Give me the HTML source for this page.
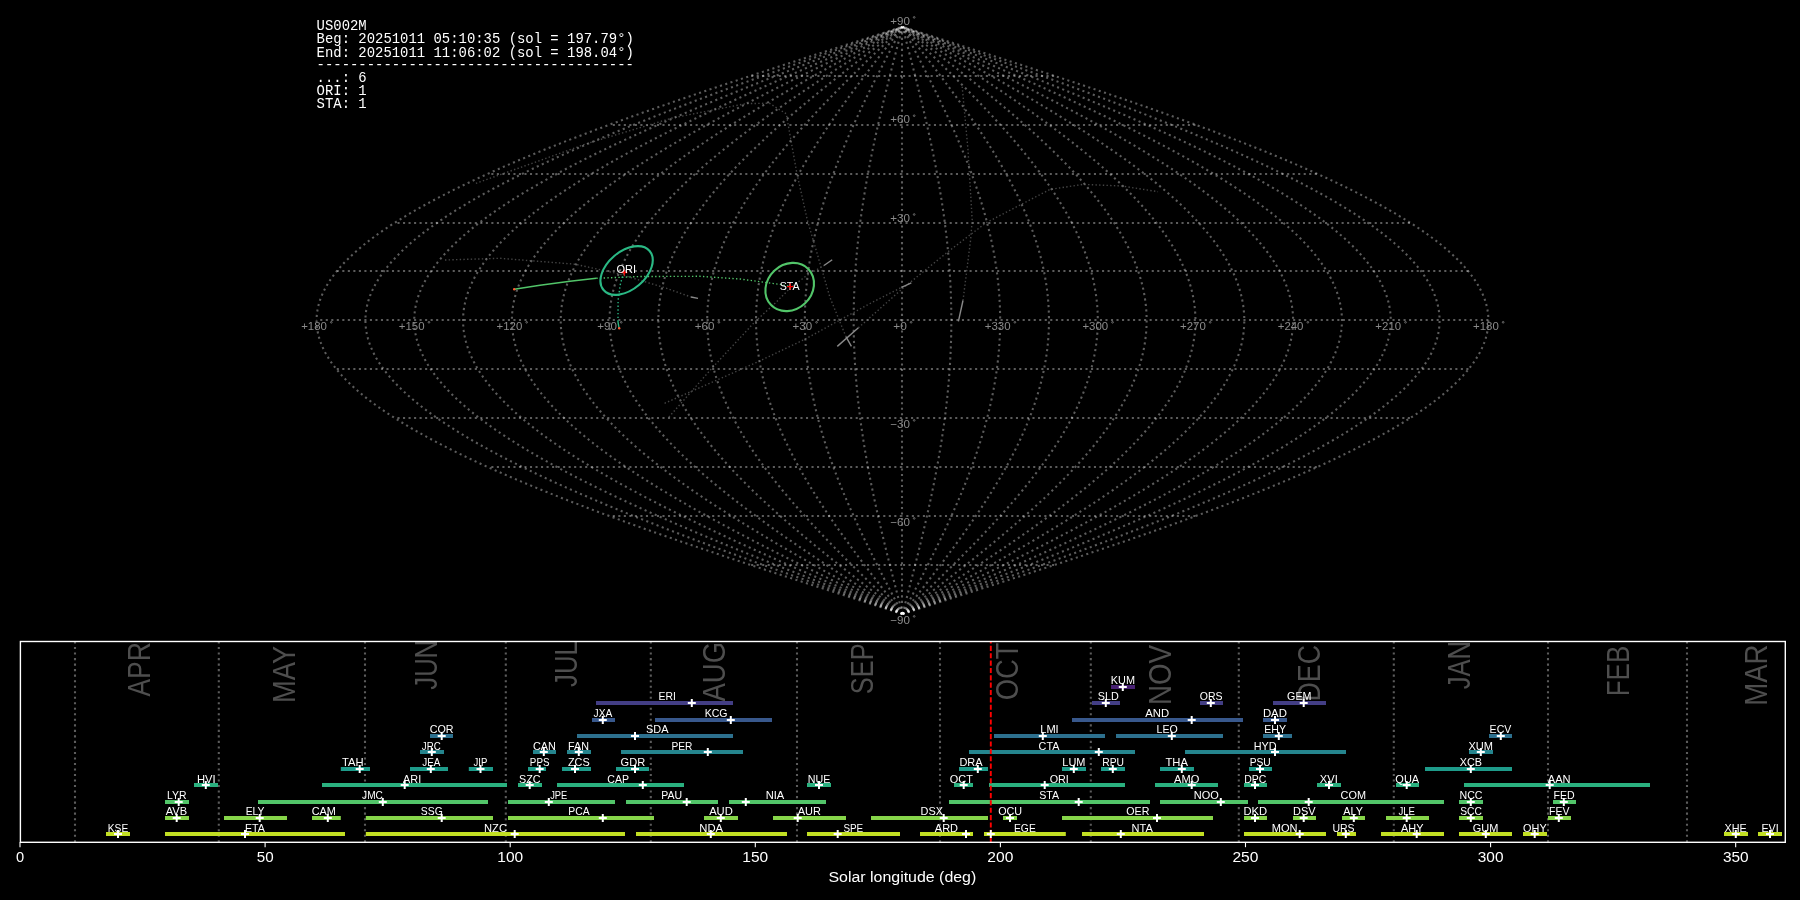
<!DOCTYPE html>
<html><head><meta charset="utf-8"><style>html,body{margin:0;padding:0;background:#000;overflow:hidden}svg{display:block;will-change:transform}</style></head>
<body><svg width="1800" height="900" viewBox="0 0 1800 900">
<rect width="1800" height="900" fill="#000"/>
<g fill="none" stroke="#ffffff" stroke-opacity="0.36" stroke-width="2.08" stroke-dasharray="2.08 3.44">
<g stroke-dashoffset="0">
<path d="M902.50 613.98 L907.61 612.35 L912.73 610.72 L917.84 609.09 L922.95 607.46 L928.06 605.83 L933.16 604.20 L938.27 602.56 L943.37 600.93 L948.47 599.30 L953.57 597.67 L958.66 596.04 L963.74 594.41 L968.83 592.78 L973.90 591.15 L978.98 589.52 L984.04 587.89 L989.10 586.25 L994.16 584.62 L999.20 582.99 L1004.24 581.36 L1009.27 579.73 L1014.30 578.10 L1019.31 576.47 L1024.32 574.84 L1029.31 573.21 L1034.30 571.58 L1039.28 569.94 L1044.24 568.31 L1049.20 566.68 L1054.14 565.05 L1059.08 563.42 L1064.00 561.79 L1068.91 560.16 L1073.80 558.53 L1078.69 556.90 L1083.56 555.27 L1088.41 553.63 L1093.25 552.00 L1098.08 550.37 L1102.89 548.74 L1107.69 547.11 L1112.47 545.48 L1117.24 543.85 L1121.98 542.22 L1126.72 540.59 L1131.43 538.96 L1136.13 537.32 L1140.81 535.69 L1145.47 534.06 L1150.12 532.43 L1154.74 530.80 L1159.34 529.17 L1163.93 527.54 L1168.50 525.91 L1173.04 524.28 L1177.57 522.65 L1182.07 521.01 L1186.55 519.38 L1191.01 517.75 L1195.45 516.12 L1199.87 514.49 L1204.26 512.86 L1208.64 511.23 L1212.98 509.60 L1217.31 507.97 L1221.61 506.34 L1225.88 504.70 L1230.14 503.07 L1234.36 501.44 L1238.56 499.81 L1242.74 498.18 L1246.89 496.55 L1251.01 494.92 L1255.11 493.29 L1259.18 491.66 L1263.22 490.03 L1267.24 488.39 L1271.22 486.76 L1275.18 485.13 L1279.11 483.50 L1283.02 481.87 L1286.89 480.24 L1290.73 478.61 L1294.55 476.98 L1298.33 475.35 L1302.09 473.71 L1305.81 472.08 L1309.51 470.45 L1313.17 468.82 L1316.80 467.19 L1320.40 465.56 L1323.97 463.93 L1327.50 462.30 L1331.01 460.67 L1334.48 459.04 L1337.91 457.40 L1341.32 455.77 L1344.69 454.14 L1348.03 452.51 L1351.33 450.88 L1354.60 449.25 L1357.84 447.62 L1361.04 445.99 L1364.20 444.36 L1367.33 442.73 L1370.43 441.09 L1373.49 439.46 L1376.51 437.83 L1379.50 436.20 L1382.45 434.57 L1385.36 432.94 L1388.24 431.31 L1391.08 429.68 L1393.88 428.05 L1396.65 426.42 L1399.38 424.78 L1402.07 423.15 L1404.72 421.52 L1407.33 419.89 L1409.91 418.26 L1412.45 416.63 L1414.95 415.00 L1417.41 413.37 L1419.83 411.74 L1422.21 410.11 L1424.55 408.47 L1426.85 406.84 L1429.11 405.21 L1431.33 403.58 L1433.51 401.95 L1435.65 400.32 L1437.75 398.69 L1439.81 397.06 L1441.83 395.43 L1443.81 393.80 L1445.74 392.16 L1447.64 390.53 L1449.49 388.90 L1451.30 387.27 L1453.07 385.64 L1454.80 384.01 L1456.49 382.38 L1458.13 380.75 L1459.73 379.12 L1461.29 377.49 L1462.81 375.85 L1464.28 374.22 L1465.71 372.59 L1467.10 370.96 L1468.44 369.33 L1469.74 367.70 L1471.00 366.07 L1472.22 364.44 L1473.39 362.81 L1474.52 361.18 L1475.60 359.54 L1476.64 357.91 L1477.64 356.28 L1478.60 354.65 L1479.51 353.02 L1480.37 351.39 L1481.19 349.76 L1481.97 348.13 L1482.71 346.50 L1483.39 344.87 L1484.04 343.23 L1484.64 341.60 L1485.20 339.97 L1485.71 338.34 L1486.18 336.71 L1486.60 335.08 L1486.98 333.45 L1487.31 331.82 L1487.60 330.19 L1487.85 328.56 L1488.05 326.92 L1488.21 325.29 L1488.32 323.66 L1488.38 322.03 L1488.41 320.40 L1488.38 318.77 L1488.32 317.14 L1488.21 315.51 L1488.05 313.88 L1487.85 312.24 L1487.60 310.61 L1487.31 308.98 L1486.98 307.35 L1486.60 305.72 L1486.18 304.09 L1485.71 302.46 L1485.20 300.83 L1484.64 299.20 L1484.04 297.57 L1483.39 295.93 L1482.71 294.30 L1481.97 292.67 L1481.19 291.04 L1480.37 289.41 L1479.51 287.78 L1478.60 286.15 L1477.64 284.52 L1476.64 282.89 L1475.60 281.26 L1474.52 279.62 L1473.39 277.99 L1472.22 276.36 L1471.00 274.73 L1469.74 273.10 L1468.44 271.47 L1467.10 269.84 L1465.71 268.21 L1464.28 266.58 L1462.81 264.95 L1461.29 263.31 L1459.73 261.68 L1458.13 260.05 L1456.49 258.42 L1454.80 256.79 L1453.07 255.16 L1451.30 253.53 L1449.49 251.90 L1447.64 250.27 L1445.74 248.64 L1443.81 247.00 L1441.83 245.37 L1439.81 243.74 L1437.75 242.11 L1435.65 240.48 L1433.51 238.85 L1431.33 237.22 L1429.11 235.59 L1426.85 233.96 L1424.55 232.33 L1422.21 230.69 L1419.83 229.06 L1417.41 227.43 L1414.95 225.80 L1412.45 224.17 L1409.91 222.54 L1407.33 220.91 L1404.72 219.28 L1402.07 217.65 L1399.38 216.02 L1396.65 214.38 L1393.88 212.75 L1391.08 211.12 L1388.24 209.49 L1385.36 207.86 L1382.45 206.23 L1379.50 204.60 L1376.51 202.97 L1373.49 201.34 L1370.43 199.71 L1367.33 198.07 L1364.20 196.44 L1361.04 194.81 L1357.84 193.18 L1354.60 191.55 L1351.33 189.92 L1348.03 188.29 L1344.69 186.66 L1341.32 185.03 L1337.91 183.40 L1334.48 181.76 L1331.01 180.13 L1327.50 178.50 L1323.97 176.87 L1320.40 175.24 L1316.80 173.61 L1313.17 171.98 L1309.51 170.35 L1305.81 168.72 L1302.09 167.09 L1298.33 165.45 L1294.55 163.82 L1290.73 162.19 L1286.89 160.56 L1283.02 158.93 L1279.11 157.30 L1275.18 155.67 L1271.22 154.04 L1267.24 152.41 L1263.22 150.77 L1259.18 149.14 L1255.11 147.51 L1251.01 145.88 L1246.89 144.25 L1242.74 142.62 L1238.56 140.99 L1234.36 139.36 L1230.14 137.73 L1225.88 136.10 L1221.61 134.46 L1217.31 132.83 L1212.98 131.20 L1208.64 129.57 L1204.26 127.94 L1199.87 126.31 L1195.45 124.68 L1191.01 123.05 L1186.55 121.42 L1182.07 119.79 L1177.57 118.15 L1173.04 116.52 L1168.50 114.89 L1163.93 113.26 L1159.34 111.63 L1154.74 110.00 L1150.12 108.37 L1145.47 106.74 L1140.81 105.11 L1136.13 103.48 L1131.43 101.84 L1126.72 100.21 L1121.98 98.58 L1117.24 96.95 L1112.47 95.32 L1107.69 93.69 L1102.89 92.06 L1098.08 90.43 L1093.25 88.80 L1088.41 87.17 L1083.56 85.53 L1078.69 83.90 L1073.80 82.27 L1068.91 80.64 L1064.00 79.01 L1059.08 77.38 L1054.14 75.75 L1049.20 74.12 L1044.24 72.49 L1039.28 70.86 L1034.30 69.22 L1029.31 67.59 L1024.32 65.96 L1019.31 64.33 L1014.30 62.70 L1009.27 61.07 L1004.24 59.44 L999.20 57.81 L994.16 56.18 L989.10 54.55 L984.04 52.91 L978.98 51.28 L973.90 49.65 L968.83 48.02 L963.74 46.39 L958.66 44.76 L953.57 43.13 L948.47 41.50 L943.37 39.87 L938.27 38.24 L933.16 36.60 L928.06 34.97 L922.95 33.34 L917.84 31.71 L912.73 30.08 L907.61 28.45 L902.50 26.82"/>
<path d="M902.50 613.98 L907.19 612.35 L911.87 610.72 L916.56 609.09 L921.24 607.46 L925.93 605.83 L930.61 604.20 L935.29 602.56 L939.96 600.93 L944.64 599.30 L949.31 597.67 L953.98 596.04 L958.64 594.41 L963.30 592.78 L967.95 591.15 L972.60 589.52 L977.25 587.89 L981.89 586.25 L986.52 584.62 L991.14 582.99 L995.76 581.36 L1000.38 579.73 L1004.98 578.10 L1009.58 576.47 L1014.17 574.84 L1018.75 573.21 L1023.32 571.58 L1027.88 569.94 L1032.43 568.31 L1036.97 566.68 L1041.51 565.05 L1046.03 563.42 L1050.54 561.79 L1055.04 560.16 L1059.53 558.53 L1064.00 556.90 L1068.47 555.27 L1072.92 553.63 L1077.36 552.00 L1081.78 550.37 L1086.19 548.74 L1090.59 547.11 L1094.97 545.48 L1099.34 543.85 L1103.69 542.22 L1108.03 540.59 L1112.35 538.96 L1116.66 537.32 L1120.95 535.69 L1125.22 534.06 L1129.48 532.43 L1133.72 530.80 L1137.94 529.17 L1142.14 527.54 L1146.33 525.91 L1150.50 524.28 L1154.64 522.65 L1158.77 521.01 L1162.88 519.38 L1166.97 517.75 L1171.04 516.12 L1175.09 514.49 L1179.12 512.86 L1183.12 511.23 L1187.11 509.60 L1191.07 507.97 L1195.02 506.34 L1198.94 504.70 L1202.83 503.07 L1206.71 501.44 L1210.56 499.81 L1214.38 498.18 L1218.19 496.55 L1221.97 494.92 L1225.72 493.29 L1229.45 491.66 L1233.16 490.03 L1236.84 488.39 L1240.50 486.76 L1244.13 485.13 L1247.73 483.50 L1251.31 481.87 L1254.86 480.24 L1258.38 478.61 L1261.88 476.98 L1265.35 475.35 L1268.79 473.71 L1272.20 472.08 L1275.59 470.45 L1278.95 468.82 L1282.27 467.19 L1285.57 465.56 L1288.84 463.93 L1292.09 462.30 L1295.30 460.67 L1298.48 459.04 L1301.63 457.40 L1304.75 455.77 L1307.84 454.14 L1310.90 452.51 L1313.93 450.88 L1316.93 449.25 L1319.89 447.62 L1322.82 445.99 L1325.73 444.36 L1328.60 442.73 L1331.43 441.09 L1334.24 439.46 L1337.01 437.83 L1339.75 436.20 L1342.45 434.57 L1345.12 432.94 L1347.76 431.31 L1350.36 429.68 L1352.93 428.05 L1355.47 426.42 L1357.97 424.78 L1360.44 423.15 L1362.87 421.52 L1365.27 419.89 L1367.63 418.26 L1369.95 416.63 L1372.24 415.00 L1374.50 413.37 L1376.71 411.74 L1378.90 410.11 L1381.04 408.47 L1383.15 406.84 L1385.23 405.21 L1387.26 403.58 L1389.26 401.95 L1391.22 400.32 L1393.15 398.69 L1395.04 397.06 L1396.89 395.43 L1398.70 393.80 L1400.47 392.16 L1402.21 390.53 L1403.91 388.90 L1405.57 387.27 L1407.19 385.64 L1408.78 384.01 L1410.32 382.38 L1411.83 380.75 L1413.29 379.12 L1414.72 377.49 L1416.11 375.85 L1417.46 374.22 L1418.78 372.59 L1420.05 370.96 L1421.28 369.33 L1422.47 367.70 L1423.63 366.07 L1424.74 364.44 L1425.82 362.81 L1426.85 361.18 L1427.84 359.54 L1428.80 357.91 L1429.71 356.28 L1430.59 354.65 L1431.42 353.02 L1432.22 351.39 L1432.97 349.76 L1433.68 348.13 L1434.35 346.50 L1434.99 344.87 L1435.58 343.23 L1436.13 341.60 L1436.64 339.97 L1437.11 338.34 L1437.54 336.71 L1437.93 335.08 L1438.27 333.45 L1438.58 331.82 L1438.85 330.19 L1439.07 328.56 L1439.25 326.92 L1439.40 325.29 L1439.50 323.66 L1439.56 322.03 L1439.58 320.40 L1439.56 318.77 L1439.50 317.14 L1439.40 315.51 L1439.25 313.88 L1439.07 312.24 L1438.85 310.61 L1438.58 308.98 L1438.27 307.35 L1437.93 305.72 L1437.54 304.09 L1437.11 302.46 L1436.64 300.83 L1436.13 299.20 L1435.58 297.57 L1434.99 295.93 L1434.35 294.30 L1433.68 292.67 L1432.97 291.04 L1432.22 289.41 L1431.42 287.78 L1430.59 286.15 L1429.71 284.52 L1428.80 282.89 L1427.84 281.26 L1426.85 279.62 L1425.82 277.99 L1424.74 276.36 L1423.63 274.73 L1422.47 273.10 L1421.28 271.47 L1420.05 269.84 L1418.78 268.21 L1417.46 266.58 L1416.11 264.95 L1414.72 263.31 L1413.29 261.68 L1411.83 260.05 L1410.32 258.42 L1408.78 256.79 L1407.19 255.16 L1405.57 253.53 L1403.91 251.90 L1402.21 250.27 L1400.47 248.64 L1398.70 247.00 L1396.89 245.37 L1395.04 243.74 L1393.15 242.11 L1391.22 240.48 L1389.26 238.85 L1387.26 237.22 L1385.23 235.59 L1383.15 233.96 L1381.04 232.33 L1378.90 230.69 L1376.71 229.06 L1374.50 227.43 L1372.24 225.80 L1369.95 224.17 L1367.63 222.54 L1365.27 220.91 L1362.87 219.28 L1360.44 217.65 L1357.97 216.02 L1355.47 214.38 L1352.93 212.75 L1350.36 211.12 L1347.76 209.49 L1345.12 207.86 L1342.45 206.23 L1339.75 204.60 L1337.01 202.97 L1334.24 201.34 L1331.43 199.71 L1328.60 198.07 L1325.73 196.44 L1322.82 194.81 L1319.89 193.18 L1316.93 191.55 L1313.93 189.92 L1310.90 188.29 L1307.84 186.66 L1304.75 185.03 L1301.63 183.40 L1298.48 181.76 L1295.30 180.13 L1292.09 178.50 L1288.84 176.87 L1285.57 175.24 L1282.27 173.61 L1278.95 171.98 L1275.59 170.35 L1272.20 168.72 L1268.79 167.09 L1265.35 165.45 L1261.88 163.82 L1258.38 162.19 L1254.86 160.56 L1251.31 158.93 L1247.73 157.30 L1244.13 155.67 L1240.50 154.04 L1236.84 152.41 L1233.16 150.77 L1229.45 149.14 L1225.72 147.51 L1221.97 145.88 L1218.19 144.25 L1214.38 142.62 L1210.56 140.99 L1206.71 139.36 L1202.83 137.73 L1198.94 136.10 L1195.02 134.46 L1191.07 132.83 L1187.11 131.20 L1183.12 129.57 L1179.12 127.94 L1175.09 126.31 L1171.04 124.68 L1166.97 123.05 L1162.88 121.42 L1158.77 119.79 L1154.64 118.15 L1150.50 116.52 L1146.33 114.89 L1142.14 113.26 L1137.94 111.63 L1133.72 110.00 L1129.48 108.37 L1125.22 106.74 L1120.95 105.11 L1116.66 103.48 L1112.35 101.84 L1108.03 100.21 L1103.69 98.58 L1099.34 96.95 L1094.97 95.32 L1090.59 93.69 L1086.19 92.06 L1081.78 90.43 L1077.36 88.80 L1072.92 87.17 L1068.47 85.53 L1064.00 83.90 L1059.53 82.27 L1055.04 80.64 L1050.54 79.01 L1046.03 77.38 L1041.51 75.75 L1036.97 74.12 L1032.43 72.49 L1027.88 70.86 L1023.32 69.22 L1018.75 67.59 L1014.17 65.96 L1009.58 64.33 L1004.98 62.70 L1000.38 61.07 L995.76 59.44 L991.14 57.81 L986.52 56.18 L981.89 54.55 L977.25 52.91 L972.60 51.28 L967.95 49.65 L963.30 48.02 L958.64 46.39 L953.98 44.76 L949.31 43.13 L944.64 41.50 L939.96 39.87 L935.29 38.24 L930.61 36.60 L925.93 34.97 L921.24 33.34 L916.56 31.71 L911.87 30.08 L907.19 28.45 L902.50 26.82"/>
<path d="M902.50 613.98 L906.76 612.35 L911.02 610.72 L915.28 609.09 L919.54 607.46 L923.80 605.83 L928.05 604.20 L932.31 602.56 L936.56 600.93 L940.81 599.30 L945.05 597.67 L949.30 596.04 L953.54 594.41 L957.77 592.78 L962.00 591.15 L966.23 589.52 L970.45 587.89 L974.67 586.25 L978.88 584.62 L983.09 582.99 L987.28 581.36 L991.48 579.73 L995.66 578.10 L999.84 576.47 L1004.01 574.84 L1008.18 573.21 L1012.33 571.58 L1016.48 569.94 L1020.62 568.31 L1024.75 566.68 L1028.87 565.05 L1032.98 563.42 L1037.08 561.79 L1041.17 560.16 L1045.25 558.53 L1049.32 556.90 L1053.38 555.27 L1057.43 553.63 L1061.46 552.00 L1065.48 550.37 L1069.49 548.74 L1073.49 547.11 L1077.48 545.48 L1081.45 543.85 L1085.40 542.22 L1089.35 540.59 L1093.28 538.96 L1097.19 537.32 L1101.09 535.69 L1104.98 534.06 L1108.85 532.43 L1112.70 530.80 L1116.54 529.17 L1120.36 527.54 L1124.16 525.91 L1127.95 524.28 L1131.72 522.65 L1135.48 521.01 L1139.21 519.38 L1142.93 517.75 L1146.63 516.12 L1150.31 514.49 L1153.97 512.86 L1157.61 511.23 L1161.24 509.60 L1164.84 507.97 L1168.42 506.34 L1171.99 504.70 L1175.53 503.07 L1179.05 501.44 L1182.55 499.81 L1186.03 498.18 L1189.49 496.55 L1192.93 494.92 L1196.34 493.29 L1199.73 491.66 L1203.10 490.03 L1206.45 488.39 L1209.77 486.76 L1213.07 485.13 L1216.34 483.50 L1219.60 481.87 L1222.82 480.24 L1226.03 478.61 L1229.21 476.98 L1232.36 475.35 L1235.49 473.71 L1238.59 472.08 L1241.67 470.45 L1244.72 468.82 L1247.75 467.19 L1250.75 465.56 L1253.72 463.93 L1256.67 462.30 L1259.59 460.67 L1262.48 459.04 L1265.34 457.40 L1268.18 455.77 L1270.99 454.14 L1273.77 452.51 L1276.53 450.88 L1279.25 449.25 L1281.95 447.62 L1284.61 445.99 L1287.25 444.36 L1289.86 442.73 L1292.44 441.09 L1294.99 439.46 L1297.51 437.83 L1300.00 436.20 L1302.46 434.57 L1304.88 432.94 L1307.28 431.31 L1309.65 429.68 L1311.99 428.05 L1314.29 426.42 L1316.56 424.78 L1318.81 423.15 L1321.02 421.52 L1323.20 419.89 L1325.34 418.26 L1327.46 416.63 L1329.54 415.00 L1331.59 413.37 L1333.60 411.74 L1335.59 410.11 L1337.54 408.47 L1339.46 406.84 L1341.34 405.21 L1343.19 403.58 L1345.01 401.95 L1346.79 400.32 L1348.54 398.69 L1350.26 397.06 L1351.94 395.43 L1353.59 393.80 L1355.20 392.16 L1356.78 390.53 L1358.33 388.90 L1359.84 387.27 L1361.31 385.64 L1362.75 384.01 L1364.15 382.38 L1365.52 380.75 L1366.86 379.12 L1368.16 377.49 L1369.42 375.85 L1370.65 374.22 L1371.84 372.59 L1373.00 370.96 L1374.12 369.33 L1375.20 367.70 L1376.25 366.07 L1377.27 364.44 L1378.24 362.81 L1379.18 361.18 L1380.09 359.54 L1380.95 357.91 L1381.79 356.28 L1382.58 354.65 L1383.34 353.02 L1384.06 351.39 L1384.74 349.76 L1385.39 348.13 L1386.00 346.50 L1386.58 344.87 L1387.12 343.23 L1387.62 341.60 L1388.08 339.97 L1388.51 338.34 L1388.90 336.71 L1389.25 335.08 L1389.57 333.45 L1389.85 331.82 L1390.09 330.19 L1390.29 328.56 L1390.46 326.92 L1390.59 325.29 L1390.68 323.66 L1390.74 322.03 L1390.76 320.40 L1390.74 318.77 L1390.68 317.14 L1390.59 315.51 L1390.46 313.88 L1390.29 312.24 L1390.09 310.61 L1389.85 308.98 L1389.57 307.35 L1389.25 305.72 L1388.90 304.09 L1388.51 302.46 L1388.08 300.83 L1387.62 299.20 L1387.12 297.57 L1386.58 295.93 L1386.00 294.30 L1385.39 292.67 L1384.74 291.04 L1384.06 289.41 L1383.34 287.78 L1382.58 286.15 L1381.79 284.52 L1380.95 282.89 L1380.09 281.26 L1379.18 279.62 L1378.24 277.99 L1377.27 276.36 L1376.25 274.73 L1375.20 273.10 L1374.12 271.47 L1373.00 269.84 L1371.84 268.21 L1370.65 266.58 L1369.42 264.95 L1368.16 263.31 L1366.86 261.68 L1365.52 260.05 L1364.15 258.42 L1362.75 256.79 L1361.31 255.16 L1359.84 253.53 L1358.33 251.90 L1356.78 250.27 L1355.20 248.64 L1353.59 247.00 L1351.94 245.37 L1350.26 243.74 L1348.54 242.11 L1346.79 240.48 L1345.01 238.85 L1343.19 237.22 L1341.34 235.59 L1339.46 233.96 L1337.54 232.33 L1335.59 230.69 L1333.60 229.06 L1331.59 227.43 L1329.54 225.80 L1327.46 224.17 L1325.34 222.54 L1323.20 220.91 L1321.02 219.28 L1318.81 217.65 L1316.56 216.02 L1314.29 214.38 L1311.99 212.75 L1309.65 211.12 L1307.28 209.49 L1304.88 207.86 L1302.46 206.23 L1300.00 204.60 L1297.51 202.97 L1294.99 201.34 L1292.44 199.71 L1289.86 198.07 L1287.25 196.44 L1284.61 194.81 L1281.95 193.18 L1279.25 191.55 L1276.53 189.92 L1273.77 188.29 L1270.99 186.66 L1268.18 185.03 L1265.34 183.40 L1262.48 181.76 L1259.59 180.13 L1256.67 178.50 L1253.72 176.87 L1250.75 175.24 L1247.75 173.61 L1244.72 171.98 L1241.67 170.35 L1238.59 168.72 L1235.49 167.09 L1232.36 165.45 L1229.21 163.82 L1226.03 162.19 L1222.82 160.56 L1219.60 158.93 L1216.34 157.30 L1213.07 155.67 L1209.77 154.04 L1206.45 152.41 L1203.10 150.77 L1199.73 149.14 L1196.34 147.51 L1192.93 145.88 L1189.49 144.25 L1186.03 142.62 L1182.55 140.99 L1179.05 139.36 L1175.53 137.73 L1171.99 136.10 L1168.42 134.46 L1164.84 132.83 L1161.24 131.20 L1157.61 129.57 L1153.97 127.94 L1150.31 126.31 L1146.63 124.68 L1142.93 123.05 L1139.21 121.42 L1135.48 119.79 L1131.72 118.15 L1127.95 116.52 L1124.16 114.89 L1120.36 113.26 L1116.54 111.63 L1112.70 110.00 L1108.85 108.37 L1104.98 106.74 L1101.09 105.11 L1097.19 103.48 L1093.28 101.84 L1089.35 100.21 L1085.40 98.58 L1081.45 96.95 L1077.48 95.32 L1073.49 93.69 L1069.49 92.06 L1065.48 90.43 L1061.46 88.80 L1057.43 87.17 L1053.38 85.53 L1049.32 83.90 L1045.25 82.27 L1041.17 80.64 L1037.08 79.01 L1032.98 77.38 L1028.87 75.75 L1024.75 74.12 L1020.62 72.49 L1016.48 70.86 L1012.33 69.22 L1008.18 67.59 L1004.01 65.96 L999.84 64.33 L995.66 62.70 L991.48 61.07 L987.28 59.44 L983.09 57.81 L978.88 56.18 L974.67 54.55 L970.45 52.91 L966.23 51.28 L962.00 49.65 L957.77 48.02 L953.54 46.39 L949.30 44.76 L945.05 43.13 L940.81 41.50 L936.56 39.87 L932.31 38.24 L928.05 36.60 L923.80 34.97 L919.54 33.34 L915.28 31.71 L911.02 30.08 L906.76 28.45 L902.50 26.82"/>
<path d="M902.50 613.98 L906.33 612.35 L910.17 610.72 L914.00 609.09 L917.84 607.46 L921.67 605.83 L925.50 604.20 L929.33 602.56 L933.15 600.93 L936.98 599.30 L940.80 597.67 L944.62 596.04 L948.43 594.41 L952.24 592.78 L956.05 591.15 L959.86 589.52 L963.66 587.89 L967.45 586.25 L971.24 584.62 L975.03 582.99 L978.81 581.36 L982.58 579.73 L986.35 578.10 L990.11 576.47 L993.86 574.84 L997.61 573.21 L1001.35 571.58 L1005.08 569.94 L1008.81 568.31 L1012.52 566.68 L1016.23 565.05 L1019.93 563.42 L1023.62 561.79 L1027.30 560.16 L1030.98 558.53 L1034.64 556.90 L1038.29 555.27 L1041.93 553.63 L1045.56 552.00 L1049.18 550.37 L1052.79 548.74 L1056.39 547.11 L1059.98 545.48 L1063.55 543.85 L1067.11 542.22 L1070.66 540.59 L1074.20 538.96 L1077.72 537.32 L1081.23 535.69 L1084.73 534.06 L1088.21 532.43 L1091.68 530.80 L1095.13 529.17 L1098.57 527.54 L1102.00 525.91 L1105.41 524.28 L1108.80 522.65 L1112.18 521.01 L1115.54 519.38 L1118.89 517.75 L1122.22 516.12 L1125.53 514.49 L1128.82 512.86 L1132.10 511.23 L1135.36 509.60 L1138.61 507.97 L1141.83 506.34 L1145.04 504.70 L1148.23 503.07 L1151.40 501.44 L1154.55 499.81 L1157.68 498.18 L1160.79 496.55 L1163.88 494.92 L1166.96 493.29 L1170.01 491.66 L1173.04 490.03 L1176.05 488.39 L1179.04 486.76 L1182.01 485.13 L1184.96 483.50 L1187.89 481.87 L1190.79 480.24 L1193.68 478.61 L1196.54 476.98 L1199.37 475.35 L1202.19 473.71 L1204.98 472.08 L1207.75 470.45 L1210.50 468.82 L1213.22 467.19 L1215.92 465.56 L1218.60 463.93 L1221.25 462.30 L1223.88 460.67 L1226.48 459.04 L1229.06 457.40 L1231.61 455.77 L1234.14 454.14 L1236.65 452.51 L1239.12 450.88 L1241.58 449.25 L1244.00 447.62 L1246.40 445.99 L1248.78 444.36 L1251.12 442.73 L1253.44 441.09 L1255.74 439.46 L1258.01 437.83 L1260.25 436.20 L1262.46 434.57 L1264.65 432.94 L1266.80 431.31 L1268.93 429.68 L1271.04 428.05 L1273.11 426.42 L1275.16 424.78 L1277.18 423.15 L1279.17 421.52 L1281.13 419.89 L1283.06 418.26 L1284.96 416.63 L1286.83 415.00 L1288.68 413.37 L1290.49 411.74 L1292.28 410.11 L1294.04 408.47 L1295.76 406.84 L1297.46 405.21 L1299.12 403.58 L1300.76 401.95 L1302.36 400.32 L1303.94 398.69 L1305.48 397.06 L1307.00 395.43 L1308.48 393.80 L1309.93 392.16 L1311.35 390.53 L1312.74 388.90 L1314.10 387.27 L1315.43 385.64 L1316.73 384.01 L1317.99 382.38 L1319.22 380.75 L1320.42 379.12 L1321.59 377.49 L1322.73 375.85 L1323.83 374.22 L1324.91 372.59 L1325.95 370.96 L1326.96 369.33 L1327.93 367.70 L1328.88 366.07 L1329.79 364.44 L1330.67 362.81 L1331.51 361.18 L1332.33 359.54 L1333.11 357.91 L1333.86 356.28 L1334.57 354.65 L1335.25 353.02 L1335.90 351.39 L1336.52 349.76 L1337.10 348.13 L1337.65 346.50 L1338.17 344.87 L1338.65 343.23 L1339.11 341.60 L1339.52 339.97 L1339.91 338.34 L1340.26 336.71 L1340.58 335.08 L1340.86 333.45 L1341.11 331.82 L1341.33 330.19 L1341.51 328.56 L1341.66 326.92 L1341.78 325.29 L1341.86 323.66 L1341.91 322.03 L1341.93 320.40 L1341.91 318.77 L1341.86 317.14 L1341.78 315.51 L1341.66 313.88 L1341.51 312.24 L1341.33 310.61 L1341.11 308.98 L1340.86 307.35 L1340.58 305.72 L1340.26 304.09 L1339.91 302.46 L1339.52 300.83 L1339.11 299.20 L1338.65 297.57 L1338.17 295.93 L1337.65 294.30 L1337.10 292.67 L1336.52 291.04 L1335.90 289.41 L1335.25 287.78 L1334.57 286.15 L1333.86 284.52 L1333.11 282.89 L1332.33 281.26 L1331.51 279.62 L1330.67 277.99 L1329.79 276.36 L1328.88 274.73 L1327.93 273.10 L1326.96 271.47 L1325.95 269.84 L1324.91 268.21 L1323.83 266.58 L1322.73 264.95 L1321.59 263.31 L1320.42 261.68 L1319.22 260.05 L1317.99 258.42 L1316.73 256.79 L1315.43 255.16 L1314.10 253.53 L1312.74 251.90 L1311.35 250.27 L1309.93 248.64 L1308.48 247.00 L1307.00 245.37 L1305.48 243.74 L1303.94 242.11 L1302.36 240.48 L1300.76 238.85 L1299.12 237.22 L1297.46 235.59 L1295.76 233.96 L1294.04 232.33 L1292.28 230.69 L1290.49 229.06 L1288.68 227.43 L1286.83 225.80 L1284.96 224.17 L1283.06 222.54 L1281.13 220.91 L1279.17 219.28 L1277.18 217.65 L1275.16 216.02 L1273.11 214.38 L1271.04 212.75 L1268.93 211.12 L1266.80 209.49 L1264.65 207.86 L1262.46 206.23 L1260.25 204.60 L1258.01 202.97 L1255.74 201.34 L1253.44 199.71 L1251.12 198.07 L1248.78 196.44 L1246.40 194.81 L1244.00 193.18 L1241.58 191.55 L1239.12 189.92 L1236.65 188.29 L1234.14 186.66 L1231.61 185.03 L1229.06 183.40 L1226.48 181.76 L1223.88 180.13 L1221.25 178.50 L1218.60 176.87 L1215.92 175.24 L1213.22 173.61 L1210.50 171.98 L1207.75 170.35 L1204.98 168.72 L1202.19 167.09 L1199.37 165.45 L1196.54 163.82 L1193.68 162.19 L1190.79 160.56 L1187.89 158.93 L1184.96 157.30 L1182.01 155.67 L1179.04 154.04 L1176.05 152.41 L1173.04 150.77 L1170.01 149.14 L1166.96 147.51 L1163.88 145.88 L1160.79 144.25 L1157.68 142.62 L1154.55 140.99 L1151.40 139.36 L1148.23 137.73 L1145.04 136.10 L1141.83 134.46 L1138.61 132.83 L1135.36 131.20 L1132.10 129.57 L1128.82 127.94 L1125.53 126.31 L1122.22 124.68 L1118.89 123.05 L1115.54 121.42 L1112.18 119.79 L1108.80 118.15 L1105.41 116.52 L1102.00 114.89 L1098.57 113.26 L1095.13 111.63 L1091.68 110.00 L1088.21 108.37 L1084.73 106.74 L1081.23 105.11 L1077.72 103.48 L1074.20 101.84 L1070.66 100.21 L1067.11 98.58 L1063.55 96.95 L1059.98 95.32 L1056.39 93.69 L1052.79 92.06 L1049.18 90.43 L1045.56 88.80 L1041.93 87.17 L1038.29 85.53 L1034.64 83.90 L1030.98 82.27 L1027.30 80.64 L1023.62 79.01 L1019.93 77.38 L1016.23 75.75 L1012.52 74.12 L1008.81 72.49 L1005.08 70.86 L1001.35 69.22 L997.61 67.59 L993.86 65.96 L990.11 64.33 L986.35 62.70 L982.58 61.07 L978.81 59.44 L975.03 57.81 L971.24 56.18 L967.45 54.55 L963.66 52.91 L959.86 51.28 L956.05 49.65 L952.24 48.02 L948.43 46.39 L944.62 44.76 L940.80 43.13 L936.98 41.50 L933.15 39.87 L929.33 38.24 L925.50 36.60 L921.67 34.97 L917.84 33.34 L914.00 31.71 L910.17 30.08 L906.33 28.45 L902.50 26.82"/>
<path d="M902.50 613.98 L905.91 612.35 L909.32 610.72 L912.72 609.09 L916.13 607.46 L919.54 605.83 L922.94 604.20 L926.35 602.56 L929.75 600.93 L933.15 599.30 L936.54 597.67 L939.94 596.04 L943.33 594.41 L946.72 592.78 L950.10 591.15 L953.48 589.52 L956.86 587.89 L960.24 586.25 L963.60 584.62 L966.97 582.99 L970.33 581.36 L973.68 579.73 L977.03 578.10 L980.37 576.47 L983.71 574.84 L987.04 573.21 L990.37 571.58 L993.68 569.94 L997.00 568.31 L1000.30 566.68 L1003.60 565.05 L1006.88 563.42 L1010.17 561.79 L1013.44 560.16 L1016.70 558.53 L1019.96 556.90 L1023.20 555.27 L1026.44 553.63 L1029.67 552.00 L1032.89 550.37 L1036.09 548.74 L1039.29 547.11 L1042.48 545.48 L1045.66 543.85 L1048.82 542.22 L1051.98 540.59 L1055.12 538.96 L1058.25 537.32 L1061.37 535.69 L1064.48 534.06 L1067.58 532.43 L1070.66 530.80 L1073.73 529.17 L1076.79 527.54 L1079.83 525.91 L1082.86 524.28 L1085.88 522.65 L1088.88 521.01 L1091.87 519.38 L1094.84 517.75 L1097.80 516.12 L1100.75 514.49 L1103.68 512.86 L1106.59 511.23 L1109.49 509.60 L1112.37 507.97 L1115.24 506.34 L1118.09 504.70 L1120.92 503.07 L1123.74 501.44 L1126.54 499.81 L1129.33 498.18 L1132.09 496.55 L1134.84 494.92 L1137.57 493.29 L1140.29 491.66 L1142.98 490.03 L1145.66 488.39 L1148.32 486.76 L1150.96 485.13 L1153.58 483.50 L1156.18 481.87 L1158.76 480.24 L1161.32 478.61 L1163.87 476.98 L1166.39 475.35 L1168.89 473.71 L1171.37 472.08 L1173.84 470.45 L1176.28 468.82 L1178.70 467.19 L1181.10 465.56 L1183.48 463.93 L1185.83 462.30 L1188.17 460.67 L1190.48 459.04 L1192.78 457.40 L1195.05 455.77 L1197.29 454.14 L1199.52 452.51 L1201.72 450.88 L1203.90 449.25 L1206.06 447.62 L1208.19 445.99 L1210.30 444.36 L1212.39 442.73 L1214.45 441.09 L1216.49 439.46 L1218.51 437.83 L1220.50 436.20 L1222.46 434.57 L1224.41 432.94 L1226.33 431.31 L1228.22 429.68 L1230.09 428.05 L1231.93 426.42 L1233.75 424.78 L1235.55 423.15 L1237.31 421.52 L1239.06 419.89 L1240.77 418.26 L1242.47 416.63 L1244.13 415.00 L1245.77 413.37 L1247.38 411.74 L1248.97 410.11 L1250.53 408.47 L1252.07 406.84 L1253.57 405.21 L1255.05 403.58 L1256.51 401.95 L1257.94 400.32 L1259.34 398.69 L1260.71 397.06 L1262.05 395.43 L1263.37 393.80 L1264.66 392.16 L1265.93 390.53 L1267.16 388.90 L1268.37 387.27 L1269.55 385.64 L1270.70 384.01 L1271.82 382.38 L1272.92 380.75 L1273.99 379.12 L1275.03 377.49 L1276.04 375.85 L1277.02 374.22 L1277.97 372.59 L1278.90 370.96 L1279.80 369.33 L1280.66 367.70 L1281.50 366.07 L1282.31 364.44 L1283.09 362.81 L1283.85 361.18 L1284.57 359.54 L1285.26 357.91 L1285.93 356.28 L1286.56 354.65 L1287.17 353.02 L1287.75 351.39 L1288.30 349.76 L1288.81 348.13 L1289.30 346.50 L1289.76 344.87 L1290.19 343.23 L1290.59 341.60 L1290.96 339.97 L1291.31 338.34 L1291.62 336.71 L1291.90 335.08 L1292.15 333.45 L1292.38 331.82 L1292.57 330.19 L1292.73 328.56 L1292.87 326.92 L1292.97 325.29 L1293.05 323.66 L1293.09 322.03 L1293.10 320.40 L1293.09 318.77 L1293.05 317.14 L1292.97 315.51 L1292.87 313.88 L1292.73 312.24 L1292.57 310.61 L1292.38 308.98 L1292.15 307.35 L1291.90 305.72 L1291.62 304.09 L1291.31 302.46 L1290.96 300.83 L1290.59 299.20 L1290.19 297.57 L1289.76 295.93 L1289.30 294.30 L1288.81 292.67 L1288.30 291.04 L1287.75 289.41 L1287.17 287.78 L1286.56 286.15 L1285.93 284.52 L1285.26 282.89 L1284.57 281.26 L1283.85 279.62 L1283.09 277.99 L1282.31 276.36 L1281.50 274.73 L1280.66 273.10 L1279.80 271.47 L1278.90 269.84 L1277.97 268.21 L1277.02 266.58 L1276.04 264.95 L1275.03 263.31 L1273.99 261.68 L1272.92 260.05 L1271.82 258.42 L1270.70 256.79 L1269.55 255.16 L1268.37 253.53 L1267.16 251.90 L1265.93 250.27 L1264.66 248.64 L1263.37 247.00 L1262.05 245.37 L1260.71 243.74 L1259.34 242.11 L1257.94 240.48 L1256.51 238.85 L1255.05 237.22 L1253.57 235.59 L1252.07 233.96 L1250.53 232.33 L1248.97 230.69 L1247.38 229.06 L1245.77 227.43 L1244.13 225.80 L1242.47 224.17 L1240.77 222.54 L1239.06 220.91 L1237.31 219.28 L1235.55 217.65 L1233.75 216.02 L1231.93 214.38 L1230.09 212.75 L1228.22 211.12 L1226.33 209.49 L1224.41 207.86 L1222.46 206.23 L1220.50 204.60 L1218.51 202.97 L1216.49 201.34 L1214.45 199.71 L1212.39 198.07 L1210.30 196.44 L1208.19 194.81 L1206.06 193.18 L1203.90 191.55 L1201.72 189.92 L1199.52 188.29 L1197.29 186.66 L1195.05 185.03 L1192.78 183.40 L1190.48 181.76 L1188.17 180.13 L1185.83 178.50 L1183.48 176.87 L1181.10 175.24 L1178.70 173.61 L1176.28 171.98 L1173.84 170.35 L1171.37 168.72 L1168.89 167.09 L1166.39 165.45 L1163.87 163.82 L1161.32 162.19 L1158.76 160.56 L1156.18 158.93 L1153.58 157.30 L1150.96 155.67 L1148.32 154.04 L1145.66 152.41 L1142.98 150.77 L1140.29 149.14 L1137.57 147.51 L1134.84 145.88 L1132.09 144.25 L1129.33 142.62 L1126.54 140.99 L1123.74 139.36 L1120.92 137.73 L1118.09 136.10 L1115.24 134.46 L1112.37 132.83 L1109.49 131.20 L1106.59 129.57 L1103.68 127.94 L1100.75 126.31 L1097.80 124.68 L1094.84 123.05 L1091.87 121.42 L1088.88 119.79 L1085.88 118.15 L1082.86 116.52 L1079.83 114.89 L1076.79 113.26 L1073.73 111.63 L1070.66 110.00 L1067.58 108.37 L1064.48 106.74 L1061.37 105.11 L1058.25 103.48 L1055.12 101.84 L1051.98 100.21 L1048.82 98.58 L1045.66 96.95 L1042.48 95.32 L1039.29 93.69 L1036.09 92.06 L1032.89 90.43 L1029.67 88.80 L1026.44 87.17 L1023.20 85.53 L1019.96 83.90 L1016.70 82.27 L1013.44 80.64 L1010.17 79.01 L1006.88 77.38 L1003.60 75.75 L1000.30 74.12 L997.00 72.49 L993.68 70.86 L990.37 69.22 L987.04 67.59 L983.71 65.96 L980.37 64.33 L977.03 62.70 L973.68 61.07 L970.33 59.44 L966.97 57.81 L963.60 56.18 L960.24 54.55 L956.86 52.91 L953.48 51.28 L950.10 49.65 L946.72 48.02 L943.33 46.39 L939.94 44.76 L936.54 43.13 L933.15 41.50 L929.75 39.87 L926.35 38.24 L922.94 36.60 L919.54 34.97 L916.13 33.34 L912.72 31.71 L909.32 30.08 L905.91 28.45 L902.50 26.82"/>
<path d="M902.50 613.98 L905.48 612.35 L908.46 610.72 L911.45 609.09 L914.43 607.46 L917.41 605.83 L920.39 604.20 L923.37 602.56 L926.34 600.93 L929.32 599.30 L932.29 597.67 L935.26 596.04 L938.23 594.41 L941.19 592.78 L944.15 591.15 L947.11 589.52 L950.07 587.89 L953.02 586.25 L955.97 584.62 L958.91 582.99 L961.85 581.36 L964.78 579.73 L967.71 578.10 L970.64 576.47 L973.56 574.84 L976.47 573.21 L979.38 571.58 L982.29 569.94 L985.18 568.31 L988.07 566.68 L990.96 565.05 L993.84 563.42 L996.71 561.79 L999.57 560.16 L1002.43 558.53 L1005.27 556.90 L1008.12 555.27 L1010.95 553.63 L1013.77 552.00 L1016.59 550.37 L1019.40 548.74 L1022.19 547.11 L1024.98 545.48 L1027.76 543.85 L1030.53 542.22 L1033.29 540.59 L1036.04 538.96 L1038.78 537.32 L1041.51 535.69 L1044.23 534.06 L1046.94 532.43 L1049.64 530.80 L1052.33 529.17 L1055.00 527.54 L1057.66 525.91 L1060.32 524.28 L1062.96 522.65 L1065.58 521.01 L1068.20 519.38 L1070.80 517.75 L1073.39 516.12 L1075.97 514.49 L1078.53 512.86 L1081.08 511.23 L1083.62 509.60 L1086.14 507.97 L1088.65 506.34 L1091.14 504.70 L1093.62 503.07 L1096.09 501.44 L1098.54 499.81 L1100.97 498.18 L1103.39 496.55 L1105.80 494.92 L1108.19 493.29 L1110.56 491.66 L1112.92 490.03 L1115.26 488.39 L1117.59 486.76 L1119.90 485.13 L1122.19 483.50 L1124.47 481.87 L1126.73 480.24 L1128.97 478.61 L1131.19 476.98 L1133.40 475.35 L1135.59 473.71 L1137.77 472.08 L1139.92 470.45 L1142.06 468.82 L1144.17 467.19 L1146.27 465.56 L1148.36 463.93 L1150.42 462.30 L1152.46 460.67 L1154.49 459.04 L1156.49 457.40 L1158.48 455.77 L1160.44 454.14 L1162.39 452.51 L1164.32 450.88 L1166.23 449.25 L1168.11 447.62 L1169.98 445.99 L1171.83 444.36 L1173.65 442.73 L1175.46 441.09 L1177.24 439.46 L1179.01 437.83 L1180.75 436.20 L1182.47 434.57 L1184.17 432.94 L1185.85 431.31 L1187.50 429.68 L1189.14 428.05 L1190.75 426.42 L1192.35 424.78 L1193.91 423.15 L1195.46 421.52 L1196.99 419.89 L1198.49 418.26 L1199.97 416.63 L1201.43 415.00 L1202.86 413.37 L1204.27 411.74 L1205.66 410.11 L1207.03 408.47 L1208.37 406.84 L1209.69 405.21 L1210.98 403.58 L1212.26 401.95 L1213.51 400.32 L1214.73 398.69 L1215.93 397.06 L1217.11 395.43 L1218.26 393.80 L1219.39 392.16 L1220.50 390.53 L1221.58 388.90 L1222.63 387.27 L1223.67 385.64 L1224.68 384.01 L1225.66 382.38 L1226.62 380.75 L1227.55 379.12 L1228.46 377.49 L1229.34 375.85 L1230.20 374.22 L1231.04 372.59 L1231.85 370.96 L1232.63 369.33 L1233.39 367.70 L1234.13 366.07 L1234.84 364.44 L1235.52 362.81 L1236.18 361.18 L1236.81 359.54 L1237.42 357.91 L1238.00 356.28 L1238.56 354.65 L1239.09 353.02 L1239.59 351.39 L1240.07 349.76 L1240.52 348.13 L1240.95 346.50 L1241.36 344.87 L1241.73 343.23 L1242.08 341.60 L1242.41 339.97 L1242.71 338.34 L1242.98 336.71 L1243.23 335.08 L1243.45 333.45 L1243.64 331.82 L1243.81 330.19 L1243.95 328.56 L1244.07 326.92 L1244.16 325.29 L1244.23 323.66 L1244.27 322.03 L1244.28 320.40 L1244.27 318.77 L1244.23 317.14 L1244.16 315.51 L1244.07 313.88 L1243.95 312.24 L1243.81 310.61 L1243.64 308.98 L1243.45 307.35 L1243.23 305.72 L1242.98 304.09 L1242.71 302.46 L1242.41 300.83 L1242.08 299.20 L1241.73 297.57 L1241.36 295.93 L1240.95 294.30 L1240.52 292.67 L1240.07 291.04 L1239.59 289.41 L1239.09 287.78 L1238.56 286.15 L1238.00 284.52 L1237.42 282.89 L1236.81 281.26 L1236.18 279.62 L1235.52 277.99 L1234.84 276.36 L1234.13 274.73 L1233.39 273.10 L1232.63 271.47 L1231.85 269.84 L1231.04 268.21 L1230.20 266.58 L1229.34 264.95 L1228.46 263.31 L1227.55 261.68 L1226.62 260.05 L1225.66 258.42 L1224.68 256.79 L1223.67 255.16 L1222.63 253.53 L1221.58 251.90 L1220.50 250.27 L1219.39 248.64 L1218.26 247.00 L1217.11 245.37 L1215.93 243.74 L1214.73 242.11 L1213.51 240.48 L1212.26 238.85 L1210.98 237.22 L1209.69 235.59 L1208.37 233.96 L1207.03 232.33 L1205.66 230.69 L1204.27 229.06 L1202.86 227.43 L1201.43 225.80 L1199.97 224.17 L1198.49 222.54 L1196.99 220.91 L1195.46 219.28 L1193.91 217.65 L1192.35 216.02 L1190.75 214.38 L1189.14 212.75 L1187.50 211.12 L1185.85 209.49 L1184.17 207.86 L1182.47 206.23 L1180.75 204.60 L1179.01 202.97 L1177.24 201.34 L1175.46 199.71 L1173.65 198.07 L1171.83 196.44 L1169.98 194.81 L1168.11 193.18 L1166.23 191.55 L1164.32 189.92 L1162.39 188.29 L1160.44 186.66 L1158.48 185.03 L1156.49 183.40 L1154.49 181.76 L1152.46 180.13 L1150.42 178.50 L1148.36 176.87 L1146.27 175.24 L1144.17 173.61 L1142.06 171.98 L1139.92 170.35 L1137.77 168.72 L1135.59 167.09 L1133.40 165.45 L1131.19 163.82 L1128.97 162.19 L1126.73 160.56 L1124.47 158.93 L1122.19 157.30 L1119.90 155.67 L1117.59 154.04 L1115.26 152.41 L1112.92 150.77 L1110.56 149.14 L1108.19 147.51 L1105.80 145.88 L1103.39 144.25 L1100.97 142.62 L1098.54 140.99 L1096.09 139.36 L1093.62 137.73 L1091.14 136.10 L1088.65 134.46 L1086.14 132.83 L1083.62 131.20 L1081.08 129.57 L1078.53 127.94 L1075.97 126.31 L1073.39 124.68 L1070.80 123.05 L1068.20 121.42 L1065.58 119.79 L1062.96 118.15 L1060.32 116.52 L1057.66 114.89 L1055.00 113.26 L1052.33 111.63 L1049.64 110.00 L1046.94 108.37 L1044.23 106.74 L1041.51 105.11 L1038.78 103.48 L1036.04 101.84 L1033.29 100.21 L1030.53 98.58 L1027.76 96.95 L1024.98 95.32 L1022.19 93.69 L1019.40 92.06 L1016.59 90.43 L1013.77 88.80 L1010.95 87.17 L1008.12 85.53 L1005.27 83.90 L1002.43 82.27 L999.57 80.64 L996.71 79.01 L993.84 77.38 L990.96 75.75 L988.07 74.12 L985.18 72.49 L982.29 70.86 L979.38 69.22 L976.47 67.59 L973.56 65.96 L970.64 64.33 L967.71 62.70 L964.78 61.07 L961.85 59.44 L958.91 57.81 L955.97 56.18 L953.02 54.55 L950.07 52.91 L947.11 51.28 L944.15 49.65 L941.19 48.02 L938.23 46.39 L935.26 44.76 L932.29 43.13 L929.32 41.50 L926.34 39.87 L923.37 38.24 L920.39 36.60 L917.41 34.97 L914.43 33.34 L911.45 31.71 L908.46 30.08 L905.48 28.45 L902.50 26.82"/>
<path d="M902.50 613.98 L905.06 612.35 L907.61 610.72 L910.17 609.09 L912.72 607.46 L915.28 605.83 L917.83 604.20 L920.38 602.56 L922.94 600.93 L925.48 599.30 L928.03 597.67 L930.58 596.04 L933.12 594.41 L935.66 592.78 L938.20 591.15 L940.74 589.52 L943.27 587.89 L945.80 586.25 L948.33 584.62 L950.85 582.99 L953.37 581.36 L955.89 579.73 L958.40 578.10 L960.91 576.47 L963.41 574.84 L965.91 573.21 L968.40 571.58 L970.89 569.94 L973.37 568.31 L975.85 566.68 L978.32 565.05 L980.79 563.42 L983.25 561.79 L985.70 560.16 L988.15 558.53 L990.59 556.90 L993.03 555.27 L995.46 553.63 L997.88 552.00 L1000.29 550.37 L1002.70 548.74 L1005.09 547.11 L1007.49 545.48 L1009.87 543.85 L1012.24 542.22 L1014.61 540.59 L1016.97 538.96 L1019.31 537.32 L1021.65 535.69 L1023.99 534.06 L1026.31 532.43 L1028.62 530.80 L1030.92 529.17 L1033.22 527.54 L1035.50 525.91 L1037.77 524.28 L1040.03 522.65 L1042.29 521.01 L1044.53 519.38 L1046.76 517.75 L1048.98 516.12 L1051.19 514.49 L1053.38 512.86 L1055.57 511.23 L1057.74 509.60 L1059.90 507.97 L1062.05 506.34 L1064.19 504.70 L1066.32 503.07 L1068.43 501.44 L1070.53 499.81 L1072.62 498.18 L1074.69 496.55 L1076.76 494.92 L1078.80 493.29 L1080.84 491.66 L1082.86 490.03 L1084.87 488.39 L1086.86 486.76 L1088.84 485.13 L1090.81 483.50 L1092.76 481.87 L1094.69 480.24 L1096.62 478.61 L1098.52 476.98 L1100.42 475.35 L1102.29 473.71 L1104.16 472.08 L1106.00 470.45 L1107.83 468.82 L1109.65 467.19 L1111.45 465.56 L1113.23 463.93 L1115.00 462.30 L1116.75 460.67 L1118.49 459.04 L1120.21 457.40 L1121.91 455.77 L1123.59 454.14 L1125.26 452.51 L1126.92 450.88 L1128.55 449.25 L1130.17 447.62 L1131.77 445.99 L1133.35 444.36 L1134.92 442.73 L1136.46 441.09 L1137.99 439.46 L1139.50 437.83 L1141.00 436.20 L1142.47 434.57 L1143.93 432.94 L1145.37 431.31 L1146.79 429.68 L1148.19 428.05 L1149.57 426.42 L1150.94 424.78 L1152.28 423.15 L1153.61 421.52 L1154.92 419.89 L1156.21 418.26 L1157.47 416.63 L1158.72 415.00 L1159.95 413.37 L1161.16 411.74 L1162.35 410.11 L1163.52 408.47 L1164.67 406.84 L1165.80 405.21 L1166.92 403.58 L1168.01 401.95 L1169.08 400.32 L1170.13 398.69 L1171.16 397.06 L1172.17 395.43 L1173.15 393.80 L1174.12 392.16 L1175.07 390.53 L1176.00 388.90 L1176.90 387.27 L1177.79 385.64 L1178.65 384.01 L1179.49 382.38 L1180.31 380.75 L1181.12 379.12 L1181.89 377.49 L1182.65 375.85 L1183.39 374.22 L1184.10 372.59 L1184.80 370.96 L1185.47 369.33 L1186.12 367.70 L1186.75 366.07 L1187.36 364.44 L1187.95 362.81 L1188.51 361.18 L1189.05 359.54 L1189.57 357.91 L1190.07 356.28 L1190.55 354.65 L1191.00 353.02 L1191.44 351.39 L1191.85 349.76 L1192.24 348.13 L1192.60 346.50 L1192.95 344.87 L1193.27 343.23 L1193.57 341.60 L1193.85 339.97 L1194.10 338.34 L1194.34 336.71 L1194.55 335.08 L1194.74 333.45 L1194.91 331.82 L1195.05 330.19 L1195.17 328.56 L1195.28 326.92 L1195.35 325.29 L1195.41 323.66 L1195.44 322.03 L1195.45 320.40 L1195.44 318.77 L1195.41 317.14 L1195.35 315.51 L1195.28 313.88 L1195.17 312.24 L1195.05 310.61 L1194.91 308.98 L1194.74 307.35 L1194.55 305.72 L1194.34 304.09 L1194.10 302.46 L1193.85 300.83 L1193.57 299.20 L1193.27 297.57 L1192.95 295.93 L1192.60 294.30 L1192.24 292.67 L1191.85 291.04 L1191.44 289.41 L1191.00 287.78 L1190.55 286.15 L1190.07 284.52 L1189.57 282.89 L1189.05 281.26 L1188.51 279.62 L1187.95 277.99 L1187.36 276.36 L1186.75 274.73 L1186.12 273.10 L1185.47 271.47 L1184.80 269.84 L1184.10 268.21 L1183.39 266.58 L1182.65 264.95 L1181.89 263.31 L1181.12 261.68 L1180.31 260.05 L1179.49 258.42 L1178.65 256.79 L1177.79 255.16 L1176.90 253.53 L1176.00 251.90 L1175.07 250.27 L1174.12 248.64 L1173.15 247.00 L1172.17 245.37 L1171.16 243.74 L1170.13 242.11 L1169.08 240.48 L1168.01 238.85 L1166.92 237.22 L1165.80 235.59 L1164.67 233.96 L1163.52 232.33 L1162.35 230.69 L1161.16 229.06 L1159.95 227.43 L1158.72 225.80 L1157.47 224.17 L1156.21 222.54 L1154.92 220.91 L1153.61 219.28 L1152.28 217.65 L1150.94 216.02 L1149.57 214.38 L1148.19 212.75 L1146.79 211.12 L1145.37 209.49 L1143.93 207.86 L1142.47 206.23 L1141.00 204.60 L1139.50 202.97 L1137.99 201.34 L1136.46 199.71 L1134.92 198.07 L1133.35 196.44 L1131.77 194.81 L1130.17 193.18 L1128.55 191.55 L1126.92 189.92 L1125.26 188.29 L1123.59 186.66 L1121.91 185.03 L1120.21 183.40 L1118.49 181.76 L1116.75 180.13 L1115.00 178.50 L1113.23 176.87 L1111.45 175.24 L1109.65 173.61 L1107.83 171.98 L1106.00 170.35 L1104.16 168.72 L1102.29 167.09 L1100.42 165.45 L1098.52 163.82 L1096.62 162.19 L1094.69 160.56 L1092.76 158.93 L1090.81 157.30 L1088.84 155.67 L1086.86 154.04 L1084.87 152.41 L1082.86 150.77 L1080.84 149.14 L1078.80 147.51 L1076.76 145.88 L1074.69 144.25 L1072.62 142.62 L1070.53 140.99 L1068.43 139.36 L1066.32 137.73 L1064.19 136.10 L1062.05 134.46 L1059.90 132.83 L1057.74 131.20 L1055.57 129.57 L1053.38 127.94 L1051.19 126.31 L1048.98 124.68 L1046.76 123.05 L1044.53 121.42 L1042.29 119.79 L1040.03 118.15 L1037.77 116.52 L1035.50 114.89 L1033.22 113.26 L1030.92 111.63 L1028.62 110.00 L1026.31 108.37 L1023.99 106.74 L1021.65 105.11 L1019.31 103.48 L1016.97 101.84 L1014.61 100.21 L1012.24 98.58 L1009.87 96.95 L1007.49 95.32 L1005.09 93.69 L1002.70 92.06 L1000.29 90.43 L997.88 88.80 L995.46 87.17 L993.03 85.53 L990.59 83.90 L988.15 82.27 L985.70 80.64 L983.25 79.01 L980.79 77.38 L978.32 75.75 L975.85 74.12 L973.37 72.49 L970.89 70.86 L968.40 69.22 L965.91 67.59 L963.41 65.96 L960.91 64.33 L958.40 62.70 L955.89 61.07 L953.37 59.44 L950.85 57.81 L948.33 56.18 L945.80 54.55 L943.27 52.91 L940.74 51.28 L938.20 49.65 L935.66 48.02 L933.12 46.39 L930.58 44.76 L928.03 43.13 L925.48 41.50 L922.94 39.87 L920.38 38.24 L917.83 36.60 L915.28 34.97 L912.72 33.34 L910.17 31.71 L907.61 30.08 L905.06 28.45 L902.50 26.82"/>
<path d="M902.50 613.98 L904.63 612.35 L906.76 610.72 L908.89 609.09 L911.02 607.46 L913.15 605.83 L915.28 604.20 L917.40 602.56 L919.53 600.93 L921.65 599.30 L923.78 597.67 L925.90 596.04 L928.02 594.41 L930.14 592.78 L932.25 591.15 L934.37 589.52 L936.48 587.89 L938.58 586.25 L940.69 584.62 L942.79 582.99 L944.89 581.36 L946.99 579.73 L949.08 578.10 L951.17 576.47 L953.26 574.84 L955.34 573.21 L957.42 571.58 L959.49 569.94 L961.56 568.31 L963.62 566.68 L965.68 565.05 L967.74 563.42 L969.79 561.79 L971.84 560.16 L973.88 558.53 L975.91 556.90 L977.94 555.27 L979.96 553.63 L981.98 552.00 L983.99 550.37 L986.00 548.74 L988.00 547.11 L989.99 545.48 L991.97 543.85 L993.95 542.22 L995.92 540.59 L997.89 538.96 L999.85 537.32 L1001.80 535.69 L1003.74 534.06 L1005.67 532.43 L1007.60 530.80 L1009.52 529.17 L1011.43 527.54 L1013.33 525.91 L1015.23 524.28 L1017.11 522.65 L1018.99 521.01 L1020.86 519.38 L1022.71 517.75 L1024.56 516.12 L1026.40 514.49 L1028.24 512.86 L1030.06 511.23 L1031.87 509.60 L1033.67 507.97 L1035.46 506.34 L1037.24 504.70 L1039.01 503.07 L1040.78 501.44 L1042.53 499.81 L1044.27 498.18 L1045.99 496.55 L1047.71 494.92 L1049.42 493.29 L1051.12 491.66 L1052.80 490.03 L1054.47 488.39 L1056.13 486.76 L1057.78 485.13 L1059.42 483.50 L1061.05 481.87 L1062.66 480.24 L1064.26 478.61 L1065.85 476.98 L1067.43 475.35 L1068.99 473.71 L1070.55 472.08 L1072.09 470.45 L1073.61 468.82 L1075.12 467.19 L1076.62 465.56 L1078.11 463.93 L1079.58 462.30 L1081.04 460.67 L1082.49 459.04 L1083.92 457.40 L1085.34 455.77 L1086.75 454.14 L1088.14 452.51 L1089.51 450.88 L1090.88 449.25 L1092.22 447.62 L1093.56 445.99 L1094.88 444.36 L1096.18 442.73 L1097.47 441.09 L1098.74 439.46 L1100.00 437.83 L1101.25 436.20 L1102.48 434.57 L1103.69 432.94 L1104.89 431.31 L1106.07 429.68 L1107.24 428.05 L1108.40 426.42 L1109.53 424.78 L1110.65 423.15 L1111.76 421.52 L1112.85 419.89 L1113.92 418.26 L1114.98 416.63 L1116.02 415.00 L1117.04 413.37 L1118.05 411.74 L1119.04 410.11 L1120.02 408.47 L1120.98 406.84 L1121.92 405.21 L1122.85 403.58 L1123.76 401.95 L1124.65 400.32 L1125.52 398.69 L1126.38 397.06 L1127.22 395.43 L1128.04 393.80 L1128.85 392.16 L1129.64 390.53 L1130.41 388.90 L1131.17 387.27 L1131.91 385.64 L1132.63 384.01 L1133.33 382.38 L1134.01 380.75 L1134.68 379.12 L1135.33 377.49 L1135.96 375.85 L1136.57 374.22 L1137.17 372.59 L1137.75 370.96 L1138.31 369.33 L1138.85 367.70 L1139.38 366.07 L1139.88 364.44 L1140.37 362.81 L1140.84 361.18 L1141.29 359.54 L1141.73 357.91 L1142.14 356.28 L1142.54 354.65 L1142.92 353.02 L1143.28 351.39 L1143.62 349.76 L1143.95 348.13 L1144.25 346.50 L1144.54 344.87 L1144.81 343.23 L1145.06 341.60 L1145.29 339.97 L1145.50 338.34 L1145.70 336.71 L1145.88 335.08 L1146.03 333.45 L1146.17 331.82 L1146.29 330.19 L1146.40 328.56 L1146.48 326.92 L1146.54 325.29 L1146.59 323.66 L1146.62 322.03 L1146.63 320.40 L1146.62 318.77 L1146.59 317.14 L1146.54 315.51 L1146.48 313.88 L1146.40 312.24 L1146.29 310.61 L1146.17 308.98 L1146.03 307.35 L1145.88 305.72 L1145.70 304.09 L1145.50 302.46 L1145.29 300.83 L1145.06 299.20 L1144.81 297.57 L1144.54 295.93 L1144.25 294.30 L1143.95 292.67 L1143.62 291.04 L1143.28 289.41 L1142.92 287.78 L1142.54 286.15 L1142.14 284.52 L1141.73 282.89 L1141.29 281.26 L1140.84 279.62 L1140.37 277.99 L1139.88 276.36 L1139.38 274.73 L1138.85 273.10 L1138.31 271.47 L1137.75 269.84 L1137.17 268.21 L1136.57 266.58 L1135.96 264.95 L1135.33 263.31 L1134.68 261.68 L1134.01 260.05 L1133.33 258.42 L1132.63 256.79 L1131.91 255.16 L1131.17 253.53 L1130.41 251.90 L1129.64 250.27 L1128.85 248.64 L1128.04 247.00 L1127.22 245.37 L1126.38 243.74 L1125.52 242.11 L1124.65 240.48 L1123.76 238.85 L1122.85 237.22 L1121.92 235.59 L1120.98 233.96 L1120.02 232.33 L1119.04 230.69 L1118.05 229.06 L1117.04 227.43 L1116.02 225.80 L1114.98 224.17 L1113.92 222.54 L1112.85 220.91 L1111.76 219.28 L1110.65 217.65 L1109.53 216.02 L1108.40 214.38 L1107.24 212.75 L1106.07 211.12 L1104.89 209.49 L1103.69 207.86 L1102.48 206.23 L1101.25 204.60 L1100.00 202.97 L1098.74 201.34 L1097.47 199.71 L1096.18 198.07 L1094.88 196.44 L1093.56 194.81 L1092.22 193.18 L1090.88 191.55 L1089.51 189.92 L1088.14 188.29 L1086.75 186.66 L1085.34 185.03 L1083.92 183.40 L1082.49 181.76 L1081.04 180.13 L1079.58 178.50 L1078.11 176.87 L1076.62 175.24 L1075.12 173.61 L1073.61 171.98 L1072.09 170.35 L1070.55 168.72 L1068.99 167.09 L1067.43 165.45 L1065.85 163.82 L1064.26 162.19 L1062.66 160.56 L1061.05 158.93 L1059.42 157.30 L1057.78 155.67 L1056.13 154.04 L1054.47 152.41 L1052.80 150.77 L1051.12 149.14 L1049.42 147.51 L1047.71 145.88 L1045.99 144.25 L1044.27 142.62 L1042.53 140.99 L1040.78 139.36 L1039.01 137.73 L1037.24 136.10 L1035.46 134.46 L1033.67 132.83 L1031.87 131.20 L1030.06 129.57 L1028.24 127.94 L1026.40 126.31 L1024.56 124.68 L1022.71 123.05 L1020.86 121.42 L1018.99 119.79 L1017.11 118.15 L1015.23 116.52 L1013.33 114.89 L1011.43 113.26 L1009.52 111.63 L1007.60 110.00 L1005.67 108.37 L1003.74 106.74 L1001.80 105.11 L999.85 103.48 L997.89 101.84 L995.92 100.21 L993.95 98.58 L991.97 96.95 L989.99 95.32 L988.00 93.69 L986.00 92.06 L983.99 90.43 L981.98 88.80 L979.96 87.17 L977.94 85.53 L975.91 83.90 L973.88 82.27 L971.84 80.64 L969.79 79.01 L967.74 77.38 L965.68 75.75 L963.62 74.12 L961.56 72.49 L959.49 70.86 L957.42 69.22 L955.34 67.59 L953.26 65.96 L951.17 64.33 L949.08 62.70 L946.99 61.07 L944.89 59.44 L942.79 57.81 L940.69 56.18 L938.58 54.55 L936.48 52.91 L934.37 51.28 L932.25 49.65 L930.14 48.02 L928.02 46.39 L925.90 44.76 L923.78 43.13 L921.65 41.50 L919.53 39.87 L917.40 38.24 L915.28 36.60 L913.15 34.97 L911.02 33.34 L908.89 31.71 L906.76 30.08 L904.63 28.45 L902.50 26.82"/>
<path d="M902.50 613.98 L904.20 612.35 L905.91 610.72 L907.61 609.09 L909.32 607.46 L911.02 605.83 L912.72 604.20 L914.42 602.56 L916.12 600.93 L917.82 599.30 L919.52 597.67 L921.22 596.04 L922.91 594.41 L924.61 592.78 L926.30 591.15 L927.99 589.52 L929.68 587.89 L931.37 586.25 L933.05 584.62 L934.73 582.99 L936.41 581.36 L938.09 579.73 L939.77 578.10 L941.44 576.47 L943.11 574.84 L944.77 573.21 L946.43 571.58 L948.09 569.94 L949.75 568.31 L951.40 566.68 L953.05 565.05 L954.69 563.42 L956.33 561.79 L957.97 560.16 L959.60 558.53 L961.23 556.90 L962.85 555.27 L964.47 553.63 L966.08 552.00 L967.69 550.37 L969.30 548.74 L970.90 547.11 L972.49 545.48 L974.08 543.85 L975.66 542.22 L977.24 540.59 L978.81 538.96 L980.38 537.32 L981.94 535.69 L983.49 534.06 L985.04 532.43 L986.58 530.80 L988.11 529.17 L989.64 527.54 L991.17 525.91 L992.68 524.28 L994.19 522.65 L995.69 521.01 L997.18 519.38 L998.67 517.75 L1000.15 516.12 L1001.62 514.49 L1003.09 512.86 L1004.55 511.23 L1005.99 509.60 L1007.44 507.97 L1008.87 506.34 L1010.29 504.70 L1011.71 503.07 L1013.12 501.44 L1014.52 499.81 L1015.91 498.18 L1017.30 496.55 L1018.67 494.92 L1020.04 493.29 L1021.39 491.66 L1022.74 490.03 L1024.08 488.39 L1025.41 486.76 L1026.73 485.13 L1028.04 483.50 L1029.34 481.87 L1030.63 480.24 L1031.91 478.61 L1033.18 476.98 L1034.44 475.35 L1035.70 473.71 L1036.94 472.08 L1038.17 470.45 L1039.39 468.82 L1040.60 467.19 L1041.80 465.56 L1042.99 463.93 L1044.17 462.30 L1045.34 460.67 L1046.49 459.04 L1047.64 457.40 L1048.77 455.77 L1049.90 454.14 L1051.01 452.51 L1052.11 450.88 L1053.20 449.25 L1054.28 447.62 L1055.35 445.99 L1056.40 444.36 L1057.44 442.73 L1058.48 441.09 L1059.50 439.46 L1060.50 437.83 L1061.50 436.20 L1062.48 434.57 L1063.45 432.94 L1064.41 431.31 L1065.36 429.68 L1066.29 428.05 L1067.22 426.42 L1068.13 424.78 L1069.02 423.15 L1069.91 421.52 L1070.78 419.89 L1071.64 418.26 L1072.48 416.63 L1073.32 415.00 L1074.14 413.37 L1074.94 411.74 L1075.74 410.11 L1076.52 408.47 L1077.28 406.84 L1078.04 405.21 L1078.78 403.58 L1079.50 401.95 L1080.22 400.32 L1080.92 398.69 L1081.60 397.06 L1082.28 395.43 L1082.94 393.80 L1083.58 392.16 L1084.21 390.53 L1084.83 388.90 L1085.43 387.27 L1086.02 385.64 L1086.60 384.01 L1087.16 382.38 L1087.71 380.75 L1088.24 379.12 L1088.76 377.49 L1089.27 375.85 L1089.76 374.22 L1090.24 372.59 L1090.70 370.96 L1091.15 369.33 L1091.58 367.70 L1092.00 366.07 L1092.41 364.44 L1092.80 362.81 L1093.17 361.18 L1093.53 359.54 L1093.88 357.91 L1094.21 356.28 L1094.53 354.65 L1094.84 353.02 L1095.12 351.39 L1095.40 349.76 L1095.66 348.13 L1095.90 346.50 L1096.13 344.87 L1096.35 343.23 L1096.55 341.60 L1096.73 339.97 L1096.90 338.34 L1097.06 336.71 L1097.20 335.08 L1097.33 333.45 L1097.44 331.82 L1097.53 330.19 L1097.62 328.56 L1097.68 326.92 L1097.74 325.29 L1097.77 323.66 L1097.79 322.03 L1097.80 320.40 L1097.79 318.77 L1097.77 317.14 L1097.74 315.51 L1097.68 313.88 L1097.62 312.24 L1097.53 310.61 L1097.44 308.98 L1097.33 307.35 L1097.20 305.72 L1097.06 304.09 L1096.90 302.46 L1096.73 300.83 L1096.55 299.20 L1096.35 297.57 L1096.13 295.93 L1095.90 294.30 L1095.66 292.67 L1095.40 291.04 L1095.12 289.41 L1094.84 287.78 L1094.53 286.15 L1094.21 284.52 L1093.88 282.89 L1093.53 281.26 L1093.17 279.62 L1092.80 277.99 L1092.41 276.36 L1092.00 274.73 L1091.58 273.10 L1091.15 271.47 L1090.70 269.84 L1090.24 268.21 L1089.76 266.58 L1089.27 264.95 L1088.76 263.31 L1088.24 261.68 L1087.71 260.05 L1087.16 258.42 L1086.60 256.79 L1086.02 255.16 L1085.43 253.53 L1084.83 251.90 L1084.21 250.27 L1083.58 248.64 L1082.94 247.00 L1082.28 245.37 L1081.60 243.74 L1080.92 242.11 L1080.22 240.48 L1079.50 238.85 L1078.78 237.22 L1078.04 235.59 L1077.28 233.96 L1076.52 232.33 L1075.74 230.69 L1074.94 229.06 L1074.14 227.43 L1073.32 225.80 L1072.48 224.17 L1071.64 222.54 L1070.78 220.91 L1069.91 219.28 L1069.02 217.65 L1068.13 216.02 L1067.22 214.38 L1066.29 212.75 L1065.36 211.12 L1064.41 209.49 L1063.45 207.86 L1062.48 206.23 L1061.50 204.60 L1060.50 202.97 L1059.50 201.34 L1058.48 199.71 L1057.44 198.07 L1056.40 196.44 L1055.35 194.81 L1054.28 193.18 L1053.20 191.55 L1052.11 189.92 L1051.01 188.29 L1049.90 186.66 L1048.77 185.03 L1047.64 183.40 L1046.49 181.76 L1045.34 180.13 L1044.17 178.50 L1042.99 176.87 L1041.80 175.24 L1040.60 173.61 L1039.39 171.98 L1038.17 170.35 L1036.94 168.72 L1035.70 167.09 L1034.44 165.45 L1033.18 163.82 L1031.91 162.19 L1030.63 160.56 L1029.34 158.93 L1028.04 157.30 L1026.73 155.67 L1025.41 154.04 L1024.08 152.41 L1022.74 150.77 L1021.39 149.14 L1020.04 147.51 L1018.67 145.88 L1017.30 144.25 L1015.91 142.62 L1014.52 140.99 L1013.12 139.36 L1011.71 137.73 L1010.29 136.10 L1008.87 134.46 L1007.44 132.83 L1005.99 131.20 L1004.55 129.57 L1003.09 127.94 L1001.62 126.31 L1000.15 124.68 L998.67 123.05 L997.18 121.42 L995.69 119.79 L994.19 118.15 L992.68 116.52 L991.17 114.89 L989.64 113.26 L988.11 111.63 L986.58 110.00 L985.04 108.37 L983.49 106.74 L981.94 105.11 L980.38 103.48 L978.81 101.84 L977.24 100.21 L975.66 98.58 L974.08 96.95 L972.49 95.32 L970.90 93.69 L969.30 92.06 L967.69 90.43 L966.08 88.80 L964.47 87.17 L962.85 85.53 L961.23 83.90 L959.60 82.27 L957.97 80.64 L956.33 79.01 L954.69 77.38 L953.05 75.75 L951.40 74.12 L949.75 72.49 L948.09 70.86 L946.43 69.22 L944.77 67.59 L943.11 65.96 L941.44 64.33 L939.77 62.70 L938.09 61.07 L936.41 59.44 L934.73 57.81 L933.05 56.18 L931.37 54.55 L929.68 52.91 L927.99 51.28 L926.30 49.65 L924.61 48.02 L922.91 46.39 L921.22 44.76 L919.52 43.13 L917.82 41.50 L916.12 39.87 L914.42 38.24 L912.72 36.60 L911.02 34.97 L909.32 33.34 L907.61 31.71 L905.91 30.08 L904.20 28.45 L902.50 26.82"/>
<path d="M902.50 613.98 L903.78 612.35 L905.06 610.72 L906.33 609.09 L907.61 607.46 L908.89 605.83 L910.17 604.20 L911.44 602.56 L912.72 600.93 L913.99 599.30 L915.27 597.67 L916.54 596.04 L917.81 594.41 L919.08 592.78 L920.35 591.15 L921.62 589.52 L922.89 587.89 L924.15 586.25 L925.41 584.62 L926.68 582.99 L927.94 581.36 L929.19 579.73 L930.45 578.10 L931.70 576.47 L932.95 574.84 L934.20 573.21 L935.45 571.58 L936.69 569.94 L937.94 568.31 L939.17 566.68 L940.41 565.05 L941.64 563.42 L942.87 561.79 L944.10 560.16 L945.33 558.53 L946.55 556.90 L947.76 555.27 L948.98 553.63 L950.19 552.00 L951.39 550.37 L952.60 548.74 L953.80 547.11 L954.99 545.48 L956.18 543.85 L957.37 542.22 L958.55 540.59 L959.73 538.96 L960.91 537.32 L962.08 535.69 L963.24 534.06 L964.40 532.43 L965.56 530.80 L966.71 529.17 L967.86 527.54 L969.00 525.91 L970.14 524.28 L971.27 522.65 L972.39 521.01 L973.51 519.38 L974.63 517.75 L975.74 516.12 L976.84 514.49 L977.94 512.86 L979.03 511.23 L980.12 509.60 L981.20 507.97 L982.28 506.34 L983.35 504.70 L984.41 503.07 L985.47 501.44 L986.52 499.81 L987.56 498.18 L988.60 496.55 L989.63 494.92 L990.65 493.29 L991.67 491.66 L992.68 490.03 L993.68 488.39 L994.68 486.76 L995.67 485.13 L996.65 483.50 L997.63 481.87 L998.60 480.24 L999.56 478.61 L1000.51 476.98 L1001.46 475.35 L1002.40 473.71 L1003.33 472.08 L1004.25 470.45 L1005.17 468.82 L1006.07 467.19 L1006.97 465.56 L1007.87 463.93 L1008.75 462.30 L1009.63 460.67 L1010.49 459.04 L1011.35 457.40 L1012.20 455.77 L1013.05 454.14 L1013.88 452.51 L1014.71 450.88 L1015.53 449.25 L1016.33 447.62 L1017.13 445.99 L1017.93 444.36 L1018.71 442.73 L1019.48 441.09 L1020.25 439.46 L1021.00 437.83 L1021.75 436.20 L1022.49 434.57 L1023.22 432.94 L1023.93 431.31 L1024.64 429.68 L1025.35 428.05 L1026.04 426.42 L1026.72 424.78 L1027.39 423.15 L1028.06 421.52 L1028.71 419.89 L1029.35 418.26 L1029.99 416.63 L1030.61 415.00 L1031.23 413.37 L1031.83 411.74 L1032.43 410.11 L1033.01 408.47 L1033.59 406.84 L1034.15 405.21 L1034.71 403.58 L1035.25 401.95 L1035.79 400.32 L1036.31 398.69 L1036.83 397.06 L1037.33 395.43 L1037.83 393.80 L1038.31 392.16 L1038.78 390.53 L1039.25 388.90 L1039.70 387.27 L1040.14 385.64 L1040.58 384.01 L1041.00 382.38 L1041.41 380.75 L1041.81 379.12 L1042.20 377.49 L1042.58 375.85 L1042.94 374.22 L1043.30 372.59 L1043.65 370.96 L1043.99 369.33 L1044.31 367.70 L1044.63 366.07 L1044.93 364.44 L1045.22 362.81 L1045.50 361.18 L1045.78 359.54 L1046.04 357.91 L1046.29 356.28 L1046.52 354.65 L1046.75 353.02 L1046.97 351.39 L1047.17 349.76 L1047.37 348.13 L1047.55 346.50 L1047.72 344.87 L1047.88 343.23 L1048.04 341.60 L1048.17 339.97 L1048.30 338.34 L1048.42 336.71 L1048.53 335.08 L1048.62 333.45 L1048.70 331.82 L1048.78 330.19 L1048.84 328.56 L1048.89 326.92 L1048.93 325.29 L1048.95 323.66 L1048.97 322.03 L1048.98 320.40 L1048.97 318.77 L1048.95 317.14 L1048.93 315.51 L1048.89 313.88 L1048.84 312.24 L1048.78 310.61 L1048.70 308.98 L1048.62 307.35 L1048.53 305.72 L1048.42 304.09 L1048.30 302.46 L1048.17 300.83 L1048.04 299.20 L1047.88 297.57 L1047.72 295.93 L1047.55 294.30 L1047.37 292.67 L1047.17 291.04 L1046.97 289.41 L1046.75 287.78 L1046.52 286.15 L1046.29 284.52 L1046.04 282.89 L1045.78 281.26 L1045.50 279.62 L1045.22 277.99 L1044.93 276.36 L1044.63 274.73 L1044.31 273.10 L1043.99 271.47 L1043.65 269.84 L1043.30 268.21 L1042.94 266.58 L1042.58 264.95 L1042.20 263.31 L1041.81 261.68 L1041.41 260.05 L1041.00 258.42 L1040.58 256.79 L1040.14 255.16 L1039.70 253.53 L1039.25 251.90 L1038.78 250.27 L1038.31 248.64 L1037.83 247.00 L1037.33 245.37 L1036.83 243.74 L1036.31 242.11 L1035.79 240.48 L1035.25 238.85 L1034.71 237.22 L1034.15 235.59 L1033.59 233.96 L1033.01 232.33 L1032.43 230.69 L1031.83 229.06 L1031.23 227.43 L1030.61 225.80 L1029.99 224.17 L1029.35 222.54 L1028.71 220.91 L1028.06 219.28 L1027.39 217.65 L1026.72 216.02 L1026.04 214.38 L1025.35 212.75 L1024.64 211.12 L1023.93 209.49 L1023.22 207.86 L1022.49 206.23 L1021.75 204.60 L1021.00 202.97 L1020.25 201.34 L1019.48 199.71 L1018.71 198.07 L1017.93 196.44 L1017.13 194.81 L1016.33 193.18 L1015.53 191.55 L1014.71 189.92 L1013.88 188.29 L1013.05 186.66 L1012.20 185.03 L1011.35 183.40 L1010.49 181.76 L1009.63 180.13 L1008.75 178.50 L1007.87 176.87 L1006.97 175.24 L1006.07 173.61 L1005.17 171.98 L1004.25 170.35 L1003.33 168.72 L1002.40 167.09 L1001.46 165.45 L1000.51 163.82 L999.56 162.19 L998.60 160.56 L997.63 158.93 L996.65 157.30 L995.67 155.67 L994.68 154.04 L993.68 152.41 L992.68 150.77 L991.67 149.14 L990.65 147.51 L989.63 145.88 L988.60 144.25 L987.56 142.62 L986.52 140.99 L985.47 139.36 L984.41 137.73 L983.35 136.10 L982.28 134.46 L981.20 132.83 L980.12 131.20 L979.03 129.57 L977.94 127.94 L976.84 126.31 L975.74 124.68 L974.63 123.05 L973.51 121.42 L972.39 119.79 L971.27 118.15 L970.14 116.52 L969.00 114.89 L967.86 113.26 L966.71 111.63 L965.56 110.00 L964.40 108.37 L963.24 106.74 L962.08 105.11 L960.91 103.48 L959.73 101.84 L958.55 100.21 L957.37 98.58 L956.18 96.95 L954.99 95.32 L953.80 93.69 L952.60 92.06 L951.39 90.43 L950.19 88.80 L948.98 87.17 L947.76 85.53 L946.55 83.90 L945.33 82.27 L944.10 80.64 L942.87 79.01 L941.64 77.38 L940.41 75.75 L939.17 74.12 L937.94 72.49 L936.69 70.86 L935.45 69.22 L934.20 67.59 L932.95 65.96 L931.70 64.33 L930.45 62.70 L929.19 61.07 L927.94 59.44 L926.68 57.81 L925.41 56.18 L924.15 54.55 L922.89 52.91 L921.62 51.28 L920.35 49.65 L919.08 48.02 L917.81 46.39 L916.54 44.76 L915.27 43.13 L913.99 41.50 L912.72 39.87 L911.44 38.24 L910.17 36.60 L908.89 34.97 L907.61 33.34 L906.33 31.71 L905.06 30.08 L903.78 28.45 L902.50 26.82"/>
<path d="M902.50 613.98 L903.35 612.35 L904.20 610.72 L905.06 609.09 L905.91 607.46 L906.76 605.83 L907.61 604.20 L908.46 602.56 L909.31 600.93 L910.16 599.30 L911.01 597.67 L911.86 596.04 L912.71 594.41 L913.55 592.78 L914.40 591.15 L915.25 589.52 L916.09 587.89 L916.93 586.25 L917.78 584.62 L918.62 582.99 L919.46 581.36 L920.30 579.73 L921.13 578.10 L921.97 576.47 L922.80 574.84 L923.64 573.21 L924.47 571.58 L925.30 569.94 L926.12 568.31 L926.95 566.68 L927.77 565.05 L928.60 563.42 L929.42 561.79 L930.23 560.16 L931.05 558.53 L931.86 556.90 L932.68 555.27 L933.49 553.63 L934.29 552.00 L935.10 550.37 L935.90 548.74 L936.70 547.11 L937.50 545.48 L938.29 543.85 L939.08 542.22 L939.87 540.59 L940.66 538.96 L941.44 537.32 L942.22 535.69 L943.00 534.06 L943.77 532.43 L944.54 530.80 L945.31 529.17 L946.07 527.54 L946.83 525.91 L947.59 524.28 L948.34 522.65 L949.10 521.01 L949.84 519.38 L950.59 517.75 L951.33 516.12 L952.06 514.49 L952.79 512.86 L953.52 511.23 L954.25 509.60 L954.97 507.97 L955.68 506.34 L956.40 504.70 L957.11 503.07 L957.81 501.44 L958.51 499.81 L959.21 498.18 L959.90 496.55 L960.59 494.92 L961.27 493.29 L961.95 491.66 L962.62 490.03 L963.29 488.39 L963.95 486.76 L964.61 485.13 L965.27 483.50 L965.92 481.87 L966.56 480.24 L967.21 478.61 L967.84 476.98 L968.47 475.35 L969.10 473.71 L969.72 472.08 L970.33 470.45 L970.94 468.82 L971.55 467.19 L972.15 465.56 L972.74 463.93 L973.33 462.30 L973.92 460.67 L974.50 459.04 L975.07 457.40 L975.64 455.77 L976.20 454.14 L976.75 452.51 L977.31 450.88 L977.85 449.25 L978.39 447.62 L978.92 445.99 L979.45 444.36 L979.97 442.73 L980.49 441.09 L981.00 439.46 L981.50 437.83 L982.00 436.20 L982.49 434.57 L982.98 432.94 L983.46 431.31 L983.93 429.68 L984.40 428.05 L984.86 426.42 L985.31 424.78 L985.76 423.15 L986.20 421.52 L986.64 419.89 L987.07 418.26 L987.49 416.63 L987.91 415.00 L988.32 413.37 L988.72 411.74 L989.12 410.11 L989.51 408.47 L989.89 406.84 L990.27 405.21 L990.64 403.58 L991.00 401.95 L991.36 400.32 L991.71 398.69 L992.05 397.06 L992.39 395.43 L992.72 393.80 L993.04 392.16 L993.36 390.53 L993.67 388.90 L993.97 387.27 L994.26 385.64 L994.55 384.01 L994.83 382.38 L995.10 380.75 L995.37 379.12 L995.63 377.49 L995.88 375.85 L996.13 374.22 L996.37 372.59 L996.60 370.96 L996.82 369.33 L997.04 367.70 L997.25 366.07 L997.45 364.44 L997.65 362.81 L997.84 361.18 L998.02 359.54 L998.19 357.91 L998.36 356.28 L998.52 354.65 L998.67 353.02 L998.81 351.39 L998.95 349.76 L999.08 348.13 L999.20 346.50 L999.32 344.87 L999.42 343.23 L999.52 341.60 L999.62 339.97 L999.70 338.34 L999.78 336.71 L999.85 335.08 L999.91 333.45 L999.97 331.82 L1000.02 330.19 L1000.06 328.56 L1000.09 326.92 L1000.12 325.29 L1000.14 323.66 L1000.15 322.03 L1000.15 320.40 L1000.15 318.77 L1000.14 317.14 L1000.12 315.51 L1000.09 313.88 L1000.06 312.24 L1000.02 310.61 L999.97 308.98 L999.91 307.35 L999.85 305.72 L999.78 304.09 L999.70 302.46 L999.62 300.83 L999.52 299.20 L999.42 297.57 L999.32 295.93 L999.20 294.30 L999.08 292.67 L998.95 291.04 L998.81 289.41 L998.67 287.78 L998.52 286.15 L998.36 284.52 L998.19 282.89 L998.02 281.26 L997.84 279.62 L997.65 277.99 L997.45 276.36 L997.25 274.73 L997.04 273.10 L996.82 271.47 L996.60 269.84 L996.37 268.21 L996.13 266.58 L995.88 264.95 L995.63 263.31 L995.37 261.68 L995.10 260.05 L994.83 258.42 L994.55 256.79 L994.26 255.16 L993.97 253.53 L993.67 251.90 L993.36 250.27 L993.04 248.64 L992.72 247.00 L992.39 245.37 L992.05 243.74 L991.71 242.11 L991.36 240.48 L991.00 238.85 L990.64 237.22 L990.27 235.59 L989.89 233.96 L989.51 232.33 L989.12 230.69 L988.72 229.06 L988.32 227.43 L987.91 225.80 L987.49 224.17 L987.07 222.54 L986.64 220.91 L986.20 219.28 L985.76 217.65 L985.31 216.02 L984.86 214.38 L984.40 212.75 L983.93 211.12 L983.46 209.49 L982.98 207.86 L982.49 206.23 L982.00 204.60 L981.50 202.97 L981.00 201.34 L980.49 199.71 L979.97 198.07 L979.45 196.44 L978.92 194.81 L978.39 193.18 L977.85 191.55 L977.31 189.92 L976.75 188.29 L976.20 186.66 L975.64 185.03 L975.07 183.40 L974.50 181.76 L973.92 180.13 L973.33 178.50 L972.74 176.87 L972.15 175.24 L971.55 173.61 L970.94 171.98 L970.33 170.35 L969.72 168.72 L969.10 167.09 L968.47 165.45 L967.84 163.82 L967.21 162.19 L966.56 160.56 L965.92 158.93 L965.27 157.30 L964.61 155.67 L963.95 154.04 L963.29 152.41 L962.62 150.77 L961.95 149.14 L961.27 147.51 L960.59 145.88 L959.90 144.25 L959.21 142.62 L958.51 140.99 L957.81 139.36 L957.11 137.73 L956.40 136.10 L955.68 134.46 L954.97 132.83 L954.25 131.20 L953.52 129.57 L952.79 127.94 L952.06 126.31 L951.33 124.68 L950.59 123.05 L949.84 121.42 L949.10 119.79 L948.34 118.15 L947.59 116.52 L946.83 114.89 L946.07 113.26 L945.31 111.63 L944.54 110.00 L943.77 108.37 L943.00 106.74 L942.22 105.11 L941.44 103.48 L940.66 101.84 L939.87 100.21 L939.08 98.58 L938.29 96.95 L937.50 95.32 L936.70 93.69 L935.90 92.06 L935.10 90.43 L934.29 88.80 L933.49 87.17 L932.68 85.53 L931.86 83.90 L931.05 82.27 L930.23 80.64 L929.42 79.01 L928.60 77.38 L927.77 75.75 L926.95 74.12 L926.12 72.49 L925.30 70.86 L924.47 69.22 L923.64 67.59 L922.80 65.96 L921.97 64.33 L921.13 62.70 L920.30 61.07 L919.46 59.44 L918.62 57.81 L917.78 56.18 L916.93 54.55 L916.09 52.91 L915.25 51.28 L914.40 49.65 L913.55 48.02 L912.71 46.39 L911.86 44.76 L911.01 43.13 L910.16 41.50 L909.31 39.87 L908.46 38.24 L907.61 36.60 L906.76 34.97 L905.91 33.34 L905.06 31.71 L904.20 30.08 L903.35 28.45 L902.50 26.82"/>
<path d="M902.50 613.98 L902.93 612.35 L903.35 610.72 L903.78 609.09 L904.20 607.46 L904.63 605.83 L905.06 604.20 L905.48 602.56 L905.91 600.93 L906.33 599.30 L906.76 597.67 L907.18 596.04 L907.60 594.41 L908.03 592.78 L908.45 591.15 L908.87 589.52 L909.30 587.89 L909.72 586.25 L910.14 584.62 L910.56 582.99 L910.98 581.36 L911.40 579.73 L911.82 578.10 L912.23 576.47 L912.65 574.84 L913.07 573.21 L913.48 571.58 L913.90 569.94 L914.31 568.31 L914.72 566.68 L915.14 565.05 L915.55 563.42 L915.96 561.79 L916.37 560.16 L916.78 558.53 L917.18 556.90 L917.59 555.27 L917.99 553.63 L918.40 552.00 L918.80 550.37 L919.20 548.74 L919.60 547.11 L920.00 545.48 L920.39 543.85 L920.79 542.22 L921.18 540.59 L921.58 538.96 L921.97 537.32 L922.36 535.69 L922.75 534.06 L923.13 532.43 L923.52 530.80 L923.90 529.17 L924.29 527.54 L924.67 525.91 L925.05 524.28 L925.42 522.65 L925.80 521.01 L926.17 519.38 L926.54 517.75 L926.91 516.12 L927.28 514.49 L927.65 512.86 L928.01 511.23 L928.37 509.60 L928.73 507.97 L929.09 506.34 L929.45 504.70 L929.80 503.07 L930.16 501.44 L930.51 499.81 L930.85 498.18 L931.20 496.55 L931.54 494.92 L931.88 493.29 L932.22 491.66 L932.56 490.03 L932.89 488.39 L933.23 486.76 L933.56 485.13 L933.88 483.50 L934.21 481.87 L934.53 480.24 L934.85 478.61 L935.17 476.98 L935.49 475.35 L935.80 473.71 L936.11 472.08 L936.42 470.45 L936.72 468.82 L937.02 467.19 L937.32 465.56 L937.62 463.93 L937.92 462.30 L938.21 460.67 L938.50 459.04 L938.78 457.40 L939.07 455.77 L939.35 454.14 L939.63 452.51 L939.90 450.88 L940.18 449.25 L940.44 447.62 L940.71 445.99 L940.98 444.36 L941.24 442.73 L941.49 441.09 L941.75 439.46 L942.00 437.83 L942.25 436.20 L942.50 434.57 L942.74 432.94 L942.98 431.31 L943.21 429.68 L943.45 428.05 L943.68 426.42 L943.91 424.78 L944.13 423.15 L944.35 421.52 L944.57 419.89 L944.78 418.26 L945.00 416.63 L945.20 415.00 L945.41 413.37 L945.61 411.74 L945.81 410.11 L946.00 408.47 L946.20 406.84 L946.38 405.21 L946.57 403.58 L946.75 401.95 L946.93 400.32 L947.10 398.69 L947.28 397.06 L947.44 395.43 L947.61 393.80 L947.77 392.16 L947.93 390.53 L948.08 388.90 L948.23 387.27 L948.38 385.64 L948.53 384.01 L948.67 382.38 L948.80 380.75 L948.94 379.12 L949.07 377.49 L949.19 375.85 L949.31 374.22 L949.43 372.59 L949.55 370.96 L949.66 369.33 L949.77 367.70 L949.88 366.07 L949.98 364.44 L950.07 362.81 L950.17 361.18 L950.26 359.54 L950.35 357.91 L950.43 356.28 L950.51 354.65 L950.58 353.02 L950.66 351.39 L950.72 349.76 L950.79 348.13 L950.85 346.50 L950.91 344.87 L950.96 343.23 L951.01 341.60 L951.06 339.97 L951.10 338.34 L951.14 336.71 L951.18 335.08 L951.21 333.45 L951.23 331.82 L951.26 330.19 L951.28 328.56 L951.30 326.92 L951.31 325.29 L951.32 323.66 L951.32 322.03 L951.33 320.40 L951.32 318.77 L951.32 317.14 L951.31 315.51 L951.30 313.88 L951.28 312.24 L951.26 310.61 L951.23 308.98 L951.21 307.35 L951.18 305.72 L951.14 304.09 L951.10 302.46 L951.06 300.83 L951.01 299.20 L950.96 297.57 L950.91 295.93 L950.85 294.30 L950.79 292.67 L950.72 291.04 L950.66 289.41 L950.58 287.78 L950.51 286.15 L950.43 284.52 L950.35 282.89 L950.26 281.26 L950.17 279.62 L950.07 277.99 L949.98 276.36 L949.88 274.73 L949.77 273.10 L949.66 271.47 L949.55 269.84 L949.43 268.21 L949.31 266.58 L949.19 264.95 L949.07 263.31 L948.94 261.68 L948.80 260.05 L948.67 258.42 L948.53 256.79 L948.38 255.16 L948.23 253.53 L948.08 251.90 L947.93 250.27 L947.77 248.64 L947.61 247.00 L947.44 245.37 L947.28 243.74 L947.10 242.11 L946.93 240.48 L946.75 238.85 L946.57 237.22 L946.38 235.59 L946.20 233.96 L946.00 232.33 L945.81 230.69 L945.61 229.06 L945.41 227.43 L945.20 225.80 L945.00 224.17 L944.78 222.54 L944.57 220.91 L944.35 219.28 L944.13 217.65 L943.91 216.02 L943.68 214.38 L943.45 212.75 L943.21 211.12 L942.98 209.49 L942.74 207.86 L942.50 206.23 L942.25 204.60 L942.00 202.97 L941.75 201.34 L941.49 199.71 L941.24 198.07 L940.98 196.44 L940.71 194.81 L940.44 193.18 L940.18 191.55 L939.90 189.92 L939.63 188.29 L939.35 186.66 L939.07 185.03 L938.78 183.40 L938.50 181.76 L938.21 180.13 L937.92 178.50 L937.62 176.87 L937.32 175.24 L937.02 173.61 L936.72 171.98 L936.42 170.35 L936.11 168.72 L935.80 167.09 L935.49 165.45 L935.17 163.82 L934.85 162.19 L934.53 160.56 L934.21 158.93 L933.88 157.30 L933.56 155.67 L933.23 154.04 L932.89 152.41 L932.56 150.77 L932.22 149.14 L931.88 147.51 L931.54 145.88 L931.20 144.25 L930.85 142.62 L930.51 140.99 L930.16 139.36 L929.80 137.73 L929.45 136.10 L929.09 134.46 L928.73 132.83 L928.37 131.20 L928.01 129.57 L927.65 127.94 L927.28 126.31 L926.91 124.68 L926.54 123.05 L926.17 121.42 L925.80 119.79 L925.42 118.15 L925.05 116.52 L924.67 114.89 L924.29 113.26 L923.90 111.63 L923.52 110.00 L923.13 108.37 L922.75 106.74 L922.36 105.11 L921.97 103.48 L921.58 101.84 L921.18 100.21 L920.79 98.58 L920.39 96.95 L920.00 95.32 L919.60 93.69 L919.20 92.06 L918.80 90.43 L918.40 88.80 L917.99 87.17 L917.59 85.53 L917.18 83.90 L916.78 82.27 L916.37 80.64 L915.96 79.01 L915.55 77.38 L915.14 75.75 L914.72 74.12 L914.31 72.49 L913.90 70.86 L913.48 69.22 L913.07 67.59 L912.65 65.96 L912.23 64.33 L911.82 62.70 L911.40 61.07 L910.98 59.44 L910.56 57.81 L910.14 56.18 L909.72 54.55 L909.30 52.91 L908.87 51.28 L908.45 49.65 L908.03 48.02 L907.60 46.39 L907.18 44.76 L906.76 43.13 L906.33 41.50 L905.91 39.87 L905.48 38.24 L905.06 36.60 L904.63 34.97 L904.20 33.34 L903.78 31.71 L903.35 30.08 L902.93 28.45 L902.50 26.82"/>
<path d="M902.00 613.98 L902.00 612.35 L902.00 610.72 L902.00 609.09 L902.00 607.46 L902.00 605.83 L902.00 604.20 L902.00 602.56 L902.00 600.93 L902.00 599.30 L902.00 597.67 L902.00 596.04 L902.00 594.41 L902.00 592.78 L902.00 591.15 L902.00 589.52 L902.00 587.89 L902.00 586.25 L902.00 584.62 L902.00 582.99 L902.00 581.36 L902.00 579.73 L902.00 578.10 L902.00 576.47 L902.00 574.84 L902.00 573.21 L902.00 571.58 L902.00 569.94 L902.00 568.31 L902.00 566.68 L902.00 565.05 L902.00 563.42 L902.00 561.79 L902.00 560.16 L902.00 558.53 L902.00 556.90 L902.00 555.27 L902.00 553.63 L902.00 552.00 L902.00 550.37 L902.00 548.74 L902.00 547.11 L902.00 545.48 L902.00 543.85 L902.00 542.22 L902.00 540.59 L902.00 538.96 L902.00 537.32 L902.00 535.69 L902.00 534.06 L902.00 532.43 L902.00 530.80 L902.00 529.17 L902.00 527.54 L902.00 525.91 L902.00 524.28 L902.00 522.65 L902.00 521.01 L902.00 519.38 L902.00 517.75 L902.00 516.12 L902.00 514.49 L902.00 512.86 L902.00 511.23 L902.00 509.60 L902.00 507.97 L902.00 506.34 L902.00 504.70 L902.00 503.07 L902.00 501.44 L902.00 499.81 L902.00 498.18 L902.00 496.55 L902.00 494.92 L902.00 493.29 L902.00 491.66 L902.00 490.03 L902.00 488.39 L902.00 486.76 L902.00 485.13 L902.00 483.50 L902.00 481.87 L902.00 480.24 L902.00 478.61 L902.00 476.98 L902.00 475.35 L902.00 473.71 L902.00 472.08 L902.00 470.45 L902.00 468.82 L902.00 467.19 L902.00 465.56 L902.00 463.93 L902.00 462.30 L902.00 460.67 L902.00 459.04 L902.00 457.40 L902.00 455.77 L902.00 454.14 L902.00 452.51 L902.00 450.88 L902.00 449.25 L902.00 447.62 L902.00 445.99 L902.00 444.36 L902.00 442.73 L902.00 441.09 L902.00 439.46 L902.00 437.83 L902.00 436.20 L902.00 434.57 L902.00 432.94 L902.00 431.31 L902.00 429.68 L902.00 428.05 L902.00 426.42 L902.00 424.78 L902.00 423.15 L902.00 421.52 L902.00 419.89 L902.00 418.26 L902.00 416.63 L902.00 415.00 L902.00 413.37 L902.00 411.74 L902.00 410.11 L902.00 408.47 L902.00 406.84 L902.00 405.21 L902.00 403.58 L902.00 401.95 L902.00 400.32 L902.00 398.69 L902.00 397.06 L902.00 395.43 L902.00 393.80 L902.00 392.16 L902.00 390.53 L902.00 388.90 L902.00 387.27 L902.00 385.64 L902.00 384.01 L902.00 382.38 L902.00 380.75 L902.00 379.12 L902.00 377.49 L902.00 375.85 L902.00 374.22 L902.00 372.59 L902.00 370.96 L902.00 369.33 L902.00 367.70 L902.00 366.07 L902.00 364.44 L902.00 362.81 L902.00 361.18 L902.00 359.54 L902.00 357.91 L902.00 356.28 L902.00 354.65 L902.00 353.02 L902.00 351.39 L902.00 349.76 L902.00 348.13 L902.00 346.50 L902.00 344.87 L902.00 343.23 L902.00 341.60 L902.00 339.97 L902.00 338.34 L902.00 336.71 L902.00 335.08 L902.00 333.45 L902.00 331.82 L902.00 330.19 L902.00 328.56 L902.00 326.92 L902.00 325.29 L902.00 323.66 L902.00 322.03 L902.00 320.40 L902.00 318.77 L902.00 317.14 L902.00 315.51 L902.00 313.88 L902.00 312.24 L902.00 310.61 L902.00 308.98 L902.00 307.35 L902.00 305.72 L902.00 304.09 L902.00 302.46 L902.00 300.83 L902.00 299.20 L902.00 297.57 L902.00 295.93 L902.00 294.30 L902.00 292.67 L902.00 291.04 L902.00 289.41 L902.00 287.78 L902.00 286.15 L902.00 284.52 L902.00 282.89 L902.00 281.26 L902.00 279.62 L902.00 277.99 L902.00 276.36 L902.00 274.73 L902.00 273.10 L902.00 271.47 L902.00 269.84 L902.00 268.21 L902.00 266.58 L902.00 264.95 L902.00 263.31 L902.00 261.68 L902.00 260.05 L902.00 258.42 L902.00 256.79 L902.00 255.16 L902.00 253.53 L902.00 251.90 L902.00 250.27 L902.00 248.64 L902.00 247.00 L902.00 245.37 L902.00 243.74 L902.00 242.11 L902.00 240.48 L902.00 238.85 L902.00 237.22 L902.00 235.59 L902.00 233.96 L902.00 232.33 L902.00 230.69 L902.00 229.06 L902.00 227.43 L902.00 225.80 L902.00 224.17 L902.00 222.54 L902.00 220.91 L902.00 219.28 L902.00 217.65 L902.00 216.02 L902.00 214.38 L902.00 212.75 L902.00 211.12 L902.00 209.49 L902.00 207.86 L902.00 206.23 L902.00 204.60 L902.00 202.97 L902.00 201.34 L902.00 199.71 L902.00 198.07 L902.00 196.44 L902.00 194.81 L902.00 193.18 L902.00 191.55 L902.00 189.92 L902.00 188.29 L902.00 186.66 L902.00 185.03 L902.00 183.40 L902.00 181.76 L902.00 180.13 L902.00 178.50 L902.00 176.87 L902.00 175.24 L902.00 173.61 L902.00 171.98 L902.00 170.35 L902.00 168.72 L902.00 167.09 L902.00 165.45 L902.00 163.82 L902.00 162.19 L902.00 160.56 L902.00 158.93 L902.00 157.30 L902.00 155.67 L902.00 154.04 L902.00 152.41 L902.00 150.77 L902.00 149.14 L902.00 147.51 L902.00 145.88 L902.00 144.25 L902.00 142.62 L902.00 140.99 L902.00 139.36 L902.00 137.73 L902.00 136.10 L902.00 134.46 L902.00 132.83 L902.00 131.20 L902.00 129.57 L902.00 127.94 L902.00 126.31 L902.00 124.68 L902.00 123.05 L902.00 121.42 L902.00 119.79 L902.00 118.15 L902.00 116.52 L902.00 114.89 L902.00 113.26 L902.00 111.63 L902.00 110.00 L902.00 108.37 L902.00 106.74 L902.00 105.11 L902.00 103.48 L902.00 101.84 L902.00 100.21 L902.00 98.58 L902.00 96.95 L902.00 95.32 L902.00 93.69 L902.00 92.06 L902.00 90.43 L902.00 88.80 L902.00 87.17 L902.00 85.53 L902.00 83.90 L902.00 82.27 L902.00 80.64 L902.00 79.01 L902.00 77.38 L902.00 75.75 L902.00 74.12 L902.00 72.49 L902.00 70.86 L902.00 69.22 L902.00 67.59 L902.00 65.96 L902.00 64.33 L902.00 62.70 L902.00 61.07 L902.00 59.44 L902.00 57.81 L902.00 56.18 L902.00 54.55 L902.00 52.91 L902.00 51.28 L902.00 49.65 L902.00 48.02 L902.00 46.39 L902.00 44.76 L902.00 43.13 L902.00 41.50 L902.00 39.87 L902.00 38.24 L902.00 36.60 L902.00 34.97 L902.00 33.34 L902.00 31.71 L902.00 30.08 L902.00 28.45 L902.00 26.82"/>
<path d="M902.50 613.98 L902.07 612.35 L901.65 610.72 L901.22 609.09 L900.80 607.46 L900.37 605.83 L899.94 604.20 L899.52 602.56 L899.09 600.93 L898.67 599.30 L898.24 597.67 L897.82 596.04 L897.40 594.41 L896.97 592.78 L896.55 591.15 L896.13 589.52 L895.70 587.89 L895.28 586.25 L894.86 584.62 L894.44 582.99 L894.02 581.36 L893.60 579.73 L893.18 578.10 L892.77 576.47 L892.35 574.84 L891.93 573.21 L891.52 571.58 L891.10 569.94 L890.69 568.31 L890.28 566.68 L889.86 565.05 L889.45 563.42 L889.04 561.79 L888.63 560.16 L888.22 558.53 L887.82 556.90 L887.41 555.27 L887.01 553.63 L886.60 552.00 L886.20 550.37 L885.80 548.74 L885.40 547.11 L885.00 545.48 L884.61 543.85 L884.21 542.22 L883.82 540.59 L883.42 538.96 L883.03 537.32 L882.64 535.69 L882.25 534.06 L881.87 532.43 L881.48 530.80 L881.10 529.17 L880.71 527.54 L880.33 525.91 L879.95 524.28 L879.58 522.65 L879.20 521.01 L878.83 519.38 L878.46 517.75 L878.09 516.12 L877.72 514.49 L877.35 512.86 L876.99 511.23 L876.63 509.60 L876.27 507.97 L875.91 506.34 L875.55 504.70 L875.20 503.07 L874.84 501.44 L874.49 499.81 L874.15 498.18 L873.80 496.55 L873.46 494.92 L873.12 493.29 L872.78 491.66 L872.44 490.03 L872.11 488.39 L871.77 486.76 L871.44 485.13 L871.12 483.50 L870.79 481.87 L870.47 480.24 L870.15 478.61 L869.83 476.98 L869.51 475.35 L869.20 473.71 L868.89 472.08 L868.58 470.45 L868.28 468.82 L867.98 467.19 L867.68 465.56 L867.38 463.93 L867.08 462.30 L866.79 460.67 L866.50 459.04 L866.22 457.40 L865.93 455.77 L865.65 454.14 L865.37 452.51 L865.10 450.88 L864.82 449.25 L864.56 447.62 L864.29 445.99 L864.02 444.36 L863.76 442.73 L863.51 441.09 L863.25 439.46 L863.00 437.83 L862.75 436.20 L862.50 434.57 L862.26 432.94 L862.02 431.31 L861.79 429.68 L861.55 428.05 L861.32 426.42 L861.09 424.78 L860.87 423.15 L860.65 421.52 L860.43 419.89 L860.22 418.26 L860.00 416.63 L859.80 415.00 L859.59 413.37 L859.39 411.74 L859.19 410.11 L859.00 408.47 L858.80 406.84 L858.62 405.21 L858.43 403.58 L858.25 401.95 L858.07 400.32 L857.90 398.69 L857.72 397.06 L857.56 395.43 L857.39 393.80 L857.23 392.16 L857.07 390.53 L856.92 388.90 L856.77 387.27 L856.62 385.64 L856.47 384.01 L856.33 382.38 L856.20 380.75 L856.06 379.12 L855.93 377.49 L855.81 375.85 L855.69 374.22 L855.57 372.59 L855.45 370.96 L855.34 369.33 L855.23 367.70 L855.12 366.07 L855.02 364.44 L854.93 362.81 L854.83 361.18 L854.74 359.54 L854.65 357.91 L854.57 356.28 L854.49 354.65 L854.42 353.02 L854.34 351.39 L854.28 349.76 L854.21 348.13 L854.15 346.50 L854.09 344.87 L854.04 343.23 L853.99 341.60 L853.94 339.97 L853.90 338.34 L853.86 336.71 L853.82 335.08 L853.79 333.45 L853.77 331.82 L853.74 330.19 L853.72 328.56 L853.70 326.92 L853.69 325.29 L853.68 323.66 L853.68 322.03 L853.67 320.40 L853.68 318.77 L853.68 317.14 L853.69 315.51 L853.70 313.88 L853.72 312.24 L853.74 310.61 L853.77 308.98 L853.79 307.35 L853.82 305.72 L853.86 304.09 L853.90 302.46 L853.94 300.83 L853.99 299.20 L854.04 297.57 L854.09 295.93 L854.15 294.30 L854.21 292.67 L854.28 291.04 L854.34 289.41 L854.42 287.78 L854.49 286.15 L854.57 284.52 L854.65 282.89 L854.74 281.26 L854.83 279.62 L854.93 277.99 L855.02 276.36 L855.12 274.73 L855.23 273.10 L855.34 271.47 L855.45 269.84 L855.57 268.21 L855.69 266.58 L855.81 264.95 L855.93 263.31 L856.06 261.68 L856.20 260.05 L856.33 258.42 L856.47 256.79 L856.62 255.16 L856.77 253.53 L856.92 251.90 L857.07 250.27 L857.23 248.64 L857.39 247.00 L857.56 245.37 L857.72 243.74 L857.90 242.11 L858.07 240.48 L858.25 238.85 L858.43 237.22 L858.62 235.59 L858.80 233.96 L859.00 232.33 L859.19 230.69 L859.39 229.06 L859.59 227.43 L859.80 225.80 L860.00 224.17 L860.22 222.54 L860.43 220.91 L860.65 219.28 L860.87 217.65 L861.09 216.02 L861.32 214.38 L861.55 212.75 L861.79 211.12 L862.02 209.49 L862.26 207.86 L862.50 206.23 L862.75 204.60 L863.00 202.97 L863.25 201.34 L863.51 199.71 L863.76 198.07 L864.02 196.44 L864.29 194.81 L864.56 193.18 L864.82 191.55 L865.10 189.92 L865.37 188.29 L865.65 186.66 L865.93 185.03 L866.22 183.40 L866.50 181.76 L866.79 180.13 L867.08 178.50 L867.38 176.87 L867.68 175.24 L867.98 173.61 L868.28 171.98 L868.58 170.35 L868.89 168.72 L869.20 167.09 L869.51 165.45 L869.83 163.82 L870.15 162.19 L870.47 160.56 L870.79 158.93 L871.12 157.30 L871.44 155.67 L871.77 154.04 L872.11 152.41 L872.44 150.77 L872.78 149.14 L873.12 147.51 L873.46 145.88 L873.80 144.25 L874.15 142.62 L874.49 140.99 L874.84 139.36 L875.20 137.73 L875.55 136.10 L875.91 134.46 L876.27 132.83 L876.63 131.20 L876.99 129.57 L877.35 127.94 L877.72 126.31 L878.09 124.68 L878.46 123.05 L878.83 121.42 L879.20 119.79 L879.58 118.15 L879.95 116.52 L880.33 114.89 L880.71 113.26 L881.10 111.63 L881.48 110.00 L881.87 108.37 L882.25 106.74 L882.64 105.11 L883.03 103.48 L883.42 101.84 L883.82 100.21 L884.21 98.58 L884.61 96.95 L885.00 95.32 L885.40 93.69 L885.80 92.06 L886.20 90.43 L886.60 88.80 L887.01 87.17 L887.41 85.53 L887.82 83.90 L888.22 82.27 L888.63 80.64 L889.04 79.01 L889.45 77.38 L889.86 75.75 L890.28 74.12 L890.69 72.49 L891.10 70.86 L891.52 69.22 L891.93 67.59 L892.35 65.96 L892.77 64.33 L893.18 62.70 L893.60 61.07 L894.02 59.44 L894.44 57.81 L894.86 56.18 L895.28 54.55 L895.70 52.91 L896.13 51.28 L896.55 49.65 L896.97 48.02 L897.40 46.39 L897.82 44.76 L898.24 43.13 L898.67 41.50 L899.09 39.87 L899.52 38.24 L899.94 36.60 L900.37 34.97 L900.80 33.34 L901.22 31.71 L901.65 30.08 L902.07 28.45 L902.50 26.82"/>
<path d="M902.50 613.98 L901.65 612.35 L900.80 610.72 L899.94 609.09 L899.09 607.46 L898.24 605.83 L897.39 604.20 L896.54 602.56 L895.69 600.93 L894.84 599.30 L893.99 597.67 L893.14 596.04 L892.29 594.41 L891.45 592.78 L890.60 591.15 L889.75 589.52 L888.91 587.89 L888.07 586.25 L887.22 584.62 L886.38 582.99 L885.54 581.36 L884.70 579.73 L883.87 578.10 L883.03 576.47 L882.20 574.84 L881.36 573.21 L880.53 571.58 L879.70 569.94 L878.88 568.31 L878.05 566.68 L877.23 565.05 L876.40 563.42 L875.58 561.79 L874.77 560.16 L873.95 558.53 L873.14 556.90 L872.32 555.27 L871.51 553.63 L870.71 552.00 L869.90 550.37 L869.10 548.74 L868.30 547.11 L867.50 545.48 L866.71 543.85 L865.92 542.22 L865.13 540.59 L864.34 538.96 L863.56 537.32 L862.78 535.69 L862.00 534.06 L861.23 532.43 L860.46 530.80 L859.69 529.17 L858.93 527.54 L858.17 525.91 L857.41 524.28 L856.66 522.65 L855.90 521.01 L855.16 519.38 L854.41 517.75 L853.67 516.12 L852.94 514.49 L852.21 512.86 L851.48 511.23 L850.75 509.60 L850.03 507.97 L849.32 506.34 L848.60 504.70 L847.89 503.07 L847.19 501.44 L846.49 499.81 L845.79 498.18 L845.10 496.55 L844.41 494.92 L843.73 493.29 L843.05 491.66 L842.38 490.03 L841.71 488.39 L841.05 486.76 L840.39 485.13 L839.73 483.50 L839.08 481.87 L838.44 480.24 L837.79 478.61 L837.16 476.98 L836.53 475.35 L835.90 473.71 L835.28 472.08 L834.67 470.45 L834.06 468.82 L833.45 467.19 L832.85 465.56 L832.26 463.93 L831.67 462.30 L831.08 460.67 L830.50 459.04 L829.93 457.40 L829.36 455.77 L828.80 454.14 L828.25 452.51 L827.69 450.88 L827.15 449.25 L826.61 447.62 L826.08 445.99 L825.55 444.36 L825.03 442.73 L824.51 441.09 L824.00 439.46 L823.50 437.83 L823.00 436.20 L822.51 434.57 L822.02 432.94 L821.54 431.31 L821.07 429.68 L820.60 428.05 L820.14 426.42 L819.69 424.78 L819.24 423.15 L818.80 421.52 L818.36 419.89 L817.93 418.26 L817.51 416.63 L817.09 415.00 L816.68 413.37 L816.28 411.74 L815.88 410.11 L815.49 408.47 L815.11 406.84 L814.73 405.21 L814.36 403.58 L814.00 401.95 L813.64 400.32 L813.29 398.69 L812.95 397.06 L812.61 395.43 L812.28 393.80 L811.96 392.16 L811.64 390.53 L811.33 388.90 L811.03 387.27 L810.74 385.64 L810.45 384.01 L810.17 382.38 L809.90 380.75 L809.63 379.12 L809.37 377.49 L809.12 375.85 L808.87 374.22 L808.63 372.59 L808.40 370.96 L808.18 369.33 L807.96 367.70 L807.75 366.07 L807.55 364.44 L807.35 362.81 L807.16 361.18 L806.98 359.54 L806.81 357.91 L806.64 356.28 L806.48 354.65 L806.33 353.02 L806.19 351.39 L806.05 349.76 L805.92 348.13 L805.80 346.50 L805.68 344.87 L805.58 343.23 L805.48 341.60 L805.38 339.97 L805.30 338.34 L805.22 336.71 L805.15 335.08 L805.09 333.45 L805.03 331.82 L804.98 330.19 L804.94 328.56 L804.91 326.92 L804.88 325.29 L804.86 323.66 L804.85 322.03 L804.85 320.40 L804.85 318.77 L804.86 317.14 L804.88 315.51 L804.91 313.88 L804.94 312.24 L804.98 310.61 L805.03 308.98 L805.09 307.35 L805.15 305.72 L805.22 304.09 L805.30 302.46 L805.38 300.83 L805.48 299.20 L805.58 297.57 L805.68 295.93 L805.80 294.30 L805.92 292.67 L806.05 291.04 L806.19 289.41 L806.33 287.78 L806.48 286.15 L806.64 284.52 L806.81 282.89 L806.98 281.26 L807.16 279.62 L807.35 277.99 L807.55 276.36 L807.75 274.73 L807.96 273.10 L808.18 271.47 L808.40 269.84 L808.63 268.21 L808.87 266.58 L809.12 264.95 L809.37 263.31 L809.63 261.68 L809.90 260.05 L810.17 258.42 L810.45 256.79 L810.74 255.16 L811.03 253.53 L811.33 251.90 L811.64 250.27 L811.96 248.64 L812.28 247.00 L812.61 245.37 L812.95 243.74 L813.29 242.11 L813.64 240.48 L814.00 238.85 L814.36 237.22 L814.73 235.59 L815.11 233.96 L815.49 232.33 L815.88 230.69 L816.28 229.06 L816.68 227.43 L817.09 225.80 L817.51 224.17 L817.93 222.54 L818.36 220.91 L818.80 219.28 L819.24 217.65 L819.69 216.02 L820.14 214.38 L820.60 212.75 L821.07 211.12 L821.54 209.49 L822.02 207.86 L822.51 206.23 L823.00 204.60 L823.50 202.97 L824.00 201.34 L824.51 199.71 L825.03 198.07 L825.55 196.44 L826.08 194.81 L826.61 193.18 L827.15 191.55 L827.69 189.92 L828.25 188.29 L828.80 186.66 L829.36 185.03 L829.93 183.40 L830.50 181.76 L831.08 180.13 L831.67 178.50 L832.26 176.87 L832.85 175.24 L833.45 173.61 L834.06 171.98 L834.67 170.35 L835.28 168.72 L835.90 167.09 L836.53 165.45 L837.16 163.82 L837.79 162.19 L838.44 160.56 L839.08 158.93 L839.73 157.30 L840.39 155.67 L841.05 154.04 L841.71 152.41 L842.38 150.77 L843.05 149.14 L843.73 147.51 L844.41 145.88 L845.10 144.25 L845.79 142.62 L846.49 140.99 L847.19 139.36 L847.89 137.73 L848.60 136.10 L849.32 134.46 L850.03 132.83 L850.75 131.20 L851.48 129.57 L852.21 127.94 L852.94 126.31 L853.67 124.68 L854.41 123.05 L855.16 121.42 L855.90 119.79 L856.66 118.15 L857.41 116.52 L858.17 114.89 L858.93 113.26 L859.69 111.63 L860.46 110.00 L861.23 108.37 L862.00 106.74 L862.78 105.11 L863.56 103.48 L864.34 101.84 L865.13 100.21 L865.92 98.58 L866.71 96.95 L867.50 95.32 L868.30 93.69 L869.10 92.06 L869.90 90.43 L870.71 88.80 L871.51 87.17 L872.32 85.53 L873.14 83.90 L873.95 82.27 L874.77 80.64 L875.58 79.01 L876.40 77.38 L877.23 75.75 L878.05 74.12 L878.88 72.49 L879.70 70.86 L880.53 69.22 L881.36 67.59 L882.20 65.96 L883.03 64.33 L883.87 62.70 L884.70 61.07 L885.54 59.44 L886.38 57.81 L887.22 56.18 L888.07 54.55 L888.91 52.91 L889.75 51.28 L890.60 49.65 L891.45 48.02 L892.29 46.39 L893.14 44.76 L893.99 43.13 L894.84 41.50 L895.69 39.87 L896.54 38.24 L897.39 36.60 L898.24 34.97 L899.09 33.34 L899.94 31.71 L900.80 30.08 L901.65 28.45 L902.50 26.82"/>
<path d="M902.50 613.98 L901.22 612.35 L899.94 610.72 L898.67 609.09 L897.39 607.46 L896.11 605.83 L894.83 604.20 L893.56 602.56 L892.28 600.93 L891.01 599.30 L889.73 597.67 L888.46 596.04 L887.19 594.41 L885.92 592.78 L884.65 591.15 L883.38 589.52 L882.11 587.89 L880.85 586.25 L879.59 584.62 L878.32 582.99 L877.06 581.36 L875.81 579.73 L874.55 578.10 L873.30 576.47 L872.05 574.84 L870.80 573.21 L869.55 571.58 L868.31 569.94 L867.06 568.31 L865.83 566.68 L864.59 565.05 L863.36 563.42 L862.13 561.79 L860.90 560.16 L859.67 558.53 L858.45 556.90 L857.24 555.27 L856.02 553.63 L854.81 552.00 L853.61 550.37 L852.40 548.74 L851.20 547.11 L850.01 545.48 L848.82 543.85 L847.63 542.22 L846.45 540.59 L845.27 538.96 L844.09 537.32 L842.92 535.69 L841.76 534.06 L840.60 532.43 L839.44 530.80 L838.29 529.17 L837.14 527.54 L836.00 525.91 L834.86 524.28 L833.73 522.65 L832.61 521.01 L831.49 519.38 L830.37 517.75 L829.26 516.12 L828.16 514.49 L827.06 512.86 L825.97 511.23 L824.88 509.60 L823.80 507.97 L822.72 506.34 L821.65 504.70 L820.59 503.07 L819.53 501.44 L818.48 499.81 L817.44 498.18 L816.40 496.55 L815.37 494.92 L814.35 493.29 L813.33 491.66 L812.32 490.03 L811.32 488.39 L810.32 486.76 L809.33 485.13 L808.35 483.50 L807.37 481.87 L806.40 480.24 L805.44 478.61 L804.49 476.98 L803.54 475.35 L802.60 473.71 L801.67 472.08 L800.75 470.45 L799.83 468.82 L798.93 467.19 L798.03 465.56 L797.13 463.93 L796.25 462.30 L795.37 460.67 L794.51 459.04 L793.65 457.40 L792.80 455.77 L791.95 454.14 L791.12 452.51 L790.29 450.88 L789.47 449.25 L788.67 447.62 L787.87 445.99 L787.07 444.36 L786.29 442.73 L785.52 441.09 L784.75 439.46 L784.00 437.83 L783.25 436.20 L782.51 434.57 L781.78 432.94 L781.07 431.31 L780.36 429.68 L779.65 428.05 L778.96 426.42 L778.28 424.78 L777.61 423.15 L776.94 421.52 L776.29 419.89 L775.65 418.26 L775.01 416.63 L774.39 415.00 L773.77 413.37 L773.17 411.74 L772.57 410.11 L771.99 408.47 L771.41 406.84 L770.85 405.21 L770.29 403.58 L769.75 401.95 L769.21 400.32 L768.69 398.69 L768.17 397.06 L767.67 395.43 L767.17 393.80 L766.69 392.16 L766.22 390.53 L765.75 388.90 L765.30 387.27 L764.86 385.64 L764.42 384.01 L764.00 382.38 L763.59 380.75 L763.19 379.12 L762.80 377.49 L762.42 375.85 L762.06 374.22 L761.70 372.59 L761.35 370.96 L761.01 369.33 L760.69 367.70 L760.37 366.07 L760.07 364.44 L759.78 362.81 L759.50 361.18 L759.22 359.54 L758.96 357.91 L758.71 356.28 L758.48 354.65 L758.25 353.02 L758.03 351.39 L757.83 349.76 L757.63 348.13 L757.45 346.50 L757.28 344.87 L757.12 343.23 L756.96 341.60 L756.83 339.97 L756.70 338.34 L756.58 336.71 L756.47 335.08 L756.38 333.45 L756.30 331.82 L756.22 330.19 L756.16 328.56 L756.11 326.92 L756.07 325.29 L756.05 323.66 L756.03 322.03 L756.02 320.40 L756.03 318.77 L756.05 317.14 L756.07 315.51 L756.11 313.88 L756.16 312.24 L756.22 310.61 L756.30 308.98 L756.38 307.35 L756.47 305.72 L756.58 304.09 L756.70 302.46 L756.83 300.83 L756.96 299.20 L757.12 297.57 L757.28 295.93 L757.45 294.30 L757.63 292.67 L757.83 291.04 L758.03 289.41 L758.25 287.78 L758.48 286.15 L758.71 284.52 L758.96 282.89 L759.22 281.26 L759.50 279.62 L759.78 277.99 L760.07 276.36 L760.37 274.73 L760.69 273.10 L761.01 271.47 L761.35 269.84 L761.70 268.21 L762.06 266.58 L762.42 264.95 L762.80 263.31 L763.19 261.68 L763.59 260.05 L764.00 258.42 L764.42 256.79 L764.86 255.16 L765.30 253.53 L765.75 251.90 L766.22 250.27 L766.69 248.64 L767.17 247.00 L767.67 245.37 L768.17 243.74 L768.69 242.11 L769.21 240.48 L769.75 238.85 L770.29 237.22 L770.85 235.59 L771.41 233.96 L771.99 232.33 L772.57 230.69 L773.17 229.06 L773.77 227.43 L774.39 225.80 L775.01 224.17 L775.65 222.54 L776.29 220.91 L776.94 219.28 L777.61 217.65 L778.28 216.02 L778.96 214.38 L779.65 212.75 L780.36 211.12 L781.07 209.49 L781.78 207.86 L782.51 206.23 L783.25 204.60 L784.00 202.97 L784.75 201.34 L785.52 199.71 L786.29 198.07 L787.07 196.44 L787.87 194.81 L788.67 193.18 L789.47 191.55 L790.29 189.92 L791.12 188.29 L791.95 186.66 L792.80 185.03 L793.65 183.40 L794.51 181.76 L795.37 180.13 L796.25 178.50 L797.13 176.87 L798.03 175.24 L798.93 173.61 L799.83 171.98 L800.75 170.35 L801.67 168.72 L802.60 167.09 L803.54 165.45 L804.49 163.82 L805.44 162.19 L806.40 160.56 L807.37 158.93 L808.35 157.30 L809.33 155.67 L810.32 154.04 L811.32 152.41 L812.32 150.77 L813.33 149.14 L814.35 147.51 L815.37 145.88 L816.40 144.25 L817.44 142.62 L818.48 140.99 L819.53 139.36 L820.59 137.73 L821.65 136.10 L822.72 134.46 L823.80 132.83 L824.88 131.20 L825.97 129.57 L827.06 127.94 L828.16 126.31 L829.26 124.68 L830.37 123.05 L831.49 121.42 L832.61 119.79 L833.73 118.15 L834.86 116.52 L836.00 114.89 L837.14 113.26 L838.29 111.63 L839.44 110.00 L840.60 108.37 L841.76 106.74 L842.92 105.11 L844.09 103.48 L845.27 101.84 L846.45 100.21 L847.63 98.58 L848.82 96.95 L850.01 95.32 L851.20 93.69 L852.40 92.06 L853.61 90.43 L854.81 88.80 L856.02 87.17 L857.24 85.53 L858.45 83.90 L859.67 82.27 L860.90 80.64 L862.13 79.01 L863.36 77.38 L864.59 75.75 L865.83 74.12 L867.06 72.49 L868.31 70.86 L869.55 69.22 L870.80 67.59 L872.05 65.96 L873.30 64.33 L874.55 62.70 L875.81 61.07 L877.06 59.44 L878.32 57.81 L879.59 56.18 L880.85 54.55 L882.11 52.91 L883.38 51.28 L884.65 49.65 L885.92 48.02 L887.19 46.39 L888.46 44.76 L889.73 43.13 L891.01 41.50 L892.28 39.87 L893.56 38.24 L894.83 36.60 L896.11 34.97 L897.39 33.34 L898.67 31.71 L899.94 30.08 L901.22 28.45 L902.50 26.82"/>
<path d="M902.50 613.98 L900.80 612.35 L899.09 610.72 L897.39 609.09 L895.68 607.46 L893.98 605.83 L892.28 604.20 L890.58 602.56 L888.88 600.93 L887.18 599.30 L885.48 597.67 L883.78 596.04 L882.09 594.41 L880.39 592.78 L878.70 591.15 L877.01 589.52 L875.32 587.89 L873.63 586.25 L871.95 584.62 L870.27 582.99 L868.59 581.36 L866.91 579.73 L865.23 578.10 L863.56 576.47 L861.89 574.84 L860.23 573.21 L858.57 571.58 L856.91 569.94 L855.25 568.31 L853.60 566.68 L851.95 565.05 L850.31 563.42 L848.67 561.79 L847.03 560.16 L845.40 558.53 L843.77 556.90 L842.15 555.27 L840.53 553.63 L838.92 552.00 L837.31 550.37 L835.70 548.74 L834.10 547.11 L832.51 545.48 L830.92 543.85 L829.34 542.22 L827.76 540.59 L826.19 538.96 L824.62 537.32 L823.06 535.69 L821.51 534.06 L819.96 532.43 L818.42 530.80 L816.89 529.17 L815.36 527.54 L813.83 525.91 L812.32 524.28 L810.81 522.65 L809.31 521.01 L807.82 519.38 L806.33 517.75 L804.85 516.12 L803.38 514.49 L801.91 512.86 L800.45 511.23 L799.01 509.60 L797.56 507.97 L796.13 506.34 L794.71 504.70 L793.29 503.07 L791.88 501.44 L790.48 499.81 L789.09 498.18 L787.70 496.55 L786.33 494.92 L784.96 493.29 L783.61 491.66 L782.26 490.03 L780.92 488.39 L779.59 486.76 L778.27 485.13 L776.96 483.50 L775.66 481.87 L774.37 480.24 L773.09 478.61 L771.82 476.98 L770.56 475.35 L769.30 473.71 L768.06 472.08 L766.83 470.45 L765.61 468.82 L764.40 467.19 L763.20 465.56 L762.01 463.93 L760.83 462.30 L759.66 460.67 L758.51 459.04 L757.36 457.40 L756.23 455.77 L755.10 454.14 L753.99 452.51 L752.89 450.88 L751.80 449.25 L750.72 447.62 L749.65 445.99 L748.60 444.36 L747.56 442.73 L746.52 441.09 L745.50 439.46 L744.50 437.83 L743.50 436.20 L742.52 434.57 L741.55 432.94 L740.59 431.31 L739.64 429.68 L738.71 428.05 L737.78 426.42 L736.87 424.78 L735.98 423.15 L735.09 421.52 L734.22 419.89 L733.36 418.26 L732.52 416.63 L731.68 415.00 L730.86 413.37 L730.06 411.74 L729.26 410.11 L728.48 408.47 L727.72 406.84 L726.96 405.21 L726.22 403.58 L725.50 401.95 L724.78 400.32 L724.08 398.69 L723.40 397.06 L722.72 395.43 L722.06 393.80 L721.42 392.16 L720.79 390.53 L720.17 388.90 L719.57 387.27 L718.98 385.64 L718.40 384.01 L717.84 382.38 L717.29 380.75 L716.76 379.12 L716.24 377.49 L715.73 375.85 L715.24 374.22 L714.76 372.59 L714.30 370.96 L713.85 369.33 L713.42 367.70 L713.00 366.07 L712.59 364.44 L712.20 362.81 L711.83 361.18 L711.47 359.54 L711.12 357.91 L710.79 356.28 L710.47 354.65 L710.16 353.02 L709.88 351.39 L709.60 349.76 L709.34 348.13 L709.10 346.50 L708.87 344.87 L708.65 343.23 L708.45 341.60 L708.27 339.97 L708.10 338.34 L707.94 336.71 L707.80 335.08 L707.67 333.45 L707.56 331.82 L707.47 330.19 L707.38 328.56 L707.32 326.92 L707.26 325.29 L707.23 323.66 L707.21 322.03 L707.20 320.40 L707.21 318.77 L707.23 317.14 L707.26 315.51 L707.32 313.88 L707.38 312.24 L707.47 310.61 L707.56 308.98 L707.67 307.35 L707.80 305.72 L707.94 304.09 L708.10 302.46 L708.27 300.83 L708.45 299.20 L708.65 297.57 L708.87 295.93 L709.10 294.30 L709.34 292.67 L709.60 291.04 L709.88 289.41 L710.16 287.78 L710.47 286.15 L710.79 284.52 L711.12 282.89 L711.47 281.26 L711.83 279.62 L712.20 277.99 L712.59 276.36 L713.00 274.73 L713.42 273.10 L713.85 271.47 L714.30 269.84 L714.76 268.21 L715.24 266.58 L715.73 264.95 L716.24 263.31 L716.76 261.68 L717.29 260.05 L717.84 258.42 L718.40 256.79 L718.98 255.16 L719.57 253.53 L720.17 251.90 L720.79 250.27 L721.42 248.64 L722.06 247.00 L722.72 245.37 L723.40 243.74 L724.08 242.11 L724.78 240.48 L725.50 238.85 L726.22 237.22 L726.96 235.59 L727.72 233.96 L728.48 232.33 L729.26 230.69 L730.06 229.06 L730.86 227.43 L731.68 225.80 L732.52 224.17 L733.36 222.54 L734.22 220.91 L735.09 219.28 L735.98 217.65 L736.87 216.02 L737.78 214.38 L738.71 212.75 L739.64 211.12 L740.59 209.49 L741.55 207.86 L742.52 206.23 L743.50 204.60 L744.50 202.97 L745.50 201.34 L746.52 199.71 L747.56 198.07 L748.60 196.44 L749.65 194.81 L750.72 193.18 L751.80 191.55 L752.89 189.92 L753.99 188.29 L755.10 186.66 L756.23 185.03 L757.36 183.40 L758.51 181.76 L759.66 180.13 L760.83 178.50 L762.01 176.87 L763.20 175.24 L764.40 173.61 L765.61 171.98 L766.83 170.35 L768.06 168.72 L769.30 167.09 L770.56 165.45 L771.82 163.82 L773.09 162.19 L774.37 160.56 L775.66 158.93 L776.96 157.30 L778.27 155.67 L779.59 154.04 L780.92 152.41 L782.26 150.77 L783.61 149.14 L784.96 147.51 L786.33 145.88 L787.70 144.25 L789.09 142.62 L790.48 140.99 L791.88 139.36 L793.29 137.73 L794.71 136.10 L796.13 134.46 L797.56 132.83 L799.01 131.20 L800.45 129.57 L801.91 127.94 L803.38 126.31 L804.85 124.68 L806.33 123.05 L807.82 121.42 L809.31 119.79 L810.81 118.15 L812.32 116.52 L813.83 114.89 L815.36 113.26 L816.89 111.63 L818.42 110.00 L819.96 108.37 L821.51 106.74 L823.06 105.11 L824.62 103.48 L826.19 101.84 L827.76 100.21 L829.34 98.58 L830.92 96.95 L832.51 95.32 L834.10 93.69 L835.70 92.06 L837.31 90.43 L838.92 88.80 L840.53 87.17 L842.15 85.53 L843.77 83.90 L845.40 82.27 L847.03 80.64 L848.67 79.01 L850.31 77.38 L851.95 75.75 L853.60 74.12 L855.25 72.49 L856.91 70.86 L858.57 69.22 L860.23 67.59 L861.89 65.96 L863.56 64.33 L865.23 62.70 L866.91 61.07 L868.59 59.44 L870.27 57.81 L871.95 56.18 L873.63 54.55 L875.32 52.91 L877.01 51.28 L878.70 49.65 L880.39 48.02 L882.09 46.39 L883.78 44.76 L885.48 43.13 L887.18 41.50 L888.88 39.87 L890.58 38.24 L892.28 36.60 L893.98 34.97 L895.68 33.34 L897.39 31.71 L899.09 30.08 L900.80 28.45 L902.50 26.82"/>
<path d="M902.50 613.98 L900.37 612.35 L898.24 610.72 L896.11 609.09 L893.98 607.46 L891.85 605.83 L889.72 604.20 L887.60 602.56 L885.47 600.93 L883.35 599.30 L881.22 597.67 L879.10 596.04 L876.98 594.41 L874.86 592.78 L872.75 591.15 L870.63 589.52 L868.52 587.89 L866.42 586.25 L864.31 584.62 L862.21 582.99 L860.11 581.36 L858.01 579.73 L855.92 578.10 L853.83 576.47 L851.74 574.84 L849.66 573.21 L847.58 571.58 L845.51 569.94 L843.44 568.31 L841.38 566.68 L839.32 565.05 L837.26 563.42 L835.21 561.79 L833.16 560.16 L831.12 558.53 L829.09 556.90 L827.06 555.27 L825.04 553.63 L823.02 552.00 L821.01 550.37 L819.00 548.74 L817.00 547.11 L815.01 545.48 L813.03 543.85 L811.05 542.22 L809.08 540.59 L807.11 538.96 L805.15 537.32 L803.20 535.69 L801.26 534.06 L799.33 532.43 L797.40 530.80 L795.48 529.17 L793.57 527.54 L791.67 525.91 L789.77 524.28 L787.89 522.65 L786.01 521.01 L784.14 519.38 L782.29 517.75 L780.44 516.12 L778.60 514.49 L776.76 512.86 L774.94 511.23 L773.13 509.60 L771.33 507.97 L769.54 506.34 L767.76 504.70 L765.99 503.07 L764.22 501.44 L762.47 499.81 L760.73 498.18 L759.01 496.55 L757.29 494.92 L755.58 493.29 L753.88 491.66 L752.20 490.03 L750.53 488.39 L748.87 486.76 L747.22 485.13 L745.58 483.50 L743.95 481.87 L742.34 480.24 L740.74 478.61 L739.15 476.98 L737.57 475.35 L736.01 473.71 L734.45 472.08 L732.91 470.45 L731.39 468.82 L729.88 467.19 L728.38 465.56 L726.89 463.93 L725.42 462.30 L723.96 460.67 L722.51 459.04 L721.08 457.40 L719.66 455.77 L718.25 454.14 L716.86 452.51 L715.49 450.88 L714.12 449.25 L712.78 447.62 L711.44 445.99 L710.12 444.36 L708.82 442.73 L707.53 441.09 L706.26 439.46 L705.00 437.83 L703.75 436.20 L702.52 434.57 L701.31 432.94 L700.11 431.31 L698.93 429.68 L697.76 428.05 L696.60 426.42 L695.47 424.78 L694.35 423.15 L693.24 421.52 L692.15 419.89 L691.08 418.26 L690.02 416.63 L688.98 415.00 L687.96 413.37 L686.95 411.74 L685.96 410.11 L684.98 408.47 L684.02 406.84 L683.08 405.21 L682.15 403.58 L681.24 401.95 L680.35 400.32 L679.48 398.69 L678.62 397.06 L677.78 395.43 L676.96 393.80 L676.15 392.16 L675.36 390.53 L674.59 388.90 L673.83 387.27 L673.09 385.64 L672.37 384.01 L671.67 382.38 L670.99 380.75 L670.32 379.12 L669.67 377.49 L669.04 375.85 L668.43 374.22 L667.83 372.59 L667.25 370.96 L666.69 369.33 L666.15 367.70 L665.62 366.07 L665.12 364.44 L664.63 362.81 L664.16 361.18 L663.71 359.54 L663.27 357.91 L662.86 356.28 L662.46 354.65 L662.08 353.02 L661.72 351.39 L661.38 349.76 L661.05 348.13 L660.75 346.50 L660.46 344.87 L660.19 343.23 L659.94 341.60 L659.71 339.97 L659.50 338.34 L659.30 336.71 L659.12 335.08 L658.97 333.45 L658.83 331.82 L658.71 330.19 L658.60 328.56 L658.52 326.92 L658.46 325.29 L658.41 323.66 L658.38 322.03 L658.37 320.40 L658.38 318.77 L658.41 317.14 L658.46 315.51 L658.52 313.88 L658.60 312.24 L658.71 310.61 L658.83 308.98 L658.97 307.35 L659.12 305.72 L659.30 304.09 L659.50 302.46 L659.71 300.83 L659.94 299.20 L660.19 297.57 L660.46 295.93 L660.75 294.30 L661.05 292.67 L661.38 291.04 L661.72 289.41 L662.08 287.78 L662.46 286.15 L662.86 284.52 L663.27 282.89 L663.71 281.26 L664.16 279.62 L664.63 277.99 L665.12 276.36 L665.62 274.73 L666.15 273.10 L666.69 271.47 L667.25 269.84 L667.83 268.21 L668.43 266.58 L669.04 264.95 L669.67 263.31 L670.32 261.68 L670.99 260.05 L671.67 258.42 L672.37 256.79 L673.09 255.16 L673.83 253.53 L674.59 251.90 L675.36 250.27 L676.15 248.64 L676.96 247.00 L677.78 245.37 L678.62 243.74 L679.48 242.11 L680.35 240.48 L681.24 238.85 L682.15 237.22 L683.08 235.59 L684.02 233.96 L684.98 232.33 L685.96 230.69 L686.95 229.06 L687.96 227.43 L688.98 225.80 L690.02 224.17 L691.08 222.54 L692.15 220.91 L693.24 219.28 L694.35 217.65 L695.47 216.02 L696.60 214.38 L697.76 212.75 L698.93 211.12 L700.11 209.49 L701.31 207.86 L702.52 206.23 L703.75 204.60 L705.00 202.97 L706.26 201.34 L707.53 199.71 L708.82 198.07 L710.12 196.44 L711.44 194.81 L712.78 193.18 L714.12 191.55 L715.49 189.92 L716.86 188.29 L718.25 186.66 L719.66 185.03 L721.08 183.40 L722.51 181.76 L723.96 180.13 L725.42 178.50 L726.89 176.87 L728.38 175.24 L729.88 173.61 L731.39 171.98 L732.91 170.35 L734.45 168.72 L736.01 167.09 L737.57 165.45 L739.15 163.82 L740.74 162.19 L742.34 160.56 L743.95 158.93 L745.58 157.30 L747.22 155.67 L748.87 154.04 L750.53 152.41 L752.20 150.77 L753.88 149.14 L755.58 147.51 L757.29 145.88 L759.01 144.25 L760.73 142.62 L762.47 140.99 L764.22 139.36 L765.99 137.73 L767.76 136.10 L769.54 134.46 L771.33 132.83 L773.13 131.20 L774.94 129.57 L776.76 127.94 L778.60 126.31 L780.44 124.68 L782.29 123.05 L784.14 121.42 L786.01 119.79 L787.89 118.15 L789.77 116.52 L791.67 114.89 L793.57 113.26 L795.48 111.63 L797.40 110.00 L799.33 108.37 L801.26 106.74 L803.20 105.11 L805.15 103.48 L807.11 101.84 L809.08 100.21 L811.05 98.58 L813.03 96.95 L815.01 95.32 L817.00 93.69 L819.00 92.06 L821.01 90.43 L823.02 88.80 L825.04 87.17 L827.06 85.53 L829.09 83.90 L831.12 82.27 L833.16 80.64 L835.21 79.01 L837.26 77.38 L839.32 75.75 L841.38 74.12 L843.44 72.49 L845.51 70.86 L847.58 69.22 L849.66 67.59 L851.74 65.96 L853.83 64.33 L855.92 62.70 L858.01 61.07 L860.11 59.44 L862.21 57.81 L864.31 56.18 L866.42 54.55 L868.52 52.91 L870.63 51.28 L872.75 49.65 L874.86 48.02 L876.98 46.39 L879.10 44.76 L881.22 43.13 L883.35 41.50 L885.47 39.87 L887.60 38.24 L889.72 36.60 L891.85 34.97 L893.98 33.34 L896.11 31.71 L898.24 30.08 L900.37 28.45 L902.50 26.82"/>
<path d="M902.50 613.98 L899.94 612.35 L897.39 610.72 L894.83 609.09 L892.28 607.46 L889.72 605.83 L887.17 604.20 L884.62 602.56 L882.06 600.93 L879.52 599.30 L876.97 597.67 L874.42 596.04 L871.88 594.41 L869.34 592.78 L866.80 591.15 L864.26 589.52 L861.73 587.89 L859.20 586.25 L856.67 584.62 L854.15 582.99 L851.63 581.36 L849.11 579.73 L846.60 578.10 L844.09 576.47 L841.59 574.84 L839.09 573.21 L836.60 571.58 L834.11 569.94 L831.63 568.31 L829.15 566.68 L826.68 565.05 L824.21 563.42 L821.75 561.79 L819.30 560.16 L816.85 558.53 L814.41 556.90 L811.97 555.27 L809.54 553.63 L807.12 552.00 L804.71 550.37 L802.30 548.74 L799.91 547.11 L797.51 545.48 L795.13 543.85 L792.76 542.22 L790.39 540.59 L788.03 538.96 L785.69 537.32 L783.35 535.69 L781.01 534.06 L778.69 532.43 L776.38 530.80 L774.08 529.17 L771.78 527.54 L769.50 525.91 L767.23 524.28 L764.97 522.65 L762.71 521.01 L760.47 519.38 L758.24 517.75 L756.02 516.12 L753.81 514.49 L751.62 512.86 L749.43 511.23 L747.26 509.60 L745.10 507.97 L742.95 506.34 L740.81 504.70 L738.68 503.07 L736.57 501.44 L734.47 499.81 L732.38 498.18 L730.31 496.55 L728.24 494.92 L726.20 493.29 L724.16 491.66 L722.14 490.03 L720.13 488.39 L718.14 486.76 L716.16 485.13 L714.19 483.50 L712.24 481.87 L710.31 480.24 L708.38 478.61 L706.48 476.98 L704.58 475.35 L702.71 473.71 L700.84 472.08 L699.00 470.45 L697.17 468.82 L695.35 467.19 L693.55 465.56 L691.77 463.93 L690.00 462.30 L688.25 460.67 L686.51 459.04 L684.79 457.40 L683.09 455.77 L681.41 454.14 L679.74 452.51 L678.08 450.88 L676.45 449.25 L674.83 447.62 L673.23 445.99 L671.65 444.36 L670.08 442.73 L668.54 441.09 L667.01 439.46 L665.50 437.83 L664.00 436.20 L662.53 434.57 L661.07 432.94 L659.63 431.31 L658.21 429.68 L656.81 428.05 L655.43 426.42 L654.06 424.78 L652.72 423.15 L651.39 421.52 L650.08 419.89 L648.79 418.26 L647.53 416.63 L646.28 415.00 L645.05 413.37 L643.84 411.74 L642.65 410.11 L641.48 408.47 L640.33 406.84 L639.20 405.21 L638.08 403.58 L636.99 401.95 L635.92 400.32 L634.87 398.69 L633.84 397.06 L632.83 395.43 L631.85 393.80 L630.88 392.16 L629.93 390.53 L629.00 388.90 L628.10 387.27 L627.21 385.64 L626.35 384.01 L625.51 382.38 L624.69 380.75 L623.88 379.12 L623.11 377.49 L622.35 375.85 L621.61 374.22 L620.90 372.59 L620.20 370.96 L619.53 369.33 L618.88 367.70 L618.25 366.07 L617.64 364.44 L617.05 362.81 L616.49 361.18 L615.95 359.54 L615.43 357.91 L614.93 356.28 L614.45 354.65 L614.00 353.02 L613.56 351.39 L613.15 349.76 L612.76 348.13 L612.40 346.50 L612.05 344.87 L611.73 343.23 L611.43 341.60 L611.15 339.97 L610.90 338.34 L610.66 336.71 L610.45 335.08 L610.26 333.45 L610.09 331.82 L609.95 330.19 L609.83 328.56 L609.72 326.92 L609.65 325.29 L609.59 323.66 L609.56 322.03 L609.55 320.40 L609.56 318.77 L609.59 317.14 L609.65 315.51 L609.72 313.88 L609.83 312.24 L609.95 310.61 L610.09 308.98 L610.26 307.35 L610.45 305.72 L610.66 304.09 L610.90 302.46 L611.15 300.83 L611.43 299.20 L611.73 297.57 L612.05 295.93 L612.40 294.30 L612.76 292.67 L613.15 291.04 L613.56 289.41 L614.00 287.78 L614.45 286.15 L614.93 284.52 L615.43 282.89 L615.95 281.26 L616.49 279.62 L617.05 277.99 L617.64 276.36 L618.25 274.73 L618.88 273.10 L619.53 271.47 L620.20 269.84 L620.90 268.21 L621.61 266.58 L622.35 264.95 L623.11 263.31 L623.88 261.68 L624.69 260.05 L625.51 258.42 L626.35 256.79 L627.21 255.16 L628.10 253.53 L629.00 251.90 L629.93 250.27 L630.88 248.64 L631.85 247.00 L632.83 245.37 L633.84 243.74 L634.87 242.11 L635.92 240.48 L636.99 238.85 L638.08 237.22 L639.20 235.59 L640.33 233.96 L641.48 232.33 L642.65 230.69 L643.84 229.06 L645.05 227.43 L646.28 225.80 L647.53 224.17 L648.79 222.54 L650.08 220.91 L651.39 219.28 L652.72 217.65 L654.06 216.02 L655.43 214.38 L656.81 212.75 L658.21 211.12 L659.63 209.49 L661.07 207.86 L662.53 206.23 L664.00 204.60 L665.50 202.97 L667.01 201.34 L668.54 199.71 L670.08 198.07 L671.65 196.44 L673.23 194.81 L674.83 193.18 L676.45 191.55 L678.08 189.92 L679.74 188.29 L681.41 186.66 L683.09 185.03 L684.79 183.40 L686.51 181.76 L688.25 180.13 L690.00 178.50 L691.77 176.87 L693.55 175.24 L695.35 173.61 L697.17 171.98 L699.00 170.35 L700.84 168.72 L702.71 167.09 L704.58 165.45 L706.48 163.82 L708.38 162.19 L710.31 160.56 L712.24 158.93 L714.19 157.30 L716.16 155.67 L718.14 154.04 L720.13 152.41 L722.14 150.77 L724.16 149.14 L726.20 147.51 L728.24 145.88 L730.31 144.25 L732.38 142.62 L734.47 140.99 L736.57 139.36 L738.68 137.73 L740.81 136.10 L742.95 134.46 L745.10 132.83 L747.26 131.20 L749.43 129.57 L751.62 127.94 L753.81 126.31 L756.02 124.68 L758.24 123.05 L760.47 121.42 L762.71 119.79 L764.97 118.15 L767.23 116.52 L769.50 114.89 L771.78 113.26 L774.08 111.63 L776.38 110.00 L778.69 108.37 L781.01 106.74 L783.35 105.11 L785.69 103.48 L788.03 101.84 L790.39 100.21 L792.76 98.58 L795.13 96.95 L797.51 95.32 L799.91 93.69 L802.30 92.06 L804.71 90.43 L807.12 88.80 L809.54 87.17 L811.97 85.53 L814.41 83.90 L816.85 82.27 L819.30 80.64 L821.75 79.01 L824.21 77.38 L826.68 75.75 L829.15 74.12 L831.63 72.49 L834.11 70.86 L836.60 69.22 L839.09 67.59 L841.59 65.96 L844.09 64.33 L846.60 62.70 L849.11 61.07 L851.63 59.44 L854.15 57.81 L856.67 56.18 L859.20 54.55 L861.73 52.91 L864.26 51.28 L866.80 49.65 L869.34 48.02 L871.88 46.39 L874.42 44.76 L876.97 43.13 L879.52 41.50 L882.06 39.87 L884.62 38.24 L887.17 36.60 L889.72 34.97 L892.28 33.34 L894.83 31.71 L897.39 30.08 L899.94 28.45 L902.50 26.82"/>
<path d="M902.50 613.98 L899.52 612.35 L896.54 610.72 L893.55 609.09 L890.57 607.46 L887.59 605.83 L884.61 604.20 L881.63 602.56 L878.66 600.93 L875.68 599.30 L872.71 597.67 L869.74 596.04 L866.77 594.41 L863.81 592.78 L860.85 591.15 L857.89 589.52 L854.93 587.89 L851.98 586.25 L849.03 584.62 L846.09 582.99 L843.15 581.36 L840.22 579.73 L837.29 578.10 L834.36 576.47 L831.44 574.84 L828.53 573.21 L825.62 571.58 L822.71 569.94 L819.82 568.31 L816.93 566.68 L814.04 565.05 L811.16 563.42 L808.29 561.79 L805.43 560.16 L802.57 558.53 L799.73 556.90 L796.88 555.27 L794.05 553.63 L791.23 552.00 L788.41 550.37 L785.60 548.74 L782.81 547.11 L780.02 545.48 L777.24 543.85 L774.47 542.22 L771.71 540.59 L768.96 538.96 L766.22 537.32 L763.49 535.69 L760.77 534.06 L758.06 532.43 L755.36 530.80 L752.67 529.17 L750.00 527.54 L747.34 525.91 L744.68 524.28 L742.04 522.65 L739.42 521.01 L736.80 519.38 L734.20 517.75 L731.61 516.12 L729.03 514.49 L726.47 512.86 L723.92 511.23 L721.38 509.60 L718.86 507.97 L716.35 506.34 L713.86 504.70 L711.38 503.07 L708.91 501.44 L706.46 499.81 L704.03 498.18 L701.61 496.55 L699.20 494.92 L696.81 493.29 L694.44 491.66 L692.08 490.03 L689.74 488.39 L687.41 486.76 L685.10 485.13 L682.81 483.50 L680.53 481.87 L678.27 480.24 L676.03 478.61 L673.81 476.98 L671.60 475.35 L669.41 473.71 L667.23 472.08 L665.08 470.45 L662.94 468.82 L660.83 467.19 L658.73 465.56 L656.64 463.93 L654.58 462.30 L652.54 460.67 L650.51 459.04 L648.51 457.40 L646.52 455.77 L644.56 454.14 L642.61 452.51 L640.68 450.88 L638.77 449.25 L636.89 447.62 L635.02 445.99 L633.17 444.36 L631.35 442.73 L629.54 441.09 L627.76 439.46 L625.99 437.83 L624.25 436.20 L622.53 434.57 L620.83 432.94 L619.15 431.31 L617.50 429.68 L615.86 428.05 L614.25 426.42 L612.65 424.78 L611.09 423.15 L609.54 421.52 L608.01 419.89 L606.51 418.26 L605.03 416.63 L603.57 415.00 L602.14 413.37 L600.73 411.74 L599.34 410.11 L597.97 408.47 L596.63 406.84 L595.31 405.21 L594.02 403.58 L592.74 401.95 L591.49 400.32 L590.27 398.69 L589.07 397.06 L587.89 395.43 L586.74 393.80 L585.61 392.16 L584.50 390.53 L583.42 388.90 L582.37 387.27 L581.33 385.64 L580.32 384.01 L579.34 382.38 L578.38 380.75 L577.45 379.12 L576.54 377.49 L575.66 375.85 L574.80 374.22 L573.96 372.59 L573.15 370.96 L572.37 369.33 L571.61 367.70 L570.87 366.07 L570.16 364.44 L569.48 362.81 L568.82 361.18 L568.19 359.54 L567.58 357.91 L567.00 356.28 L566.44 354.65 L565.91 353.02 L565.41 351.39 L564.93 349.76 L564.48 348.13 L564.05 346.50 L563.64 344.87 L563.27 343.23 L562.92 341.60 L562.59 339.97 L562.29 338.34 L562.02 336.71 L561.77 335.08 L561.55 333.45 L561.36 331.82 L561.19 330.19 L561.05 328.56 L560.93 326.92 L560.84 325.29 L560.77 323.66 L560.73 322.03 L560.72 320.40 L560.73 318.77 L560.77 317.14 L560.84 315.51 L560.93 313.88 L561.05 312.24 L561.19 310.61 L561.36 308.98 L561.55 307.35 L561.77 305.72 L562.02 304.09 L562.29 302.46 L562.59 300.83 L562.92 299.20 L563.27 297.57 L563.64 295.93 L564.05 294.30 L564.48 292.67 L564.93 291.04 L565.41 289.41 L565.91 287.78 L566.44 286.15 L567.00 284.52 L567.58 282.89 L568.19 281.26 L568.82 279.62 L569.48 277.99 L570.16 276.36 L570.87 274.73 L571.61 273.10 L572.37 271.47 L573.15 269.84 L573.96 268.21 L574.80 266.58 L575.66 264.95 L576.54 263.31 L577.45 261.68 L578.38 260.05 L579.34 258.42 L580.32 256.79 L581.33 255.16 L582.37 253.53 L583.42 251.90 L584.50 250.27 L585.61 248.64 L586.74 247.00 L587.89 245.37 L589.07 243.74 L590.27 242.11 L591.49 240.48 L592.74 238.85 L594.02 237.22 L595.31 235.59 L596.63 233.96 L597.97 232.33 L599.34 230.69 L600.73 229.06 L602.14 227.43 L603.57 225.80 L605.03 224.17 L606.51 222.54 L608.01 220.91 L609.54 219.28 L611.09 217.65 L612.65 216.02 L614.25 214.38 L615.86 212.75 L617.50 211.12 L619.15 209.49 L620.83 207.86 L622.53 206.23 L624.25 204.60 L625.99 202.97 L627.76 201.34 L629.54 199.71 L631.35 198.07 L633.17 196.44 L635.02 194.81 L636.89 193.18 L638.77 191.55 L640.68 189.92 L642.61 188.29 L644.56 186.66 L646.52 185.03 L648.51 183.40 L650.51 181.76 L652.54 180.13 L654.58 178.50 L656.64 176.87 L658.73 175.24 L660.83 173.61 L662.94 171.98 L665.08 170.35 L667.23 168.72 L669.41 167.09 L671.60 165.45 L673.81 163.82 L676.03 162.19 L678.27 160.56 L680.53 158.93 L682.81 157.30 L685.10 155.67 L687.41 154.04 L689.74 152.41 L692.08 150.77 L694.44 149.14 L696.81 147.51 L699.20 145.88 L701.61 144.25 L704.03 142.62 L706.46 140.99 L708.91 139.36 L711.38 137.73 L713.86 136.10 L716.35 134.46 L718.86 132.83 L721.38 131.20 L723.92 129.57 L726.47 127.94 L729.03 126.31 L731.61 124.68 L734.20 123.05 L736.80 121.42 L739.42 119.79 L742.04 118.15 L744.68 116.52 L747.34 114.89 L750.00 113.26 L752.67 111.63 L755.36 110.00 L758.06 108.37 L760.77 106.74 L763.49 105.11 L766.22 103.48 L768.96 101.84 L771.71 100.21 L774.47 98.58 L777.24 96.95 L780.02 95.32 L782.81 93.69 L785.60 92.06 L788.41 90.43 L791.23 88.80 L794.05 87.17 L796.88 85.53 L799.73 83.90 L802.57 82.27 L805.43 80.64 L808.29 79.01 L811.16 77.38 L814.04 75.75 L816.93 74.12 L819.82 72.49 L822.71 70.86 L825.62 69.22 L828.53 67.59 L831.44 65.96 L834.36 64.33 L837.29 62.70 L840.22 61.07 L843.15 59.44 L846.09 57.81 L849.03 56.18 L851.98 54.55 L854.93 52.91 L857.89 51.28 L860.85 49.65 L863.81 48.02 L866.77 46.39 L869.74 44.76 L872.71 43.13 L875.68 41.50 L878.66 39.87 L881.63 38.24 L884.61 36.60 L887.59 34.97 L890.57 33.34 L893.55 31.71 L896.54 30.08 L899.52 28.45 L902.50 26.82"/>
<path d="M902.50 613.98 L899.09 612.35 L895.68 610.72 L892.28 609.09 L888.87 607.46 L885.46 605.83 L882.06 604.20 L878.65 602.56 L875.25 600.93 L871.85 599.30 L868.46 597.67 L865.06 596.04 L861.67 594.41 L858.28 592.78 L854.90 591.15 L851.52 589.52 L848.14 587.89 L844.76 586.25 L841.40 584.62 L838.03 582.99 L834.67 581.36 L831.32 579.73 L827.97 578.10 L824.63 576.47 L821.29 574.84 L817.96 573.21 L814.63 571.58 L811.32 569.94 L808.00 568.31 L804.70 566.68 L801.40 565.05 L798.12 563.42 L794.83 561.79 L791.56 560.16 L788.30 558.53 L785.04 556.90 L781.80 555.27 L778.56 553.63 L775.33 552.00 L772.11 550.37 L768.91 548.74 L765.71 547.11 L762.52 545.48 L759.34 543.85 L756.18 542.22 L753.02 540.59 L749.88 538.96 L746.75 537.32 L743.63 535.69 L740.52 534.06 L737.42 532.43 L734.34 530.80 L731.27 529.17 L728.21 527.54 L725.17 525.91 L722.14 524.28 L719.12 522.65 L716.12 521.01 L713.13 519.38 L710.16 517.75 L707.20 516.12 L704.25 514.49 L701.32 512.86 L698.41 511.23 L695.51 509.60 L692.63 507.97 L689.76 506.34 L686.91 504.70 L684.08 503.07 L681.26 501.44 L678.46 499.81 L675.67 498.18 L672.91 496.55 L670.16 494.92 L667.43 493.29 L664.71 491.66 L662.02 490.03 L659.34 488.39 L656.68 486.76 L654.04 485.13 L651.42 483.50 L648.82 481.87 L646.24 480.24 L643.68 478.61 L641.13 476.98 L638.61 475.35 L636.11 473.71 L633.63 472.08 L631.16 470.45 L628.72 468.82 L626.30 467.19 L623.90 465.56 L621.52 463.93 L619.17 462.30 L616.83 460.67 L614.52 459.04 L612.22 457.40 L609.95 455.77 L607.71 454.14 L605.48 452.51 L603.28 450.88 L601.10 449.25 L598.94 447.62 L596.81 445.99 L594.70 444.36 L592.61 442.73 L590.55 441.09 L588.51 439.46 L586.49 437.83 L584.50 436.20 L582.54 434.57 L580.59 432.94 L578.67 431.31 L576.78 429.68 L574.91 428.05 L573.07 426.42 L571.25 424.78 L569.45 423.15 L567.69 421.52 L565.94 419.89 L564.23 418.26 L562.53 416.63 L560.87 415.00 L559.23 413.37 L557.62 411.74 L556.03 410.11 L554.47 408.47 L552.93 406.84 L551.43 405.21 L549.95 403.58 L548.49 401.95 L547.06 400.32 L545.66 398.69 L544.29 397.06 L542.95 395.43 L541.63 393.80 L540.34 392.16 L539.07 390.53 L537.84 388.90 L536.63 387.27 L535.45 385.64 L534.30 384.01 L533.18 382.38 L532.08 380.75 L531.01 379.12 L529.97 377.49 L528.96 375.85 L527.98 374.22 L527.03 372.59 L526.10 370.96 L525.20 369.33 L524.34 367.70 L523.50 366.07 L522.69 364.44 L521.91 362.81 L521.15 361.18 L520.43 359.54 L519.74 357.91 L519.07 356.28 L518.44 354.65 L517.83 353.02 L517.25 351.39 L516.70 349.76 L516.19 348.13 L515.70 346.50 L515.24 344.87 L514.81 343.23 L514.41 341.60 L514.04 339.97 L513.69 338.34 L513.38 336.71 L513.10 335.08 L512.85 333.45 L512.62 331.82 L512.43 330.19 L512.27 328.56 L512.13 326.92 L512.03 325.29 L511.95 323.66 L511.91 322.03 L511.90 320.40 L511.91 318.77 L511.95 317.14 L512.03 315.51 L512.13 313.88 L512.27 312.24 L512.43 310.61 L512.62 308.98 L512.85 307.35 L513.10 305.72 L513.38 304.09 L513.69 302.46 L514.04 300.83 L514.41 299.20 L514.81 297.57 L515.24 295.93 L515.70 294.30 L516.19 292.67 L516.70 291.04 L517.25 289.41 L517.83 287.78 L518.44 286.15 L519.07 284.52 L519.74 282.89 L520.43 281.26 L521.15 279.62 L521.91 277.99 L522.69 276.36 L523.50 274.73 L524.34 273.10 L525.20 271.47 L526.10 269.84 L527.03 268.21 L527.98 266.58 L528.96 264.95 L529.97 263.31 L531.01 261.68 L532.08 260.05 L533.18 258.42 L534.30 256.79 L535.45 255.16 L536.63 253.53 L537.84 251.90 L539.07 250.27 L540.34 248.64 L541.63 247.00 L542.95 245.37 L544.29 243.74 L545.66 242.11 L547.06 240.48 L548.49 238.85 L549.95 237.22 L551.43 235.59 L552.93 233.96 L554.47 232.33 L556.03 230.69 L557.62 229.06 L559.23 227.43 L560.87 225.80 L562.53 224.17 L564.23 222.54 L565.94 220.91 L567.69 219.28 L569.45 217.65 L571.25 216.02 L573.07 214.38 L574.91 212.75 L576.78 211.12 L578.67 209.49 L580.59 207.86 L582.54 206.23 L584.50 204.60 L586.49 202.97 L588.51 201.34 L590.55 199.71 L592.61 198.07 L594.70 196.44 L596.81 194.81 L598.94 193.18 L601.10 191.55 L603.28 189.92 L605.48 188.29 L607.71 186.66 L609.95 185.03 L612.22 183.40 L614.52 181.76 L616.83 180.13 L619.17 178.50 L621.52 176.87 L623.90 175.24 L626.30 173.61 L628.72 171.98 L631.16 170.35 L633.63 168.72 L636.11 167.09 L638.61 165.45 L641.13 163.82 L643.68 162.19 L646.24 160.56 L648.82 158.93 L651.42 157.30 L654.04 155.67 L656.68 154.04 L659.34 152.41 L662.02 150.77 L664.71 149.14 L667.43 147.51 L670.16 145.88 L672.91 144.25 L675.67 142.62 L678.46 140.99 L681.26 139.36 L684.08 137.73 L686.91 136.10 L689.76 134.46 L692.63 132.83 L695.51 131.20 L698.41 129.57 L701.32 127.94 L704.25 126.31 L707.20 124.68 L710.16 123.05 L713.13 121.42 L716.12 119.79 L719.12 118.15 L722.14 116.52 L725.17 114.89 L728.21 113.26 L731.27 111.63 L734.34 110.00 L737.42 108.37 L740.52 106.74 L743.63 105.11 L746.75 103.48 L749.88 101.84 L753.02 100.21 L756.18 98.58 L759.34 96.95 L762.52 95.32 L765.71 93.69 L768.91 92.06 L772.11 90.43 L775.33 88.80 L778.56 87.17 L781.80 85.53 L785.04 83.90 L788.30 82.27 L791.56 80.64 L794.83 79.01 L798.12 77.38 L801.40 75.75 L804.70 74.12 L808.00 72.49 L811.32 70.86 L814.63 69.22 L817.96 67.59 L821.29 65.96 L824.63 64.33 L827.97 62.70 L831.32 61.07 L834.67 59.44 L838.03 57.81 L841.40 56.18 L844.76 54.55 L848.14 52.91 L851.52 51.28 L854.90 49.65 L858.28 48.02 L861.67 46.39 L865.06 44.76 L868.46 43.13 L871.85 41.50 L875.25 39.87 L878.65 38.24 L882.06 36.60 L885.46 34.97 L888.87 33.34 L892.28 31.71 L895.68 30.08 L899.09 28.45 L902.50 26.82"/>
<path d="M902.50 613.98 L898.67 612.35 L894.83 610.72 L891.00 609.09 L887.16 607.46 L883.33 605.83 L879.50 604.20 L875.67 602.56 L871.85 600.93 L868.02 599.30 L864.20 597.67 L860.38 596.04 L856.57 594.41 L852.76 592.78 L848.95 591.15 L845.14 589.52 L841.34 587.89 L837.55 586.25 L833.76 584.62 L829.97 582.99 L826.19 581.36 L822.42 579.73 L818.65 578.10 L814.89 576.47 L811.14 574.84 L807.39 573.21 L803.65 571.58 L799.92 569.94 L796.19 568.31 L792.48 566.68 L788.77 565.05 L785.07 563.42 L781.38 561.79 L777.70 560.16 L774.02 558.53 L770.36 556.90 L766.71 555.27 L763.07 553.63 L759.44 552.00 L755.82 550.37 L752.21 548.74 L748.61 547.11 L745.02 545.48 L741.45 543.85 L737.89 542.22 L734.34 540.59 L730.80 538.96 L727.28 537.32 L723.77 535.69 L720.27 534.06 L716.79 532.43 L713.32 530.80 L709.87 529.17 L706.43 527.54 L703.00 525.91 L699.59 524.28 L696.20 522.65 L692.82 521.01 L689.46 519.38 L686.11 517.75 L682.78 516.12 L679.47 514.49 L676.18 512.86 L672.90 511.23 L669.64 509.60 L666.39 507.97 L663.17 506.34 L659.96 504.70 L656.77 503.07 L653.60 501.44 L650.45 499.81 L647.32 498.18 L644.21 496.55 L641.12 494.92 L638.04 493.29 L634.99 491.66 L631.96 490.03 L628.95 488.39 L625.96 486.76 L622.99 485.13 L620.04 483.50 L617.11 481.87 L614.21 480.24 L611.32 478.61 L608.46 476.98 L605.63 475.35 L602.81 473.71 L600.02 472.08 L597.25 470.45 L594.50 468.82 L591.78 467.19 L589.08 465.56 L586.40 463.93 L583.75 462.30 L581.12 460.67 L578.52 459.04 L575.94 457.40 L573.39 455.77 L570.86 454.14 L568.35 452.51 L565.88 450.88 L563.42 449.25 L561.00 447.62 L558.60 445.99 L556.22 444.36 L553.88 442.73 L551.56 441.09 L549.26 439.46 L546.99 437.83 L544.75 436.20 L542.54 434.57 L540.35 432.94 L538.20 431.31 L536.07 429.68 L533.96 428.05 L531.89 426.42 L529.84 424.78 L527.82 423.15 L525.83 421.52 L523.87 419.89 L521.94 418.26 L520.04 416.63 L518.17 415.00 L516.32 413.37 L514.51 411.74 L512.72 410.11 L510.96 408.47 L509.24 406.84 L507.54 405.21 L505.88 403.58 L504.24 401.95 L502.64 400.32 L501.06 398.69 L499.52 397.06 L498.00 395.43 L496.52 393.80 L495.07 392.16 L493.65 390.53 L492.26 388.90 L490.90 387.27 L489.57 385.64 L488.27 384.01 L487.01 382.38 L485.78 380.75 L484.58 379.12 L483.41 377.49 L482.27 375.85 L481.17 374.22 L480.09 372.59 L479.05 370.96 L478.04 369.33 L477.07 367.70 L476.12 366.07 L475.21 364.44 L474.33 362.81 L473.49 361.18 L472.67 359.54 L471.89 357.91 L471.14 356.28 L470.43 354.65 L469.75 353.02 L469.10 351.39 L468.48 349.76 L467.90 348.13 L467.35 346.50 L466.83 344.87 L466.35 343.23 L465.89 341.60 L465.48 339.97 L465.09 338.34 L464.74 336.71 L464.42 335.08 L464.14 333.45 L463.89 331.82 L463.67 330.19 L463.49 328.56 L463.34 326.92 L463.22 325.29 L463.14 323.66 L463.09 322.03 L463.07 320.40 L463.09 318.77 L463.14 317.14 L463.22 315.51 L463.34 313.88 L463.49 312.24 L463.67 310.61 L463.89 308.98 L464.14 307.35 L464.42 305.72 L464.74 304.09 L465.09 302.46 L465.48 300.83 L465.89 299.20 L466.35 297.57 L466.83 295.93 L467.35 294.30 L467.90 292.67 L468.48 291.04 L469.10 289.41 L469.75 287.78 L470.43 286.15 L471.14 284.52 L471.89 282.89 L472.67 281.26 L473.49 279.62 L474.33 277.99 L475.21 276.36 L476.12 274.73 L477.07 273.10 L478.04 271.47 L479.05 269.84 L480.09 268.21 L481.17 266.58 L482.27 264.95 L483.41 263.31 L484.58 261.68 L485.78 260.05 L487.01 258.42 L488.27 256.79 L489.57 255.16 L490.90 253.53 L492.26 251.90 L493.65 250.27 L495.07 248.64 L496.52 247.00 L498.00 245.37 L499.52 243.74 L501.06 242.11 L502.64 240.48 L504.24 238.85 L505.88 237.22 L507.54 235.59 L509.24 233.96 L510.96 232.33 L512.72 230.69 L514.51 229.06 L516.32 227.43 L518.17 225.80 L520.04 224.17 L521.94 222.54 L523.87 220.91 L525.83 219.28 L527.82 217.65 L529.84 216.02 L531.89 214.38 L533.96 212.75 L536.07 211.12 L538.20 209.49 L540.35 207.86 L542.54 206.23 L544.75 204.60 L546.99 202.97 L549.26 201.34 L551.56 199.71 L553.88 198.07 L556.22 196.44 L558.60 194.81 L561.00 193.18 L563.42 191.55 L565.88 189.92 L568.35 188.29 L570.86 186.66 L573.39 185.03 L575.94 183.40 L578.52 181.76 L581.12 180.13 L583.75 178.50 L586.40 176.87 L589.08 175.24 L591.78 173.61 L594.50 171.98 L597.25 170.35 L600.02 168.72 L602.81 167.09 L605.63 165.45 L608.46 163.82 L611.32 162.19 L614.21 160.56 L617.11 158.93 L620.04 157.30 L622.99 155.67 L625.96 154.04 L628.95 152.41 L631.96 150.77 L634.99 149.14 L638.04 147.51 L641.12 145.88 L644.21 144.25 L647.32 142.62 L650.45 140.99 L653.60 139.36 L656.77 137.73 L659.96 136.10 L663.17 134.46 L666.39 132.83 L669.64 131.20 L672.90 129.57 L676.18 127.94 L679.47 126.31 L682.78 124.68 L686.11 123.05 L689.46 121.42 L692.82 119.79 L696.20 118.15 L699.59 116.52 L703.00 114.89 L706.43 113.26 L709.87 111.63 L713.32 110.00 L716.79 108.37 L720.27 106.74 L723.77 105.11 L727.28 103.48 L730.80 101.84 L734.34 100.21 L737.89 98.58 L741.45 96.95 L745.02 95.32 L748.61 93.69 L752.21 92.06 L755.82 90.43 L759.44 88.80 L763.07 87.17 L766.71 85.53 L770.36 83.90 L774.02 82.27 L777.70 80.64 L781.38 79.01 L785.07 77.38 L788.77 75.75 L792.48 74.12 L796.19 72.49 L799.92 70.86 L803.65 69.22 L807.39 67.59 L811.14 65.96 L814.89 64.33 L818.65 62.70 L822.42 61.07 L826.19 59.44 L829.97 57.81 L833.76 56.18 L837.55 54.55 L841.34 52.91 L845.14 51.28 L848.95 49.65 L852.76 48.02 L856.57 46.39 L860.38 44.76 L864.20 43.13 L868.02 41.50 L871.85 39.87 L875.67 38.24 L879.50 36.60 L883.33 34.97 L887.16 33.34 L891.00 31.71 L894.83 30.08 L898.67 28.45 L902.50 26.82"/>
<path d="M902.50 613.98 L898.24 612.35 L893.98 610.72 L889.72 609.09 L885.46 607.46 L881.20 605.83 L876.95 604.20 L872.69 602.56 L868.44 600.93 L864.19 599.30 L859.95 597.67 L855.70 596.04 L851.46 594.41 L847.23 592.78 L843.00 591.15 L838.77 589.52 L834.55 587.89 L830.33 586.25 L826.12 584.62 L821.91 582.99 L817.72 581.36 L813.52 579.73 L809.34 578.10 L805.16 576.47 L800.99 574.84 L796.82 573.21 L792.67 571.58 L788.52 569.94 L784.38 568.31 L780.25 566.68 L776.13 565.05 L772.02 563.42 L767.92 561.79 L763.83 560.16 L759.75 558.53 L755.68 556.90 L751.62 555.27 L747.57 553.63 L743.54 552.00 L739.52 550.37 L735.51 548.74 L731.51 547.11 L727.52 545.48 L723.55 543.85 L719.60 542.22 L715.65 540.59 L711.72 538.96 L707.81 537.32 L703.91 535.69 L700.02 534.06 L696.15 532.43 L692.30 530.80 L688.46 529.17 L684.64 527.54 L680.84 525.91 L677.05 524.28 L673.28 522.65 L669.52 521.01 L665.79 519.38 L662.07 517.75 L658.37 516.12 L654.69 514.49 L651.03 512.86 L647.39 511.23 L643.76 509.60 L640.16 507.97 L636.58 506.34 L633.01 504.70 L629.47 503.07 L625.95 501.44 L622.45 499.81 L618.97 498.18 L615.51 496.55 L612.07 494.92 L608.66 493.29 L605.27 491.66 L601.90 490.03 L598.55 488.39 L595.23 486.76 L591.93 485.13 L588.66 483.50 L585.40 481.87 L582.18 480.24 L578.97 478.61 L575.79 476.98 L572.64 475.35 L569.51 473.71 L566.41 472.08 L563.33 470.45 L560.28 468.82 L557.25 467.19 L554.25 465.56 L551.28 463.93 L548.33 462.30 L545.41 460.67 L542.52 459.04 L539.66 457.40 L536.82 455.77 L534.01 454.14 L531.23 452.51 L528.47 450.88 L525.75 449.25 L523.05 447.62 L520.39 445.99 L517.75 444.36 L515.14 442.73 L512.56 441.09 L510.01 439.46 L507.49 437.83 L505.00 436.20 L502.54 434.57 L500.12 432.94 L497.72 431.31 L495.35 429.68 L493.01 428.05 L490.71 426.42 L488.44 424.78 L486.19 423.15 L483.98 421.52 L481.80 419.89 L479.66 418.26 L477.54 416.63 L475.46 415.00 L473.41 413.37 L471.40 411.74 L469.41 410.11 L467.46 408.47 L465.54 406.84 L463.66 405.21 L461.81 403.58 L459.99 401.95 L458.21 400.32 L456.46 398.69 L454.74 397.06 L453.06 395.43 L451.41 393.80 L449.80 392.16 L448.22 390.53 L446.67 388.90 L445.16 387.27 L443.69 385.64 L442.25 384.01 L440.85 382.38 L439.48 380.75 L438.14 379.12 L436.84 377.49 L435.58 375.85 L434.35 374.22 L433.16 372.59 L432.00 370.96 L430.88 369.33 L429.80 367.70 L428.75 366.07 L427.73 364.44 L426.76 362.81 L425.82 361.18 L424.91 359.54 L424.05 357.91 L423.21 356.28 L422.42 354.65 L421.66 353.02 L420.94 351.39 L420.26 349.76 L419.61 348.13 L419.00 346.50 L418.42 344.87 L417.88 343.23 L417.38 341.60 L416.92 339.97 L416.49 338.34 L416.10 336.71 L415.75 335.08 L415.43 333.45 L415.15 331.82 L414.91 330.19 L414.71 328.56 L414.54 326.92 L414.41 325.29 L414.32 323.66 L414.26 322.03 L414.24 320.40 L414.26 318.77 L414.32 317.14 L414.41 315.51 L414.54 313.88 L414.71 312.24 L414.91 310.61 L415.15 308.98 L415.43 307.35 L415.75 305.72 L416.10 304.09 L416.49 302.46 L416.92 300.83 L417.38 299.20 L417.88 297.57 L418.42 295.93 L419.00 294.30 L419.61 292.67 L420.26 291.04 L420.94 289.41 L421.66 287.78 L422.42 286.15 L423.21 284.52 L424.05 282.89 L424.91 281.26 L425.82 279.62 L426.76 277.99 L427.73 276.36 L428.75 274.73 L429.80 273.10 L430.88 271.47 L432.00 269.84 L433.16 268.21 L434.35 266.58 L435.58 264.95 L436.84 263.31 L438.14 261.68 L439.48 260.05 L440.85 258.42 L442.25 256.79 L443.69 255.16 L445.16 253.53 L446.67 251.90 L448.22 250.27 L449.80 248.64 L451.41 247.00 L453.06 245.37 L454.74 243.74 L456.46 242.11 L458.21 240.48 L459.99 238.85 L461.81 237.22 L463.66 235.59 L465.54 233.96 L467.46 232.33 L469.41 230.69 L471.40 229.06 L473.41 227.43 L475.46 225.80 L477.54 224.17 L479.66 222.54 L481.80 220.91 L483.98 219.28 L486.19 217.65 L488.44 216.02 L490.71 214.38 L493.01 212.75 L495.35 211.12 L497.72 209.49 L500.12 207.86 L502.54 206.23 L505.00 204.60 L507.49 202.97 L510.01 201.34 L512.56 199.71 L515.14 198.07 L517.75 196.44 L520.39 194.81 L523.05 193.18 L525.75 191.55 L528.47 189.92 L531.23 188.29 L534.01 186.66 L536.82 185.03 L539.66 183.40 L542.52 181.76 L545.41 180.13 L548.33 178.50 L551.28 176.87 L554.25 175.24 L557.25 173.61 L560.28 171.98 L563.33 170.35 L566.41 168.72 L569.51 167.09 L572.64 165.45 L575.79 163.82 L578.97 162.19 L582.18 160.56 L585.40 158.93 L588.66 157.30 L591.93 155.67 L595.23 154.04 L598.55 152.41 L601.90 150.77 L605.27 149.14 L608.66 147.51 L612.07 145.88 L615.51 144.25 L618.97 142.62 L622.45 140.99 L625.95 139.36 L629.47 137.73 L633.01 136.10 L636.58 134.46 L640.16 132.83 L643.76 131.20 L647.39 129.57 L651.03 127.94 L654.69 126.31 L658.37 124.68 L662.07 123.05 L665.79 121.42 L669.52 119.79 L673.28 118.15 L677.05 116.52 L680.84 114.89 L684.64 113.26 L688.46 111.63 L692.30 110.00 L696.15 108.37 L700.02 106.74 L703.91 105.11 L707.81 103.48 L711.72 101.84 L715.65 100.21 L719.60 98.58 L723.55 96.95 L727.52 95.32 L731.51 93.69 L735.51 92.06 L739.52 90.43 L743.54 88.80 L747.57 87.17 L751.62 85.53 L755.68 83.90 L759.75 82.27 L763.83 80.64 L767.92 79.01 L772.02 77.38 L776.13 75.75 L780.25 74.12 L784.38 72.49 L788.52 70.86 L792.67 69.22 L796.82 67.59 L800.99 65.96 L805.16 64.33 L809.34 62.70 L813.52 61.07 L817.72 59.44 L821.91 57.81 L826.12 56.18 L830.33 54.55 L834.55 52.91 L838.77 51.28 L843.00 49.65 L847.23 48.02 L851.46 46.39 L855.70 44.76 L859.95 43.13 L864.19 41.50 L868.44 39.87 L872.69 38.24 L876.95 36.60 L881.20 34.97 L885.46 33.34 L889.72 31.71 L893.98 30.08 L898.24 28.45 L902.50 26.82"/>
<path d="M902.50 613.98 L897.81 612.35 L893.13 610.72 L888.44 609.09 L883.76 607.46 L879.07 605.83 L874.39 604.20 L869.71 602.56 L865.04 600.93 L860.36 599.30 L855.69 597.67 L851.02 596.04 L846.36 594.41 L841.70 592.78 L837.05 591.15 L832.40 589.52 L827.75 587.89 L823.11 586.25 L818.48 584.62 L813.86 582.99 L809.24 581.36 L804.62 579.73 L800.02 578.10 L795.42 576.47 L790.83 574.84 L786.25 573.21 L781.68 571.58 L777.12 569.94 L772.57 568.31 L768.03 566.68 L763.49 565.05 L758.97 563.42 L754.46 561.79 L749.96 560.16 L745.47 558.53 L741.00 556.90 L736.53 555.27 L732.08 553.63 L727.64 552.00 L723.22 550.37 L718.81 548.74 L714.41 547.11 L710.03 545.48 L705.66 543.85 L701.31 542.22 L696.97 540.59 L692.65 538.96 L688.34 537.32 L684.05 535.69 L679.78 534.06 L675.52 532.43 L671.28 530.80 L667.06 529.17 L662.86 527.54 L658.67 525.91 L654.50 524.28 L650.36 522.65 L646.23 521.01 L642.12 519.38 L638.03 517.75 L633.96 516.12 L629.91 514.49 L625.88 512.86 L621.88 511.23 L617.89 509.60 L613.93 507.97 L609.98 506.34 L606.06 504.70 L602.17 503.07 L598.29 501.44 L594.44 499.81 L590.62 498.18 L586.81 496.55 L583.03 494.92 L579.28 493.29 L575.55 491.66 L571.84 490.03 L568.16 488.39 L564.50 486.76 L560.87 485.13 L557.27 483.50 L553.69 481.87 L550.14 480.24 L546.62 478.61 L543.12 476.98 L539.65 475.35 L536.21 473.71 L532.80 472.08 L529.41 470.45 L526.05 468.82 L522.73 467.19 L519.43 465.56 L516.16 463.93 L512.91 462.30 L509.70 460.67 L506.52 459.04 L503.37 457.40 L500.25 455.77 L497.16 454.14 L494.10 452.51 L491.07 450.88 L488.07 449.25 L485.11 447.62 L482.18 445.99 L479.27 444.36 L476.40 442.73 L473.57 441.09 L470.76 439.46 L467.99 437.83 L465.25 436.20 L462.55 434.57 L459.88 432.94 L457.24 431.31 L454.64 429.68 L452.07 428.05 L449.53 426.42 L447.03 424.78 L444.56 423.15 L442.13 421.52 L439.73 419.89 L437.37 418.26 L435.05 416.63 L432.76 415.00 L430.50 413.37 L428.29 411.74 L426.10 410.11 L423.96 408.47 L421.85 406.84 L419.77 405.21 L417.74 403.58 L415.74 401.95 L413.78 400.32 L411.85 398.69 L409.96 397.06 L408.11 395.43 L406.30 393.80 L404.53 392.16 L402.79 390.53 L401.09 388.90 L399.43 387.27 L397.81 385.64 L396.22 384.01 L394.68 382.38 L393.17 380.75 L391.71 379.12 L390.28 377.49 L388.89 375.85 L387.54 374.22 L386.22 372.59 L384.95 370.96 L383.72 369.33 L382.53 367.70 L381.37 366.07 L380.26 364.44 L379.18 362.81 L378.15 361.18 L377.16 359.54 L376.20 357.91 L375.29 356.28 L374.41 354.65 L373.58 353.02 L372.78 351.39 L372.03 349.76 L371.32 348.13 L370.65 346.50 L370.01 344.87 L369.42 343.23 L368.87 341.60 L368.36 339.97 L367.89 338.34 L367.46 336.71 L367.07 335.08 L366.73 333.45 L366.42 331.82 L366.15 330.19 L365.93 328.56 L365.75 326.92 L365.60 325.29 L365.50 323.66 L365.44 322.03 L365.42 320.40 L365.44 318.77 L365.50 317.14 L365.60 315.51 L365.75 313.88 L365.93 312.24 L366.15 310.61 L366.42 308.98 L366.73 307.35 L367.07 305.72 L367.46 304.09 L367.89 302.46 L368.36 300.83 L368.87 299.20 L369.42 297.57 L370.01 295.93 L370.65 294.30 L371.32 292.67 L372.03 291.04 L372.78 289.41 L373.58 287.78 L374.41 286.15 L375.29 284.52 L376.20 282.89 L377.16 281.26 L378.15 279.62 L379.18 277.99 L380.26 276.36 L381.37 274.73 L382.53 273.10 L383.72 271.47 L384.95 269.84 L386.22 268.21 L387.54 266.58 L388.89 264.95 L390.28 263.31 L391.71 261.68 L393.17 260.05 L394.68 258.42 L396.22 256.79 L397.81 255.16 L399.43 253.53 L401.09 251.90 L402.79 250.27 L404.53 248.64 L406.30 247.00 L408.11 245.37 L409.96 243.74 L411.85 242.11 L413.78 240.48 L415.74 238.85 L417.74 237.22 L419.77 235.59 L421.85 233.96 L423.96 232.33 L426.10 230.69 L428.29 229.06 L430.50 227.43 L432.76 225.80 L435.05 224.17 L437.37 222.54 L439.73 220.91 L442.13 219.28 L444.56 217.65 L447.03 216.02 L449.53 214.38 L452.07 212.75 L454.64 211.12 L457.24 209.49 L459.88 207.86 L462.55 206.23 L465.25 204.60 L467.99 202.97 L470.76 201.34 L473.57 199.71 L476.40 198.07 L479.27 196.44 L482.18 194.81 L485.11 193.18 L488.07 191.55 L491.07 189.92 L494.10 188.29 L497.16 186.66 L500.25 185.03 L503.37 183.40 L506.52 181.76 L509.70 180.13 L512.91 178.50 L516.16 176.87 L519.43 175.24 L522.73 173.61 L526.05 171.98 L529.41 170.35 L532.80 168.72 L536.21 167.09 L539.65 165.45 L543.12 163.82 L546.62 162.19 L550.14 160.56 L553.69 158.93 L557.27 157.30 L560.87 155.67 L564.50 154.04 L568.16 152.41 L571.84 150.77 L575.55 149.14 L579.28 147.51 L583.03 145.88 L586.81 144.25 L590.62 142.62 L594.44 140.99 L598.29 139.36 L602.17 137.73 L606.06 136.10 L609.98 134.46 L613.93 132.83 L617.89 131.20 L621.88 129.57 L625.88 127.94 L629.91 126.31 L633.96 124.68 L638.03 123.05 L642.12 121.42 L646.23 119.79 L650.36 118.15 L654.50 116.52 L658.67 114.89 L662.86 113.26 L667.06 111.63 L671.28 110.00 L675.52 108.37 L679.78 106.74 L684.05 105.11 L688.34 103.48 L692.65 101.84 L696.97 100.21 L701.31 98.58 L705.66 96.95 L710.03 95.32 L714.41 93.69 L718.81 92.06 L723.22 90.43 L727.64 88.80 L732.08 87.17 L736.53 85.53 L741.00 83.90 L745.47 82.27 L749.96 80.64 L754.46 79.01 L758.97 77.38 L763.49 75.75 L768.03 74.12 L772.57 72.49 L777.12 70.86 L781.68 69.22 L786.25 67.59 L790.83 65.96 L795.42 64.33 L800.02 62.70 L804.62 61.07 L809.24 59.44 L813.86 57.81 L818.48 56.18 L823.11 54.55 L827.75 52.91 L832.40 51.28 L837.05 49.65 L841.70 48.02 L846.36 46.39 L851.02 44.76 L855.69 43.13 L860.36 41.50 L865.04 39.87 L869.71 38.24 L874.39 36.60 L879.07 34.97 L883.76 33.34 L888.44 31.71 L893.13 30.08 L897.81 28.45 L902.50 26.82"/>
<path d="M902.50 613.98 L897.39 612.35 L892.27 610.72 L887.16 609.09 L882.05 607.46 L876.94 605.83 L871.84 604.20 L866.73 602.56 L861.63 600.93 L856.53 599.30 L851.43 597.67 L846.34 596.04 L841.26 594.41 L836.17 592.78 L831.10 591.15 L826.02 589.52 L820.96 587.89 L815.90 586.25 L810.84 584.62 L805.80 582.99 L800.76 581.36 L795.73 579.73 L790.70 578.10 L785.69 576.47 L780.68 574.84 L775.69 573.21 L770.70 571.58 L765.72 569.94 L760.76 568.31 L755.80 566.68 L750.86 565.05 L745.92 563.42 L741.00 561.79 L736.09 560.16 L731.20 558.53 L726.31 556.90 L721.44 555.27 L716.59 553.63 L711.75 552.00 L706.92 550.37 L702.11 548.74 L697.31 547.11 L692.53 545.48 L687.76 543.85 L683.02 542.22 L678.28 540.59 L673.57 538.96 L668.87 537.32 L664.19 535.69 L659.53 534.06 L654.88 532.43 L650.26 530.80 L645.66 529.17 L641.07 527.54 L636.50 525.91 L631.96 524.28 L627.43 522.65 L622.93 521.01 L618.45 519.38 L613.99 517.75 L609.55 516.12 L605.13 514.49 L600.74 512.86 L596.36 511.23 L592.02 509.60 L587.69 507.97 L583.39 506.34 L579.12 504.70 L574.86 503.07 L570.64 501.44 L566.44 499.81 L562.26 498.18 L558.11 496.55 L553.99 494.92 L549.89 493.29 L545.82 491.66 L541.78 490.03 L537.76 488.39 L533.78 486.76 L529.82 485.13 L525.89 483.50 L521.98 481.87 L518.11 480.24 L514.27 478.61 L510.45 476.98 L506.67 475.35 L502.91 473.71 L499.19 472.08 L495.49 470.45 L491.83 468.82 L488.20 467.19 L484.60 465.56 L481.03 463.93 L477.50 462.30 L473.99 460.67 L470.52 459.04 L467.09 457.40 L463.68 455.77 L460.31 454.14 L456.97 452.51 L453.67 450.88 L450.40 449.25 L447.16 447.62 L443.96 445.99 L440.80 444.36 L437.67 442.73 L434.57 441.09 L431.51 439.46 L428.49 437.83 L425.50 436.20 L422.55 434.57 L419.64 432.94 L416.76 431.31 L413.92 429.68 L411.12 428.05 L408.35 426.42 L405.62 424.78 L402.93 423.15 L400.28 421.52 L397.67 419.89 L395.09 418.26 L392.55 416.63 L390.05 415.00 L387.59 413.37 L385.17 411.74 L382.79 410.11 L380.45 408.47 L378.15 406.84 L375.89 405.21 L373.67 403.58 L371.49 401.95 L369.35 400.32 L367.25 398.69 L365.19 397.06 L363.17 395.43 L361.19 393.80 L359.26 392.16 L357.36 390.53 L355.51 388.90 L353.70 387.27 L351.93 385.64 L350.20 384.01 L348.51 382.38 L346.87 380.75 L345.27 379.12 L343.71 377.49 L342.19 375.85 L340.72 374.22 L339.29 372.59 L337.90 370.96 L336.56 369.33 L335.26 367.70 L334.00 366.07 L332.78 364.44 L331.61 362.81 L330.48 361.18 L329.40 359.54 L328.36 357.91 L327.36 356.28 L326.40 354.65 L325.49 353.02 L324.63 351.39 L323.81 349.76 L323.03 348.13 L322.29 346.50 L321.61 344.87 L320.96 343.23 L320.36 341.60 L319.80 339.97 L319.29 338.34 L318.82 336.71 L318.40 335.08 L318.02 333.45 L317.69 331.82 L317.40 330.19 L317.15 328.56 L316.95 326.92 L316.79 325.29 L316.68 323.66 L316.62 322.03 L316.59 320.40 L316.62 318.77 L316.68 317.14 L316.79 315.51 L316.95 313.88 L317.15 312.24 L317.40 310.61 L317.69 308.98 L318.02 307.35 L318.40 305.72 L318.82 304.09 L319.29 302.46 L319.80 300.83 L320.36 299.20 L320.96 297.57 L321.61 295.93 L322.29 294.30 L323.03 292.67 L323.81 291.04 L324.63 289.41 L325.49 287.78 L326.40 286.15 L327.36 284.52 L328.36 282.89 L329.40 281.26 L330.48 279.62 L331.61 277.99 L332.78 276.36 L334.00 274.73 L335.26 273.10 L336.56 271.47 L337.90 269.84 L339.29 268.21 L340.72 266.58 L342.19 264.95 L343.71 263.31 L345.27 261.68 L346.87 260.05 L348.51 258.42 L350.20 256.79 L351.93 255.16 L353.70 253.53 L355.51 251.90 L357.36 250.27 L359.26 248.64 L361.19 247.00 L363.17 245.37 L365.19 243.74 L367.25 242.11 L369.35 240.48 L371.49 238.85 L373.67 237.22 L375.89 235.59 L378.15 233.96 L380.45 232.33 L382.79 230.69 L385.17 229.06 L387.59 227.43 L390.05 225.80 L392.55 224.17 L395.09 222.54 L397.67 220.91 L400.28 219.28 L402.93 217.65 L405.62 216.02 L408.35 214.38 L411.12 212.75 L413.92 211.12 L416.76 209.49 L419.64 207.86 L422.55 206.23 L425.50 204.60 L428.49 202.97 L431.51 201.34 L434.57 199.71 L437.67 198.07 L440.80 196.44 L443.96 194.81 L447.16 193.18 L450.40 191.55 L453.67 189.92 L456.97 188.29 L460.31 186.66 L463.68 185.03 L467.09 183.40 L470.52 181.76 L473.99 180.13 L477.50 178.50 L481.03 176.87 L484.60 175.24 L488.20 173.61 L491.83 171.98 L495.49 170.35 L499.19 168.72 L502.91 167.09 L506.67 165.45 L510.45 163.82 L514.27 162.19 L518.11 160.56 L521.98 158.93 L525.89 157.30 L529.82 155.67 L533.78 154.04 L537.76 152.41 L541.78 150.77 L545.82 149.14 L549.89 147.51 L553.99 145.88 L558.11 144.25 L562.26 142.62 L566.44 140.99 L570.64 139.36 L574.86 137.73 L579.12 136.10 L583.39 134.46 L587.69 132.83 L592.02 131.20 L596.36 129.57 L600.74 127.94 L605.13 126.31 L609.55 124.68 L613.99 123.05 L618.45 121.42 L622.93 119.79 L627.43 118.15 L631.96 116.52 L636.50 114.89 L641.07 113.26 L645.66 111.63 L650.26 110.00 L654.88 108.37 L659.53 106.74 L664.19 105.11 L668.87 103.48 L673.57 101.84 L678.28 100.21 L683.02 98.58 L687.76 96.95 L692.53 95.32 L697.31 93.69 L702.11 92.06 L706.92 90.43 L711.75 88.80 L716.59 87.17 L721.44 85.53 L726.31 83.90 L731.20 82.27 L736.09 80.64 L741.00 79.01 L745.92 77.38 L750.86 75.75 L755.80 74.12 L760.76 72.49 L765.72 70.86 L770.70 69.22 L775.69 67.59 L780.68 65.96 L785.69 64.33 L790.70 62.70 L795.73 61.07 L800.76 59.44 L805.80 57.81 L810.84 56.18 L815.90 54.55 L820.96 52.91 L826.02 51.28 L831.10 49.65 L836.17 48.02 L841.26 46.39 L846.34 44.76 L851.43 43.13 L856.53 41.50 L861.63 39.87 L866.73 38.24 L871.84 36.60 L876.94 34.97 L882.05 33.34 L887.16 31.71 L892.27 30.08 L897.39 28.45 L902.50 26.82"/>
</g><g stroke-dashoffset="0">
<path d="M901.90 565.00 L902.08 565.00 L901.66 565.00 L901.24 565.00 L900.82 565.00 L900.39 565.00 L899.97 565.00 L899.55 565.00 L899.13 565.00 L898.71 565.00 L898.29 565.00 L897.87 565.00 L897.45 565.00 L897.02 565.00 L896.60 565.00 L896.18 565.00 L895.76 565.00 L895.34 565.00 L894.92 565.00 L894.50 565.00 L894.08 565.00 L893.65 565.00 L893.23 565.00 L892.81 565.00 L892.39 565.00 L891.97 565.00 L891.55 565.00 L891.13 565.00 L890.71 565.00 L890.28 565.00 L889.86 565.00 L889.44 565.00 L889.02 565.00 L888.60 565.00 L888.18 565.00 L887.76 565.00 L887.34 565.00 L886.91 565.00 L886.49 565.00 L886.07 565.00 L885.65 565.00 L885.23 565.00 L884.81 565.00 L884.39 565.00 L883.97 565.00 L883.54 565.00 L883.12 565.00 L882.70 565.00 L882.28 565.00 L881.86 565.00 L881.44 565.00 L881.02 565.00 L880.60 565.00 L880.17 565.00 L879.75 565.00 L879.33 565.00 L878.91 565.00 L878.49 565.00 L878.07 565.00 L877.65 565.00 L877.23 565.00 L876.80 565.00 L876.38 565.00 L875.96 565.00 L875.54 565.00 L875.12 565.00 L874.70 565.00 L874.28 565.00 L873.86 565.00 L873.43 565.00 L873.01 565.00 L872.59 565.00 L872.17 565.00 L871.75 565.00 L871.33 565.00 L870.91 565.00 L870.49 565.00 L870.07 565.00 L869.64 565.00 L869.22 565.00 L868.80 565.00 L868.38 565.00 L867.96 565.00 L867.54 565.00 L867.12 565.00 L866.70 565.00 L866.27 565.00 L865.85 565.00 L865.43 565.00 L865.01 565.00 L864.59 565.00 L864.17 565.00 L863.75 565.00 L863.33 565.00 L862.90 565.00 L862.48 565.00 L862.06 565.00 L861.64 565.00 L861.22 565.00 L860.80 565.00 L860.38 565.00 L859.96 565.00 L859.53 565.00 L859.11 565.00 L858.69 565.00 L858.27 565.00 L857.85 565.00 L857.43 565.00 L857.01 565.00 L856.59 565.00 L856.16 565.00 L855.74 565.00 L855.32 565.00 L854.90 565.00 L854.48 565.00 L854.06 565.00 L853.64 565.00 L853.22 565.00 L852.79 565.00 L852.37 565.00 L851.95 565.00 L851.53 565.00 L851.11 565.00 L850.69 565.00 L850.27 565.00 L849.85 565.00 L849.42 565.00 L849.00 565.00 L848.58 565.00 L848.16 565.00 L847.74 565.00 L847.32 565.00 L846.90 565.00 L846.48 565.00 L846.05 565.00 L845.63 565.00 L845.21 565.00 L844.79 565.00 L844.37 565.00 L843.95 565.00 L843.53 565.00 L843.11 565.00 L842.68 565.00 L842.26 565.00 L841.84 565.00 L841.42 565.00 L841.00 565.00 L840.58 565.00 L840.16 565.00 L839.74 565.00 L839.32 565.00 L838.89 565.00 L838.47 565.00 L838.05 565.00 L837.63 565.00 L837.21 565.00 L836.79 565.00 L836.37 565.00 L835.95 565.00 L835.52 565.00 L835.10 565.00 L834.68 565.00 L834.26 565.00 L833.84 565.00 L833.42 565.00 L833.00 565.00 L832.58 565.00 L832.15 565.00 L831.73 565.00 L831.31 565.00 L830.89 565.00 L830.47 565.00 L830.05 565.00 L829.63 565.00 L829.21 565.00 L828.78 565.00 L828.36 565.00 L827.94 565.00 L827.52 565.00 L827.10 565.00 L826.68 565.00 L826.26 565.00 L825.84 565.00 L825.41 565.00 L824.99 565.00 L824.57 565.00 L824.15 565.00 L823.73 565.00 L823.31 565.00 L822.89 565.00 L822.47 565.00 L822.04 565.00 L821.62 565.00 L821.20 565.00 L820.78 565.00 L820.36 565.00 L819.94 565.00 L819.52 565.00 L819.10 565.00 L818.67 565.00 L818.25 565.00 L817.83 565.00 L817.41 565.00 L816.99 565.00 L816.57 565.00 L816.15 565.00 L815.73 565.00 L815.30 565.00 L814.88 565.00 L814.46 565.00 L814.04 565.00 L813.62 565.00 L813.20 565.00 L812.78 565.00 L812.36 565.00 L811.93 565.00 L811.51 565.00 L811.09 565.00 L810.67 565.00 L810.25 565.00 L809.83 565.00 L809.41 565.00 L808.99 565.00 L808.57 565.00 L808.14 565.00 L807.72 565.00 L807.30 565.00 L806.88 565.00 L806.46 565.00 L806.04 565.00 L805.62 565.00 L805.20 565.00 L804.77 565.00 L804.35 565.00 L803.93 565.00 L803.51 565.00 L803.09 565.00 L802.67 565.00 L802.25 565.00 L801.83 565.00 L801.40 565.00 L800.98 565.00 L800.56 565.00 L800.14 565.00 L799.72 565.00 L799.30 565.00 L798.88 565.00 L798.46 565.00 L798.03 565.00 L797.61 565.00 L797.19 565.00 L796.77 565.00 L796.35 565.00 L795.93 565.00 L795.51 565.00 L795.09 565.00 L794.66 565.00 L794.24 565.00 L793.82 565.00 L793.40 565.00 L792.98 565.00 L792.56 565.00 L792.14 565.00 L791.72 565.00 L791.29 565.00 L790.87 565.00 L790.45 565.00 L790.03 565.00 L789.61 565.00 L789.19 565.00 L788.77 565.00 L788.35 565.00 L787.92 565.00 L787.50 565.00 L787.08 565.00 L786.66 565.00 L786.24 565.00 L785.82 565.00 L785.40 565.00 L784.98 565.00 L784.55 565.00 L784.13 565.00 L783.71 565.00 L783.29 565.00 L782.87 565.00 L782.45 565.00 L782.03 565.00 L781.61 565.00 L781.18 565.00 L780.76 565.00 L780.34 565.00 L779.92 565.00 L779.50 565.00 L779.08 565.00 L778.66 565.00 L778.24 565.00 L777.82 565.00 L777.39 565.00 L776.97 565.00 L776.55 565.00 L776.13 565.00 L775.71 565.00 L775.29 565.00 L774.87 565.00 L774.45 565.00 L774.02 565.00 L773.60 565.00 L773.18 565.00 L772.76 565.00 L772.34 565.00 L771.92 565.00 L771.50 565.00 L771.08 565.00 L770.65 565.00 L770.23 565.00 L769.81 565.00 L769.39 565.00 L768.97 565.00 L768.55 565.00 L768.13 565.00 L767.71 565.00 L767.28 565.00 L766.86 565.00 L766.44 565.00 L766.02 565.00 L765.60 565.00 L765.18 565.00 L764.76 565.00 L764.34 565.00 L763.91 565.00 L763.49 565.00 L763.07 565.00 L762.65 565.00 L762.23 565.00 L761.81 565.00 L761.39 565.00 L760.97 565.00 L760.54 565.00 L760.12 565.00 L759.70 565.00 L759.28 565.00 L758.86 565.00 L758.44 565.00 L758.02 565.00 L757.60 565.00 L757.17 565.00 L756.75 565.00 L756.33 565.00 L755.91 565.00 L755.49 565.00 L755.07 565.00 L754.65 565.00 L754.23 565.00 L753.80 565.00 L753.38 565.00 L752.96 565.00 L752.54 565.00 L752.12 565.00 L751.70 565.00 L751.28 565.00 L750.86 565.00"/>
<path d="M1054.14 565.00 L1053.72 565.00 L1053.30 565.00 L1052.88 565.00 L1052.46 565.00 L1052.04 565.00 L1051.62 565.00 L1051.20 565.00 L1050.77 565.00 L1050.35 565.00 L1049.93 565.00 L1049.51 565.00 L1049.09 565.00 L1048.67 565.00 L1048.25 565.00 L1047.83 565.00 L1047.40 565.00 L1046.98 565.00 L1046.56 565.00 L1046.14 565.00 L1045.72 565.00 L1045.30 565.00 L1044.88 565.00 L1044.46 565.00 L1044.03 565.00 L1043.61 565.00 L1043.19 565.00 L1042.77 565.00 L1042.35 565.00 L1041.93 565.00 L1041.51 565.00 L1041.09 565.00 L1040.66 565.00 L1040.24 565.00 L1039.82 565.00 L1039.40 565.00 L1038.98 565.00 L1038.56 565.00 L1038.14 565.00 L1037.72 565.00 L1037.29 565.00 L1036.87 565.00 L1036.45 565.00 L1036.03 565.00 L1035.61 565.00 L1035.19 565.00 L1034.77 565.00 L1034.35 565.00 L1033.92 565.00 L1033.50 565.00 L1033.08 565.00 L1032.66 565.00 L1032.24 565.00 L1031.82 565.00 L1031.40 565.00 L1030.98 565.00 L1030.55 565.00 L1030.13 565.00 L1029.71 565.00 L1029.29 565.00 L1028.87 565.00 L1028.45 565.00 L1028.03 565.00 L1027.61 565.00 L1027.18 565.00 L1026.76 565.00 L1026.34 565.00 L1025.92 565.00 L1025.50 565.00 L1025.08 565.00 L1024.66 565.00 L1024.24 565.00 L1023.82 565.00 L1023.39 565.00 L1022.97 565.00 L1022.55 565.00 L1022.13 565.00 L1021.71 565.00 L1021.29 565.00 L1020.87 565.00 L1020.45 565.00 L1020.02 565.00 L1019.60 565.00 L1019.18 565.00 L1018.76 565.00 L1018.34 565.00 L1017.92 565.00 L1017.50 565.00 L1017.08 565.00 L1016.65 565.00 L1016.23 565.00 L1015.81 565.00 L1015.39 565.00 L1014.97 565.00 L1014.55 565.00 L1014.13 565.00 L1013.71 565.00 L1013.28 565.00 L1012.86 565.00 L1012.44 565.00 L1012.02 565.00 L1011.60 565.00 L1011.18 565.00 L1010.76 565.00 L1010.34 565.00 L1009.91 565.00 L1009.49 565.00 L1009.07 565.00 L1008.65 565.00 L1008.23 565.00 L1007.81 565.00 L1007.39 565.00 L1006.97 565.00 L1006.54 565.00 L1006.12 565.00 L1005.70 565.00 L1005.28 565.00 L1004.86 565.00 L1004.44 565.00 L1004.02 565.00 L1003.60 565.00 L1003.17 565.00 L1002.75 565.00 L1002.33 565.00 L1001.91 565.00 L1001.49 565.00 L1001.07 565.00 L1000.65 565.00 L1000.23 565.00 L999.80 565.00 L999.38 565.00 L998.96 565.00 L998.54 565.00 L998.12 565.00 L997.70 565.00 L997.28 565.00 L996.86 565.00 L996.43 565.00 L996.01 565.00 L995.59 565.00 L995.17 565.00 L994.75 565.00 L994.33 565.00 L993.91 565.00 L993.49 565.00 L993.07 565.00 L992.64 565.00 L992.22 565.00 L991.80 565.00 L991.38 565.00 L990.96 565.00 L990.54 565.00 L990.12 565.00 L989.70 565.00 L989.27 565.00 L988.85 565.00 L988.43 565.00 L988.01 565.00 L987.59 565.00 L987.17 565.00 L986.75 565.00 L986.33 565.00 L985.90 565.00 L985.48 565.00 L985.06 565.00 L984.64 565.00 L984.22 565.00 L983.80 565.00 L983.38 565.00 L982.96 565.00 L982.53 565.00 L982.11 565.00 L981.69 565.00 L981.27 565.00 L980.85 565.00 L980.43 565.00 L980.01 565.00 L979.59 565.00 L979.16 565.00 L978.74 565.00 L978.32 565.00 L977.90 565.00 L977.48 565.00 L977.06 565.00 L976.64 565.00 L976.22 565.00 L975.79 565.00 L975.37 565.00 L974.95 565.00 L974.53 565.00 L974.11 565.00 L973.69 565.00 L973.27 565.00 L972.85 565.00 L972.42 565.00 L972.00 565.00 L971.58 565.00 L971.16 565.00 L970.74 565.00 L970.32 565.00 L969.90 565.00 L969.48 565.00 L969.05 565.00 L968.63 565.00 L968.21 565.00 L967.79 565.00 L967.37 565.00 L966.95 565.00 L966.53 565.00 L966.11 565.00 L965.68 565.00 L965.26 565.00 L964.84 565.00 L964.42 565.00 L964.00 565.00 L963.58 565.00 L963.16 565.00 L962.74 565.00 L962.32 565.00 L961.89 565.00 L961.47 565.00 L961.05 565.00 L960.63 565.00 L960.21 565.00 L959.79 565.00 L959.37 565.00 L958.95 565.00 L958.52 565.00 L958.10 565.00 L957.68 565.00 L957.26 565.00 L956.84 565.00 L956.42 565.00 L956.00 565.00 L955.58 565.00 L955.15 565.00 L954.73 565.00 L954.31 565.00 L953.89 565.00 L953.47 565.00 L953.05 565.00 L952.63 565.00 L952.21 565.00 L951.78 565.00 L951.36 565.00 L950.94 565.00 L950.52 565.00 L950.10 565.00 L949.68 565.00 L949.26 565.00 L948.84 565.00 L948.41 565.00 L947.99 565.00 L947.57 565.00 L947.15 565.00 L946.73 565.00 L946.31 565.00 L945.89 565.00 L945.47 565.00 L945.04 565.00 L944.62 565.00 L944.20 565.00 L943.78 565.00 L943.36 565.00 L942.94 565.00 L942.52 565.00 L942.10 565.00 L941.67 565.00 L941.25 565.00 L940.83 565.00 L940.41 565.00 L939.99 565.00 L939.57 565.00 L939.15 565.00 L938.73 565.00 L938.30 565.00 L937.88 565.00 L937.46 565.00 L937.04 565.00 L936.62 565.00 L936.20 565.00 L935.78 565.00 L935.36 565.00 L934.93 565.00 L934.51 565.00 L934.09 565.00 L933.67 565.00 L933.25 565.00 L932.83 565.00 L932.41 565.00 L931.99 565.00 L931.57 565.00 L931.14 565.00 L930.72 565.00 L930.30 565.00 L929.88 565.00 L929.46 565.00 L929.04 565.00 L928.62 565.00 L928.20 565.00 L927.77 565.00 L927.35 565.00 L926.93 565.00 L926.51 565.00 L926.09 565.00 L925.67 565.00 L925.25 565.00 L924.83 565.00 L924.40 565.00 L923.98 565.00 L923.56 565.00 L923.14 565.00 L922.72 565.00 L922.30 565.00 L921.88 565.00 L921.46 565.00 L921.03 565.00 L920.61 565.00 L920.19 565.00 L919.77 565.00 L919.35 565.00 L918.93 565.00 L918.51 565.00 L918.09 565.00 L917.66 565.00 L917.24 565.00 L916.82 565.00 L916.40 565.00 L915.98 565.00 L915.56 565.00 L915.14 565.00 L914.72 565.00 L914.29 565.00 L913.87 565.00 L913.45 565.00 L913.03 565.00 L912.61 565.00 L912.19 565.00 L911.77 565.00 L911.35 565.00 L910.92 565.00 L910.50 565.00 L910.08 565.00 L909.66 565.00 L909.24 565.00 L908.82 565.00 L908.40 565.00 L907.98 565.00 L907.55 565.00 L907.13 565.00 L906.71 565.00 L906.29 565.00 L905.87 565.00 L905.45 565.00 L905.03 565.00 L904.61 565.00 L904.18 565.00 L903.76 565.00 L903.34 565.00 L902.92 565.00 L902.50 565.00"/>
<path d="M901.90 516.00 L901.69 516.00 L900.87 516.00 L900.06 516.00 L899.24 516.00 L898.43 516.00 L897.62 516.00 L896.80 516.00 L895.99 516.00 L895.18 516.00 L894.36 516.00 L893.55 516.00 L892.73 516.00 L891.92 516.00 L891.11 516.00 L890.29 516.00 L889.48 516.00 L888.67 516.00 L887.85 516.00 L887.04 516.00 L886.22 516.00 L885.41 516.00 L884.60 516.00 L883.78 516.00 L882.97 516.00 L882.16 516.00 L881.34 516.00 L880.53 516.00 L879.71 516.00 L878.90 516.00 L878.09 516.00 L877.27 516.00 L876.46 516.00 L875.65 516.00 L874.83 516.00 L874.02 516.00 L873.20 516.00 L872.39 516.00 L871.58 516.00 L870.76 516.00 L869.95 516.00 L869.14 516.00 L868.32 516.00 L867.51 516.00 L866.69 516.00 L865.88 516.00 L865.07 516.00 L864.25 516.00 L863.44 516.00 L862.63 516.00 L861.81 516.00 L861.00 516.00 L860.18 516.00 L859.37 516.00 L858.56 516.00 L857.74 516.00 L856.93 516.00 L856.12 516.00 L855.30 516.00 L854.49 516.00 L853.67 516.00 L852.86 516.00 L852.05 516.00 L851.23 516.00 L850.42 516.00 L849.61 516.00 L848.79 516.00 L847.98 516.00 L847.16 516.00 L846.35 516.00 L845.54 516.00 L844.72 516.00 L843.91 516.00 L843.10 516.00 L842.28 516.00 L841.47 516.00 L840.65 516.00 L839.84 516.00 L839.03 516.00 L838.21 516.00 L837.40 516.00 L836.59 516.00 L835.77 516.00 L834.96 516.00 L834.14 516.00 L833.33 516.00 L832.52 516.00 L831.70 516.00 L830.89 516.00 L830.08 516.00 L829.26 516.00 L828.45 516.00 L827.63 516.00 L826.82 516.00 L826.01 516.00 L825.19 516.00 L824.38 516.00 L823.57 516.00 L822.75 516.00 L821.94 516.00 L821.12 516.00 L820.31 516.00 L819.50 516.00 L818.68 516.00 L817.87 516.00 L817.06 516.00 L816.24 516.00 L815.43 516.00 L814.61 516.00 L813.80 516.00 L812.99 516.00 L812.17 516.00 L811.36 516.00 L810.55 516.00 L809.73 516.00 L808.92 516.00 L808.10 516.00 L807.29 516.00 L806.48 516.00 L805.66 516.00 L804.85 516.00 L804.04 516.00 L803.22 516.00 L802.41 516.00 L801.59 516.00 L800.78 516.00 L799.97 516.00 L799.15 516.00 L798.34 516.00 L797.52 516.00 L796.71 516.00 L795.90 516.00 L795.08 516.00 L794.27 516.00 L793.46 516.00 L792.64 516.00 L791.83 516.00 L791.01 516.00 L790.20 516.00 L789.39 516.00 L788.57 516.00 L787.76 516.00 L786.95 516.00 L786.13 516.00 L785.32 516.00 L784.50 516.00 L783.69 516.00 L782.88 516.00 L782.06 516.00 L781.25 516.00 L780.44 516.00 L779.62 516.00 L778.81 516.00 L777.99 516.00 L777.18 516.00 L776.37 516.00 L775.55 516.00 L774.74 516.00 L773.93 516.00 L773.11 516.00 L772.30 516.00 L771.48 516.00 L770.67 516.00 L769.86 516.00 L769.04 516.00 L768.23 516.00 L767.42 516.00 L766.60 516.00 L765.79 516.00 L764.97 516.00 L764.16 516.00 L763.35 516.00 L762.53 516.00 L761.72 516.00 L760.91 516.00 L760.09 516.00 L759.28 516.00 L758.46 516.00 L757.65 516.00 L756.84 516.00 L756.02 516.00 L755.21 516.00 L754.40 516.00 L753.58 516.00 L752.77 516.00 L751.95 516.00 L751.14 516.00 L750.33 516.00 L749.51 516.00 L748.70 516.00 L747.89 516.00 L747.07 516.00 L746.26 516.00 L745.44 516.00 L744.63 516.00 L743.82 516.00 L743.00 516.00 L742.19 516.00 L741.38 516.00 L740.56 516.00 L739.75 516.00 L738.93 516.00 L738.12 516.00 L737.31 516.00 L736.49 516.00 L735.68 516.00 L734.87 516.00 L734.05 516.00 L733.24 516.00 L732.42 516.00 L731.61 516.00 L730.80 516.00 L729.98 516.00 L729.17 516.00 L728.36 516.00 L727.54 516.00 L726.73 516.00 L725.91 516.00 L725.10 516.00 L724.29 516.00 L723.47 516.00 L722.66 516.00 L721.85 516.00 L721.03 516.00 L720.22 516.00 L719.40 516.00 L718.59 516.00 L717.78 516.00 L716.96 516.00 L716.15 516.00 L715.34 516.00 L714.52 516.00 L713.71 516.00 L712.89 516.00 L712.08 516.00 L711.27 516.00 L710.45 516.00 L709.64 516.00 L708.83 516.00 L708.01 516.00 L707.20 516.00 L706.38 516.00 L705.57 516.00 L704.76 516.00 L703.94 516.00 L703.13 516.00 L702.32 516.00 L701.50 516.00 L700.69 516.00 L699.87 516.00 L699.06 516.00 L698.25 516.00 L697.43 516.00 L696.62 516.00 L695.81 516.00 L694.99 516.00 L694.18 516.00 L693.36 516.00 L692.55 516.00 L691.74 516.00 L690.92 516.00 L690.11 516.00 L689.29 516.00 L688.48 516.00 L687.67 516.00 L686.85 516.00 L686.04 516.00 L685.23 516.00 L684.41 516.00 L683.60 516.00 L682.78 516.00 L681.97 516.00 L681.16 516.00 L680.34 516.00 L679.53 516.00 L678.72 516.00 L677.90 516.00 L677.09 516.00 L676.27 516.00 L675.46 516.00 L674.65 516.00 L673.83 516.00 L673.02 516.00 L672.21 516.00 L671.39 516.00 L670.58 516.00 L669.76 516.00 L668.95 516.00 L668.14 516.00 L667.32 516.00 L666.51 516.00 L665.70 516.00 L664.88 516.00 L664.07 516.00 L663.25 516.00 L662.44 516.00 L661.63 516.00 L660.81 516.00 L660.00 516.00 L659.19 516.00 L658.37 516.00 L657.56 516.00 L656.74 516.00 L655.93 516.00 L655.12 516.00 L654.30 516.00 L653.49 516.00 L652.68 516.00 L651.86 516.00 L651.05 516.00 L650.23 516.00 L649.42 516.00 L648.61 516.00 L647.79 516.00 L646.98 516.00 L646.17 516.00 L645.35 516.00 L644.54 516.00 L643.72 516.00 L642.91 516.00 L642.10 516.00 L641.28 516.00 L640.47 516.00 L639.66 516.00 L638.84 516.00 L638.03 516.00 L637.21 516.00 L636.40 516.00 L635.59 516.00 L634.77 516.00 L633.96 516.00 L633.15 516.00 L632.33 516.00 L631.52 516.00 L630.70 516.00 L629.89 516.00 L629.08 516.00 L628.26 516.00 L627.45 516.00 L626.64 516.00 L625.82 516.00 L625.01 516.00 L624.19 516.00 L623.38 516.00 L622.57 516.00 L621.75 516.00 L620.94 516.00 L620.13 516.00 L619.31 516.00 L618.50 516.00 L617.68 516.00 L616.87 516.00 L616.06 516.00 L615.24 516.00 L614.43 516.00 L613.62 516.00 L612.80 516.00 L611.99 516.00 L611.17 516.00 L610.36 516.00 L609.55 516.00"/>
<path d="M1195.45 516.00 L1194.64 516.00 L1193.83 516.00 L1193.01 516.00 L1192.20 516.00 L1191.38 516.00 L1190.57 516.00 L1189.76 516.00 L1188.94 516.00 L1188.13 516.00 L1187.32 516.00 L1186.50 516.00 L1185.69 516.00 L1184.87 516.00 L1184.06 516.00 L1183.25 516.00 L1182.43 516.00 L1181.62 516.00 L1180.81 516.00 L1179.99 516.00 L1179.18 516.00 L1178.36 516.00 L1177.55 516.00 L1176.74 516.00 L1175.92 516.00 L1175.11 516.00 L1174.30 516.00 L1173.48 516.00 L1172.67 516.00 L1171.85 516.00 L1171.04 516.00 L1170.23 516.00 L1169.41 516.00 L1168.60 516.00 L1167.79 516.00 L1166.97 516.00 L1166.16 516.00 L1165.34 516.00 L1164.53 516.00 L1163.72 516.00 L1162.90 516.00 L1162.09 516.00 L1161.28 516.00 L1160.46 516.00 L1159.65 516.00 L1158.83 516.00 L1158.02 516.00 L1157.21 516.00 L1156.39 516.00 L1155.58 516.00 L1154.77 516.00 L1153.95 516.00 L1153.14 516.00 L1152.32 516.00 L1151.51 516.00 L1150.70 516.00 L1149.88 516.00 L1149.07 516.00 L1148.26 516.00 L1147.44 516.00 L1146.63 516.00 L1145.81 516.00 L1145.00 516.00 L1144.19 516.00 L1143.37 516.00 L1142.56 516.00 L1141.75 516.00 L1140.93 516.00 L1140.12 516.00 L1139.30 516.00 L1138.49 516.00 L1137.68 516.00 L1136.86 516.00 L1136.05 516.00 L1135.24 516.00 L1134.42 516.00 L1133.61 516.00 L1132.79 516.00 L1131.98 516.00 L1131.17 516.00 L1130.35 516.00 L1129.54 516.00 L1128.73 516.00 L1127.91 516.00 L1127.10 516.00 L1126.28 516.00 L1125.47 516.00 L1124.66 516.00 L1123.84 516.00 L1123.03 516.00 L1122.22 516.00 L1121.40 516.00 L1120.59 516.00 L1119.77 516.00 L1118.96 516.00 L1118.15 516.00 L1117.33 516.00 L1116.52 516.00 L1115.71 516.00 L1114.89 516.00 L1114.08 516.00 L1113.26 516.00 L1112.45 516.00 L1111.64 516.00 L1110.82 516.00 L1110.01 516.00 L1109.19 516.00 L1108.38 516.00 L1107.57 516.00 L1106.75 516.00 L1105.94 516.00 L1105.13 516.00 L1104.31 516.00 L1103.50 516.00 L1102.68 516.00 L1101.87 516.00 L1101.06 516.00 L1100.24 516.00 L1099.43 516.00 L1098.62 516.00 L1097.80 516.00 L1096.99 516.00 L1096.17 516.00 L1095.36 516.00 L1094.55 516.00 L1093.73 516.00 L1092.92 516.00 L1092.11 516.00 L1091.29 516.00 L1090.48 516.00 L1089.66 516.00 L1088.85 516.00 L1088.04 516.00 L1087.22 516.00 L1086.41 516.00 L1085.60 516.00 L1084.78 516.00 L1083.97 516.00 L1083.15 516.00 L1082.34 516.00 L1081.53 516.00 L1080.71 516.00 L1079.90 516.00 L1079.09 516.00 L1078.27 516.00 L1077.46 516.00 L1076.64 516.00 L1075.83 516.00 L1075.02 516.00 L1074.20 516.00 L1073.39 516.00 L1072.58 516.00 L1071.76 516.00 L1070.95 516.00 L1070.13 516.00 L1069.32 516.00 L1068.51 516.00 L1067.69 516.00 L1066.88 516.00 L1066.07 516.00 L1065.25 516.00 L1064.44 516.00 L1063.62 516.00 L1062.81 516.00 L1062.00 516.00 L1061.18 516.00 L1060.37 516.00 L1059.56 516.00 L1058.74 516.00 L1057.93 516.00 L1057.11 516.00 L1056.30 516.00 L1055.49 516.00 L1054.67 516.00 L1053.86 516.00 L1053.05 516.00 L1052.23 516.00 L1051.42 516.00 L1050.60 516.00 L1049.79 516.00 L1048.98 516.00 L1048.16 516.00 L1047.35 516.00 L1046.54 516.00 L1045.72 516.00 L1044.91 516.00 L1044.09 516.00 L1043.28 516.00 L1042.47 516.00 L1041.65 516.00 L1040.84 516.00 L1040.03 516.00 L1039.21 516.00 L1038.40 516.00 L1037.58 516.00 L1036.77 516.00 L1035.96 516.00 L1035.14 516.00 L1034.33 516.00 L1033.52 516.00 L1032.70 516.00 L1031.89 516.00 L1031.07 516.00 L1030.26 516.00 L1029.45 516.00 L1028.63 516.00 L1027.82 516.00 L1027.01 516.00 L1026.19 516.00 L1025.38 516.00 L1024.56 516.00 L1023.75 516.00 L1022.94 516.00 L1022.12 516.00 L1021.31 516.00 L1020.50 516.00 L1019.68 516.00 L1018.87 516.00 L1018.05 516.00 L1017.24 516.00 L1016.43 516.00 L1015.61 516.00 L1014.80 516.00 L1013.99 516.00 L1013.17 516.00 L1012.36 516.00 L1011.54 516.00 L1010.73 516.00 L1009.92 516.00 L1009.10 516.00 L1008.29 516.00 L1007.48 516.00 L1006.66 516.00 L1005.85 516.00 L1005.03 516.00 L1004.22 516.00 L1003.41 516.00 L1002.59 516.00 L1001.78 516.00 L1000.96 516.00 L1000.15 516.00 L999.34 516.00 L998.52 516.00 L997.71 516.00 L996.90 516.00 L996.08 516.00 L995.27 516.00 L994.45 516.00 L993.64 516.00 L992.83 516.00 L992.01 516.00 L991.20 516.00 L990.39 516.00 L989.57 516.00 L988.76 516.00 L987.94 516.00 L987.13 516.00 L986.32 516.00 L985.50 516.00 L984.69 516.00 L983.88 516.00 L983.06 516.00 L982.25 516.00 L981.43 516.00 L980.62 516.00 L979.81 516.00 L978.99 516.00 L978.18 516.00 L977.37 516.00 L976.55 516.00 L975.74 516.00 L974.92 516.00 L974.11 516.00 L973.30 516.00 L972.48 516.00 L971.67 516.00 L970.86 516.00 L970.04 516.00 L969.23 516.00 L968.41 516.00 L967.60 516.00 L966.79 516.00 L965.97 516.00 L965.16 516.00 L964.35 516.00 L963.53 516.00 L962.72 516.00 L961.90 516.00 L961.09 516.00 L960.28 516.00 L959.46 516.00 L958.65 516.00 L957.84 516.00 L957.02 516.00 L956.21 516.00 L955.39 516.00 L954.58 516.00 L953.77 516.00 L952.95 516.00 L952.14 516.00 L951.33 516.00 L950.51 516.00 L949.70 516.00 L948.88 516.00 L948.07 516.00 L947.26 516.00 L946.44 516.00 L945.63 516.00 L944.82 516.00 L944.00 516.00 L943.19 516.00 L942.37 516.00 L941.56 516.00 L940.75 516.00 L939.93 516.00 L939.12 516.00 L938.31 516.00 L937.49 516.00 L936.68 516.00 L935.86 516.00 L935.05 516.00 L934.24 516.00 L933.42 516.00 L932.61 516.00 L931.80 516.00 L930.98 516.00 L930.17 516.00 L929.35 516.00 L928.54 516.00 L927.73 516.00 L926.91 516.00 L926.10 516.00 L925.29 516.00 L924.47 516.00 L923.66 516.00 L922.84 516.00 L922.03 516.00 L921.22 516.00 L920.40 516.00 L919.59 516.00 L918.78 516.00 L917.96 516.00 L917.15 516.00 L916.33 516.00 L915.52 516.00 L914.71 516.00 L913.89 516.00 L913.08 516.00 L912.27 516.00 L911.45 516.00 L910.64 516.00 L909.82 516.00 L909.01 516.00 L908.20 516.00 L907.38 516.00 L906.57 516.00 L905.76 516.00 L904.94 516.00 L904.13 516.00 L903.31 516.00 L902.50 516.00"/>
<path d="M901.90 467.00 L901.35 467.00 L900.20 467.00 L899.05 467.00 L897.90 467.00 L896.75 467.00 L895.60 467.00 L894.44 467.00 L893.29 467.00 L892.14 467.00 L890.99 467.00 L889.84 467.00 L888.69 467.00 L887.54 467.00 L886.39 467.00 L885.24 467.00 L884.09 467.00 L882.94 467.00 L881.79 467.00 L880.63 467.00 L879.48 467.00 L878.33 467.00 L877.18 467.00 L876.03 467.00 L874.88 467.00 L873.73 467.00 L872.58 467.00 L871.43 467.00 L870.28 467.00 L869.13 467.00 L867.98 467.00 L866.82 467.00 L865.67 467.00 L864.52 467.00 L863.37 467.00 L862.22 467.00 L861.07 467.00 L859.92 467.00 L858.77 467.00 L857.62 467.00 L856.47 467.00 L855.32 467.00 L854.17 467.00 L853.01 467.00 L851.86 467.00 L850.71 467.00 L849.56 467.00 L848.41 467.00 L847.26 467.00 L846.11 467.00 L844.96 467.00 L843.81 467.00 L842.66 467.00 L841.51 467.00 L840.36 467.00 L839.20 467.00 L838.05 467.00 L836.90 467.00 L835.75 467.00 L834.60 467.00 L833.45 467.00 L832.30 467.00 L831.15 467.00 L830.00 467.00 L828.85 467.00 L827.70 467.00 L826.55 467.00 L825.39 467.00 L824.24 467.00 L823.09 467.00 L821.94 467.00 L820.79 467.00 L819.64 467.00 L818.49 467.00 L817.34 467.00 L816.19 467.00 L815.04 467.00 L813.89 467.00 L812.74 467.00 L811.58 467.00 L810.43 467.00 L809.28 467.00 L808.13 467.00 L806.98 467.00 L805.83 467.00 L804.68 467.00 L803.53 467.00 L802.38 467.00 L801.23 467.00 L800.08 467.00 L798.93 467.00 L797.77 467.00 L796.62 467.00 L795.47 467.00 L794.32 467.00 L793.17 467.00 L792.02 467.00 L790.87 467.00 L789.72 467.00 L788.57 467.00 L787.42 467.00 L786.27 467.00 L785.12 467.00 L783.96 467.00 L782.81 467.00 L781.66 467.00 L780.51 467.00 L779.36 467.00 L778.21 467.00 L777.06 467.00 L775.91 467.00 L774.76 467.00 L773.61 467.00 L772.46 467.00 L771.31 467.00 L770.15 467.00 L769.00 467.00 L767.85 467.00 L766.70 467.00 L765.55 467.00 L764.40 467.00 L763.25 467.00 L762.10 467.00 L760.95 467.00 L759.80 467.00 L758.65 467.00 L757.50 467.00 L756.34 467.00 L755.19 467.00 L754.04 467.00 L752.89 467.00 L751.74 467.00 L750.59 467.00 L749.44 467.00 L748.29 467.00 L747.14 467.00 L745.99 467.00 L744.84 467.00 L743.69 467.00 L742.53 467.00 L741.38 467.00 L740.23 467.00 L739.08 467.00 L737.93 467.00 L736.78 467.00 L735.63 467.00 L734.48 467.00 L733.33 467.00 L732.18 467.00 L731.03 467.00 L729.88 467.00 L728.72 467.00 L727.57 467.00 L726.42 467.00 L725.27 467.00 L724.12 467.00 L722.97 467.00 L721.82 467.00 L720.67 467.00 L719.52 467.00 L718.37 467.00 L717.22 467.00 L716.07 467.00 L714.91 467.00 L713.76 467.00 L712.61 467.00 L711.46 467.00 L710.31 467.00 L709.16 467.00 L708.01 467.00 L706.86 467.00 L705.71 467.00 L704.56 467.00 L703.41 467.00 L702.26 467.00 L701.10 467.00 L699.95 467.00 L698.80 467.00 L697.65 467.00 L696.50 467.00 L695.35 467.00 L694.20 467.00 L693.05 467.00 L691.90 467.00 L690.75 467.00 L689.60 467.00 L688.45 467.00 L687.29 467.00 L686.14 467.00 L684.99 467.00 L683.84 467.00 L682.69 467.00 L681.54 467.00 L680.39 467.00 L679.24 467.00 L678.09 467.00 L676.94 467.00 L675.79 467.00 L674.64 467.00 L673.48 467.00 L672.33 467.00 L671.18 467.00 L670.03 467.00 L668.88 467.00 L667.73 467.00 L666.58 467.00 L665.43 467.00 L664.28 467.00 L663.13 467.00 L661.98 467.00 L660.83 467.00 L659.67 467.00 L658.52 467.00 L657.37 467.00 L656.22 467.00 L655.07 467.00 L653.92 467.00 L652.77 467.00 L651.62 467.00 L650.47 467.00 L649.32 467.00 L648.17 467.00 L647.02 467.00 L645.86 467.00 L644.71 467.00 L643.56 467.00 L642.41 467.00 L641.26 467.00 L640.11 467.00 L638.96 467.00 L637.81 467.00 L636.66 467.00 L635.51 467.00 L634.36 467.00 L633.21 467.00 L632.05 467.00 L630.90 467.00 L629.75 467.00 L628.60 467.00 L627.45 467.00 L626.30 467.00 L625.15 467.00 L624.00 467.00 L622.85 467.00 L621.70 467.00 L620.55 467.00 L619.40 467.00 L618.24 467.00 L617.09 467.00 L615.94 467.00 L614.79 467.00 L613.64 467.00 L612.49 467.00 L611.34 467.00 L610.19 467.00 L609.04 467.00 L607.89 467.00 L606.74 467.00 L605.59 467.00 L604.44 467.00 L603.28 467.00 L602.13 467.00 L600.98 467.00 L599.83 467.00 L598.68 467.00 L597.53 467.00 L596.38 467.00 L595.23 467.00 L594.08 467.00 L592.93 467.00 L591.78 467.00 L590.63 467.00 L589.47 467.00 L588.32 467.00 L587.17 467.00 L586.02 467.00 L584.87 467.00 L583.72 467.00 L582.57 467.00 L581.42 467.00 L580.27 467.00 L579.12 467.00 L577.97 467.00 L576.82 467.00 L575.66 467.00 L574.51 467.00 L573.36 467.00 L572.21 467.00 L571.06 467.00 L569.91 467.00 L568.76 467.00 L567.61 467.00 L566.46 467.00 L565.31 467.00 L564.16 467.00 L563.01 467.00 L561.85 467.00 L560.70 467.00 L559.55 467.00 L558.40 467.00 L557.25 467.00 L556.10 467.00 L554.95 467.00 L553.80 467.00 L552.65 467.00 L551.50 467.00 L550.35 467.00 L549.20 467.00 L548.04 467.00 L546.89 467.00 L545.74 467.00 L544.59 467.00 L543.44 467.00 L542.29 467.00 L541.14 467.00 L539.99 467.00 L538.84 467.00 L537.69 467.00 L536.54 467.00 L535.39 467.00 L534.23 467.00 L533.08 467.00 L531.93 467.00 L530.78 467.00 L529.63 467.00 L528.48 467.00 L527.33 467.00 L526.18 467.00 L525.03 467.00 L523.88 467.00 L522.73 467.00 L521.58 467.00 L520.42 467.00 L519.27 467.00 L518.12 467.00 L516.97 467.00 L515.82 467.00 L514.67 467.00 L513.52 467.00 L512.37 467.00 L511.22 467.00 L510.07 467.00 L508.92 467.00 L507.77 467.00 L506.61 467.00 L505.46 467.00 L504.31 467.00 L503.16 467.00 L502.01 467.00 L500.86 467.00 L499.71 467.00 L498.56 467.00 L497.41 467.00 L496.26 467.00 L495.11 467.00 L493.96 467.00 L492.80 467.00 L491.65 467.00 L490.50 467.00 L489.35 467.00 L488.20 467.00"/>
<path d="M1316.80 467.00 L1315.65 467.00 L1314.50 467.00 L1313.35 467.00 L1312.20 467.00 L1311.04 467.00 L1309.89 467.00 L1308.74 467.00 L1307.59 467.00 L1306.44 467.00 L1305.29 467.00 L1304.14 467.00 L1302.99 467.00 L1301.84 467.00 L1300.69 467.00 L1299.54 467.00 L1298.39 467.00 L1297.23 467.00 L1296.08 467.00 L1294.93 467.00 L1293.78 467.00 L1292.63 467.00 L1291.48 467.00 L1290.33 467.00 L1289.18 467.00 L1288.03 467.00 L1286.88 467.00 L1285.73 467.00 L1284.58 467.00 L1283.42 467.00 L1282.27 467.00 L1281.12 467.00 L1279.97 467.00 L1278.82 467.00 L1277.67 467.00 L1276.52 467.00 L1275.37 467.00 L1274.22 467.00 L1273.07 467.00 L1271.92 467.00 L1270.77 467.00 L1269.61 467.00 L1268.46 467.00 L1267.31 467.00 L1266.16 467.00 L1265.01 467.00 L1263.86 467.00 L1262.71 467.00 L1261.56 467.00 L1260.41 467.00 L1259.26 467.00 L1258.11 467.00 L1256.96 467.00 L1255.80 467.00 L1254.65 467.00 L1253.50 467.00 L1252.35 467.00 L1251.20 467.00 L1250.05 467.00 L1248.90 467.00 L1247.75 467.00 L1246.60 467.00 L1245.45 467.00 L1244.30 467.00 L1243.15 467.00 L1241.99 467.00 L1240.84 467.00 L1239.69 467.00 L1238.54 467.00 L1237.39 467.00 L1236.24 467.00 L1235.09 467.00 L1233.94 467.00 L1232.79 467.00 L1231.64 467.00 L1230.49 467.00 L1229.34 467.00 L1228.18 467.00 L1227.03 467.00 L1225.88 467.00 L1224.73 467.00 L1223.58 467.00 L1222.43 467.00 L1221.28 467.00 L1220.13 467.00 L1218.98 467.00 L1217.83 467.00 L1216.68 467.00 L1215.53 467.00 L1214.37 467.00 L1213.22 467.00 L1212.07 467.00 L1210.92 467.00 L1209.77 467.00 L1208.62 467.00 L1207.47 467.00 L1206.32 467.00 L1205.17 467.00 L1204.02 467.00 L1202.87 467.00 L1201.72 467.00 L1200.56 467.00 L1199.41 467.00 L1198.26 467.00 L1197.11 467.00 L1195.96 467.00 L1194.81 467.00 L1193.66 467.00 L1192.51 467.00 L1191.36 467.00 L1190.21 467.00 L1189.06 467.00 L1187.91 467.00 L1186.76 467.00 L1185.60 467.00 L1184.45 467.00 L1183.30 467.00 L1182.15 467.00 L1181.00 467.00 L1179.85 467.00 L1178.70 467.00 L1177.55 467.00 L1176.40 467.00 L1175.25 467.00 L1174.10 467.00 L1172.95 467.00 L1171.79 467.00 L1170.64 467.00 L1169.49 467.00 L1168.34 467.00 L1167.19 467.00 L1166.04 467.00 L1164.89 467.00 L1163.74 467.00 L1162.59 467.00 L1161.44 467.00 L1160.29 467.00 L1159.14 467.00 L1157.98 467.00 L1156.83 467.00 L1155.68 467.00 L1154.53 467.00 L1153.38 467.00 L1152.23 467.00 L1151.08 467.00 L1149.93 467.00 L1148.78 467.00 L1147.63 467.00 L1146.48 467.00 L1145.33 467.00 L1144.17 467.00 L1143.02 467.00 L1141.87 467.00 L1140.72 467.00 L1139.57 467.00 L1138.42 467.00 L1137.27 467.00 L1136.12 467.00 L1134.97 467.00 L1133.82 467.00 L1132.67 467.00 L1131.52 467.00 L1130.36 467.00 L1129.21 467.00 L1128.06 467.00 L1126.91 467.00 L1125.76 467.00 L1124.61 467.00 L1123.46 467.00 L1122.31 467.00 L1121.16 467.00 L1120.01 467.00 L1118.86 467.00 L1117.71 467.00 L1116.55 467.00 L1115.40 467.00 L1114.25 467.00 L1113.10 467.00 L1111.95 467.00 L1110.80 467.00 L1109.65 467.00 L1108.50 467.00 L1107.35 467.00 L1106.20 467.00 L1105.05 467.00 L1103.90 467.00 L1102.74 467.00 L1101.59 467.00 L1100.44 467.00 L1099.29 467.00 L1098.14 467.00 L1096.99 467.00 L1095.84 467.00 L1094.69 467.00 L1093.54 467.00 L1092.39 467.00 L1091.24 467.00 L1090.09 467.00 L1088.93 467.00 L1087.78 467.00 L1086.63 467.00 L1085.48 467.00 L1084.33 467.00 L1083.18 467.00 L1082.03 467.00 L1080.88 467.00 L1079.73 467.00 L1078.58 467.00 L1077.43 467.00 L1076.28 467.00 L1075.12 467.00 L1073.97 467.00 L1072.82 467.00 L1071.67 467.00 L1070.52 467.00 L1069.37 467.00 L1068.22 467.00 L1067.07 467.00 L1065.92 467.00 L1064.77 467.00 L1063.62 467.00 L1062.47 467.00 L1061.31 467.00 L1060.16 467.00 L1059.01 467.00 L1057.86 467.00 L1056.71 467.00 L1055.56 467.00 L1054.41 467.00 L1053.26 467.00 L1052.11 467.00 L1050.96 467.00 L1049.81 467.00 L1048.66 467.00 L1047.50 467.00 L1046.35 467.00 L1045.20 467.00 L1044.05 467.00 L1042.90 467.00 L1041.75 467.00 L1040.60 467.00 L1039.45 467.00 L1038.30 467.00 L1037.15 467.00 L1036.00 467.00 L1034.85 467.00 L1033.69 467.00 L1032.54 467.00 L1031.39 467.00 L1030.24 467.00 L1029.09 467.00 L1027.94 467.00 L1026.79 467.00 L1025.64 467.00 L1024.49 467.00 L1023.34 467.00 L1022.19 467.00 L1021.04 467.00 L1019.88 467.00 L1018.73 467.00 L1017.58 467.00 L1016.43 467.00 L1015.28 467.00 L1014.13 467.00 L1012.98 467.00 L1011.83 467.00 L1010.68 467.00 L1009.53 467.00 L1008.38 467.00 L1007.23 467.00 L1006.07 467.00 L1004.92 467.00 L1003.77 467.00 L1002.62 467.00 L1001.47 467.00 L1000.32 467.00 L999.17 467.00 L998.02 467.00 L996.87 467.00 L995.72 467.00 L994.57 467.00 L993.42 467.00 L992.26 467.00 L991.11 467.00 L989.96 467.00 L988.81 467.00 L987.66 467.00 L986.51 467.00 L985.36 467.00 L984.21 467.00 L983.06 467.00 L981.91 467.00 L980.76 467.00 L979.61 467.00 L978.45 467.00 L977.30 467.00 L976.15 467.00 L975.00 467.00 L973.85 467.00 L972.70 467.00 L971.55 467.00 L970.40 467.00 L969.25 467.00 L968.10 467.00 L966.95 467.00 L965.80 467.00 L964.64 467.00 L963.49 467.00 L962.34 467.00 L961.19 467.00 L960.04 467.00 L958.89 467.00 L957.74 467.00 L956.59 467.00 L955.44 467.00 L954.29 467.00 L953.14 467.00 L951.99 467.00 L950.83 467.00 L949.68 467.00 L948.53 467.00 L947.38 467.00 L946.23 467.00 L945.08 467.00 L943.93 467.00 L942.78 467.00 L941.63 467.00 L940.48 467.00 L939.33 467.00 L938.18 467.00 L937.02 467.00 L935.87 467.00 L934.72 467.00 L933.57 467.00 L932.42 467.00 L931.27 467.00 L930.12 467.00 L928.97 467.00 L927.82 467.00 L926.67 467.00 L925.52 467.00 L924.37 467.00 L923.21 467.00 L922.06 467.00 L920.91 467.00 L919.76 467.00 L918.61 467.00 L917.46 467.00 L916.31 467.00 L915.16 467.00 L914.01 467.00 L912.86 467.00 L911.71 467.00 L910.56 467.00 L909.40 467.00 L908.25 467.00 L907.10 467.00 L905.95 467.00 L904.80 467.00 L903.65 467.00 L902.50 467.00"/>
<path d="M901.90 418.00 L901.09 418.00 L899.68 418.00 L898.27 418.00 L896.86 418.00 L895.45 418.00 L894.04 418.00 L892.63 418.00 L891.22 418.00 L889.81 418.00 L888.41 418.00 L887.00 418.00 L885.59 418.00 L884.18 418.00 L882.77 418.00 L881.36 418.00 L879.95 418.00 L878.54 418.00 L877.13 418.00 L875.72 418.00 L874.31 418.00 L872.90 418.00 L871.49 418.00 L870.08 418.00 L868.67 418.00 L867.26 418.00 L865.85 418.00 L864.44 418.00 L863.03 418.00 L861.63 418.00 L860.22 418.00 L858.81 418.00 L857.40 418.00 L855.99 418.00 L854.58 418.00 L853.17 418.00 L851.76 418.00 L850.35 418.00 L848.94 418.00 L847.53 418.00 L846.12 418.00 L844.71 418.00 L843.30 418.00 L841.89 418.00 L840.48 418.00 L839.07 418.00 L837.66 418.00 L836.25 418.00 L834.85 418.00 L833.44 418.00 L832.03 418.00 L830.62 418.00 L829.21 418.00 L827.80 418.00 L826.39 418.00 L824.98 418.00 L823.57 418.00 L822.16 418.00 L820.75 418.00 L819.34 418.00 L817.93 418.00 L816.52 418.00 L815.11 418.00 L813.70 418.00 L812.29 418.00 L810.88 418.00 L809.47 418.00 L808.07 418.00 L806.66 418.00 L805.25 418.00 L803.84 418.00 L802.43 418.00 L801.02 418.00 L799.61 418.00 L798.20 418.00 L796.79 418.00 L795.38 418.00 L793.97 418.00 L792.56 418.00 L791.15 418.00 L789.74 418.00 L788.33 418.00 L786.92 418.00 L785.51 418.00 L784.10 418.00 L782.69 418.00 L781.29 418.00 L779.88 418.00 L778.47 418.00 L777.06 418.00 L775.65 418.00 L774.24 418.00 L772.83 418.00 L771.42 418.00 L770.01 418.00 L768.60 418.00 L767.19 418.00 L765.78 418.00 L764.37 418.00 L762.96 418.00 L761.55 418.00 L760.14 418.00 L758.73 418.00 L757.32 418.00 L755.91 418.00 L754.51 418.00 L753.10 418.00 L751.69 418.00 L750.28 418.00 L748.87 418.00 L747.46 418.00 L746.05 418.00 L744.64 418.00 L743.23 418.00 L741.82 418.00 L740.41 418.00 L739.00 418.00 L737.59 418.00 L736.18 418.00 L734.77 418.00 L733.36 418.00 L731.95 418.00 L730.54 418.00 L729.13 418.00 L727.73 418.00 L726.32 418.00 L724.91 418.00 L723.50 418.00 L722.09 418.00 L720.68 418.00 L719.27 418.00 L717.86 418.00 L716.45 418.00 L715.04 418.00 L713.63 418.00 L712.22 418.00 L710.81 418.00 L709.40 418.00 L707.99 418.00 L706.58 418.00 L705.17 418.00 L703.76 418.00 L702.35 418.00 L700.95 418.00 L699.54 418.00 L698.13 418.00 L696.72 418.00 L695.31 418.00 L693.90 418.00 L692.49 418.00 L691.08 418.00 L689.67 418.00 L688.26 418.00 L686.85 418.00 L685.44 418.00 L684.03 418.00 L682.62 418.00 L681.21 418.00 L679.80 418.00 L678.39 418.00 L676.98 418.00 L675.57 418.00 L674.17 418.00 L672.76 418.00 L671.35 418.00 L669.94 418.00 L668.53 418.00 L667.12 418.00 L665.71 418.00 L664.30 418.00 L662.89 418.00 L661.48 418.00 L660.07 418.00 L658.66 418.00 L657.25 418.00 L655.84 418.00 L654.43 418.00 L653.02 418.00 L651.61 418.00 L650.20 418.00 L648.79 418.00 L647.39 418.00 L645.98 418.00 L644.57 418.00 L643.16 418.00 L641.75 418.00 L640.34 418.00 L638.93 418.00 L637.52 418.00 L636.11 418.00 L634.70 418.00 L633.29 418.00 L631.88 418.00 L630.47 418.00 L629.06 418.00 L627.65 418.00 L626.24 418.00 L624.83 418.00 L623.42 418.00 L622.01 418.00 L620.61 418.00 L619.20 418.00 L617.79 418.00 L616.38 418.00 L614.97 418.00 L613.56 418.00 L612.15 418.00 L610.74 418.00 L609.33 418.00 L607.92 418.00 L606.51 418.00 L605.10 418.00 L603.69 418.00 L602.28 418.00 L600.87 418.00 L599.46 418.00 L598.05 418.00 L596.64 418.00 L595.23 418.00 L593.83 418.00 L592.42 418.00 L591.01 418.00 L589.60 418.00 L588.19 418.00 L586.78 418.00 L585.37 418.00 L583.96 418.00 L582.55 418.00 L581.14 418.00 L579.73 418.00 L578.32 418.00 L576.91 418.00 L575.50 418.00 L574.09 418.00 L572.68 418.00 L571.27 418.00 L569.86 418.00 L568.45 418.00 L567.05 418.00 L565.64 418.00 L564.23 418.00 L562.82 418.00 L561.41 418.00 L560.00 418.00 L558.59 418.00 L557.18 418.00 L555.77 418.00 L554.36 418.00 L552.95 418.00 L551.54 418.00 L550.13 418.00 L548.72 418.00 L547.31 418.00 L545.90 418.00 L544.49 418.00 L543.08 418.00 L541.67 418.00 L540.27 418.00 L538.86 418.00 L537.45 418.00 L536.04 418.00 L534.63 418.00 L533.22 418.00 L531.81 418.00 L530.40 418.00 L528.99 418.00 L527.58 418.00 L526.17 418.00 L524.76 418.00 L523.35 418.00 L521.94 418.00 L520.53 418.00 L519.12 418.00 L517.71 418.00 L516.30 418.00 L514.89 418.00 L513.49 418.00 L512.08 418.00 L510.67 418.00 L509.26 418.00 L507.85 418.00 L506.44 418.00 L505.03 418.00 L503.62 418.00 L502.21 418.00 L500.80 418.00 L499.39 418.00 L497.98 418.00 L496.57 418.00 L495.16 418.00 L493.75 418.00 L492.34 418.00 L490.93 418.00 L489.52 418.00 L488.11 418.00 L486.71 418.00 L485.30 418.00 L483.89 418.00 L482.48 418.00 L481.07 418.00 L479.66 418.00 L478.25 418.00 L476.84 418.00 L475.43 418.00 L474.02 418.00 L472.61 418.00 L471.20 418.00 L469.79 418.00 L468.38 418.00 L466.97 418.00 L465.56 418.00 L464.15 418.00 L462.74 418.00 L461.33 418.00 L459.93 418.00 L458.52 418.00 L457.11 418.00 L455.70 418.00 L454.29 418.00 L452.88 418.00 L451.47 418.00 L450.06 418.00 L448.65 418.00 L447.24 418.00 L445.83 418.00 L444.42 418.00 L443.01 418.00 L441.60 418.00 L440.19 418.00 L438.78 418.00 L437.37 418.00 L435.96 418.00 L434.55 418.00 L433.15 418.00 L431.74 418.00 L430.33 418.00 L428.92 418.00 L427.51 418.00 L426.10 418.00 L424.69 418.00 L423.28 418.00 L421.87 418.00 L420.46 418.00 L419.05 418.00 L417.64 418.00 L416.23 418.00 L414.82 418.00 L413.41 418.00 L412.00 418.00 L410.59 418.00 L409.18 418.00 L407.77 418.00 L406.37 418.00 L404.96 418.00 L403.55 418.00 L402.14 418.00 L400.73 418.00 L399.32 418.00 L397.91 418.00 L396.50 418.00 L395.09 418.00"/>
<path d="M1409.91 418.00 L1408.50 418.00 L1407.09 418.00 L1405.68 418.00 L1404.27 418.00 L1402.86 418.00 L1401.45 418.00 L1400.04 418.00 L1398.63 418.00 L1397.23 418.00 L1395.82 418.00 L1394.41 418.00 L1393.00 418.00 L1391.59 418.00 L1390.18 418.00 L1388.77 418.00 L1387.36 418.00 L1385.95 418.00 L1384.54 418.00 L1383.13 418.00 L1381.72 418.00 L1380.31 418.00 L1378.90 418.00 L1377.49 418.00 L1376.08 418.00 L1374.67 418.00 L1373.26 418.00 L1371.85 418.00 L1370.45 418.00 L1369.04 418.00 L1367.63 418.00 L1366.22 418.00 L1364.81 418.00 L1363.40 418.00 L1361.99 418.00 L1360.58 418.00 L1359.17 418.00 L1357.76 418.00 L1356.35 418.00 L1354.94 418.00 L1353.53 418.00 L1352.12 418.00 L1350.71 418.00 L1349.30 418.00 L1347.89 418.00 L1346.48 418.00 L1345.07 418.00 L1343.67 418.00 L1342.26 418.00 L1340.85 418.00 L1339.44 418.00 L1338.03 418.00 L1336.62 418.00 L1335.21 418.00 L1333.80 418.00 L1332.39 418.00 L1330.98 418.00 L1329.57 418.00 L1328.16 418.00 L1326.75 418.00 L1325.34 418.00 L1323.93 418.00 L1322.52 418.00 L1321.11 418.00 L1319.70 418.00 L1318.29 418.00 L1316.89 418.00 L1315.48 418.00 L1314.07 418.00 L1312.66 418.00 L1311.25 418.00 L1309.84 418.00 L1308.43 418.00 L1307.02 418.00 L1305.61 418.00 L1304.20 418.00 L1302.79 418.00 L1301.38 418.00 L1299.97 418.00 L1298.56 418.00 L1297.15 418.00 L1295.74 418.00 L1294.33 418.00 L1292.92 418.00 L1291.51 418.00 L1290.11 418.00 L1288.70 418.00 L1287.29 418.00 L1285.88 418.00 L1284.47 418.00 L1283.06 418.00 L1281.65 418.00 L1280.24 418.00 L1278.83 418.00 L1277.42 418.00 L1276.01 418.00 L1274.60 418.00 L1273.19 418.00 L1271.78 418.00 L1270.37 418.00 L1268.96 418.00 L1267.55 418.00 L1266.14 418.00 L1264.73 418.00 L1263.33 418.00 L1261.92 418.00 L1260.51 418.00 L1259.10 418.00 L1257.69 418.00 L1256.28 418.00 L1254.87 418.00 L1253.46 418.00 L1252.05 418.00 L1250.64 418.00 L1249.23 418.00 L1247.82 418.00 L1246.41 418.00 L1245.00 418.00 L1243.59 418.00 L1242.18 418.00 L1240.77 418.00 L1239.36 418.00 L1237.95 418.00 L1236.55 418.00 L1235.14 418.00 L1233.73 418.00 L1232.32 418.00 L1230.91 418.00 L1229.50 418.00 L1228.09 418.00 L1226.68 418.00 L1225.27 418.00 L1223.86 418.00 L1222.45 418.00 L1221.04 418.00 L1219.63 418.00 L1218.22 418.00 L1216.81 418.00 L1215.40 418.00 L1213.99 418.00 L1212.58 418.00 L1211.17 418.00 L1209.77 418.00 L1208.36 418.00 L1206.95 418.00 L1205.54 418.00 L1204.13 418.00 L1202.72 418.00 L1201.31 418.00 L1199.90 418.00 L1198.49 418.00 L1197.08 418.00 L1195.67 418.00 L1194.26 418.00 L1192.85 418.00 L1191.44 418.00 L1190.03 418.00 L1188.62 418.00 L1187.21 418.00 L1185.80 418.00 L1184.39 418.00 L1182.99 418.00 L1181.58 418.00 L1180.17 418.00 L1178.76 418.00 L1177.35 418.00 L1175.94 418.00 L1174.53 418.00 L1173.12 418.00 L1171.71 418.00 L1170.30 418.00 L1168.89 418.00 L1167.48 418.00 L1166.07 418.00 L1164.66 418.00 L1163.25 418.00 L1161.84 418.00 L1160.43 418.00 L1159.02 418.00 L1157.61 418.00 L1156.21 418.00 L1154.80 418.00 L1153.39 418.00 L1151.98 418.00 L1150.57 418.00 L1149.16 418.00 L1147.75 418.00 L1146.34 418.00 L1144.93 418.00 L1143.52 418.00 L1142.11 418.00 L1140.70 418.00 L1139.29 418.00 L1137.88 418.00 L1136.47 418.00 L1135.06 418.00 L1133.65 418.00 L1132.24 418.00 L1130.83 418.00 L1129.43 418.00 L1128.02 418.00 L1126.61 418.00 L1125.20 418.00 L1123.79 418.00 L1122.38 418.00 L1120.97 418.00 L1119.56 418.00 L1118.15 418.00 L1116.74 418.00 L1115.33 418.00 L1113.92 418.00 L1112.51 418.00 L1111.10 418.00 L1109.69 418.00 L1108.28 418.00 L1106.87 418.00 L1105.46 418.00 L1104.05 418.00 L1102.65 418.00 L1101.24 418.00 L1099.83 418.00 L1098.42 418.00 L1097.01 418.00 L1095.60 418.00 L1094.19 418.00 L1092.78 418.00 L1091.37 418.00 L1089.96 418.00 L1088.55 418.00 L1087.14 418.00 L1085.73 418.00 L1084.32 418.00 L1082.91 418.00 L1081.50 418.00 L1080.09 418.00 L1078.68 418.00 L1077.27 418.00 L1075.87 418.00 L1074.46 418.00 L1073.05 418.00 L1071.64 418.00 L1070.23 418.00 L1068.82 418.00 L1067.41 418.00 L1066.00 418.00 L1064.59 418.00 L1063.18 418.00 L1061.77 418.00 L1060.36 418.00 L1058.95 418.00 L1057.54 418.00 L1056.13 418.00 L1054.72 418.00 L1053.31 418.00 L1051.90 418.00 L1050.49 418.00 L1049.09 418.00 L1047.68 418.00 L1046.27 418.00 L1044.86 418.00 L1043.45 418.00 L1042.04 418.00 L1040.63 418.00 L1039.22 418.00 L1037.81 418.00 L1036.40 418.00 L1034.99 418.00 L1033.58 418.00 L1032.17 418.00 L1030.76 418.00 L1029.35 418.00 L1027.94 418.00 L1026.53 418.00 L1025.12 418.00 L1023.71 418.00 L1022.31 418.00 L1020.90 418.00 L1019.49 418.00 L1018.08 418.00 L1016.67 418.00 L1015.26 418.00 L1013.85 418.00 L1012.44 418.00 L1011.03 418.00 L1009.62 418.00 L1008.21 418.00 L1006.80 418.00 L1005.39 418.00 L1003.98 418.00 L1002.57 418.00 L1001.16 418.00 L999.75 418.00 L998.34 418.00 L996.93 418.00 L995.53 418.00 L994.12 418.00 L992.71 418.00 L991.30 418.00 L989.89 418.00 L988.48 418.00 L987.07 418.00 L985.66 418.00 L984.25 418.00 L982.84 418.00 L981.43 418.00 L980.02 418.00 L978.61 418.00 L977.20 418.00 L975.79 418.00 L974.38 418.00 L972.97 418.00 L971.56 418.00 L970.15 418.00 L968.75 418.00 L967.34 418.00 L965.93 418.00 L964.52 418.00 L963.11 418.00 L961.70 418.00 L960.29 418.00 L958.88 418.00 L957.47 418.00 L956.06 418.00 L954.65 418.00 L953.24 418.00 L951.83 418.00 L950.42 418.00 L949.01 418.00 L947.60 418.00 L946.19 418.00 L944.78 418.00 L943.37 418.00 L941.97 418.00 L940.56 418.00 L939.15 418.00 L937.74 418.00 L936.33 418.00 L934.92 418.00 L933.51 418.00 L932.10 418.00 L930.69 418.00 L929.28 418.00 L927.87 418.00 L926.46 418.00 L925.05 418.00 L923.64 418.00 L922.23 418.00 L920.82 418.00 L919.41 418.00 L918.00 418.00 L916.59 418.00 L915.19 418.00 L913.78 418.00 L912.37 418.00 L910.96 418.00 L909.55 418.00 L908.14 418.00 L906.73 418.00 L905.32 418.00 L903.91 418.00 L902.50 418.00"/>
<path d="M901.90 369.00 L900.93 369.00 L899.36 369.00 L897.78 369.00 L896.21 369.00 L894.64 369.00 L893.07 369.00 L891.50 369.00 L889.92 369.00 L888.35 369.00 L886.78 369.00 L885.21 369.00 L883.64 369.00 L882.06 369.00 L880.49 369.00 L878.92 369.00 L877.35 369.00 L875.77 369.00 L874.20 369.00 L872.63 369.00 L871.06 369.00 L869.49 369.00 L867.91 369.00 L866.34 369.00 L864.77 369.00 L863.20 369.00 L861.63 369.00 L860.05 369.00 L858.48 369.00 L856.91 369.00 L855.34 369.00 L853.77 369.00 L852.19 369.00 L850.62 369.00 L849.05 369.00 L847.48 369.00 L845.91 369.00 L844.33 369.00 L842.76 369.00 L841.19 369.00 L839.62 369.00 L838.05 369.00 L836.47 369.00 L834.90 369.00 L833.33 369.00 L831.76 369.00 L830.19 369.00 L828.61 369.00 L827.04 369.00 L825.47 369.00 L823.90 369.00 L822.32 369.00 L820.75 369.00 L819.18 369.00 L817.61 369.00 L816.04 369.00 L814.46 369.00 L812.89 369.00 L811.32 369.00 L809.75 369.00 L808.18 369.00 L806.60 369.00 L805.03 369.00 L803.46 369.00 L801.89 369.00 L800.32 369.00 L798.74 369.00 L797.17 369.00 L795.60 369.00 L794.03 369.00 L792.46 369.00 L790.88 369.00 L789.31 369.00 L787.74 369.00 L786.17 369.00 L784.60 369.00 L783.02 369.00 L781.45 369.00 L779.88 369.00 L778.31 369.00 L776.73 369.00 L775.16 369.00 L773.59 369.00 L772.02 369.00 L770.45 369.00 L768.87 369.00 L767.30 369.00 L765.73 369.00 L764.16 369.00 L762.59 369.00 L761.01 369.00 L759.44 369.00 L757.87 369.00 L756.30 369.00 L754.73 369.00 L753.15 369.00 L751.58 369.00 L750.01 369.00 L748.44 369.00 L746.87 369.00 L745.29 369.00 L743.72 369.00 L742.15 369.00 L740.58 369.00 L739.01 369.00 L737.43 369.00 L735.86 369.00 L734.29 369.00 L732.72 369.00 L731.15 369.00 L729.57 369.00 L728.00 369.00 L726.43 369.00 L724.86 369.00 L723.28 369.00 L721.71 369.00 L720.14 369.00 L718.57 369.00 L717.00 369.00 L715.42 369.00 L713.85 369.00 L712.28 369.00 L710.71 369.00 L709.14 369.00 L707.56 369.00 L705.99 369.00 L704.42 369.00 L702.85 369.00 L701.28 369.00 L699.70 369.00 L698.13 369.00 L696.56 369.00 L694.99 369.00 L693.42 369.00 L691.84 369.00 L690.27 369.00 L688.70 369.00 L687.13 369.00 L685.56 369.00 L683.98 369.00 L682.41 369.00 L680.84 369.00 L679.27 369.00 L677.69 369.00 L676.12 369.00 L674.55 369.00 L672.98 369.00 L671.41 369.00 L669.83 369.00 L668.26 369.00 L666.69 369.00 L665.12 369.00 L663.55 369.00 L661.97 369.00 L660.40 369.00 L658.83 369.00 L657.26 369.00 L655.69 369.00 L654.11 369.00 L652.54 369.00 L650.97 369.00 L649.40 369.00 L647.83 369.00 L646.25 369.00 L644.68 369.00 L643.11 369.00 L641.54 369.00 L639.97 369.00 L638.39 369.00 L636.82 369.00 L635.25 369.00 L633.68 369.00 L632.11 369.00 L630.53 369.00 L628.96 369.00 L627.39 369.00 L625.82 369.00 L624.24 369.00 L622.67 369.00 L621.10 369.00 L619.53 369.00 L617.96 369.00 L616.38 369.00 L614.81 369.00 L613.24 369.00 L611.67 369.00 L610.10 369.00 L608.52 369.00 L606.95 369.00 L605.38 369.00 L603.81 369.00 L602.24 369.00 L600.66 369.00 L599.09 369.00 L597.52 369.00 L595.95 369.00 L594.38 369.00 L592.80 369.00 L591.23 369.00 L589.66 369.00 L588.09 369.00 L586.52 369.00 L584.94 369.00 L583.37 369.00 L581.80 369.00 L580.23 369.00 L578.65 369.00 L577.08 369.00 L575.51 369.00 L573.94 369.00 L572.37 369.00 L570.79 369.00 L569.22 369.00 L567.65 369.00 L566.08 369.00 L564.51 369.00 L562.93 369.00 L561.36 369.00 L559.79 369.00 L558.22 369.00 L556.65 369.00 L555.07 369.00 L553.50 369.00 L551.93 369.00 L550.36 369.00 L548.79 369.00 L547.21 369.00 L545.64 369.00 L544.07 369.00 L542.50 369.00 L540.93 369.00 L539.35 369.00 L537.78 369.00 L536.21 369.00 L534.64 369.00 L533.07 369.00 L531.49 369.00 L529.92 369.00 L528.35 369.00 L526.78 369.00 L525.20 369.00 L523.63 369.00 L522.06 369.00 L520.49 369.00 L518.92 369.00 L517.34 369.00 L515.77 369.00 L514.20 369.00 L512.63 369.00 L511.06 369.00 L509.48 369.00 L507.91 369.00 L506.34 369.00 L504.77 369.00 L503.20 369.00 L501.62 369.00 L500.05 369.00 L498.48 369.00 L496.91 369.00 L495.34 369.00 L493.76 369.00 L492.19 369.00 L490.62 369.00 L489.05 369.00 L487.48 369.00 L485.90 369.00 L484.33 369.00 L482.76 369.00 L481.19 369.00 L479.62 369.00 L478.04 369.00 L476.47 369.00 L474.90 369.00 L473.33 369.00 L471.75 369.00 L470.18 369.00 L468.61 369.00 L467.04 369.00 L465.47 369.00 L463.89 369.00 L462.32 369.00 L460.75 369.00 L459.18 369.00 L457.61 369.00 L456.03 369.00 L454.46 369.00 L452.89 369.00 L451.32 369.00 L449.75 369.00 L448.17 369.00 L446.60 369.00 L445.03 369.00 L443.46 369.00 L441.89 369.00 L440.31 369.00 L438.74 369.00 L437.17 369.00 L435.60 369.00 L434.03 369.00 L432.45 369.00 L430.88 369.00 L429.31 369.00 L427.74 369.00 L426.16 369.00 L424.59 369.00 L423.02 369.00 L421.45 369.00 L419.88 369.00 L418.30 369.00 L416.73 369.00 L415.16 369.00 L413.59 369.00 L412.02 369.00 L410.44 369.00 L408.87 369.00 L407.30 369.00 L405.73 369.00 L404.16 369.00 L402.58 369.00 L401.01 369.00 L399.44 369.00 L397.87 369.00 L396.30 369.00 L394.72 369.00 L393.15 369.00 L391.58 369.00 L390.01 369.00 L388.44 369.00 L386.86 369.00 L385.29 369.00 L383.72 369.00 L382.15 369.00 L380.58 369.00 L379.00 369.00 L377.43 369.00 L375.86 369.00 L374.29 369.00 L372.71 369.00 L371.14 369.00 L369.57 369.00 L368.00 369.00 L366.43 369.00 L364.85 369.00 L363.28 369.00 L361.71 369.00 L360.14 369.00 L358.57 369.00 L356.99 369.00 L355.42 369.00 L353.85 369.00 L352.28 369.00 L350.71 369.00 L349.13 369.00 L347.56 369.00 L345.99 369.00 L344.42 369.00 L342.85 369.00 L341.27 369.00 L339.70 369.00 L338.13 369.00 L336.56 369.00"/>
<path d="M1468.44 369.00 L1466.87 369.00 L1465.30 369.00 L1463.73 369.00 L1462.15 369.00 L1460.58 369.00 L1459.01 369.00 L1457.44 369.00 L1455.87 369.00 L1454.29 369.00 L1452.72 369.00 L1451.15 369.00 L1449.58 369.00 L1448.01 369.00 L1446.43 369.00 L1444.86 369.00 L1443.29 369.00 L1441.72 369.00 L1440.15 369.00 L1438.57 369.00 L1437.00 369.00 L1435.43 369.00 L1433.86 369.00 L1432.29 369.00 L1430.71 369.00 L1429.14 369.00 L1427.57 369.00 L1426.00 369.00 L1424.42 369.00 L1422.85 369.00 L1421.28 369.00 L1419.71 369.00 L1418.14 369.00 L1416.56 369.00 L1414.99 369.00 L1413.42 369.00 L1411.85 369.00 L1410.28 369.00 L1408.70 369.00 L1407.13 369.00 L1405.56 369.00 L1403.99 369.00 L1402.42 369.00 L1400.84 369.00 L1399.27 369.00 L1397.70 369.00 L1396.13 369.00 L1394.56 369.00 L1392.98 369.00 L1391.41 369.00 L1389.84 369.00 L1388.27 369.00 L1386.70 369.00 L1385.12 369.00 L1383.55 369.00 L1381.98 369.00 L1380.41 369.00 L1378.84 369.00 L1377.26 369.00 L1375.69 369.00 L1374.12 369.00 L1372.55 369.00 L1370.97 369.00 L1369.40 369.00 L1367.83 369.00 L1366.26 369.00 L1364.69 369.00 L1363.11 369.00 L1361.54 369.00 L1359.97 369.00 L1358.40 369.00 L1356.83 369.00 L1355.25 369.00 L1353.68 369.00 L1352.11 369.00 L1350.54 369.00 L1348.97 369.00 L1347.39 369.00 L1345.82 369.00 L1344.25 369.00 L1342.68 369.00 L1341.11 369.00 L1339.53 369.00 L1337.96 369.00 L1336.39 369.00 L1334.82 369.00 L1333.25 369.00 L1331.67 369.00 L1330.10 369.00 L1328.53 369.00 L1326.96 369.00 L1325.38 369.00 L1323.81 369.00 L1322.24 369.00 L1320.67 369.00 L1319.10 369.00 L1317.52 369.00 L1315.95 369.00 L1314.38 369.00 L1312.81 369.00 L1311.24 369.00 L1309.66 369.00 L1308.09 369.00 L1306.52 369.00 L1304.95 369.00 L1303.38 369.00 L1301.80 369.00 L1300.23 369.00 L1298.66 369.00 L1297.09 369.00 L1295.52 369.00 L1293.94 369.00 L1292.37 369.00 L1290.80 369.00 L1289.23 369.00 L1287.66 369.00 L1286.08 369.00 L1284.51 369.00 L1282.94 369.00 L1281.37 369.00 L1279.80 369.00 L1278.22 369.00 L1276.65 369.00 L1275.08 369.00 L1273.51 369.00 L1271.93 369.00 L1270.36 369.00 L1268.79 369.00 L1267.22 369.00 L1265.65 369.00 L1264.07 369.00 L1262.50 369.00 L1260.93 369.00 L1259.36 369.00 L1257.79 369.00 L1256.21 369.00 L1254.64 369.00 L1253.07 369.00 L1251.50 369.00 L1249.93 369.00 L1248.35 369.00 L1246.78 369.00 L1245.21 369.00 L1243.64 369.00 L1242.07 369.00 L1240.49 369.00 L1238.92 369.00 L1237.35 369.00 L1235.78 369.00 L1234.21 369.00 L1232.63 369.00 L1231.06 369.00 L1229.49 369.00 L1227.92 369.00 L1226.35 369.00 L1224.77 369.00 L1223.20 369.00 L1221.63 369.00 L1220.06 369.00 L1218.48 369.00 L1216.91 369.00 L1215.34 369.00 L1213.77 369.00 L1212.20 369.00 L1210.62 369.00 L1209.05 369.00 L1207.48 369.00 L1205.91 369.00 L1204.34 369.00 L1202.76 369.00 L1201.19 369.00 L1199.62 369.00 L1198.05 369.00 L1196.48 369.00 L1194.90 369.00 L1193.33 369.00 L1191.76 369.00 L1190.19 369.00 L1188.62 369.00 L1187.04 369.00 L1185.47 369.00 L1183.90 369.00 L1182.33 369.00 L1180.76 369.00 L1179.18 369.00 L1177.61 369.00 L1176.04 369.00 L1174.47 369.00 L1172.89 369.00 L1171.32 369.00 L1169.75 369.00 L1168.18 369.00 L1166.61 369.00 L1165.03 369.00 L1163.46 369.00 L1161.89 369.00 L1160.32 369.00 L1158.75 369.00 L1157.17 369.00 L1155.60 369.00 L1154.03 369.00 L1152.46 369.00 L1150.89 369.00 L1149.31 369.00 L1147.74 369.00 L1146.17 369.00 L1144.60 369.00 L1143.03 369.00 L1141.45 369.00 L1139.88 369.00 L1138.31 369.00 L1136.74 369.00 L1135.17 369.00 L1133.59 369.00 L1132.02 369.00 L1130.45 369.00 L1128.88 369.00 L1127.31 369.00 L1125.73 369.00 L1124.16 369.00 L1122.59 369.00 L1121.02 369.00 L1119.44 369.00 L1117.87 369.00 L1116.30 369.00 L1114.73 369.00 L1113.16 369.00 L1111.58 369.00 L1110.01 369.00 L1108.44 369.00 L1106.87 369.00 L1105.30 369.00 L1103.72 369.00 L1102.15 369.00 L1100.58 369.00 L1099.01 369.00 L1097.44 369.00 L1095.86 369.00 L1094.29 369.00 L1092.72 369.00 L1091.15 369.00 L1089.58 369.00 L1088.00 369.00 L1086.43 369.00 L1084.86 369.00 L1083.29 369.00 L1081.72 369.00 L1080.14 369.00 L1078.57 369.00 L1077.00 369.00 L1075.43 369.00 L1073.85 369.00 L1072.28 369.00 L1070.71 369.00 L1069.14 369.00 L1067.57 369.00 L1065.99 369.00 L1064.42 369.00 L1062.85 369.00 L1061.28 369.00 L1059.71 369.00 L1058.13 369.00 L1056.56 369.00 L1054.99 369.00 L1053.42 369.00 L1051.85 369.00 L1050.27 369.00 L1048.70 369.00 L1047.13 369.00 L1045.56 369.00 L1043.99 369.00 L1042.41 369.00 L1040.84 369.00 L1039.27 369.00 L1037.70 369.00 L1036.13 369.00 L1034.55 369.00 L1032.98 369.00 L1031.41 369.00 L1029.84 369.00 L1028.27 369.00 L1026.69 369.00 L1025.12 369.00 L1023.55 369.00 L1021.98 369.00 L1020.40 369.00 L1018.83 369.00 L1017.26 369.00 L1015.69 369.00 L1014.12 369.00 L1012.54 369.00 L1010.97 369.00 L1009.40 369.00 L1007.83 369.00 L1006.26 369.00 L1004.68 369.00 L1003.11 369.00 L1001.54 369.00 L999.97 369.00 L998.40 369.00 L996.82 369.00 L995.25 369.00 L993.68 369.00 L992.11 369.00 L990.54 369.00 L988.96 369.00 L987.39 369.00 L985.82 369.00 L984.25 369.00 L982.68 369.00 L981.10 369.00 L979.53 369.00 L977.96 369.00 L976.39 369.00 L974.81 369.00 L973.24 369.00 L971.67 369.00 L970.10 369.00 L968.53 369.00 L966.95 369.00 L965.38 369.00 L963.81 369.00 L962.24 369.00 L960.67 369.00 L959.09 369.00 L957.52 369.00 L955.95 369.00 L954.38 369.00 L952.81 369.00 L951.23 369.00 L949.66 369.00 L948.09 369.00 L946.52 369.00 L944.95 369.00 L943.37 369.00 L941.80 369.00 L940.23 369.00 L938.66 369.00 L937.09 369.00 L935.51 369.00 L933.94 369.00 L932.37 369.00 L930.80 369.00 L929.23 369.00 L927.65 369.00 L926.08 369.00 L924.51 369.00 L922.94 369.00 L921.36 369.00 L919.79 369.00 L918.22 369.00 L916.65 369.00 L915.08 369.00 L913.50 369.00 L911.93 369.00 L910.36 369.00 L908.79 369.00 L907.22 369.00 L905.64 369.00 L904.07 369.00 L902.50 369.00"/>
<path d="M901.90 320.00 L900.87 320.00 L899.24 320.00 L897.62 320.00 L895.99 320.00 L894.36 320.00 L892.73 320.00 L891.11 320.00 L889.48 320.00 L887.85 320.00 L886.22 320.00 L884.60 320.00 L882.97 320.00 L881.34 320.00 L879.71 320.00 L878.09 320.00 L876.46 320.00 L874.83 320.00 L873.20 320.00 L871.58 320.00 L869.95 320.00 L868.32 320.00 L866.69 320.00 L865.07 320.00 L863.44 320.00 L861.81 320.00 L860.18 320.00 L858.56 320.00 L856.93 320.00 L855.30 320.00 L853.67 320.00 L852.05 320.00 L850.42 320.00 L848.79 320.00 L847.16 320.00 L845.54 320.00 L843.91 320.00 L842.28 320.00 L840.65 320.00 L839.03 320.00 L837.40 320.00 L835.77 320.00 L834.14 320.00 L832.52 320.00 L830.89 320.00 L829.26 320.00 L827.63 320.00 L826.01 320.00 L824.38 320.00 L822.75 320.00 L821.12 320.00 L819.50 320.00 L817.87 320.00 L816.24 320.00 L814.61 320.00 L812.99 320.00 L811.36 320.00 L809.73 320.00 L808.10 320.00 L806.48 320.00 L804.85 320.00 L803.22 320.00 L801.59 320.00 L799.97 320.00 L798.34 320.00 L796.71 320.00 L795.08 320.00 L793.46 320.00 L791.83 320.00 L790.20 320.00 L788.57 320.00 L786.95 320.00 L785.32 320.00 L783.69 320.00 L782.06 320.00 L780.44 320.00 L778.81 320.00 L777.18 320.00 L775.55 320.00 L773.93 320.00 L772.30 320.00 L770.67 320.00 L769.04 320.00 L767.42 320.00 L765.79 320.00 L764.16 320.00 L762.53 320.00 L760.91 320.00 L759.28 320.00 L757.65 320.00 L756.02 320.00 L754.40 320.00 L752.77 320.00 L751.14 320.00 L749.51 320.00 L747.89 320.00 L746.26 320.00 L744.63 320.00 L743.00 320.00 L741.38 320.00 L739.75 320.00 L738.12 320.00 L736.49 320.00 L734.87 320.00 L733.24 320.00 L731.61 320.00 L729.98 320.00 L728.36 320.00 L726.73 320.00 L725.10 320.00 L723.47 320.00 L721.85 320.00 L720.22 320.00 L718.59 320.00 L716.96 320.00 L715.34 320.00 L713.71 320.00 L712.08 320.00 L710.45 320.00 L708.83 320.00 L707.20 320.00 L705.57 320.00 L703.94 320.00 L702.32 320.00 L700.69 320.00 L699.06 320.00 L697.43 320.00 L695.81 320.00 L694.18 320.00 L692.55 320.00 L690.92 320.00 L689.29 320.00 L687.67 320.00 L686.04 320.00 L684.41 320.00 L682.78 320.00 L681.16 320.00 L679.53 320.00 L677.90 320.00 L676.27 320.00 L674.65 320.00 L673.02 320.00 L671.39 320.00 L669.76 320.00 L668.14 320.00 L666.51 320.00 L664.88 320.00 L663.25 320.00 L661.63 320.00 L660.00 320.00 L658.37 320.00 L656.74 320.00 L655.12 320.00 L653.49 320.00 L651.86 320.00 L650.23 320.00 L648.61 320.00 L646.98 320.00 L645.35 320.00 L643.72 320.00 L642.10 320.00 L640.47 320.00 L638.84 320.00 L637.21 320.00 L635.59 320.00 L633.96 320.00 L632.33 320.00 L630.70 320.00 L629.08 320.00 L627.45 320.00 L625.82 320.00 L624.19 320.00 L622.57 320.00 L620.94 320.00 L619.31 320.00 L617.68 320.00 L616.06 320.00 L614.43 320.00 L612.80 320.00 L611.17 320.00 L609.55 320.00 L607.92 320.00 L606.29 320.00 L604.66 320.00 L603.04 320.00 L601.41 320.00 L599.78 320.00 L598.15 320.00 L596.53 320.00 L594.90 320.00 L593.27 320.00 L591.64 320.00 L590.02 320.00 L588.39 320.00 L586.76 320.00 L585.13 320.00 L583.51 320.00 L581.88 320.00 L580.25 320.00 L578.62 320.00 L577.00 320.00 L575.37 320.00 L573.74 320.00 L572.11 320.00 L570.49 320.00 L568.86 320.00 L567.23 320.00 L565.60 320.00 L563.98 320.00 L562.35 320.00 L560.72 320.00 L559.09 320.00 L557.47 320.00 L555.84 320.00 L554.21 320.00 L552.58 320.00 L550.96 320.00 L549.33 320.00 L547.70 320.00 L546.07 320.00 L544.45 320.00 L542.82 320.00 L541.19 320.00 L539.56 320.00 L537.94 320.00 L536.31 320.00 L534.68 320.00 L533.05 320.00 L531.43 320.00 L529.80 320.00 L528.17 320.00 L526.54 320.00 L524.92 320.00 L523.29 320.00 L521.66 320.00 L520.03 320.00 L518.41 320.00 L516.78 320.00 L515.15 320.00 L513.52 320.00 L511.90 320.00 L510.27 320.00 L508.64 320.00 L507.01 320.00 L505.39 320.00 L503.76 320.00 L502.13 320.00 L500.50 320.00 L498.88 320.00 L497.25 320.00 L495.62 320.00 L493.99 320.00 L492.37 320.00 L490.74 320.00 L489.11 320.00 L487.48 320.00 L485.86 320.00 L484.23 320.00 L482.60 320.00 L480.97 320.00 L479.34 320.00 L477.72 320.00 L476.09 320.00 L474.46 320.00 L472.83 320.00 L471.21 320.00 L469.58 320.00 L467.95 320.00 L466.32 320.00 L464.70 320.00 L463.07 320.00 L461.44 320.00 L459.81 320.00 L458.19 320.00 L456.56 320.00 L454.93 320.00 L453.30 320.00 L451.68 320.00 L450.05 320.00 L448.42 320.00 L446.79 320.00 L445.17 320.00 L443.54 320.00 L441.91 320.00 L440.28 320.00 L438.66 320.00 L437.03 320.00 L435.40 320.00 L433.77 320.00 L432.15 320.00 L430.52 320.00 L428.89 320.00 L427.26 320.00 L425.64 320.00 L424.01 320.00 L422.38 320.00 L420.75 320.00 L419.13 320.00 L417.50 320.00 L415.87 320.00 L414.24 320.00 L412.62 320.00 L410.99 320.00 L409.36 320.00 L407.73 320.00 L406.11 320.00 L404.48 320.00 L402.85 320.00 L401.22 320.00 L399.60 320.00 L397.97 320.00 L396.34 320.00 L394.71 320.00 L393.09 320.00 L391.46 320.00 L389.83 320.00 L388.20 320.00 L386.58 320.00 L384.95 320.00 L383.32 320.00 L381.69 320.00 L380.07 320.00 L378.44 320.00 L376.81 320.00 L375.18 320.00 L373.56 320.00 L371.93 320.00 L370.30 320.00 L368.67 320.00 L367.05 320.00 L365.42 320.00 L363.79 320.00 L362.16 320.00 L360.54 320.00 L358.91 320.00 L357.28 320.00 L355.65 320.00 L354.03 320.00 L352.40 320.00 L350.77 320.00 L349.14 320.00 L347.52 320.00 L345.89 320.00 L344.26 320.00 L342.63 320.00 L341.01 320.00 L339.38 320.00 L337.75 320.00 L336.12 320.00 L334.50 320.00 L332.87 320.00 L331.24 320.00 L329.61 320.00 L327.99 320.00 L326.36 320.00 L324.73 320.00 L323.10 320.00 L321.48 320.00 L319.85 320.00 L318.22 320.00 L316.59 320.00"/>
<path d="M1488.41 320.00 L1486.78 320.00 L1485.15 320.00 L1483.52 320.00 L1481.90 320.00 L1480.27 320.00 L1478.64 320.00 L1477.01 320.00 L1475.39 320.00 L1473.76 320.00 L1472.13 320.00 L1470.50 320.00 L1468.88 320.00 L1467.25 320.00 L1465.62 320.00 L1463.99 320.00 L1462.37 320.00 L1460.74 320.00 L1459.11 320.00 L1457.48 320.00 L1455.86 320.00 L1454.23 320.00 L1452.60 320.00 L1450.97 320.00 L1449.35 320.00 L1447.72 320.00 L1446.09 320.00 L1444.46 320.00 L1442.84 320.00 L1441.21 320.00 L1439.58 320.00 L1437.95 320.00 L1436.33 320.00 L1434.70 320.00 L1433.07 320.00 L1431.44 320.00 L1429.82 320.00 L1428.19 320.00 L1426.56 320.00 L1424.93 320.00 L1423.31 320.00 L1421.68 320.00 L1420.05 320.00 L1418.42 320.00 L1416.80 320.00 L1415.17 320.00 L1413.54 320.00 L1411.91 320.00 L1410.29 320.00 L1408.66 320.00 L1407.03 320.00 L1405.40 320.00 L1403.78 320.00 L1402.15 320.00 L1400.52 320.00 L1398.89 320.00 L1397.27 320.00 L1395.64 320.00 L1394.01 320.00 L1392.38 320.00 L1390.76 320.00 L1389.13 320.00 L1387.50 320.00 L1385.87 320.00 L1384.25 320.00 L1382.62 320.00 L1380.99 320.00 L1379.36 320.00 L1377.74 320.00 L1376.11 320.00 L1374.48 320.00 L1372.85 320.00 L1371.23 320.00 L1369.60 320.00 L1367.97 320.00 L1366.34 320.00 L1364.72 320.00 L1363.09 320.00 L1361.46 320.00 L1359.83 320.00 L1358.21 320.00 L1356.58 320.00 L1354.95 320.00 L1353.32 320.00 L1351.70 320.00 L1350.07 320.00 L1348.44 320.00 L1346.81 320.00 L1345.19 320.00 L1343.56 320.00 L1341.93 320.00 L1340.30 320.00 L1338.68 320.00 L1337.05 320.00 L1335.42 320.00 L1333.79 320.00 L1332.17 320.00 L1330.54 320.00 L1328.91 320.00 L1327.28 320.00 L1325.66 320.00 L1324.03 320.00 L1322.40 320.00 L1320.77 320.00 L1319.14 320.00 L1317.52 320.00 L1315.89 320.00 L1314.26 320.00 L1312.63 320.00 L1311.01 320.00 L1309.38 320.00 L1307.75 320.00 L1306.12 320.00 L1304.50 320.00 L1302.87 320.00 L1301.24 320.00 L1299.61 320.00 L1297.99 320.00 L1296.36 320.00 L1294.73 320.00 L1293.10 320.00 L1291.48 320.00 L1289.85 320.00 L1288.22 320.00 L1286.59 320.00 L1284.97 320.00 L1283.34 320.00 L1281.71 320.00 L1280.08 320.00 L1278.46 320.00 L1276.83 320.00 L1275.20 320.00 L1273.57 320.00 L1271.95 320.00 L1270.32 320.00 L1268.69 320.00 L1267.06 320.00 L1265.44 320.00 L1263.81 320.00 L1262.18 320.00 L1260.55 320.00 L1258.93 320.00 L1257.30 320.00 L1255.67 320.00 L1254.04 320.00 L1252.42 320.00 L1250.79 320.00 L1249.16 320.00 L1247.53 320.00 L1245.91 320.00 L1244.28 320.00 L1242.65 320.00 L1241.02 320.00 L1239.40 320.00 L1237.77 320.00 L1236.14 320.00 L1234.51 320.00 L1232.89 320.00 L1231.26 320.00 L1229.63 320.00 L1228.00 320.00 L1226.38 320.00 L1224.75 320.00 L1223.12 320.00 L1221.49 320.00 L1219.87 320.00 L1218.24 320.00 L1216.61 320.00 L1214.98 320.00 L1213.36 320.00 L1211.73 320.00 L1210.10 320.00 L1208.47 320.00 L1206.85 320.00 L1205.22 320.00 L1203.59 320.00 L1201.96 320.00 L1200.34 320.00 L1198.71 320.00 L1197.08 320.00 L1195.45 320.00 L1193.83 320.00 L1192.20 320.00 L1190.57 320.00 L1188.94 320.00 L1187.32 320.00 L1185.69 320.00 L1184.06 320.00 L1182.43 320.00 L1180.81 320.00 L1179.18 320.00 L1177.55 320.00 L1175.92 320.00 L1174.30 320.00 L1172.67 320.00 L1171.04 320.00 L1169.41 320.00 L1167.79 320.00 L1166.16 320.00 L1164.53 320.00 L1162.90 320.00 L1161.28 320.00 L1159.65 320.00 L1158.02 320.00 L1156.39 320.00 L1154.77 320.00 L1153.14 320.00 L1151.51 320.00 L1149.88 320.00 L1148.26 320.00 L1146.63 320.00 L1145.00 320.00 L1143.37 320.00 L1141.75 320.00 L1140.12 320.00 L1138.49 320.00 L1136.86 320.00 L1135.24 320.00 L1133.61 320.00 L1131.98 320.00 L1130.35 320.00 L1128.73 320.00 L1127.10 320.00 L1125.47 320.00 L1123.84 320.00 L1122.22 320.00 L1120.59 320.00 L1118.96 320.00 L1117.33 320.00 L1115.71 320.00 L1114.08 320.00 L1112.45 320.00 L1110.82 320.00 L1109.19 320.00 L1107.57 320.00 L1105.94 320.00 L1104.31 320.00 L1102.68 320.00 L1101.06 320.00 L1099.43 320.00 L1097.80 320.00 L1096.17 320.00 L1094.55 320.00 L1092.92 320.00 L1091.29 320.00 L1089.66 320.00 L1088.04 320.00 L1086.41 320.00 L1084.78 320.00 L1083.15 320.00 L1081.53 320.00 L1079.90 320.00 L1078.27 320.00 L1076.64 320.00 L1075.02 320.00 L1073.39 320.00 L1071.76 320.00 L1070.13 320.00 L1068.51 320.00 L1066.88 320.00 L1065.25 320.00 L1063.62 320.00 L1062.00 320.00 L1060.37 320.00 L1058.74 320.00 L1057.11 320.00 L1055.49 320.00 L1053.86 320.00 L1052.23 320.00 L1050.60 320.00 L1048.98 320.00 L1047.35 320.00 L1045.72 320.00 L1044.09 320.00 L1042.47 320.00 L1040.84 320.00 L1039.21 320.00 L1037.58 320.00 L1035.96 320.00 L1034.33 320.00 L1032.70 320.00 L1031.07 320.00 L1029.45 320.00 L1027.82 320.00 L1026.19 320.00 L1024.56 320.00 L1022.94 320.00 L1021.31 320.00 L1019.68 320.00 L1018.05 320.00 L1016.43 320.00 L1014.80 320.00 L1013.17 320.00 L1011.54 320.00 L1009.92 320.00 L1008.29 320.00 L1006.66 320.00 L1005.03 320.00 L1003.41 320.00 L1001.78 320.00 L1000.15 320.00 L998.52 320.00 L996.90 320.00 L995.27 320.00 L993.64 320.00 L992.01 320.00 L990.39 320.00 L988.76 320.00 L987.13 320.00 L985.50 320.00 L983.88 320.00 L982.25 320.00 L980.62 320.00 L978.99 320.00 L977.37 320.00 L975.74 320.00 L974.11 320.00 L972.48 320.00 L970.86 320.00 L969.23 320.00 L967.60 320.00 L965.97 320.00 L964.35 320.00 L962.72 320.00 L961.09 320.00 L959.46 320.00 L957.84 320.00 L956.21 320.00 L954.58 320.00 L952.95 320.00 L951.33 320.00 L949.70 320.00 L948.07 320.00 L946.44 320.00 L944.82 320.00 L943.19 320.00 L941.56 320.00 L939.93 320.00 L938.31 320.00 L936.68 320.00 L935.05 320.00 L933.42 320.00 L931.80 320.00 L930.17 320.00 L928.54 320.00 L926.91 320.00 L925.29 320.00 L923.66 320.00 L922.03 320.00 L920.40 320.00 L918.78 320.00 L917.15 320.00 L915.52 320.00 L913.89 320.00 L912.27 320.00 L910.64 320.00 L909.01 320.00 L907.38 320.00 L905.76 320.00 L904.13 320.00 L902.50 320.00"/>
<path d="M901.90 271.00 L900.93 271.00 L899.36 271.00 L897.78 271.00 L896.21 271.00 L894.64 271.00 L893.07 271.00 L891.50 271.00 L889.92 271.00 L888.35 271.00 L886.78 271.00 L885.21 271.00 L883.64 271.00 L882.06 271.00 L880.49 271.00 L878.92 271.00 L877.35 271.00 L875.77 271.00 L874.20 271.00 L872.63 271.00 L871.06 271.00 L869.49 271.00 L867.91 271.00 L866.34 271.00 L864.77 271.00 L863.20 271.00 L861.63 271.00 L860.05 271.00 L858.48 271.00 L856.91 271.00 L855.34 271.00 L853.77 271.00 L852.19 271.00 L850.62 271.00 L849.05 271.00 L847.48 271.00 L845.91 271.00 L844.33 271.00 L842.76 271.00 L841.19 271.00 L839.62 271.00 L838.05 271.00 L836.47 271.00 L834.90 271.00 L833.33 271.00 L831.76 271.00 L830.19 271.00 L828.61 271.00 L827.04 271.00 L825.47 271.00 L823.90 271.00 L822.32 271.00 L820.75 271.00 L819.18 271.00 L817.61 271.00 L816.04 271.00 L814.46 271.00 L812.89 271.00 L811.32 271.00 L809.75 271.00 L808.18 271.00 L806.60 271.00 L805.03 271.00 L803.46 271.00 L801.89 271.00 L800.32 271.00 L798.74 271.00 L797.17 271.00 L795.60 271.00 L794.03 271.00 L792.46 271.00 L790.88 271.00 L789.31 271.00 L787.74 271.00 L786.17 271.00 L784.60 271.00 L783.02 271.00 L781.45 271.00 L779.88 271.00 L778.31 271.00 L776.73 271.00 L775.16 271.00 L773.59 271.00 L772.02 271.00 L770.45 271.00 L768.87 271.00 L767.30 271.00 L765.73 271.00 L764.16 271.00 L762.59 271.00 L761.01 271.00 L759.44 271.00 L757.87 271.00 L756.30 271.00 L754.73 271.00 L753.15 271.00 L751.58 271.00 L750.01 271.00 L748.44 271.00 L746.87 271.00 L745.29 271.00 L743.72 271.00 L742.15 271.00 L740.58 271.00 L739.01 271.00 L737.43 271.00 L735.86 271.00 L734.29 271.00 L732.72 271.00 L731.15 271.00 L729.57 271.00 L728.00 271.00 L726.43 271.00 L724.86 271.00 L723.28 271.00 L721.71 271.00 L720.14 271.00 L718.57 271.00 L717.00 271.00 L715.42 271.00 L713.85 271.00 L712.28 271.00 L710.71 271.00 L709.14 271.00 L707.56 271.00 L705.99 271.00 L704.42 271.00 L702.85 271.00 L701.28 271.00 L699.70 271.00 L698.13 271.00 L696.56 271.00 L694.99 271.00 L693.42 271.00 L691.84 271.00 L690.27 271.00 L688.70 271.00 L687.13 271.00 L685.56 271.00 L683.98 271.00 L682.41 271.00 L680.84 271.00 L679.27 271.00 L677.69 271.00 L676.12 271.00 L674.55 271.00 L672.98 271.00 L671.41 271.00 L669.83 271.00 L668.26 271.00 L666.69 271.00 L665.12 271.00 L663.55 271.00 L661.97 271.00 L660.40 271.00 L658.83 271.00 L657.26 271.00 L655.69 271.00 L654.11 271.00 L652.54 271.00 L650.97 271.00 L649.40 271.00 L647.83 271.00 L646.25 271.00 L644.68 271.00 L643.11 271.00 L641.54 271.00 L639.97 271.00 L638.39 271.00 L636.82 271.00 L635.25 271.00 L633.68 271.00 L632.11 271.00 L630.53 271.00 L628.96 271.00 L627.39 271.00 L625.82 271.00 L624.24 271.00 L622.67 271.00 L621.10 271.00 L619.53 271.00 L617.96 271.00 L616.38 271.00 L614.81 271.00 L613.24 271.00 L611.67 271.00 L610.10 271.00 L608.52 271.00 L606.95 271.00 L605.38 271.00 L603.81 271.00 L602.24 271.00 L600.66 271.00 L599.09 271.00 L597.52 271.00 L595.95 271.00 L594.38 271.00 L592.80 271.00 L591.23 271.00 L589.66 271.00 L588.09 271.00 L586.52 271.00 L584.94 271.00 L583.37 271.00 L581.80 271.00 L580.23 271.00 L578.65 271.00 L577.08 271.00 L575.51 271.00 L573.94 271.00 L572.37 271.00 L570.79 271.00 L569.22 271.00 L567.65 271.00 L566.08 271.00 L564.51 271.00 L562.93 271.00 L561.36 271.00 L559.79 271.00 L558.22 271.00 L556.65 271.00 L555.07 271.00 L553.50 271.00 L551.93 271.00 L550.36 271.00 L548.79 271.00 L547.21 271.00 L545.64 271.00 L544.07 271.00 L542.50 271.00 L540.93 271.00 L539.35 271.00 L537.78 271.00 L536.21 271.00 L534.64 271.00 L533.07 271.00 L531.49 271.00 L529.92 271.00 L528.35 271.00 L526.78 271.00 L525.20 271.00 L523.63 271.00 L522.06 271.00 L520.49 271.00 L518.92 271.00 L517.34 271.00 L515.77 271.00 L514.20 271.00 L512.63 271.00 L511.06 271.00 L509.48 271.00 L507.91 271.00 L506.34 271.00 L504.77 271.00 L503.20 271.00 L501.62 271.00 L500.05 271.00 L498.48 271.00 L496.91 271.00 L495.34 271.00 L493.76 271.00 L492.19 271.00 L490.62 271.00 L489.05 271.00 L487.48 271.00 L485.90 271.00 L484.33 271.00 L482.76 271.00 L481.19 271.00 L479.62 271.00 L478.04 271.00 L476.47 271.00 L474.90 271.00 L473.33 271.00 L471.75 271.00 L470.18 271.00 L468.61 271.00 L467.04 271.00 L465.47 271.00 L463.89 271.00 L462.32 271.00 L460.75 271.00 L459.18 271.00 L457.61 271.00 L456.03 271.00 L454.46 271.00 L452.89 271.00 L451.32 271.00 L449.75 271.00 L448.17 271.00 L446.60 271.00 L445.03 271.00 L443.46 271.00 L441.89 271.00 L440.31 271.00 L438.74 271.00 L437.17 271.00 L435.60 271.00 L434.03 271.00 L432.45 271.00 L430.88 271.00 L429.31 271.00 L427.74 271.00 L426.16 271.00 L424.59 271.00 L423.02 271.00 L421.45 271.00 L419.88 271.00 L418.30 271.00 L416.73 271.00 L415.16 271.00 L413.59 271.00 L412.02 271.00 L410.44 271.00 L408.87 271.00 L407.30 271.00 L405.73 271.00 L404.16 271.00 L402.58 271.00 L401.01 271.00 L399.44 271.00 L397.87 271.00 L396.30 271.00 L394.72 271.00 L393.15 271.00 L391.58 271.00 L390.01 271.00 L388.44 271.00 L386.86 271.00 L385.29 271.00 L383.72 271.00 L382.15 271.00 L380.58 271.00 L379.00 271.00 L377.43 271.00 L375.86 271.00 L374.29 271.00 L372.71 271.00 L371.14 271.00 L369.57 271.00 L368.00 271.00 L366.43 271.00 L364.85 271.00 L363.28 271.00 L361.71 271.00 L360.14 271.00 L358.57 271.00 L356.99 271.00 L355.42 271.00 L353.85 271.00 L352.28 271.00 L350.71 271.00 L349.13 271.00 L347.56 271.00 L345.99 271.00 L344.42 271.00 L342.85 271.00 L341.27 271.00 L339.70 271.00 L338.13 271.00 L336.56 271.00"/>
<path d="M1468.44 271.00 L1466.87 271.00 L1465.30 271.00 L1463.73 271.00 L1462.15 271.00 L1460.58 271.00 L1459.01 271.00 L1457.44 271.00 L1455.87 271.00 L1454.29 271.00 L1452.72 271.00 L1451.15 271.00 L1449.58 271.00 L1448.01 271.00 L1446.43 271.00 L1444.86 271.00 L1443.29 271.00 L1441.72 271.00 L1440.15 271.00 L1438.57 271.00 L1437.00 271.00 L1435.43 271.00 L1433.86 271.00 L1432.29 271.00 L1430.71 271.00 L1429.14 271.00 L1427.57 271.00 L1426.00 271.00 L1424.42 271.00 L1422.85 271.00 L1421.28 271.00 L1419.71 271.00 L1418.14 271.00 L1416.56 271.00 L1414.99 271.00 L1413.42 271.00 L1411.85 271.00 L1410.28 271.00 L1408.70 271.00 L1407.13 271.00 L1405.56 271.00 L1403.99 271.00 L1402.42 271.00 L1400.84 271.00 L1399.27 271.00 L1397.70 271.00 L1396.13 271.00 L1394.56 271.00 L1392.98 271.00 L1391.41 271.00 L1389.84 271.00 L1388.27 271.00 L1386.70 271.00 L1385.12 271.00 L1383.55 271.00 L1381.98 271.00 L1380.41 271.00 L1378.84 271.00 L1377.26 271.00 L1375.69 271.00 L1374.12 271.00 L1372.55 271.00 L1370.97 271.00 L1369.40 271.00 L1367.83 271.00 L1366.26 271.00 L1364.69 271.00 L1363.11 271.00 L1361.54 271.00 L1359.97 271.00 L1358.40 271.00 L1356.83 271.00 L1355.25 271.00 L1353.68 271.00 L1352.11 271.00 L1350.54 271.00 L1348.97 271.00 L1347.39 271.00 L1345.82 271.00 L1344.25 271.00 L1342.68 271.00 L1341.11 271.00 L1339.53 271.00 L1337.96 271.00 L1336.39 271.00 L1334.82 271.00 L1333.25 271.00 L1331.67 271.00 L1330.10 271.00 L1328.53 271.00 L1326.96 271.00 L1325.38 271.00 L1323.81 271.00 L1322.24 271.00 L1320.67 271.00 L1319.10 271.00 L1317.52 271.00 L1315.95 271.00 L1314.38 271.00 L1312.81 271.00 L1311.24 271.00 L1309.66 271.00 L1308.09 271.00 L1306.52 271.00 L1304.95 271.00 L1303.38 271.00 L1301.80 271.00 L1300.23 271.00 L1298.66 271.00 L1297.09 271.00 L1295.52 271.00 L1293.94 271.00 L1292.37 271.00 L1290.80 271.00 L1289.23 271.00 L1287.66 271.00 L1286.08 271.00 L1284.51 271.00 L1282.94 271.00 L1281.37 271.00 L1279.80 271.00 L1278.22 271.00 L1276.65 271.00 L1275.08 271.00 L1273.51 271.00 L1271.93 271.00 L1270.36 271.00 L1268.79 271.00 L1267.22 271.00 L1265.65 271.00 L1264.07 271.00 L1262.50 271.00 L1260.93 271.00 L1259.36 271.00 L1257.79 271.00 L1256.21 271.00 L1254.64 271.00 L1253.07 271.00 L1251.50 271.00 L1249.93 271.00 L1248.35 271.00 L1246.78 271.00 L1245.21 271.00 L1243.64 271.00 L1242.07 271.00 L1240.49 271.00 L1238.92 271.00 L1237.35 271.00 L1235.78 271.00 L1234.21 271.00 L1232.63 271.00 L1231.06 271.00 L1229.49 271.00 L1227.92 271.00 L1226.35 271.00 L1224.77 271.00 L1223.20 271.00 L1221.63 271.00 L1220.06 271.00 L1218.48 271.00 L1216.91 271.00 L1215.34 271.00 L1213.77 271.00 L1212.20 271.00 L1210.62 271.00 L1209.05 271.00 L1207.48 271.00 L1205.91 271.00 L1204.34 271.00 L1202.76 271.00 L1201.19 271.00 L1199.62 271.00 L1198.05 271.00 L1196.48 271.00 L1194.90 271.00 L1193.33 271.00 L1191.76 271.00 L1190.19 271.00 L1188.62 271.00 L1187.04 271.00 L1185.47 271.00 L1183.90 271.00 L1182.33 271.00 L1180.76 271.00 L1179.18 271.00 L1177.61 271.00 L1176.04 271.00 L1174.47 271.00 L1172.89 271.00 L1171.32 271.00 L1169.75 271.00 L1168.18 271.00 L1166.61 271.00 L1165.03 271.00 L1163.46 271.00 L1161.89 271.00 L1160.32 271.00 L1158.75 271.00 L1157.17 271.00 L1155.60 271.00 L1154.03 271.00 L1152.46 271.00 L1150.89 271.00 L1149.31 271.00 L1147.74 271.00 L1146.17 271.00 L1144.60 271.00 L1143.03 271.00 L1141.45 271.00 L1139.88 271.00 L1138.31 271.00 L1136.74 271.00 L1135.17 271.00 L1133.59 271.00 L1132.02 271.00 L1130.45 271.00 L1128.88 271.00 L1127.31 271.00 L1125.73 271.00 L1124.16 271.00 L1122.59 271.00 L1121.02 271.00 L1119.44 271.00 L1117.87 271.00 L1116.30 271.00 L1114.73 271.00 L1113.16 271.00 L1111.58 271.00 L1110.01 271.00 L1108.44 271.00 L1106.87 271.00 L1105.30 271.00 L1103.72 271.00 L1102.15 271.00 L1100.58 271.00 L1099.01 271.00 L1097.44 271.00 L1095.86 271.00 L1094.29 271.00 L1092.72 271.00 L1091.15 271.00 L1089.58 271.00 L1088.00 271.00 L1086.43 271.00 L1084.86 271.00 L1083.29 271.00 L1081.72 271.00 L1080.14 271.00 L1078.57 271.00 L1077.00 271.00 L1075.43 271.00 L1073.85 271.00 L1072.28 271.00 L1070.71 271.00 L1069.14 271.00 L1067.57 271.00 L1065.99 271.00 L1064.42 271.00 L1062.85 271.00 L1061.28 271.00 L1059.71 271.00 L1058.13 271.00 L1056.56 271.00 L1054.99 271.00 L1053.42 271.00 L1051.85 271.00 L1050.27 271.00 L1048.70 271.00 L1047.13 271.00 L1045.56 271.00 L1043.99 271.00 L1042.41 271.00 L1040.84 271.00 L1039.27 271.00 L1037.70 271.00 L1036.13 271.00 L1034.55 271.00 L1032.98 271.00 L1031.41 271.00 L1029.84 271.00 L1028.27 271.00 L1026.69 271.00 L1025.12 271.00 L1023.55 271.00 L1021.98 271.00 L1020.40 271.00 L1018.83 271.00 L1017.26 271.00 L1015.69 271.00 L1014.12 271.00 L1012.54 271.00 L1010.97 271.00 L1009.40 271.00 L1007.83 271.00 L1006.26 271.00 L1004.68 271.00 L1003.11 271.00 L1001.54 271.00 L999.97 271.00 L998.40 271.00 L996.82 271.00 L995.25 271.00 L993.68 271.00 L992.11 271.00 L990.54 271.00 L988.96 271.00 L987.39 271.00 L985.82 271.00 L984.25 271.00 L982.68 271.00 L981.10 271.00 L979.53 271.00 L977.96 271.00 L976.39 271.00 L974.81 271.00 L973.24 271.00 L971.67 271.00 L970.10 271.00 L968.53 271.00 L966.95 271.00 L965.38 271.00 L963.81 271.00 L962.24 271.00 L960.67 271.00 L959.09 271.00 L957.52 271.00 L955.95 271.00 L954.38 271.00 L952.81 271.00 L951.23 271.00 L949.66 271.00 L948.09 271.00 L946.52 271.00 L944.95 271.00 L943.37 271.00 L941.80 271.00 L940.23 271.00 L938.66 271.00 L937.09 271.00 L935.51 271.00 L933.94 271.00 L932.37 271.00 L930.80 271.00 L929.23 271.00 L927.65 271.00 L926.08 271.00 L924.51 271.00 L922.94 271.00 L921.36 271.00 L919.79 271.00 L918.22 271.00 L916.65 271.00 L915.08 271.00 L913.50 271.00 L911.93 271.00 L910.36 271.00 L908.79 271.00 L907.22 271.00 L905.64 271.00 L904.07 271.00 L902.50 271.00"/>
<path d="M901.90 223.00 L901.09 223.00 L899.68 223.00 L898.27 223.00 L896.86 223.00 L895.45 223.00 L894.04 223.00 L892.63 223.00 L891.22 223.00 L889.81 223.00 L888.41 223.00 L887.00 223.00 L885.59 223.00 L884.18 223.00 L882.77 223.00 L881.36 223.00 L879.95 223.00 L878.54 223.00 L877.13 223.00 L875.72 223.00 L874.31 223.00 L872.90 223.00 L871.49 223.00 L870.08 223.00 L868.67 223.00 L867.26 223.00 L865.85 223.00 L864.44 223.00 L863.03 223.00 L861.63 223.00 L860.22 223.00 L858.81 223.00 L857.40 223.00 L855.99 223.00 L854.58 223.00 L853.17 223.00 L851.76 223.00 L850.35 223.00 L848.94 223.00 L847.53 223.00 L846.12 223.00 L844.71 223.00 L843.30 223.00 L841.89 223.00 L840.48 223.00 L839.07 223.00 L837.66 223.00 L836.25 223.00 L834.85 223.00 L833.44 223.00 L832.03 223.00 L830.62 223.00 L829.21 223.00 L827.80 223.00 L826.39 223.00 L824.98 223.00 L823.57 223.00 L822.16 223.00 L820.75 223.00 L819.34 223.00 L817.93 223.00 L816.52 223.00 L815.11 223.00 L813.70 223.00 L812.29 223.00 L810.88 223.00 L809.47 223.00 L808.07 223.00 L806.66 223.00 L805.25 223.00 L803.84 223.00 L802.43 223.00 L801.02 223.00 L799.61 223.00 L798.20 223.00 L796.79 223.00 L795.38 223.00 L793.97 223.00 L792.56 223.00 L791.15 223.00 L789.74 223.00 L788.33 223.00 L786.92 223.00 L785.51 223.00 L784.10 223.00 L782.69 223.00 L781.29 223.00 L779.88 223.00 L778.47 223.00 L777.06 223.00 L775.65 223.00 L774.24 223.00 L772.83 223.00 L771.42 223.00 L770.01 223.00 L768.60 223.00 L767.19 223.00 L765.78 223.00 L764.37 223.00 L762.96 223.00 L761.55 223.00 L760.14 223.00 L758.73 223.00 L757.32 223.00 L755.91 223.00 L754.51 223.00 L753.10 223.00 L751.69 223.00 L750.28 223.00 L748.87 223.00 L747.46 223.00 L746.05 223.00 L744.64 223.00 L743.23 223.00 L741.82 223.00 L740.41 223.00 L739.00 223.00 L737.59 223.00 L736.18 223.00 L734.77 223.00 L733.36 223.00 L731.95 223.00 L730.54 223.00 L729.13 223.00 L727.73 223.00 L726.32 223.00 L724.91 223.00 L723.50 223.00 L722.09 223.00 L720.68 223.00 L719.27 223.00 L717.86 223.00 L716.45 223.00 L715.04 223.00 L713.63 223.00 L712.22 223.00 L710.81 223.00 L709.40 223.00 L707.99 223.00 L706.58 223.00 L705.17 223.00 L703.76 223.00 L702.35 223.00 L700.95 223.00 L699.54 223.00 L698.13 223.00 L696.72 223.00 L695.31 223.00 L693.90 223.00 L692.49 223.00 L691.08 223.00 L689.67 223.00 L688.26 223.00 L686.85 223.00 L685.44 223.00 L684.03 223.00 L682.62 223.00 L681.21 223.00 L679.80 223.00 L678.39 223.00 L676.98 223.00 L675.57 223.00 L674.17 223.00 L672.76 223.00 L671.35 223.00 L669.94 223.00 L668.53 223.00 L667.12 223.00 L665.71 223.00 L664.30 223.00 L662.89 223.00 L661.48 223.00 L660.07 223.00 L658.66 223.00 L657.25 223.00 L655.84 223.00 L654.43 223.00 L653.02 223.00 L651.61 223.00 L650.20 223.00 L648.79 223.00 L647.39 223.00 L645.98 223.00 L644.57 223.00 L643.16 223.00 L641.75 223.00 L640.34 223.00 L638.93 223.00 L637.52 223.00 L636.11 223.00 L634.70 223.00 L633.29 223.00 L631.88 223.00 L630.47 223.00 L629.06 223.00 L627.65 223.00 L626.24 223.00 L624.83 223.00 L623.42 223.00 L622.01 223.00 L620.61 223.00 L619.20 223.00 L617.79 223.00 L616.38 223.00 L614.97 223.00 L613.56 223.00 L612.15 223.00 L610.74 223.00 L609.33 223.00 L607.92 223.00 L606.51 223.00 L605.10 223.00 L603.69 223.00 L602.28 223.00 L600.87 223.00 L599.46 223.00 L598.05 223.00 L596.64 223.00 L595.23 223.00 L593.83 223.00 L592.42 223.00 L591.01 223.00 L589.60 223.00 L588.19 223.00 L586.78 223.00 L585.37 223.00 L583.96 223.00 L582.55 223.00 L581.14 223.00 L579.73 223.00 L578.32 223.00 L576.91 223.00 L575.50 223.00 L574.09 223.00 L572.68 223.00 L571.27 223.00 L569.86 223.00 L568.45 223.00 L567.05 223.00 L565.64 223.00 L564.23 223.00 L562.82 223.00 L561.41 223.00 L560.00 223.00 L558.59 223.00 L557.18 223.00 L555.77 223.00 L554.36 223.00 L552.95 223.00 L551.54 223.00 L550.13 223.00 L548.72 223.00 L547.31 223.00 L545.90 223.00 L544.49 223.00 L543.08 223.00 L541.67 223.00 L540.27 223.00 L538.86 223.00 L537.45 223.00 L536.04 223.00 L534.63 223.00 L533.22 223.00 L531.81 223.00 L530.40 223.00 L528.99 223.00 L527.58 223.00 L526.17 223.00 L524.76 223.00 L523.35 223.00 L521.94 223.00 L520.53 223.00 L519.12 223.00 L517.71 223.00 L516.30 223.00 L514.89 223.00 L513.49 223.00 L512.08 223.00 L510.67 223.00 L509.26 223.00 L507.85 223.00 L506.44 223.00 L505.03 223.00 L503.62 223.00 L502.21 223.00 L500.80 223.00 L499.39 223.00 L497.98 223.00 L496.57 223.00 L495.16 223.00 L493.75 223.00 L492.34 223.00 L490.93 223.00 L489.52 223.00 L488.11 223.00 L486.71 223.00 L485.30 223.00 L483.89 223.00 L482.48 223.00 L481.07 223.00 L479.66 223.00 L478.25 223.00 L476.84 223.00 L475.43 223.00 L474.02 223.00 L472.61 223.00 L471.20 223.00 L469.79 223.00 L468.38 223.00 L466.97 223.00 L465.56 223.00 L464.15 223.00 L462.74 223.00 L461.33 223.00 L459.93 223.00 L458.52 223.00 L457.11 223.00 L455.70 223.00 L454.29 223.00 L452.88 223.00 L451.47 223.00 L450.06 223.00 L448.65 223.00 L447.24 223.00 L445.83 223.00 L444.42 223.00 L443.01 223.00 L441.60 223.00 L440.19 223.00 L438.78 223.00 L437.37 223.00 L435.96 223.00 L434.55 223.00 L433.15 223.00 L431.74 223.00 L430.33 223.00 L428.92 223.00 L427.51 223.00 L426.10 223.00 L424.69 223.00 L423.28 223.00 L421.87 223.00 L420.46 223.00 L419.05 223.00 L417.64 223.00 L416.23 223.00 L414.82 223.00 L413.41 223.00 L412.00 223.00 L410.59 223.00 L409.18 223.00 L407.77 223.00 L406.37 223.00 L404.96 223.00 L403.55 223.00 L402.14 223.00 L400.73 223.00 L399.32 223.00 L397.91 223.00 L396.50 223.00 L395.09 223.00"/>
<path d="M1409.91 223.00 L1408.50 223.00 L1407.09 223.00 L1405.68 223.00 L1404.27 223.00 L1402.86 223.00 L1401.45 223.00 L1400.04 223.00 L1398.63 223.00 L1397.23 223.00 L1395.82 223.00 L1394.41 223.00 L1393.00 223.00 L1391.59 223.00 L1390.18 223.00 L1388.77 223.00 L1387.36 223.00 L1385.95 223.00 L1384.54 223.00 L1383.13 223.00 L1381.72 223.00 L1380.31 223.00 L1378.90 223.00 L1377.49 223.00 L1376.08 223.00 L1374.67 223.00 L1373.26 223.00 L1371.85 223.00 L1370.45 223.00 L1369.04 223.00 L1367.63 223.00 L1366.22 223.00 L1364.81 223.00 L1363.40 223.00 L1361.99 223.00 L1360.58 223.00 L1359.17 223.00 L1357.76 223.00 L1356.35 223.00 L1354.94 223.00 L1353.53 223.00 L1352.12 223.00 L1350.71 223.00 L1349.30 223.00 L1347.89 223.00 L1346.48 223.00 L1345.07 223.00 L1343.67 223.00 L1342.26 223.00 L1340.85 223.00 L1339.44 223.00 L1338.03 223.00 L1336.62 223.00 L1335.21 223.00 L1333.80 223.00 L1332.39 223.00 L1330.98 223.00 L1329.57 223.00 L1328.16 223.00 L1326.75 223.00 L1325.34 223.00 L1323.93 223.00 L1322.52 223.00 L1321.11 223.00 L1319.70 223.00 L1318.29 223.00 L1316.89 223.00 L1315.48 223.00 L1314.07 223.00 L1312.66 223.00 L1311.25 223.00 L1309.84 223.00 L1308.43 223.00 L1307.02 223.00 L1305.61 223.00 L1304.20 223.00 L1302.79 223.00 L1301.38 223.00 L1299.97 223.00 L1298.56 223.00 L1297.15 223.00 L1295.74 223.00 L1294.33 223.00 L1292.92 223.00 L1291.51 223.00 L1290.11 223.00 L1288.70 223.00 L1287.29 223.00 L1285.88 223.00 L1284.47 223.00 L1283.06 223.00 L1281.65 223.00 L1280.24 223.00 L1278.83 223.00 L1277.42 223.00 L1276.01 223.00 L1274.60 223.00 L1273.19 223.00 L1271.78 223.00 L1270.37 223.00 L1268.96 223.00 L1267.55 223.00 L1266.14 223.00 L1264.73 223.00 L1263.33 223.00 L1261.92 223.00 L1260.51 223.00 L1259.10 223.00 L1257.69 223.00 L1256.28 223.00 L1254.87 223.00 L1253.46 223.00 L1252.05 223.00 L1250.64 223.00 L1249.23 223.00 L1247.82 223.00 L1246.41 223.00 L1245.00 223.00 L1243.59 223.00 L1242.18 223.00 L1240.77 223.00 L1239.36 223.00 L1237.95 223.00 L1236.55 223.00 L1235.14 223.00 L1233.73 223.00 L1232.32 223.00 L1230.91 223.00 L1229.50 223.00 L1228.09 223.00 L1226.68 223.00 L1225.27 223.00 L1223.86 223.00 L1222.45 223.00 L1221.04 223.00 L1219.63 223.00 L1218.22 223.00 L1216.81 223.00 L1215.40 223.00 L1213.99 223.00 L1212.58 223.00 L1211.17 223.00 L1209.77 223.00 L1208.36 223.00 L1206.95 223.00 L1205.54 223.00 L1204.13 223.00 L1202.72 223.00 L1201.31 223.00 L1199.90 223.00 L1198.49 223.00 L1197.08 223.00 L1195.67 223.00 L1194.26 223.00 L1192.85 223.00 L1191.44 223.00 L1190.03 223.00 L1188.62 223.00 L1187.21 223.00 L1185.80 223.00 L1184.39 223.00 L1182.99 223.00 L1181.58 223.00 L1180.17 223.00 L1178.76 223.00 L1177.35 223.00 L1175.94 223.00 L1174.53 223.00 L1173.12 223.00 L1171.71 223.00 L1170.30 223.00 L1168.89 223.00 L1167.48 223.00 L1166.07 223.00 L1164.66 223.00 L1163.25 223.00 L1161.84 223.00 L1160.43 223.00 L1159.02 223.00 L1157.61 223.00 L1156.21 223.00 L1154.80 223.00 L1153.39 223.00 L1151.98 223.00 L1150.57 223.00 L1149.16 223.00 L1147.75 223.00 L1146.34 223.00 L1144.93 223.00 L1143.52 223.00 L1142.11 223.00 L1140.70 223.00 L1139.29 223.00 L1137.88 223.00 L1136.47 223.00 L1135.06 223.00 L1133.65 223.00 L1132.24 223.00 L1130.83 223.00 L1129.43 223.00 L1128.02 223.00 L1126.61 223.00 L1125.20 223.00 L1123.79 223.00 L1122.38 223.00 L1120.97 223.00 L1119.56 223.00 L1118.15 223.00 L1116.74 223.00 L1115.33 223.00 L1113.92 223.00 L1112.51 223.00 L1111.10 223.00 L1109.69 223.00 L1108.28 223.00 L1106.87 223.00 L1105.46 223.00 L1104.05 223.00 L1102.65 223.00 L1101.24 223.00 L1099.83 223.00 L1098.42 223.00 L1097.01 223.00 L1095.60 223.00 L1094.19 223.00 L1092.78 223.00 L1091.37 223.00 L1089.96 223.00 L1088.55 223.00 L1087.14 223.00 L1085.73 223.00 L1084.32 223.00 L1082.91 223.00 L1081.50 223.00 L1080.09 223.00 L1078.68 223.00 L1077.27 223.00 L1075.87 223.00 L1074.46 223.00 L1073.05 223.00 L1071.64 223.00 L1070.23 223.00 L1068.82 223.00 L1067.41 223.00 L1066.00 223.00 L1064.59 223.00 L1063.18 223.00 L1061.77 223.00 L1060.36 223.00 L1058.95 223.00 L1057.54 223.00 L1056.13 223.00 L1054.72 223.00 L1053.31 223.00 L1051.90 223.00 L1050.49 223.00 L1049.09 223.00 L1047.68 223.00 L1046.27 223.00 L1044.86 223.00 L1043.45 223.00 L1042.04 223.00 L1040.63 223.00 L1039.22 223.00 L1037.81 223.00 L1036.40 223.00 L1034.99 223.00 L1033.58 223.00 L1032.17 223.00 L1030.76 223.00 L1029.35 223.00 L1027.94 223.00 L1026.53 223.00 L1025.12 223.00 L1023.71 223.00 L1022.31 223.00 L1020.90 223.00 L1019.49 223.00 L1018.08 223.00 L1016.67 223.00 L1015.26 223.00 L1013.85 223.00 L1012.44 223.00 L1011.03 223.00 L1009.62 223.00 L1008.21 223.00 L1006.80 223.00 L1005.39 223.00 L1003.98 223.00 L1002.57 223.00 L1001.16 223.00 L999.75 223.00 L998.34 223.00 L996.93 223.00 L995.53 223.00 L994.12 223.00 L992.71 223.00 L991.30 223.00 L989.89 223.00 L988.48 223.00 L987.07 223.00 L985.66 223.00 L984.25 223.00 L982.84 223.00 L981.43 223.00 L980.02 223.00 L978.61 223.00 L977.20 223.00 L975.79 223.00 L974.38 223.00 L972.97 223.00 L971.56 223.00 L970.15 223.00 L968.75 223.00 L967.34 223.00 L965.93 223.00 L964.52 223.00 L963.11 223.00 L961.70 223.00 L960.29 223.00 L958.88 223.00 L957.47 223.00 L956.06 223.00 L954.65 223.00 L953.24 223.00 L951.83 223.00 L950.42 223.00 L949.01 223.00 L947.60 223.00 L946.19 223.00 L944.78 223.00 L943.37 223.00 L941.97 223.00 L940.56 223.00 L939.15 223.00 L937.74 223.00 L936.33 223.00 L934.92 223.00 L933.51 223.00 L932.10 223.00 L930.69 223.00 L929.28 223.00 L927.87 223.00 L926.46 223.00 L925.05 223.00 L923.64 223.00 L922.23 223.00 L920.82 223.00 L919.41 223.00 L918.00 223.00 L916.59 223.00 L915.19 223.00 L913.78 223.00 L912.37 223.00 L910.96 223.00 L909.55 223.00 L908.14 223.00 L906.73 223.00 L905.32 223.00 L903.91 223.00 L902.50 223.00"/>
<path d="M901.90 174.00 L901.35 174.00 L900.20 174.00 L899.05 174.00 L897.90 174.00 L896.75 174.00 L895.60 174.00 L894.44 174.00 L893.29 174.00 L892.14 174.00 L890.99 174.00 L889.84 174.00 L888.69 174.00 L887.54 174.00 L886.39 174.00 L885.24 174.00 L884.09 174.00 L882.94 174.00 L881.79 174.00 L880.63 174.00 L879.48 174.00 L878.33 174.00 L877.18 174.00 L876.03 174.00 L874.88 174.00 L873.73 174.00 L872.58 174.00 L871.43 174.00 L870.28 174.00 L869.13 174.00 L867.98 174.00 L866.82 174.00 L865.67 174.00 L864.52 174.00 L863.37 174.00 L862.22 174.00 L861.07 174.00 L859.92 174.00 L858.77 174.00 L857.62 174.00 L856.47 174.00 L855.32 174.00 L854.17 174.00 L853.01 174.00 L851.86 174.00 L850.71 174.00 L849.56 174.00 L848.41 174.00 L847.26 174.00 L846.11 174.00 L844.96 174.00 L843.81 174.00 L842.66 174.00 L841.51 174.00 L840.36 174.00 L839.20 174.00 L838.05 174.00 L836.90 174.00 L835.75 174.00 L834.60 174.00 L833.45 174.00 L832.30 174.00 L831.15 174.00 L830.00 174.00 L828.85 174.00 L827.70 174.00 L826.55 174.00 L825.39 174.00 L824.24 174.00 L823.09 174.00 L821.94 174.00 L820.79 174.00 L819.64 174.00 L818.49 174.00 L817.34 174.00 L816.19 174.00 L815.04 174.00 L813.89 174.00 L812.74 174.00 L811.58 174.00 L810.43 174.00 L809.28 174.00 L808.13 174.00 L806.98 174.00 L805.83 174.00 L804.68 174.00 L803.53 174.00 L802.38 174.00 L801.23 174.00 L800.08 174.00 L798.93 174.00 L797.77 174.00 L796.62 174.00 L795.47 174.00 L794.32 174.00 L793.17 174.00 L792.02 174.00 L790.87 174.00 L789.72 174.00 L788.57 174.00 L787.42 174.00 L786.27 174.00 L785.12 174.00 L783.96 174.00 L782.81 174.00 L781.66 174.00 L780.51 174.00 L779.36 174.00 L778.21 174.00 L777.06 174.00 L775.91 174.00 L774.76 174.00 L773.61 174.00 L772.46 174.00 L771.31 174.00 L770.15 174.00 L769.00 174.00 L767.85 174.00 L766.70 174.00 L765.55 174.00 L764.40 174.00 L763.25 174.00 L762.10 174.00 L760.95 174.00 L759.80 174.00 L758.65 174.00 L757.50 174.00 L756.34 174.00 L755.19 174.00 L754.04 174.00 L752.89 174.00 L751.74 174.00 L750.59 174.00 L749.44 174.00 L748.29 174.00 L747.14 174.00 L745.99 174.00 L744.84 174.00 L743.69 174.00 L742.53 174.00 L741.38 174.00 L740.23 174.00 L739.08 174.00 L737.93 174.00 L736.78 174.00 L735.63 174.00 L734.48 174.00 L733.33 174.00 L732.18 174.00 L731.03 174.00 L729.88 174.00 L728.72 174.00 L727.57 174.00 L726.42 174.00 L725.27 174.00 L724.12 174.00 L722.97 174.00 L721.82 174.00 L720.67 174.00 L719.52 174.00 L718.37 174.00 L717.22 174.00 L716.07 174.00 L714.91 174.00 L713.76 174.00 L712.61 174.00 L711.46 174.00 L710.31 174.00 L709.16 174.00 L708.01 174.00 L706.86 174.00 L705.71 174.00 L704.56 174.00 L703.41 174.00 L702.26 174.00 L701.10 174.00 L699.95 174.00 L698.80 174.00 L697.65 174.00 L696.50 174.00 L695.35 174.00 L694.20 174.00 L693.05 174.00 L691.90 174.00 L690.75 174.00 L689.60 174.00 L688.45 174.00 L687.29 174.00 L686.14 174.00 L684.99 174.00 L683.84 174.00 L682.69 174.00 L681.54 174.00 L680.39 174.00 L679.24 174.00 L678.09 174.00 L676.94 174.00 L675.79 174.00 L674.64 174.00 L673.48 174.00 L672.33 174.00 L671.18 174.00 L670.03 174.00 L668.88 174.00 L667.73 174.00 L666.58 174.00 L665.43 174.00 L664.28 174.00 L663.13 174.00 L661.98 174.00 L660.83 174.00 L659.67 174.00 L658.52 174.00 L657.37 174.00 L656.22 174.00 L655.07 174.00 L653.92 174.00 L652.77 174.00 L651.62 174.00 L650.47 174.00 L649.32 174.00 L648.17 174.00 L647.02 174.00 L645.86 174.00 L644.71 174.00 L643.56 174.00 L642.41 174.00 L641.26 174.00 L640.11 174.00 L638.96 174.00 L637.81 174.00 L636.66 174.00 L635.51 174.00 L634.36 174.00 L633.21 174.00 L632.05 174.00 L630.90 174.00 L629.75 174.00 L628.60 174.00 L627.45 174.00 L626.30 174.00 L625.15 174.00 L624.00 174.00 L622.85 174.00 L621.70 174.00 L620.55 174.00 L619.40 174.00 L618.24 174.00 L617.09 174.00 L615.94 174.00 L614.79 174.00 L613.64 174.00 L612.49 174.00 L611.34 174.00 L610.19 174.00 L609.04 174.00 L607.89 174.00 L606.74 174.00 L605.59 174.00 L604.44 174.00 L603.28 174.00 L602.13 174.00 L600.98 174.00 L599.83 174.00 L598.68 174.00 L597.53 174.00 L596.38 174.00 L595.23 174.00 L594.08 174.00 L592.93 174.00 L591.78 174.00 L590.63 174.00 L589.47 174.00 L588.32 174.00 L587.17 174.00 L586.02 174.00 L584.87 174.00 L583.72 174.00 L582.57 174.00 L581.42 174.00 L580.27 174.00 L579.12 174.00 L577.97 174.00 L576.82 174.00 L575.66 174.00 L574.51 174.00 L573.36 174.00 L572.21 174.00 L571.06 174.00 L569.91 174.00 L568.76 174.00 L567.61 174.00 L566.46 174.00 L565.31 174.00 L564.16 174.00 L563.01 174.00 L561.85 174.00 L560.70 174.00 L559.55 174.00 L558.40 174.00 L557.25 174.00 L556.10 174.00 L554.95 174.00 L553.80 174.00 L552.65 174.00 L551.50 174.00 L550.35 174.00 L549.20 174.00 L548.04 174.00 L546.89 174.00 L545.74 174.00 L544.59 174.00 L543.44 174.00 L542.29 174.00 L541.14 174.00 L539.99 174.00 L538.84 174.00 L537.69 174.00 L536.54 174.00 L535.39 174.00 L534.23 174.00 L533.08 174.00 L531.93 174.00 L530.78 174.00 L529.63 174.00 L528.48 174.00 L527.33 174.00 L526.18 174.00 L525.03 174.00 L523.88 174.00 L522.73 174.00 L521.58 174.00 L520.42 174.00 L519.27 174.00 L518.12 174.00 L516.97 174.00 L515.82 174.00 L514.67 174.00 L513.52 174.00 L512.37 174.00 L511.22 174.00 L510.07 174.00 L508.92 174.00 L507.77 174.00 L506.61 174.00 L505.46 174.00 L504.31 174.00 L503.16 174.00 L502.01 174.00 L500.86 174.00 L499.71 174.00 L498.56 174.00 L497.41 174.00 L496.26 174.00 L495.11 174.00 L493.96 174.00 L492.80 174.00 L491.65 174.00 L490.50 174.00 L489.35 174.00 L488.20 174.00"/>
<path d="M1316.80 174.00 L1315.65 174.00 L1314.50 174.00 L1313.35 174.00 L1312.20 174.00 L1311.04 174.00 L1309.89 174.00 L1308.74 174.00 L1307.59 174.00 L1306.44 174.00 L1305.29 174.00 L1304.14 174.00 L1302.99 174.00 L1301.84 174.00 L1300.69 174.00 L1299.54 174.00 L1298.39 174.00 L1297.23 174.00 L1296.08 174.00 L1294.93 174.00 L1293.78 174.00 L1292.63 174.00 L1291.48 174.00 L1290.33 174.00 L1289.18 174.00 L1288.03 174.00 L1286.88 174.00 L1285.73 174.00 L1284.58 174.00 L1283.42 174.00 L1282.27 174.00 L1281.12 174.00 L1279.97 174.00 L1278.82 174.00 L1277.67 174.00 L1276.52 174.00 L1275.37 174.00 L1274.22 174.00 L1273.07 174.00 L1271.92 174.00 L1270.77 174.00 L1269.61 174.00 L1268.46 174.00 L1267.31 174.00 L1266.16 174.00 L1265.01 174.00 L1263.86 174.00 L1262.71 174.00 L1261.56 174.00 L1260.41 174.00 L1259.26 174.00 L1258.11 174.00 L1256.96 174.00 L1255.80 174.00 L1254.65 174.00 L1253.50 174.00 L1252.35 174.00 L1251.20 174.00 L1250.05 174.00 L1248.90 174.00 L1247.75 174.00 L1246.60 174.00 L1245.45 174.00 L1244.30 174.00 L1243.15 174.00 L1241.99 174.00 L1240.84 174.00 L1239.69 174.00 L1238.54 174.00 L1237.39 174.00 L1236.24 174.00 L1235.09 174.00 L1233.94 174.00 L1232.79 174.00 L1231.64 174.00 L1230.49 174.00 L1229.34 174.00 L1228.18 174.00 L1227.03 174.00 L1225.88 174.00 L1224.73 174.00 L1223.58 174.00 L1222.43 174.00 L1221.28 174.00 L1220.13 174.00 L1218.98 174.00 L1217.83 174.00 L1216.68 174.00 L1215.53 174.00 L1214.37 174.00 L1213.22 174.00 L1212.07 174.00 L1210.92 174.00 L1209.77 174.00 L1208.62 174.00 L1207.47 174.00 L1206.32 174.00 L1205.17 174.00 L1204.02 174.00 L1202.87 174.00 L1201.72 174.00 L1200.56 174.00 L1199.41 174.00 L1198.26 174.00 L1197.11 174.00 L1195.96 174.00 L1194.81 174.00 L1193.66 174.00 L1192.51 174.00 L1191.36 174.00 L1190.21 174.00 L1189.06 174.00 L1187.91 174.00 L1186.76 174.00 L1185.60 174.00 L1184.45 174.00 L1183.30 174.00 L1182.15 174.00 L1181.00 174.00 L1179.85 174.00 L1178.70 174.00 L1177.55 174.00 L1176.40 174.00 L1175.25 174.00 L1174.10 174.00 L1172.95 174.00 L1171.79 174.00 L1170.64 174.00 L1169.49 174.00 L1168.34 174.00 L1167.19 174.00 L1166.04 174.00 L1164.89 174.00 L1163.74 174.00 L1162.59 174.00 L1161.44 174.00 L1160.29 174.00 L1159.14 174.00 L1157.98 174.00 L1156.83 174.00 L1155.68 174.00 L1154.53 174.00 L1153.38 174.00 L1152.23 174.00 L1151.08 174.00 L1149.93 174.00 L1148.78 174.00 L1147.63 174.00 L1146.48 174.00 L1145.33 174.00 L1144.17 174.00 L1143.02 174.00 L1141.87 174.00 L1140.72 174.00 L1139.57 174.00 L1138.42 174.00 L1137.27 174.00 L1136.12 174.00 L1134.97 174.00 L1133.82 174.00 L1132.67 174.00 L1131.52 174.00 L1130.36 174.00 L1129.21 174.00 L1128.06 174.00 L1126.91 174.00 L1125.76 174.00 L1124.61 174.00 L1123.46 174.00 L1122.31 174.00 L1121.16 174.00 L1120.01 174.00 L1118.86 174.00 L1117.71 174.00 L1116.55 174.00 L1115.40 174.00 L1114.25 174.00 L1113.10 174.00 L1111.95 174.00 L1110.80 174.00 L1109.65 174.00 L1108.50 174.00 L1107.35 174.00 L1106.20 174.00 L1105.05 174.00 L1103.90 174.00 L1102.74 174.00 L1101.59 174.00 L1100.44 174.00 L1099.29 174.00 L1098.14 174.00 L1096.99 174.00 L1095.84 174.00 L1094.69 174.00 L1093.54 174.00 L1092.39 174.00 L1091.24 174.00 L1090.09 174.00 L1088.93 174.00 L1087.78 174.00 L1086.63 174.00 L1085.48 174.00 L1084.33 174.00 L1083.18 174.00 L1082.03 174.00 L1080.88 174.00 L1079.73 174.00 L1078.58 174.00 L1077.43 174.00 L1076.28 174.00 L1075.12 174.00 L1073.97 174.00 L1072.82 174.00 L1071.67 174.00 L1070.52 174.00 L1069.37 174.00 L1068.22 174.00 L1067.07 174.00 L1065.92 174.00 L1064.77 174.00 L1063.62 174.00 L1062.47 174.00 L1061.31 174.00 L1060.16 174.00 L1059.01 174.00 L1057.86 174.00 L1056.71 174.00 L1055.56 174.00 L1054.41 174.00 L1053.26 174.00 L1052.11 174.00 L1050.96 174.00 L1049.81 174.00 L1048.66 174.00 L1047.50 174.00 L1046.35 174.00 L1045.20 174.00 L1044.05 174.00 L1042.90 174.00 L1041.75 174.00 L1040.60 174.00 L1039.45 174.00 L1038.30 174.00 L1037.15 174.00 L1036.00 174.00 L1034.85 174.00 L1033.69 174.00 L1032.54 174.00 L1031.39 174.00 L1030.24 174.00 L1029.09 174.00 L1027.94 174.00 L1026.79 174.00 L1025.64 174.00 L1024.49 174.00 L1023.34 174.00 L1022.19 174.00 L1021.04 174.00 L1019.88 174.00 L1018.73 174.00 L1017.58 174.00 L1016.43 174.00 L1015.28 174.00 L1014.13 174.00 L1012.98 174.00 L1011.83 174.00 L1010.68 174.00 L1009.53 174.00 L1008.38 174.00 L1007.23 174.00 L1006.07 174.00 L1004.92 174.00 L1003.77 174.00 L1002.62 174.00 L1001.47 174.00 L1000.32 174.00 L999.17 174.00 L998.02 174.00 L996.87 174.00 L995.72 174.00 L994.57 174.00 L993.42 174.00 L992.26 174.00 L991.11 174.00 L989.96 174.00 L988.81 174.00 L987.66 174.00 L986.51 174.00 L985.36 174.00 L984.21 174.00 L983.06 174.00 L981.91 174.00 L980.76 174.00 L979.61 174.00 L978.45 174.00 L977.30 174.00 L976.15 174.00 L975.00 174.00 L973.85 174.00 L972.70 174.00 L971.55 174.00 L970.40 174.00 L969.25 174.00 L968.10 174.00 L966.95 174.00 L965.80 174.00 L964.64 174.00 L963.49 174.00 L962.34 174.00 L961.19 174.00 L960.04 174.00 L958.89 174.00 L957.74 174.00 L956.59 174.00 L955.44 174.00 L954.29 174.00 L953.14 174.00 L951.99 174.00 L950.83 174.00 L949.68 174.00 L948.53 174.00 L947.38 174.00 L946.23 174.00 L945.08 174.00 L943.93 174.00 L942.78 174.00 L941.63 174.00 L940.48 174.00 L939.33 174.00 L938.18 174.00 L937.02 174.00 L935.87 174.00 L934.72 174.00 L933.57 174.00 L932.42 174.00 L931.27 174.00 L930.12 174.00 L928.97 174.00 L927.82 174.00 L926.67 174.00 L925.52 174.00 L924.37 174.00 L923.21 174.00 L922.06 174.00 L920.91 174.00 L919.76 174.00 L918.61 174.00 L917.46 174.00 L916.31 174.00 L915.16 174.00 L914.01 174.00 L912.86 174.00 L911.71 174.00 L910.56 174.00 L909.40 174.00 L908.25 174.00 L907.10 174.00 L905.95 174.00 L904.80 174.00 L903.65 174.00 L902.50 174.00"/>
<path d="M901.90 125.00 L901.69 125.00 L900.87 125.00 L900.06 125.00 L899.24 125.00 L898.43 125.00 L897.62 125.00 L896.80 125.00 L895.99 125.00 L895.18 125.00 L894.36 125.00 L893.55 125.00 L892.73 125.00 L891.92 125.00 L891.11 125.00 L890.29 125.00 L889.48 125.00 L888.67 125.00 L887.85 125.00 L887.04 125.00 L886.22 125.00 L885.41 125.00 L884.60 125.00 L883.78 125.00 L882.97 125.00 L882.16 125.00 L881.34 125.00 L880.53 125.00 L879.71 125.00 L878.90 125.00 L878.09 125.00 L877.27 125.00 L876.46 125.00 L875.65 125.00 L874.83 125.00 L874.02 125.00 L873.20 125.00 L872.39 125.00 L871.58 125.00 L870.76 125.00 L869.95 125.00 L869.14 125.00 L868.32 125.00 L867.51 125.00 L866.69 125.00 L865.88 125.00 L865.07 125.00 L864.25 125.00 L863.44 125.00 L862.63 125.00 L861.81 125.00 L861.00 125.00 L860.18 125.00 L859.37 125.00 L858.56 125.00 L857.74 125.00 L856.93 125.00 L856.12 125.00 L855.30 125.00 L854.49 125.00 L853.67 125.00 L852.86 125.00 L852.05 125.00 L851.23 125.00 L850.42 125.00 L849.61 125.00 L848.79 125.00 L847.98 125.00 L847.16 125.00 L846.35 125.00 L845.54 125.00 L844.72 125.00 L843.91 125.00 L843.10 125.00 L842.28 125.00 L841.47 125.00 L840.65 125.00 L839.84 125.00 L839.03 125.00 L838.21 125.00 L837.40 125.00 L836.59 125.00 L835.77 125.00 L834.96 125.00 L834.14 125.00 L833.33 125.00 L832.52 125.00 L831.70 125.00 L830.89 125.00 L830.08 125.00 L829.26 125.00 L828.45 125.00 L827.63 125.00 L826.82 125.00 L826.01 125.00 L825.19 125.00 L824.38 125.00 L823.57 125.00 L822.75 125.00 L821.94 125.00 L821.12 125.00 L820.31 125.00 L819.50 125.00 L818.68 125.00 L817.87 125.00 L817.06 125.00 L816.24 125.00 L815.43 125.00 L814.61 125.00 L813.80 125.00 L812.99 125.00 L812.17 125.00 L811.36 125.00 L810.55 125.00 L809.73 125.00 L808.92 125.00 L808.10 125.00 L807.29 125.00 L806.48 125.00 L805.66 125.00 L804.85 125.00 L804.04 125.00 L803.22 125.00 L802.41 125.00 L801.59 125.00 L800.78 125.00 L799.97 125.00 L799.15 125.00 L798.34 125.00 L797.52 125.00 L796.71 125.00 L795.90 125.00 L795.08 125.00 L794.27 125.00 L793.46 125.00 L792.64 125.00 L791.83 125.00 L791.01 125.00 L790.20 125.00 L789.39 125.00 L788.57 125.00 L787.76 125.00 L786.95 125.00 L786.13 125.00 L785.32 125.00 L784.50 125.00 L783.69 125.00 L782.88 125.00 L782.06 125.00 L781.25 125.00 L780.44 125.00 L779.62 125.00 L778.81 125.00 L777.99 125.00 L777.18 125.00 L776.37 125.00 L775.55 125.00 L774.74 125.00 L773.93 125.00 L773.11 125.00 L772.30 125.00 L771.48 125.00 L770.67 125.00 L769.86 125.00 L769.04 125.00 L768.23 125.00 L767.42 125.00 L766.60 125.00 L765.79 125.00 L764.97 125.00 L764.16 125.00 L763.35 125.00 L762.53 125.00 L761.72 125.00 L760.91 125.00 L760.09 125.00 L759.28 125.00 L758.46 125.00 L757.65 125.00 L756.84 125.00 L756.02 125.00 L755.21 125.00 L754.40 125.00 L753.58 125.00 L752.77 125.00 L751.95 125.00 L751.14 125.00 L750.33 125.00 L749.51 125.00 L748.70 125.00 L747.89 125.00 L747.07 125.00 L746.26 125.00 L745.44 125.00 L744.63 125.00 L743.82 125.00 L743.00 125.00 L742.19 125.00 L741.38 125.00 L740.56 125.00 L739.75 125.00 L738.93 125.00 L738.12 125.00 L737.31 125.00 L736.49 125.00 L735.68 125.00 L734.87 125.00 L734.05 125.00 L733.24 125.00 L732.42 125.00 L731.61 125.00 L730.80 125.00 L729.98 125.00 L729.17 125.00 L728.36 125.00 L727.54 125.00 L726.73 125.00 L725.91 125.00 L725.10 125.00 L724.29 125.00 L723.47 125.00 L722.66 125.00 L721.85 125.00 L721.03 125.00 L720.22 125.00 L719.40 125.00 L718.59 125.00 L717.78 125.00 L716.96 125.00 L716.15 125.00 L715.34 125.00 L714.52 125.00 L713.71 125.00 L712.89 125.00 L712.08 125.00 L711.27 125.00 L710.45 125.00 L709.64 125.00 L708.83 125.00 L708.01 125.00 L707.20 125.00 L706.38 125.00 L705.57 125.00 L704.76 125.00 L703.94 125.00 L703.13 125.00 L702.32 125.00 L701.50 125.00 L700.69 125.00 L699.87 125.00 L699.06 125.00 L698.25 125.00 L697.43 125.00 L696.62 125.00 L695.81 125.00 L694.99 125.00 L694.18 125.00 L693.36 125.00 L692.55 125.00 L691.74 125.00 L690.92 125.00 L690.11 125.00 L689.29 125.00 L688.48 125.00 L687.67 125.00 L686.85 125.00 L686.04 125.00 L685.23 125.00 L684.41 125.00 L683.60 125.00 L682.78 125.00 L681.97 125.00 L681.16 125.00 L680.34 125.00 L679.53 125.00 L678.72 125.00 L677.90 125.00 L677.09 125.00 L676.27 125.00 L675.46 125.00 L674.65 125.00 L673.83 125.00 L673.02 125.00 L672.21 125.00 L671.39 125.00 L670.58 125.00 L669.76 125.00 L668.95 125.00 L668.14 125.00 L667.32 125.00 L666.51 125.00 L665.70 125.00 L664.88 125.00 L664.07 125.00 L663.25 125.00 L662.44 125.00 L661.63 125.00 L660.81 125.00 L660.00 125.00 L659.19 125.00 L658.37 125.00 L657.56 125.00 L656.74 125.00 L655.93 125.00 L655.12 125.00 L654.30 125.00 L653.49 125.00 L652.68 125.00 L651.86 125.00 L651.05 125.00 L650.23 125.00 L649.42 125.00 L648.61 125.00 L647.79 125.00 L646.98 125.00 L646.17 125.00 L645.35 125.00 L644.54 125.00 L643.72 125.00 L642.91 125.00 L642.10 125.00 L641.28 125.00 L640.47 125.00 L639.66 125.00 L638.84 125.00 L638.03 125.00 L637.21 125.00 L636.40 125.00 L635.59 125.00 L634.77 125.00 L633.96 125.00 L633.15 125.00 L632.33 125.00 L631.52 125.00 L630.70 125.00 L629.89 125.00 L629.08 125.00 L628.26 125.00 L627.45 125.00 L626.64 125.00 L625.82 125.00 L625.01 125.00 L624.19 125.00 L623.38 125.00 L622.57 125.00 L621.75 125.00 L620.94 125.00 L620.13 125.00 L619.31 125.00 L618.50 125.00 L617.68 125.00 L616.87 125.00 L616.06 125.00 L615.24 125.00 L614.43 125.00 L613.62 125.00 L612.80 125.00 L611.99 125.00 L611.17 125.00 L610.36 125.00 L609.55 125.00"/>
<path d="M1195.45 125.00 L1194.64 125.00 L1193.83 125.00 L1193.01 125.00 L1192.20 125.00 L1191.38 125.00 L1190.57 125.00 L1189.76 125.00 L1188.94 125.00 L1188.13 125.00 L1187.32 125.00 L1186.50 125.00 L1185.69 125.00 L1184.87 125.00 L1184.06 125.00 L1183.25 125.00 L1182.43 125.00 L1181.62 125.00 L1180.81 125.00 L1179.99 125.00 L1179.18 125.00 L1178.36 125.00 L1177.55 125.00 L1176.74 125.00 L1175.92 125.00 L1175.11 125.00 L1174.30 125.00 L1173.48 125.00 L1172.67 125.00 L1171.85 125.00 L1171.04 125.00 L1170.23 125.00 L1169.41 125.00 L1168.60 125.00 L1167.79 125.00 L1166.97 125.00 L1166.16 125.00 L1165.34 125.00 L1164.53 125.00 L1163.72 125.00 L1162.90 125.00 L1162.09 125.00 L1161.28 125.00 L1160.46 125.00 L1159.65 125.00 L1158.83 125.00 L1158.02 125.00 L1157.21 125.00 L1156.39 125.00 L1155.58 125.00 L1154.77 125.00 L1153.95 125.00 L1153.14 125.00 L1152.32 125.00 L1151.51 125.00 L1150.70 125.00 L1149.88 125.00 L1149.07 125.00 L1148.26 125.00 L1147.44 125.00 L1146.63 125.00 L1145.81 125.00 L1145.00 125.00 L1144.19 125.00 L1143.37 125.00 L1142.56 125.00 L1141.75 125.00 L1140.93 125.00 L1140.12 125.00 L1139.30 125.00 L1138.49 125.00 L1137.68 125.00 L1136.86 125.00 L1136.05 125.00 L1135.24 125.00 L1134.42 125.00 L1133.61 125.00 L1132.79 125.00 L1131.98 125.00 L1131.17 125.00 L1130.35 125.00 L1129.54 125.00 L1128.73 125.00 L1127.91 125.00 L1127.10 125.00 L1126.28 125.00 L1125.47 125.00 L1124.66 125.00 L1123.84 125.00 L1123.03 125.00 L1122.22 125.00 L1121.40 125.00 L1120.59 125.00 L1119.77 125.00 L1118.96 125.00 L1118.15 125.00 L1117.33 125.00 L1116.52 125.00 L1115.71 125.00 L1114.89 125.00 L1114.08 125.00 L1113.26 125.00 L1112.45 125.00 L1111.64 125.00 L1110.82 125.00 L1110.01 125.00 L1109.19 125.00 L1108.38 125.00 L1107.57 125.00 L1106.75 125.00 L1105.94 125.00 L1105.13 125.00 L1104.31 125.00 L1103.50 125.00 L1102.68 125.00 L1101.87 125.00 L1101.06 125.00 L1100.24 125.00 L1099.43 125.00 L1098.62 125.00 L1097.80 125.00 L1096.99 125.00 L1096.17 125.00 L1095.36 125.00 L1094.55 125.00 L1093.73 125.00 L1092.92 125.00 L1092.11 125.00 L1091.29 125.00 L1090.48 125.00 L1089.66 125.00 L1088.85 125.00 L1088.04 125.00 L1087.22 125.00 L1086.41 125.00 L1085.60 125.00 L1084.78 125.00 L1083.97 125.00 L1083.15 125.00 L1082.34 125.00 L1081.53 125.00 L1080.71 125.00 L1079.90 125.00 L1079.09 125.00 L1078.27 125.00 L1077.46 125.00 L1076.64 125.00 L1075.83 125.00 L1075.02 125.00 L1074.20 125.00 L1073.39 125.00 L1072.58 125.00 L1071.76 125.00 L1070.95 125.00 L1070.13 125.00 L1069.32 125.00 L1068.51 125.00 L1067.69 125.00 L1066.88 125.00 L1066.07 125.00 L1065.25 125.00 L1064.44 125.00 L1063.62 125.00 L1062.81 125.00 L1062.00 125.00 L1061.18 125.00 L1060.37 125.00 L1059.56 125.00 L1058.74 125.00 L1057.93 125.00 L1057.11 125.00 L1056.30 125.00 L1055.49 125.00 L1054.67 125.00 L1053.86 125.00 L1053.05 125.00 L1052.23 125.00 L1051.42 125.00 L1050.60 125.00 L1049.79 125.00 L1048.98 125.00 L1048.16 125.00 L1047.35 125.00 L1046.54 125.00 L1045.72 125.00 L1044.91 125.00 L1044.09 125.00 L1043.28 125.00 L1042.47 125.00 L1041.65 125.00 L1040.84 125.00 L1040.03 125.00 L1039.21 125.00 L1038.40 125.00 L1037.58 125.00 L1036.77 125.00 L1035.96 125.00 L1035.14 125.00 L1034.33 125.00 L1033.52 125.00 L1032.70 125.00 L1031.89 125.00 L1031.07 125.00 L1030.26 125.00 L1029.45 125.00 L1028.63 125.00 L1027.82 125.00 L1027.01 125.00 L1026.19 125.00 L1025.38 125.00 L1024.56 125.00 L1023.75 125.00 L1022.94 125.00 L1022.12 125.00 L1021.31 125.00 L1020.50 125.00 L1019.68 125.00 L1018.87 125.00 L1018.05 125.00 L1017.24 125.00 L1016.43 125.00 L1015.61 125.00 L1014.80 125.00 L1013.99 125.00 L1013.17 125.00 L1012.36 125.00 L1011.54 125.00 L1010.73 125.00 L1009.92 125.00 L1009.10 125.00 L1008.29 125.00 L1007.48 125.00 L1006.66 125.00 L1005.85 125.00 L1005.03 125.00 L1004.22 125.00 L1003.41 125.00 L1002.59 125.00 L1001.78 125.00 L1000.96 125.00 L1000.15 125.00 L999.34 125.00 L998.52 125.00 L997.71 125.00 L996.90 125.00 L996.08 125.00 L995.27 125.00 L994.45 125.00 L993.64 125.00 L992.83 125.00 L992.01 125.00 L991.20 125.00 L990.39 125.00 L989.57 125.00 L988.76 125.00 L987.94 125.00 L987.13 125.00 L986.32 125.00 L985.50 125.00 L984.69 125.00 L983.88 125.00 L983.06 125.00 L982.25 125.00 L981.43 125.00 L980.62 125.00 L979.81 125.00 L978.99 125.00 L978.18 125.00 L977.37 125.00 L976.55 125.00 L975.74 125.00 L974.92 125.00 L974.11 125.00 L973.30 125.00 L972.48 125.00 L971.67 125.00 L970.86 125.00 L970.04 125.00 L969.23 125.00 L968.41 125.00 L967.60 125.00 L966.79 125.00 L965.97 125.00 L965.16 125.00 L964.35 125.00 L963.53 125.00 L962.72 125.00 L961.90 125.00 L961.09 125.00 L960.28 125.00 L959.46 125.00 L958.65 125.00 L957.84 125.00 L957.02 125.00 L956.21 125.00 L955.39 125.00 L954.58 125.00 L953.77 125.00 L952.95 125.00 L952.14 125.00 L951.33 125.00 L950.51 125.00 L949.70 125.00 L948.88 125.00 L948.07 125.00 L947.26 125.00 L946.44 125.00 L945.63 125.00 L944.82 125.00 L944.00 125.00 L943.19 125.00 L942.37 125.00 L941.56 125.00 L940.75 125.00 L939.93 125.00 L939.12 125.00 L938.31 125.00 L937.49 125.00 L936.68 125.00 L935.86 125.00 L935.05 125.00 L934.24 125.00 L933.42 125.00 L932.61 125.00 L931.80 125.00 L930.98 125.00 L930.17 125.00 L929.35 125.00 L928.54 125.00 L927.73 125.00 L926.91 125.00 L926.10 125.00 L925.29 125.00 L924.47 125.00 L923.66 125.00 L922.84 125.00 L922.03 125.00 L921.22 125.00 L920.40 125.00 L919.59 125.00 L918.78 125.00 L917.96 125.00 L917.15 125.00 L916.33 125.00 L915.52 125.00 L914.71 125.00 L913.89 125.00 L913.08 125.00 L912.27 125.00 L911.45 125.00 L910.64 125.00 L909.82 125.00 L909.01 125.00 L908.20 125.00 L907.38 125.00 L906.57 125.00 L905.76 125.00 L904.94 125.00 L904.13 125.00 L903.31 125.00 L902.50 125.00"/>
<path d="M901.90 76.00 L902.08 76.00 L901.66 76.00 L901.24 76.00 L900.82 76.00 L900.39 76.00 L899.97 76.00 L899.55 76.00 L899.13 76.00 L898.71 76.00 L898.29 76.00 L897.87 76.00 L897.45 76.00 L897.02 76.00 L896.60 76.00 L896.18 76.00 L895.76 76.00 L895.34 76.00 L894.92 76.00 L894.50 76.00 L894.08 76.00 L893.65 76.00 L893.23 76.00 L892.81 76.00 L892.39 76.00 L891.97 76.00 L891.55 76.00 L891.13 76.00 L890.71 76.00 L890.28 76.00 L889.86 76.00 L889.44 76.00 L889.02 76.00 L888.60 76.00 L888.18 76.00 L887.76 76.00 L887.34 76.00 L886.91 76.00 L886.49 76.00 L886.07 76.00 L885.65 76.00 L885.23 76.00 L884.81 76.00 L884.39 76.00 L883.97 76.00 L883.54 76.00 L883.12 76.00 L882.70 76.00 L882.28 76.00 L881.86 76.00 L881.44 76.00 L881.02 76.00 L880.60 76.00 L880.17 76.00 L879.75 76.00 L879.33 76.00 L878.91 76.00 L878.49 76.00 L878.07 76.00 L877.65 76.00 L877.23 76.00 L876.80 76.00 L876.38 76.00 L875.96 76.00 L875.54 76.00 L875.12 76.00 L874.70 76.00 L874.28 76.00 L873.86 76.00 L873.43 76.00 L873.01 76.00 L872.59 76.00 L872.17 76.00 L871.75 76.00 L871.33 76.00 L870.91 76.00 L870.49 76.00 L870.07 76.00 L869.64 76.00 L869.22 76.00 L868.80 76.00 L868.38 76.00 L867.96 76.00 L867.54 76.00 L867.12 76.00 L866.70 76.00 L866.27 76.00 L865.85 76.00 L865.43 76.00 L865.01 76.00 L864.59 76.00 L864.17 76.00 L863.75 76.00 L863.33 76.00 L862.90 76.00 L862.48 76.00 L862.06 76.00 L861.64 76.00 L861.22 76.00 L860.80 76.00 L860.38 76.00 L859.96 76.00 L859.53 76.00 L859.11 76.00 L858.69 76.00 L858.27 76.00 L857.85 76.00 L857.43 76.00 L857.01 76.00 L856.59 76.00 L856.16 76.00 L855.74 76.00 L855.32 76.00 L854.90 76.00 L854.48 76.00 L854.06 76.00 L853.64 76.00 L853.22 76.00 L852.79 76.00 L852.37 76.00 L851.95 76.00 L851.53 76.00 L851.11 76.00 L850.69 76.00 L850.27 76.00 L849.85 76.00 L849.42 76.00 L849.00 76.00 L848.58 76.00 L848.16 76.00 L847.74 76.00 L847.32 76.00 L846.90 76.00 L846.48 76.00 L846.05 76.00 L845.63 76.00 L845.21 76.00 L844.79 76.00 L844.37 76.00 L843.95 76.00 L843.53 76.00 L843.11 76.00 L842.68 76.00 L842.26 76.00 L841.84 76.00 L841.42 76.00 L841.00 76.00 L840.58 76.00 L840.16 76.00 L839.74 76.00 L839.32 76.00 L838.89 76.00 L838.47 76.00 L838.05 76.00 L837.63 76.00 L837.21 76.00 L836.79 76.00 L836.37 76.00 L835.95 76.00 L835.52 76.00 L835.10 76.00 L834.68 76.00 L834.26 76.00 L833.84 76.00 L833.42 76.00 L833.00 76.00 L832.58 76.00 L832.15 76.00 L831.73 76.00 L831.31 76.00 L830.89 76.00 L830.47 76.00 L830.05 76.00 L829.63 76.00 L829.21 76.00 L828.78 76.00 L828.36 76.00 L827.94 76.00 L827.52 76.00 L827.10 76.00 L826.68 76.00 L826.26 76.00 L825.84 76.00 L825.41 76.00 L824.99 76.00 L824.57 76.00 L824.15 76.00 L823.73 76.00 L823.31 76.00 L822.89 76.00 L822.47 76.00 L822.04 76.00 L821.62 76.00 L821.20 76.00 L820.78 76.00 L820.36 76.00 L819.94 76.00 L819.52 76.00 L819.10 76.00 L818.67 76.00 L818.25 76.00 L817.83 76.00 L817.41 76.00 L816.99 76.00 L816.57 76.00 L816.15 76.00 L815.73 76.00 L815.30 76.00 L814.88 76.00 L814.46 76.00 L814.04 76.00 L813.62 76.00 L813.20 76.00 L812.78 76.00 L812.36 76.00 L811.93 76.00 L811.51 76.00 L811.09 76.00 L810.67 76.00 L810.25 76.00 L809.83 76.00 L809.41 76.00 L808.99 76.00 L808.57 76.00 L808.14 76.00 L807.72 76.00 L807.30 76.00 L806.88 76.00 L806.46 76.00 L806.04 76.00 L805.62 76.00 L805.20 76.00 L804.77 76.00 L804.35 76.00 L803.93 76.00 L803.51 76.00 L803.09 76.00 L802.67 76.00 L802.25 76.00 L801.83 76.00 L801.40 76.00 L800.98 76.00 L800.56 76.00 L800.14 76.00 L799.72 76.00 L799.30 76.00 L798.88 76.00 L798.46 76.00 L798.03 76.00 L797.61 76.00 L797.19 76.00 L796.77 76.00 L796.35 76.00 L795.93 76.00 L795.51 76.00 L795.09 76.00 L794.66 76.00 L794.24 76.00 L793.82 76.00 L793.40 76.00 L792.98 76.00 L792.56 76.00 L792.14 76.00 L791.72 76.00 L791.29 76.00 L790.87 76.00 L790.45 76.00 L790.03 76.00 L789.61 76.00 L789.19 76.00 L788.77 76.00 L788.35 76.00 L787.92 76.00 L787.50 76.00 L787.08 76.00 L786.66 76.00 L786.24 76.00 L785.82 76.00 L785.40 76.00 L784.98 76.00 L784.55 76.00 L784.13 76.00 L783.71 76.00 L783.29 76.00 L782.87 76.00 L782.45 76.00 L782.03 76.00 L781.61 76.00 L781.18 76.00 L780.76 76.00 L780.34 76.00 L779.92 76.00 L779.50 76.00 L779.08 76.00 L778.66 76.00 L778.24 76.00 L777.82 76.00 L777.39 76.00 L776.97 76.00 L776.55 76.00 L776.13 76.00 L775.71 76.00 L775.29 76.00 L774.87 76.00 L774.45 76.00 L774.02 76.00 L773.60 76.00 L773.18 76.00 L772.76 76.00 L772.34 76.00 L771.92 76.00 L771.50 76.00 L771.08 76.00 L770.65 76.00 L770.23 76.00 L769.81 76.00 L769.39 76.00 L768.97 76.00 L768.55 76.00 L768.13 76.00 L767.71 76.00 L767.28 76.00 L766.86 76.00 L766.44 76.00 L766.02 76.00 L765.60 76.00 L765.18 76.00 L764.76 76.00 L764.34 76.00 L763.91 76.00 L763.49 76.00 L763.07 76.00 L762.65 76.00 L762.23 76.00 L761.81 76.00 L761.39 76.00 L760.97 76.00 L760.54 76.00 L760.12 76.00 L759.70 76.00 L759.28 76.00 L758.86 76.00 L758.44 76.00 L758.02 76.00 L757.60 76.00 L757.17 76.00 L756.75 76.00 L756.33 76.00 L755.91 76.00 L755.49 76.00 L755.07 76.00 L754.65 76.00 L754.23 76.00 L753.80 76.00 L753.38 76.00 L752.96 76.00 L752.54 76.00 L752.12 76.00 L751.70 76.00 L751.28 76.00 L750.86 76.00"/>
<path d="M1054.14 76.00 L1053.72 76.00 L1053.30 76.00 L1052.88 76.00 L1052.46 76.00 L1052.04 76.00 L1051.62 76.00 L1051.20 76.00 L1050.77 76.00 L1050.35 76.00 L1049.93 76.00 L1049.51 76.00 L1049.09 76.00 L1048.67 76.00 L1048.25 76.00 L1047.83 76.00 L1047.40 76.00 L1046.98 76.00 L1046.56 76.00 L1046.14 76.00 L1045.72 76.00 L1045.30 76.00 L1044.88 76.00 L1044.46 76.00 L1044.03 76.00 L1043.61 76.00 L1043.19 76.00 L1042.77 76.00 L1042.35 76.00 L1041.93 76.00 L1041.51 76.00 L1041.09 76.00 L1040.66 76.00 L1040.24 76.00 L1039.82 76.00 L1039.40 76.00 L1038.98 76.00 L1038.56 76.00 L1038.14 76.00 L1037.72 76.00 L1037.29 76.00 L1036.87 76.00 L1036.45 76.00 L1036.03 76.00 L1035.61 76.00 L1035.19 76.00 L1034.77 76.00 L1034.35 76.00 L1033.92 76.00 L1033.50 76.00 L1033.08 76.00 L1032.66 76.00 L1032.24 76.00 L1031.82 76.00 L1031.40 76.00 L1030.98 76.00 L1030.55 76.00 L1030.13 76.00 L1029.71 76.00 L1029.29 76.00 L1028.87 76.00 L1028.45 76.00 L1028.03 76.00 L1027.61 76.00 L1027.18 76.00 L1026.76 76.00 L1026.34 76.00 L1025.92 76.00 L1025.50 76.00 L1025.08 76.00 L1024.66 76.00 L1024.24 76.00 L1023.82 76.00 L1023.39 76.00 L1022.97 76.00 L1022.55 76.00 L1022.13 76.00 L1021.71 76.00 L1021.29 76.00 L1020.87 76.00 L1020.45 76.00 L1020.02 76.00 L1019.60 76.00 L1019.18 76.00 L1018.76 76.00 L1018.34 76.00 L1017.92 76.00 L1017.50 76.00 L1017.08 76.00 L1016.65 76.00 L1016.23 76.00 L1015.81 76.00 L1015.39 76.00 L1014.97 76.00 L1014.55 76.00 L1014.13 76.00 L1013.71 76.00 L1013.28 76.00 L1012.86 76.00 L1012.44 76.00 L1012.02 76.00 L1011.60 76.00 L1011.18 76.00 L1010.76 76.00 L1010.34 76.00 L1009.91 76.00 L1009.49 76.00 L1009.07 76.00 L1008.65 76.00 L1008.23 76.00 L1007.81 76.00 L1007.39 76.00 L1006.97 76.00 L1006.54 76.00 L1006.12 76.00 L1005.70 76.00 L1005.28 76.00 L1004.86 76.00 L1004.44 76.00 L1004.02 76.00 L1003.60 76.00 L1003.17 76.00 L1002.75 76.00 L1002.33 76.00 L1001.91 76.00 L1001.49 76.00 L1001.07 76.00 L1000.65 76.00 L1000.23 76.00 L999.80 76.00 L999.38 76.00 L998.96 76.00 L998.54 76.00 L998.12 76.00 L997.70 76.00 L997.28 76.00 L996.86 76.00 L996.43 76.00 L996.01 76.00 L995.59 76.00 L995.17 76.00 L994.75 76.00 L994.33 76.00 L993.91 76.00 L993.49 76.00 L993.07 76.00 L992.64 76.00 L992.22 76.00 L991.80 76.00 L991.38 76.00 L990.96 76.00 L990.54 76.00 L990.12 76.00 L989.70 76.00 L989.27 76.00 L988.85 76.00 L988.43 76.00 L988.01 76.00 L987.59 76.00 L987.17 76.00 L986.75 76.00 L986.33 76.00 L985.90 76.00 L985.48 76.00 L985.06 76.00 L984.64 76.00 L984.22 76.00 L983.80 76.00 L983.38 76.00 L982.96 76.00 L982.53 76.00 L982.11 76.00 L981.69 76.00 L981.27 76.00 L980.85 76.00 L980.43 76.00 L980.01 76.00 L979.59 76.00 L979.16 76.00 L978.74 76.00 L978.32 76.00 L977.90 76.00 L977.48 76.00 L977.06 76.00 L976.64 76.00 L976.22 76.00 L975.79 76.00 L975.37 76.00 L974.95 76.00 L974.53 76.00 L974.11 76.00 L973.69 76.00 L973.27 76.00 L972.85 76.00 L972.42 76.00 L972.00 76.00 L971.58 76.00 L971.16 76.00 L970.74 76.00 L970.32 76.00 L969.90 76.00 L969.48 76.00 L969.05 76.00 L968.63 76.00 L968.21 76.00 L967.79 76.00 L967.37 76.00 L966.95 76.00 L966.53 76.00 L966.11 76.00 L965.68 76.00 L965.26 76.00 L964.84 76.00 L964.42 76.00 L964.00 76.00 L963.58 76.00 L963.16 76.00 L962.74 76.00 L962.32 76.00 L961.89 76.00 L961.47 76.00 L961.05 76.00 L960.63 76.00 L960.21 76.00 L959.79 76.00 L959.37 76.00 L958.95 76.00 L958.52 76.00 L958.10 76.00 L957.68 76.00 L957.26 76.00 L956.84 76.00 L956.42 76.00 L956.00 76.00 L955.58 76.00 L955.15 76.00 L954.73 76.00 L954.31 76.00 L953.89 76.00 L953.47 76.00 L953.05 76.00 L952.63 76.00 L952.21 76.00 L951.78 76.00 L951.36 76.00 L950.94 76.00 L950.52 76.00 L950.10 76.00 L949.68 76.00 L949.26 76.00 L948.84 76.00 L948.41 76.00 L947.99 76.00 L947.57 76.00 L947.15 76.00 L946.73 76.00 L946.31 76.00 L945.89 76.00 L945.47 76.00 L945.04 76.00 L944.62 76.00 L944.20 76.00 L943.78 76.00 L943.36 76.00 L942.94 76.00 L942.52 76.00 L942.10 76.00 L941.67 76.00 L941.25 76.00 L940.83 76.00 L940.41 76.00 L939.99 76.00 L939.57 76.00 L939.15 76.00 L938.73 76.00 L938.30 76.00 L937.88 76.00 L937.46 76.00 L937.04 76.00 L936.62 76.00 L936.20 76.00 L935.78 76.00 L935.36 76.00 L934.93 76.00 L934.51 76.00 L934.09 76.00 L933.67 76.00 L933.25 76.00 L932.83 76.00 L932.41 76.00 L931.99 76.00 L931.57 76.00 L931.14 76.00 L930.72 76.00 L930.30 76.00 L929.88 76.00 L929.46 76.00 L929.04 76.00 L928.62 76.00 L928.20 76.00 L927.77 76.00 L927.35 76.00 L926.93 76.00 L926.51 76.00 L926.09 76.00 L925.67 76.00 L925.25 76.00 L924.83 76.00 L924.40 76.00 L923.98 76.00 L923.56 76.00 L923.14 76.00 L922.72 76.00 L922.30 76.00 L921.88 76.00 L921.46 76.00 L921.03 76.00 L920.61 76.00 L920.19 76.00 L919.77 76.00 L919.35 76.00 L918.93 76.00 L918.51 76.00 L918.09 76.00 L917.66 76.00 L917.24 76.00 L916.82 76.00 L916.40 76.00 L915.98 76.00 L915.56 76.00 L915.14 76.00 L914.72 76.00 L914.29 76.00 L913.87 76.00 L913.45 76.00 L913.03 76.00 L912.61 76.00 L912.19 76.00 L911.77 76.00 L911.35 76.00 L910.92 76.00 L910.50 76.00 L910.08 76.00 L909.66 76.00 L909.24 76.00 L908.82 76.00 L908.40 76.00 L907.98 76.00 L907.55 76.00 L907.13 76.00 L906.71 76.00 L906.29 76.00 L905.87 76.00 L905.45 76.00 L905.03 76.00 L904.61 76.00 L904.18 76.00 L903.76 76.00 L903.34 76.00 L902.92 76.00 L902.50 76.00"/>
</g></g>
<g fill="none" stroke="#8a8a8a" stroke-width="1.39" stroke-dasharray="1.39 2.29" opacity="0.5">
<path d="M445.00 260.00 L500.00 258.30 L575.00 264.20 L616.70 273.30 L666.70 288.30 L691.00 297.00"/>
<path d="M668.90 417.00 L713.30 366.70 L755.00 321.70 L775.00 303.30 L790.00 288.30 L806.00 276.00 L824.00 265.50"/>
<path d="M858.40 327.80 L902.10 288.90 L947.40 252.20 L986.00 222.80 L1050.00 189.40 L1083.00 184.40 L1122.00 186.00 L1158.00 191.70"/>
<path d="M664.60 403.30 L760.00 360.80 L805.00 339.20 L840.00 320.00 L870.00 303.50 L902.10 287.10"/>
<path d="M963.00 300.50 L970.60 240.00 L972.20 220.00 L968.00 150.00 L962.20 86.70"/>
<path d="M475.90 183.40 L587.80 143.30 L672.20 118.00 L746.10 103.60 L769.30 103.20 L786.20 113.80 L796.80 172.90 L807.30 220.00 L830.00 297.50 L845.90 336.60"/>
</g>
<g fill="none" stroke="#8a8a8a" stroke-width="1.4">
<path d="M691.00 297.00 L698.00 298.40"/>
<path d="M824.00 265.50 L832.20 259.70"/>
<path d="M837.30 346.40 L858.40 327.80"/>
<path d="M902.10 287.10 L911.30 282.80"/>
<path d="M958.40 321.30 L963.00 300.50"/>
<path d="M845.90 336.60 L851.40 346.40"/>
</g>
<path d="M514.2 289.2 L540 285.2 L570 281.3 L596.3 278.3" fill="none" stroke="#52c569" stroke-width="1.39"/>
<path d="M596.3 278.3 L640 276.5 L700 276.3 L740 279 L780 284.4 L790 286.4" fill="none" stroke="#52c569" stroke-width="1.39" stroke-dasharray="1.39 2.29"/>
<path d="M617.9 321.5 L619.1 328.2" fill="none" stroke="#2ab884" stroke-width="1.39"/>
<path d="M618.0 321.7 L618.1 300 L620.2 285 L622.5 276 L624 272.5" fill="none" stroke="#2ab884" stroke-width="1.39" stroke-dasharray="1.39 2.29"/>
<circle cx="514.2" cy="289.2" r="1.2" fill="#ff5a30"/>
<circle cx="619.2" cy="328.3" r="1.2" fill="#ff5a30"/>
<ellipse cx="626.6" cy="270.5" rx="30.2" ry="19.1" transform="rotate(-40.3 626.6 270.5)" fill="none" stroke="#2ab884" stroke-width="2.1"/>
<ellipse cx="789.7" cy="287.0" rx="25.9" ry="22.4" transform="rotate(-43.4 789.7 287.0)" fill="none" stroke="#52c569" stroke-width="2.1"/>
<g font-family="Liberation Sans, sans-serif">
<path d="M621.3 272.5 h6 M624.3 269.5 v6" stroke="#ff0000" stroke-width="1.3" fill="none"/>
<text x="0" y="0" transform="translate(616.54 273.2) scale(0.9348 1)" font-size="11.76" fill="#fff" >ORI</text>
<text x="0" y="0" transform="translate(779.72 290.2) scale(0.9229 1)" font-size="11.55" fill="#fff" >STA</text>
<path d="M787.2 286.6 h6 M790.2 283.6 v6" stroke="#ff0000" stroke-width="1.3" fill="none"/>
</g>
<g font-family="Liberation Sans, sans-serif">
<text x="0" y="0" transform="translate(301.19 329.9) scale(1.0098 1)" font-size="11.34" fill="#8a8a8a" >+180</text><circle cx="331.33" cy="322.3" r="0.85" fill="none" stroke="#8a8a8a" stroke-width="0.75"/>
<text x="0" y="0" transform="translate(398.84 329.9) scale(1.0098 1)" font-size="11.34" fill="#8a8a8a" >+150</text><circle cx="428.98" cy="322.3" r="0.85" fill="none" stroke="#8a8a8a" stroke-width="0.75"/>
<text x="0" y="0" transform="translate(496.5 329.9) scale(1.0098 1)" font-size="11.34" fill="#8a8a8a" >+120</text><circle cx="526.64" cy="322.3" r="0.85" fill="none" stroke="#8a8a8a" stroke-width="0.75"/>
<text x="0" y="0" transform="translate(597.2 329.9) scale(1.0231 1)" font-size="11.34" fill="#8a8a8a" >+90</text><circle cx="621.23" cy="322.3" r="0.85" fill="none" stroke="#8a8a8a" stroke-width="0.75"/>
<text x="0" y="0" transform="translate(694.85 329.9) scale(1.0231 1)" font-size="11.34" fill="#8a8a8a" >+60</text><circle cx="718.88" cy="322.3" r="0.85" fill="none" stroke="#8a8a8a" stroke-width="0.75"/>
<text x="0" y="0" transform="translate(792.5 329.9) scale(1.0231 1)" font-size="11.34" fill="#8a8a8a" >+30</text><circle cx="816.53" cy="322.3" r="0.85" fill="none" stroke="#8a8a8a" stroke-width="0.75"/>
<text x="0" y="0" transform="translate(893.2 329.9) scale(1.0506 1)" font-size="11.34" fill="#8a8a8a" >+0</text><circle cx="911.12" cy="322.3" r="0.85" fill="none" stroke="#8a8a8a" stroke-width="0.75"/>
<text x="0" y="0" transform="translate(984.75 329.9) scale(1.0098 1)" font-size="11.34" fill="#8a8a8a" >+330</text><circle cx="1014.89" cy="322.3" r="0.85" fill="none" stroke="#8a8a8a" stroke-width="0.75"/>
<text x="0" y="0" transform="translate(1082.4 329.9) scale(1.0098 1)" font-size="11.34" fill="#8a8a8a" >+300</text><circle cx="1112.54" cy="322.3" r="0.85" fill="none" stroke="#8a8a8a" stroke-width="0.75"/>
<text x="0" y="0" transform="translate(1180.05 329.9) scale(1.0098 1)" font-size="11.34" fill="#8a8a8a" >+270</text><circle cx="1210.19" cy="322.3" r="0.85" fill="none" stroke="#8a8a8a" stroke-width="0.75"/>
<text x="0" y="0" transform="translate(1277.71 329.9) scale(1.0098 1)" font-size="11.34" fill="#8a8a8a" >+240</text><circle cx="1307.84" cy="322.3" r="0.85" fill="none" stroke="#8a8a8a" stroke-width="0.75"/>
<text x="0" y="0" transform="translate(1375.36 329.9) scale(1.0098 1)" font-size="11.34" fill="#8a8a8a" >+210</text><circle cx="1405.5" cy="322.3" r="0.85" fill="none" stroke="#8a8a8a" stroke-width="0.75"/>
<text x="0" y="0" transform="translate(1473.01 329.9) scale(1.0098 1)" font-size="11.34" fill="#8a8a8a" >+180</text><circle cx="1503.15" cy="322.3" r="0.85" fill="none" stroke="#8a8a8a" stroke-width="0.75"/>
<text x="0" y="0" transform="translate(890.16 25) scale(1.0231 1)" font-size="11.34" fill="#8a8a8a" >+90</text><circle cx="914.18" cy="17.4" r="0.85" fill="none" stroke="#8a8a8a" stroke-width="0.75"/>
<text x="0" y="0" transform="translate(890.16 123.3) scale(1.0231 1)" font-size="11.34" fill="#8a8a8a" >+60</text><circle cx="914.18" cy="115.7" r="0.85" fill="none" stroke="#8a8a8a" stroke-width="0.75"/>
<text x="0" y="0" transform="translate(890.16 222.1) scale(1.0231 1)" font-size="11.34" fill="#8a8a8a" >+30</text><circle cx="914.18" cy="214.5" r="0.85" fill="none" stroke="#8a8a8a" stroke-width="0.75"/>
<text x="0" y="0" transform="translate(890.15 428) scale(1.0234 1)" font-size="11.34" fill="#8a8a8a" >−30</text><circle cx="914.18" cy="420.4" r="0.85" fill="none" stroke="#8a8a8a" stroke-width="0.75"/>
<text x="0" y="0" transform="translate(890.15 526) scale(1.0234 1)" font-size="11.34" fill="#8a8a8a" >−60</text><circle cx="914.18" cy="518.4" r="0.85" fill="none" stroke="#8a8a8a" stroke-width="0.75"/>
<text x="0" y="0" transform="translate(890.15 624) scale(1.0234 1)" font-size="11.34" fill="#8a8a8a" >−90</text><circle cx="914.18" cy="616.4" r="0.85" fill="none" stroke="#8a8a8a" stroke-width="0.75"/>
</g>
<g font-family="Liberation Mono, monospace" fill="#fff" font-size="13.93">
<text x="0" y="0" transform="translate(316.6 29.9) scale(1 1.1)">US002M</text>
<text x="0" y="0" transform="translate(316.6 42.9) scale(1 1.1)">Beg: 20251011 05:10:35 (sol = 197.79°)</text>
<text x="0" y="0" transform="translate(316.6 56.6) scale(1 1.1)">End: 20251011 11:06:02 (sol = 198.04°)</text>
<text x="0" y="0" transform="translate(316.6 68.6) scale(1 1.1)">--------------------------------------</text>
<text x="0" y="0" transform="translate(316.6 82) scale(1 1.1)">...: 6</text>
<text x="0" y="0" transform="translate(316.6 94.8) scale(1 1.1)">ORI: 1</text>
<text x="0" y="0" transform="translate(316.6 107.7) scale(1 1.1)">STA: 1</text>
</g>
<g stroke="#ffffff" stroke-opacity="0.36" stroke-width="2.08" stroke-dasharray="2.08 3.44" fill="none">
<path d="M75 842.3 V641.5"/>
<path d="M218.8 842.3 V641.5"/>
<path d="M365 842.3 V641.5"/>
<path d="M505.8 842.3 V641.5"/>
<path d="M650.8 842.3 V641.5"/>
<path d="M797 842.3 V641.5"/>
<path d="M940 842.3 V641.5"/>
<path d="M1090.8 842.3 V641.5"/>
<path d="M1238.8 842.3 V641.5"/>
<path d="M1393.8 842.3 V641.5"/>
<path d="M1548 842.3 V641.5"/>
<path d="M1687 842.3 V641.5"/>
</g>
<g font-family="Liberation Sans, sans-serif">
<text x="0" y="0" transform="translate(150.46 696.57) rotate(-90) scale(0.8228 1)" font-size="32.21" fill="#4e4e4e">APR</text>
<text x="0" y="0" transform="translate(295.46 702.95) rotate(-90) scale(0.8488 1)" font-size="32.21" fill="#4e4e4e">MAY</text>
<text x="0" y="0" transform="translate(437.16 689.66) rotate(-90) scale(0.7943 1)" font-size="32.21" fill="#4e4e4e">JUN</text>
<text x="0" y="0" transform="translate(577.16 686.98) rotate(-90) scale(0.8001 1)" font-size="32.21" fill="#4e4e4e">JUL</text>
<text x="0" y="0" transform="translate(724.76 701.53) rotate(-90) scale(0.8536 1)" font-size="32.21" fill="#4e4e4e">AUG</text>
<text x="0" y="0" transform="translate(872.66 694.15) rotate(-90) scale(0.7895 1)" font-size="32.21" fill="#4e4e4e">SEP</text>
<text x="0" y="0" transform="translate(1017.96 700.18) rotate(-90) scale(0.8503 1)" font-size="32.21" fill="#4e4e4e">OCT</text>
<text x="0" y="0" transform="translate(1171.16 705.07) rotate(-90) scale(0.8623 1)" font-size="32.21" fill="#4e4e4e">NOV</text>
<text x="0" y="0" transform="translate(1319.66 701.47) rotate(-90) scale(0.8306 1)" font-size="32.21" fill="#4e4e4e">DEC</text>
<text x="0" y="0" transform="translate(1470.36 689.34) rotate(-90) scale(0.7959 1)" font-size="32.21" fill="#4e4e4e">JAN</text>
<text x="0" y="0" transform="translate(1629.06 696.3) rotate(-90) scale(0.8088 1)" font-size="32.21" fill="#4e4e4e">FEB</text>
<text x="0" y="0" transform="translate(1767.06 705.81) rotate(-90) scale(0.8577 1)" font-size="32.21" fill="#4e4e4e">MAR</text>
</g>
<rect x="106" y="832" width="24" height="4" fill="#c2df23"/>
<rect x="165" y="832" width="180" height="4" fill="#c2df23"/>
<rect x="365.8" y="832" width="259.2" height="4" fill="#c2df23"/>
<rect x="636" y="832" width="151" height="4" fill="#c2df23"/>
<rect x="807" y="832" width="93" height="4" fill="#c2df23"/>
<rect x="920" y="832" width="53" height="4" fill="#c2df23"/>
<rect x="984" y="832" width="81.8" height="4" fill="#c2df23"/>
<rect x="1082" y="832" width="122" height="4" fill="#c2df23"/>
<rect x="1244" y="832" width="82" height="4" fill="#c2df23"/>
<rect x="1337" y="832" width="19" height="4" fill="#c2df23"/>
<rect x="1381" y="832" width="63" height="4" fill="#c2df23"/>
<rect x="1459" y="832" width="53" height="4" fill="#c2df23"/>
<rect x="1523" y="832" width="24" height="4" fill="#c2df23"/>
<rect x="1724" y="832" width="24" height="4" fill="#c2df23"/>
<rect x="1758" y="832" width="24" height="4" fill="#c2df23"/>
<rect x="165" y="816" width="24" height="4" fill="#86d549"/>
<rect x="224" y="816" width="63" height="4" fill="#86d549"/>
<rect x="312" y="816" width="28.8" height="4" fill="#86d549"/>
<rect x="365.8" y="816" width="127.2" height="4" fill="#86d549"/>
<rect x="508" y="816" width="146" height="4" fill="#86d549"/>
<rect x="704" y="816" width="34" height="4" fill="#86d549"/>
<rect x="773" y="816" width="73" height="4" fill="#86d549"/>
<rect x="871" y="816" width="117" height="4" fill="#86d549"/>
<rect x="1003" y="816" width="14" height="4" fill="#86d549"/>
<rect x="1062" y="816" width="151" height="4" fill="#86d549"/>
<rect x="1244" y="816" width="23" height="4" fill="#86d549"/>
<rect x="1293" y="816" width="23" height="4" fill="#86d549"/>
<rect x="1342" y="816" width="23" height="4" fill="#86d549"/>
<rect x="1386" y="816" width="43" height="4" fill="#86d549"/>
<rect x="1459" y="816" width="24" height="4" fill="#86d549"/>
<rect x="1548" y="816" width="23" height="4" fill="#86d549"/>
<rect x="165" y="800" width="24" height="4" fill="#52c569"/>
<rect x="258" y="800" width="230" height="4" fill="#52c569"/>
<rect x="508" y="800" width="107" height="4" fill="#52c569"/>
<rect x="626" y="800" width="92" height="4" fill="#52c569"/>
<rect x="729" y="800" width="97" height="4" fill="#52c569"/>
<rect x="949" y="800" width="201" height="4" fill="#52c569"/>
<rect x="1160" y="800" width="88" height="4" fill="#52c569"/>
<rect x="1258" y="800" width="186" height="4" fill="#52c569"/>
<rect x="1459" y="800" width="24" height="4" fill="#52c569"/>
<rect x="1553" y="800" width="23" height="4" fill="#52c569"/>
<rect x="194" y="783" width="24" height="4" fill="#2ab07f"/>
<rect x="322" y="783" width="185" height="4" fill="#2ab07f"/>
<rect x="518" y="783" width="24" height="4" fill="#2ab07f"/>
<rect x="557" y="783" width="127" height="4" fill="#2ab07f"/>
<rect x="807" y="783" width="24" height="4" fill="#2ab07f"/>
<rect x="954" y="783" width="19" height="4" fill="#2ab07f"/>
<rect x="989" y="783" width="136" height="4" fill="#2ab07f"/>
<rect x="1155" y="783" width="63" height="4" fill="#2ab07f"/>
<rect x="1244" y="783" width="23" height="4" fill="#2ab07f"/>
<rect x="1317" y="783" width="24" height="4" fill="#2ab07f"/>
<rect x="1396" y="783" width="23" height="4" fill="#2ab07f"/>
<rect x="1464" y="783" width="186" height="4" fill="#2ab07f"/>
<rect x="340.8" y="767" width="29.2" height="4" fill="#1e9b8a"/>
<rect x="410" y="767" width="38" height="4" fill="#1e9b8a"/>
<rect x="468.8" y="767" width="24.2" height="4" fill="#1e9b8a"/>
<rect x="528" y="767" width="18" height="4" fill="#1e9b8a"/>
<rect x="562" y="767" width="29" height="4" fill="#1e9b8a"/>
<rect x="616" y="767" width="33" height="4" fill="#1e9b8a"/>
<rect x="959" y="767" width="29" height="4" fill="#1e9b8a"/>
<rect x="1062" y="767" width="24" height="4" fill="#1e9b8a"/>
<rect x="1101" y="767" width="24" height="4" fill="#1e9b8a"/>
<rect x="1160" y="767" width="34" height="4" fill="#1e9b8a"/>
<rect x="1249" y="767" width="23" height="4" fill="#1e9b8a"/>
<rect x="1425" y="767" width="87" height="4" fill="#1e9b8a"/>
<rect x="420" y="750" width="24" height="4" fill="#25858e"/>
<rect x="533" y="750" width="23" height="4" fill="#25858e"/>
<rect x="567" y="750" width="24" height="4" fill="#25858e"/>
<rect x="621" y="750" width="122" height="4" fill="#25858e"/>
<rect x="969" y="750" width="166" height="4" fill="#25858e"/>
<rect x="1185" y="750" width="161" height="4" fill="#25858e"/>
<rect x="1469" y="750" width="24" height="4" fill="#25858e"/>
<rect x="430" y="734" width="23" height="4" fill="#2d708e"/>
<rect x="577" y="734" width="156" height="4" fill="#2d708e"/>
<rect x="994" y="734" width="111" height="4" fill="#2d708e"/>
<rect x="1116" y="734" width="107" height="4" fill="#2d708e"/>
<rect x="1263" y="734" width="29" height="4" fill="#2d708e"/>
<rect x="1489" y="734" width="23" height="4" fill="#2d708e"/>
<rect x="592" y="718" width="23" height="4" fill="#38588c"/>
<rect x="655" y="718" width="117" height="4" fill="#38588c"/>
<rect x="1072" y="718" width="171" height="4" fill="#38588c"/>
<rect x="1263" y="718" width="24" height="4" fill="#38588c"/>
<rect x="596" y="701" width="137" height="4" fill="#433e85"/>
<rect x="1092" y="701" width="28" height="4" fill="#433e85"/>
<rect x="1200" y="701" width="23" height="4" fill="#433e85"/>
<rect x="1273" y="701" width="53" height="4" fill="#433e85"/>
<rect x="1111" y="685" width="24" height="4" fill="#482173"/>
<path d="M990.8 842.3 V641.5" stroke="#ff0000" stroke-width="1.9" stroke-dasharray="5.14 2.22" fill="none"/>
<g font-family="Liberation Sans, sans-serif">
<text x="0" y="0" transform="translate(107.79 831.9) scale(0.8855 1)" font-size="11.55" fill="#fff" >KSE</text>
<text x="0" y="0" transform="translate(244.99 831.9) scale(0.9232 1)" font-size="11.55" fill="#fff" >ETA</text>
<text x="0" y="0" transform="translate(484.03 831.9) scale(0.9652 1)" font-size="11.55" fill="#fff" >NZC</text>
<text x="0" y="0" transform="translate(699.32 831.9) scale(0.9756 1)" font-size="11.55" fill="#fff" >NDA</text>
<text x="0" y="0" transform="translate(843.41 831.9) scale(0.8585 1)" font-size="11.55" fill="#fff" >SPE</text>
<text x="0" y="0" transform="translate(934.82 831.9) scale(0.9531 1)" font-size="11.55" fill="#fff" >ARD</text>
<text x="0" y="0" transform="translate(1014.01 831.9) scale(0.8913 1)" font-size="11.55" fill="#fff" >EGE</text>
<text x="0" y="0" transform="translate(1131.58 831.9) scale(0.9539 1)" font-size="11.55" fill="#fff" >NTA</text>
<text x="0" y="0" transform="translate(1271.8 831.9) scale(0.9578 1)" font-size="11.55" fill="#fff" >MON</text>
<text x="0" y="0" transform="translate(1332.43 831.9) scale(0.9108 1)" font-size="11.55" fill="#fff" >URS</text>
<text x="0" y="0" transform="translate(1401.06 831.9) scale(0.9478 1)" font-size="11.55" fill="#fff" >AHY</text>
<text x="0" y="0" transform="translate(1472.83 831.9) scale(0.9502 1)" font-size="11.55" fill="#fff" >GUM</text>
<text x="0" y="0" transform="translate(1523.08 831.9) scale(0.9429 1)" font-size="11.55" fill="#fff" >OHY</text>
<text x="0" y="0" transform="translate(1724.49 831.9) scale(0.9364 1)" font-size="11.55" fill="#fff" >XHE</text>
<text x="0" y="0" transform="translate(1761.4 831.9) scale(0.9287 1)" font-size="11.55" fill="#fff" >EVI</text>
<text x="0" y="0" transform="translate(165.73 815.46) scale(0.9580 1)" font-size="11.55" fill="#fff" >AVB</text>
<text x="0" y="0" transform="translate(245.7 815.46) scale(0.9002 1)" font-size="11.55" fill="#fff" >ELY</text>
<text x="0" y="0" transform="translate(311.74 815.46) scale(0.9446 1)" font-size="11.55" fill="#fff" >CAM</text>
<text x="0" y="0" transform="translate(420.87 815.46) scale(0.8986 1)" font-size="11.55" fill="#fff" >SSG</text>
<text x="0" y="0" transform="translate(568.22 815.46) scale(0.8991 1)" font-size="11.55" fill="#fff" >PCA</text>
<text x="0" y="0" transform="translate(709.13 815.46) scale(0.9701 1)" font-size="11.55" fill="#fff" >AUD</text>
<text x="0" y="0" transform="translate(797.77 815.46) scale(0.9489 1)" font-size="11.55" fill="#fff" >AUR</text>
<text x="0" y="0" transform="translate(920.54 815.46) scale(0.9473 1)" font-size="11.55" fill="#fff" >DSX</text>
<text x="0" y="0" transform="translate(998.21 815.46) scale(0.9332 1)" font-size="11.55" fill="#fff" >OCU</text>
<text x="0" y="0" transform="translate(1126.23 815.46) scale(0.9235 1)" font-size="11.55" fill="#fff" >OER</text>
<text x="0" y="0" transform="translate(1243.47 815.46) scale(0.9710 1)" font-size="11.55" fill="#fff" >DKD</text>
<text x="0" y="0" transform="translate(1293.09 815.46) scale(0.9498 1)" font-size="11.55" fill="#fff" >DSV</text>
<text x="0" y="0" transform="translate(1343.3 815.46) scale(0.9336 1)" font-size="11.55" fill="#fff" >ALY</text>
<text x="0" y="0" transform="translate(1398.45 815.46) scale(0.8344 1)" font-size="11.55" fill="#fff" >JLE</text>
<text x="0" y="0" transform="translate(1460.16 815.46) scale(0.8894 1)" font-size="11.55" fill="#fff" >SCC</text>
<text x="0" y="0" transform="translate(1549.12 815.46) scale(0.9063 1)" font-size="11.55" fill="#fff" >FEV</text>
<text x="0" y="0" transform="translate(166.93 799.02) scale(0.9017 1)" font-size="11.55" fill="#fff" >LYR</text>
<text x="0" y="0" transform="translate(362.1 799.02) scale(0.8740 1)" font-size="11.55" fill="#fff" >JMC</text>
<text x="0" y="0" transform="translate(550.17 799.02) scale(0.8067 1)" font-size="11.55" fill="#fff" >JPE</text>
<text x="0" y="0" transform="translate(661.16 799.02) scale(0.9124 1)" font-size="11.55" fill="#fff" >PAU</text>
<text x="0" y="0" transform="translate(765.64 799.02) scale(0.9662 1)" font-size="11.55" fill="#fff" >NIA</text>
<text x="0" y="0" transform="translate(1039.13 799.02) scale(0.9229 1)" font-size="11.55" fill="#fff" >STA</text>
<text x="0" y="0" transform="translate(1193.78 799.02) scale(0.9526 1)" font-size="11.55" fill="#fff" >NOO</text>
<text x="0" y="0" transform="translate(1340.59 799.02) scale(0.9412 1)" font-size="11.55" fill="#fff" >COM</text>
<text x="0" y="0" transform="translate(1459.49 799.02) scale(0.9188 1)" font-size="11.55" fill="#fff" >NCC</text>
<text x="0" y="0" transform="translate(1553.54 799.02) scale(0.9184 1)" font-size="11.55" fill="#fff" >FED</text>
<text x="0" y="0" transform="translate(196.99 782.58) scale(0.9703 1)" font-size="11.55" fill="#fff" >HVI</text>
<text x="0" y="0" transform="translate(403.1 782.58) scale(0.9408 1)" font-size="11.55" fill="#fff" >ARI</text>
<text x="0" y="0" transform="translate(519.03 782.58) scale(0.9346 1)" font-size="11.55" fill="#fff" >SZC</text>
<text x="0" y="0" transform="translate(607.29 782.58) scale(0.9159 1)" font-size="11.55" fill="#fff" >CAP</text>
<text x="0" y="0" transform="translate(807.7 782.58) scale(0.9264 1)" font-size="11.55" fill="#fff" >NUE</text>
<text x="0" y="0" transform="translate(949.84 782.58) scale(0.9449 1)" font-size="11.55" fill="#fff" >OCT</text>
<text x="0" y="0" transform="translate(1049.63 782.58) scale(0.9348 1)" font-size="11.55" fill="#fff" >ORI</text>
<text x="0" y="0" transform="translate(1174.01 782.58) scale(0.9615 1)" font-size="11.55" fill="#fff" >AMO</text>
<text x="0" y="0" transform="translate(1244.21 782.58) scale(0.9095 1)" font-size="11.55" fill="#fff" >DPC</text>
<text x="0" y="0" transform="translate(1319.82 782.58) scale(0.9684 1)" font-size="11.55" fill="#fff" >XVI</text>
<text x="0" y="0" transform="translate(1395.33 782.58) scale(0.9531 1)" font-size="11.55" fill="#fff" >QUA</text>
<text x="0" y="0" transform="translate(1547.74 782.58) scale(0.9617 1)" font-size="11.55" fill="#fff" >AAN</text>
<text x="0" y="0" transform="translate(341.89 766.14) scale(0.9715 1)" font-size="11.55" fill="#fff" >TAH</text>
<text x="0" y="0" transform="translate(422.26 766.14) scale(0.8595 1)" font-size="11.55" fill="#fff" >JEA</text>
<text x="0" y="0" transform="translate(473.57 766.14) scale(0.8299 1)" font-size="11.55" fill="#fff" >JIP</text>
<text x="0" y="0" transform="translate(529.84 766.14) scale(0.8500 1)" font-size="11.55" fill="#fff" >PPS</text>
<text x="0" y="0" transform="translate(567.97 766.14) scale(0.9414 1)" font-size="11.55" fill="#fff" >ZCS</text>
<text x="0" y="0" transform="translate(620.59 766.14) scale(0.9568 1)" font-size="11.55" fill="#fff" >GDR</text>
<text x="0" y="0" transform="translate(959.43 766.14) scale(0.9508 1)" font-size="11.55" fill="#fff" >DRA</text>
<text x="0" y="0" transform="translate(1062.36 766.14) scale(0.9480 1)" font-size="11.55" fill="#fff" >LUM</text>
<text x="0" y="0" transform="translate(1102.3 766.14) scale(0.8918 1)" font-size="11.55" fill="#fff" >RPU</text>
<text x="0" y="0" transform="translate(1165.42 766.14) scale(0.9752 1)" font-size="11.55" fill="#fff" >THA</text>
<text x="0" y="0" transform="translate(1249.69 766.14) scale(0.8879 1)" font-size="11.55" fill="#fff" >PSU</text>
<text x="0" y="0" transform="translate(1459.78 766.14) scale(0.9379 1)" font-size="11.55" fill="#fff" >XCB</text>
<text x="0" y="0" transform="translate(421.85 749.7) scale(0.8414 1)" font-size="11.55" fill="#fff" >JRC</text>
<text x="0" y="0" transform="translate(532.96 749.7) scale(0.9424 1)" font-size="11.55" fill="#fff" >CAN</text>
<text x="0" y="0" transform="translate(568.07 749.7) scale(0.9307 1)" font-size="11.55" fill="#fff" >FAN</text>
<text x="0" y="0" transform="translate(671.48 749.7) scale(0.8826 1)" font-size="11.55" fill="#fff" >PER</text>
<text x="0" y="0" transform="translate(1038.61 749.7) scale(0.9348 1)" font-size="11.55" fill="#fff" >CTA</text>
<text x="0" y="0" transform="translate(1253.65 749.7) scale(0.9410 1)" font-size="11.55" fill="#fff" >HYD</text>
<text x="0" y="0" transform="translate(1468.43 749.7) scale(0.9592 1)" font-size="11.55" fill="#fff" >XUM</text>
<text x="0" y="0" transform="translate(429.75 733.26) scale(0.9305 1)" font-size="11.55" fill="#fff" >COR</text>
<text x="0" y="0" transform="translate(646.09 733.26) scale(0.9465 1)" font-size="11.55" fill="#fff" >SDA</text>
<text x="0" y="0" transform="translate(1040.22 733.26) scale(0.9601 1)" font-size="11.55" fill="#fff" >LMI</text>
<text x="0" y="0" transform="translate(1156.48 733.26) scale(0.9189 1)" font-size="11.55" fill="#fff" >LEO</text>
<text x="0" y="0" transform="translate(1264.23 733.26) scale(0.9178 1)" font-size="11.55" fill="#fff" >EHY</text>
<text x="0" y="0" transform="translate(1489.61 733.26) scale(0.9140 1)" font-size="11.55" fill="#fff" >ECV</text>
<text x="0" y="0" transform="translate(593.54 716.82) scale(0.8872 1)" font-size="11.55" fill="#fff" >JXA</text>
<text x="0" y="0" transform="translate(704.68 716.82) scale(0.9149 1)" font-size="11.55" fill="#fff" >KCG</text>
<text x="0" y="0" transform="translate(1145.31 716.82) scale(0.9775 1)" font-size="11.55" fill="#fff" >AND</text>
<text x="0" y="0" transform="translate(1262.91 716.82) scale(0.9845 1)" font-size="11.55" fill="#fff" >DAD</text>
<text x="0" y="0" transform="translate(658.44 700.38) scale(0.9012 1)" font-size="11.55" fill="#fff" >ERI</text>
<text x="0" y="0" transform="translate(1097.77 700.38) scale(0.9360 1)" font-size="11.55" fill="#fff" >SLD</text>
<text x="0" y="0" transform="translate(1199.75 700.38) scale(0.9124 1)" font-size="11.55" fill="#fff" >ORS</text>
<text x="0" y="0" transform="translate(1287.11 700.38) scale(0.9307 1)" font-size="11.55" fill="#fff" >GEM</text>
<text x="0" y="0" transform="translate(1110.85 683.94) scale(0.9422 1)" font-size="11.55" fill="#fff" >KUM</text>
</g>
<g stroke="#fff" stroke-width="2" fill="none">
<path d="M114 834 h8 M118 830 v8"/>
<path d="M241 834 h8 M245 830 v8"/>
<path d="M510.7 834 h8 M514.7 830 v8"/>
<path d="M706.8 834 h8 M710.8 830 v8"/>
<path d="M833.7 834 h8 M837.7 830 v8"/>
<path d="M962 834 h8 M966 830 v8"/>
<path d="M986.8 834 h8 M990.8 830 v8"/>
<path d="M1116.8 834 h8 M1120.8 830 v8"/>
<path d="M1295.7 834 h8 M1299.7 830 v8"/>
<path d="M1341.8 834 h8 M1345.8 830 v8"/>
<path d="M1412.7 834 h8 M1416.7 830 v8"/>
<path d="M1481.8 834 h8 M1485.8 830 v8"/>
<path d="M1530.7 834 h8 M1534.7 830 v8"/>
<path d="M1731.8 834 h8 M1735.8 830 v8"/>
<path d="M1766 834 h8 M1770 830 v8"/>
<path d="M172.7 818 h8 M176.7 814 v8"/>
<path d="M255.7 818 h8 M259.7 814 v8"/>
<path d="M323.8 818 h8 M327.8 814 v8"/>
<path d="M437.7 818 h8 M441.7 814 v8"/>
<path d="M598.8 818 h8 M602.8 814 v8"/>
<path d="M716.8 818 h8 M720.8 814 v8"/>
<path d="M793.7 818 h8 M797.7 814 v8"/>
<path d="M939.7 818 h8 M943.7 814 v8"/>
<path d="M1006 818 h8 M1010 814 v8"/>
<path d="M1153 818 h8 M1157 814 v8"/>
<path d="M1251 818 h8 M1255 814 v8"/>
<path d="M1299.7 818 h8 M1303.7 814 v8"/>
<path d="M1349.8 818 h8 M1353.8 814 v8"/>
<path d="M1402.7 818 h8 M1406.7 814 v8"/>
<path d="M1466.8 818 h8 M1470.8 814 v8"/>
<path d="M1554.8 818 h8 M1558.8 814 v8"/>
<path d="M174.7 802 h8 M178.7 798 v8"/>
<path d="M378.8 802 h8 M382.8 798 v8"/>
<path d="M544.8 802 h8 M548.8 798 v8"/>
<path d="M682.7 802 h8 M686.7 798 v8"/>
<path d="M741.8 802 h8 M745.8 798 v8"/>
<path d="M1074.7 802 h8 M1078.7 798 v8"/>
<path d="M1216.8 802 h8 M1220.8 798 v8"/>
<path d="M1304.7 802 h8 M1308.7 798 v8"/>
<path d="M1466.8 802 h8 M1470.8 798 v8"/>
<path d="M1559.8 802 h8 M1563.8 798 v8"/>
<path d="M201.8 785 h8 M205.8 781 v8"/>
<path d="M400.7 785 h8 M404.7 781 v8"/>
<path d="M525.7 785 h8 M529.7 781 v8"/>
<path d="M638.8 785 h8 M642.8 781 v8"/>
<path d="M815 785 h8 M819 781 v8"/>
<path d="M959.7 785 h8 M963.7 781 v8"/>
<path d="M1040.7 785 h8 M1044.7 781 v8"/>
<path d="M1187.7 785 h8 M1191.7 781 v8"/>
<path d="M1251 785 h8 M1255 781 v8"/>
<path d="M1325 785 h8 M1329 781 v8"/>
<path d="M1402.7 785 h8 M1406.7 781 v8"/>
<path d="M1545.7 785 h8 M1549.7 781 v8"/>
<path d="M355.7 769 h8 M359.7 765 v8"/>
<path d="M426.8 769 h8 M430.8 765 v8"/>
<path d="M476.5 769 h8 M480.5 765 v8"/>
<path d="M535.7 769 h8 M539.7 765 v8"/>
<path d="M571 769 h8 M575 765 v8"/>
<path d="M631 769 h8 M635 765 v8"/>
<path d="M973.8 769 h8 M977.8 765 v8"/>
<path d="M1069.8 769 h8 M1073.8 765 v8"/>
<path d="M1108.8 769 h8 M1112.8 765 v8"/>
<path d="M1177.8 769 h8 M1181.8 765 v8"/>
<path d="M1256 769 h8 M1260 765 v8"/>
<path d="M1466.8 769 h8 M1470.8 765 v8"/>
<path d="M427.8 752 h8 M431.8 748 v8"/>
<path d="M539.8 752 h8 M543.8 748 v8"/>
<path d="M574.8 752 h8 M578.8 748 v8"/>
<path d="M703.8 752 h8 M707.8 748 v8"/>
<path d="M1094.8 752 h8 M1098.8 748 v8"/>
<path d="M1271 752 h8 M1275 748 v8"/>
<path d="M1476.8 752 h8 M1480.8 748 v8"/>
<path d="M437.7 736 h8 M441.7 732 v8"/>
<path d="M631 736 h8 M635 732 v8"/>
<path d="M1038.8 736 h8 M1042.8 732 v8"/>
<path d="M1167.8 736 h8 M1171.8 732 v8"/>
<path d="M1274.8 736 h8 M1278.8 732 v8"/>
<path d="M1496.8 736 h8 M1500.8 732 v8"/>
<path d="M598.8 720 h8 M602.8 716 v8"/>
<path d="M726.8 720 h8 M730.8 716 v8"/>
<path d="M1187.7 720 h8 M1191.7 716 v8"/>
<path d="M1271 720 h8 M1275 716 v8"/>
<path d="M687.8 703 h8 M691.8 699 v8"/>
<path d="M1101.8 703 h8 M1105.8 699 v8"/>
<path d="M1206.8 703 h8 M1210.8 699 v8"/>
<path d="M1299.7 703 h8 M1303.7 699 v8"/>
<path d="M1118.8 687 h8 M1122.8 683 v8"/>
</g>
<rect x="20.4" y="641.5" width="1764.9" height="200.8" fill="none" stroke="#fff" stroke-width="1.39"/>
<g stroke="#fff" stroke-width="1.1">
<path d="M20 842.3 v4.9"/>
<path d="M265.1 842.3 v4.9"/>
<path d="M510.19 842.3 v4.9"/>
<path d="M755.29 842.3 v4.9"/>
<path d="M1000.39 842.3 v4.9"/>
<path d="M1245.49 842.3 v4.9"/>
<path d="M1490.58 842.3 v4.9"/>
<path d="M1735.68 842.3 v4.9"/>
</g>
<g font-family="Liberation Sans, sans-serif">
<text x="0" y="0" transform="translate(15.92 862.2) scale(0.9949 1)" font-size="14.73" fill="#fff" >0</text>
<text x="0" y="0" transform="translate(256.72 862.2) scale(1.0312 1)" font-size="14.73" fill="#fff" >50</text>
<text x="0" y="0" transform="translate(497.28 862.2) scale(1.0526 1)" font-size="14.73" fill="#fff" >100</text>
<text x="0" y="0" transform="translate(742.37 862.2) scale(1.0526 1)" font-size="14.73" fill="#fff" >150</text>
<text x="0" y="0" transform="translate(987.36 862.2) scale(1.0573 1)" font-size="14.73" fill="#fff" >200</text>
<text x="0" y="0" transform="translate(1232.46 862.2) scale(1.0573 1)" font-size="14.73" fill="#fff" >250</text>
<text x="0" y="0" transform="translate(1477.79 862.2) scale(1.0474 1)" font-size="14.73" fill="#fff" >300</text>
<text x="0" y="0" transform="translate(1722.89 862.2) scale(1.0474 1)" font-size="14.73" fill="#fff" >350</text>
<text x="0" y="0" transform="translate(828.46 882) scale(1.0706 1)" font-size="14.89" fill="#fff" >Solar longitude (deg)</text>
</g>
</svg></body></html>
